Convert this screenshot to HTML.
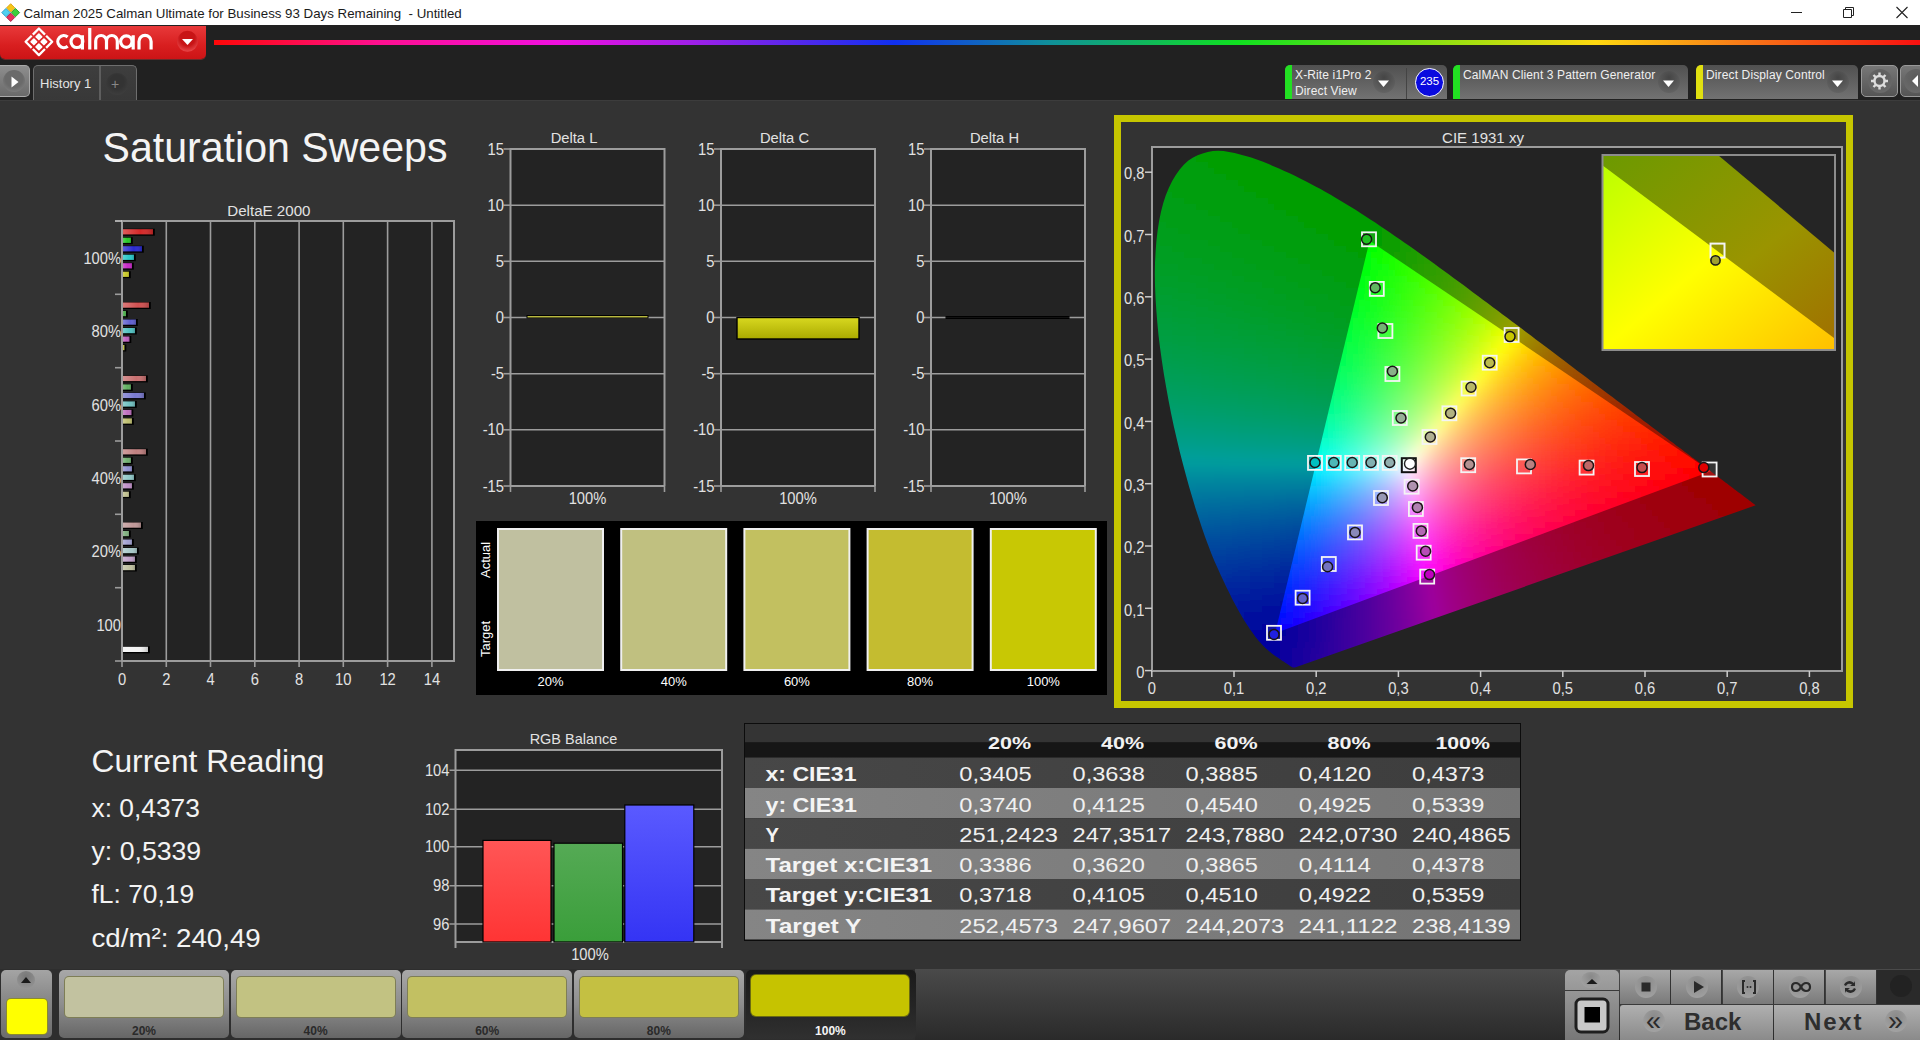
<!DOCTYPE html><html><head><meta charset="utf-8"><style>
*{margin:0;padding:0;box-sizing:border-box}
html,body{width:1920px;height:1040px;overflow:hidden;background:#333333;font-family:"Liberation Sans",sans-serif}
.a{position:absolute}
svg text{font-family:"Liberation Sans",sans-serif}
</style></head><body><div class="a" style="left:0;top:0;width:1920px;height:25px;background:#fff"></div><svg class="a" style="left:0;top:0" width="1920" height="25">
<g transform="translate(10.7,12.6) rotate(45)">
<rect x="-6.3" y="-6.3" width="5.9" height="5.9" fill="#f5c518" stroke="#d8a010" stroke-width="0.8"/>
<rect x="0.4" y="-6.3" width="5.9" height="5.9" fill="#3ccf3c" stroke="#1a9a1a" stroke-width="0.8"/>
<rect x="-6.3" y="0.4" width="5.9" height="5.9" fill="#50d0f0" stroke="#2090c0" stroke-width="0.8"/>
<rect x="0.4" y="0.4" width="5.9" height="5.9" fill="#e8305a" stroke="#a01840" stroke-width="0.8"/>
</g>
<text x="23.5" y="18" font-size="13.3" fill="#1b1b1b">Calman 2025 Calman Ultimate for Business 93 Days Remaining&#160; - Untitled</text>
<path d="M1791 12.5h11" stroke="#222" stroke-width="1"/>
<path d="M1843.5 9.5h8v8h-8z M1845.5 9.5v-2h8v8h-2" stroke="#222" stroke-width="1" fill="none"/>
<path d="M1896.5 7l11 11M1907.5 7l-11 11" stroke="#222" stroke-width="1.1"/>
</svg><div class="a" style="left:0;top:25px;width:1920px;height:75px;background:#212121"></div><div class="a" style="left:0;top:26px;width:206px;height:33px;border-radius:0 0 5px 5px;background:linear-gradient(#e8393a,#d81e1f 60%,#cc1416);box-shadow:0 1px 0 #6a2a2a"></div><svg class="a" style="left:0;top:25px" width="220" height="36"><g transform="translate(38.9,16.80) rotate(45)"><path d="M-0.80 -9.40H-9.40V-0.80 M0.80 -9.40H9.40V-0.80 M-0.80 9.40H-9.40V0.80 M0.80 9.40H9.40V0.80" fill="none" stroke="#fff" stroke-width="2.3" stroke-linejoin="round"/><rect x="-6.30" y="-6.30" width="5.50" height="5.50" rx="0.8" fill="#fff"/><rect x="-6.30" y="0.80" width="5.50" height="5.50" rx="0.8" fill="#fff"/><rect x="0.80" y="-6.30" width="5.50" height="5.50" rx="0.8" fill="#fff"/><rect x="0.80" y="0.80" width="5.50" height="5.50" rx="0.8" fill="#fff"/></g><path d="M67.66 12.00A6.00 6.00 0 1 0 67.66 21.20M76.90 16.60m-5.9 0a5.9 5.9 0 1 0 11.8 0a5.9 5.9 0 1 0 -11.8 0M82.4 10.30V24.40M89.75 3V24.40M95.7 24.40V15.90A5.4 5.4 0 0 1 106.5 15.90V24.40M106.5 15.90A5.4 5.4 0 0 1 117.3 15.90V24.40M126.30 16.60m-5.7 0a5.7 5.7 0 1 0 11.4 0a5.7 5.7 0 1 0 -11.4 0M133.2 10.30V24.40M139 24.40V16.45A6.05 6.05 0 0 1 151.1 16.45V24.40" fill="none" stroke="#fff" stroke-width="3.2"/>
<defs><radialGradient id="ddg" cx="50%" cy="35%" r="65%"><stop offset="0.55" stop-color="#c81416"/><stop offset="1" stop-color="#e8484a"/></radialGradient></defs><circle cx="187.5" cy="16.3" r="10.5" fill="url(#ddg)"/>
<path d="M182 14h11l-5.5 6z" fill="#fff"/>
</svg><div class="a" style="left:214px;top:39.5px;width:1706px;height:5px;background:linear-gradient(90deg,#ff0808 0%,#ff1090 9.7%,#f010e0 20.2%,#a020e8 28%,#1030f0 39.9%,#10909a 49%,#10e020 60%,#a0e010 73.2%,#ffd810 81%,#f88018 89%,#f81010 100%)"></div><div class="a" style="left:0;top:65px;width:30px;height:32px;border-radius:0 5px 5px 0;background:linear-gradient(#8e8e8e,#6a6a6a);border:1.5px solid #aaa;border-left:none"></div><div class="a" style="left:3px;top:70px;width:22px;height:22px;border-radius:50%;background:radial-gradient(circle at 50% 40%,#6a6a6a 50%,#8a8a8a)"></div><svg class="a" style="left:0;top:60px" width="40" height="40"><path d="M11.5 16.5v11l7-5.5z" fill="#fff"/></svg><div class="a" style="left:33px;top:65px;width:104px;height:35px;border-radius:5px 5px 0 0;background:linear-gradient(#3e3e3e,#383838);border:1.5px solid #6e6e6e;border-bottom:none"></div><div class="a" style="left:98.5px;top:66px;width:2px;height:34px;background:#5e5e5e"></div><div class="a" style="left:106px;top:73px;width:22px;height:22px;border-radius:50%;background:radial-gradient(circle at 50% 40%,#333 40%,#444)"></div><div class="a" style="left:40px;top:75.5px;font-size:13px;color:#e4e4e4">History 1</div><div class="a" style="left:111px;top:76px;font-size:14px;color:#888">+</div><div class="a" style="left:1285px;top:65px;width:162px;height:34px;border-radius:5px 5px 0 0;background:linear-gradient(#505050,#727272);overflow:hidden"><div class="a" style="left:0;top:0;width:7px;height:34px;background:#22e022;border-radius:4px 0 0 0"></div></div><div class="a" style="left:1295px;top:67.5px;font-size:12px;color:#f0f0f0;white-space:nowrap;letter-spacing:0.13px">X-Rite i1Pro 2</div><div class="a" style="left:1295px;top:84.0px;font-size:12px;color:#f0f0f0;white-space:nowrap;letter-spacing:0.13px">Direct View</div><div class="a" style="left:1373px;top:71px;width:22px;height:22px;border-radius:50%;background:radial-gradient(circle at 50% 30%,#454545,#6a6a6a)"></div><svg class="a" style="left:1374px;top:60px" width="20" height="40"><path d="M4 20.5h11l-5.5 6.5z" fill="#fff"/></svg><div class="a" style="left:1406px;top:68px;width:1px;height:31px;background:#444"></div><div class="a" style="left:1415px;top:68px;width:29px;height:29px;border-radius:50%;background:#0a0adf;border:1.5px solid #fff"></div><div class="a" style="left:1415px;top:75px;width:29px;text-align:center;font-size:11.5px;color:#fff">235</div><div class="a" style="left:1453px;top:65px;width:235px;height:34px;border-radius:5px 5px 0 0;background:linear-gradient(#505050,#727272);overflow:hidden"><div class="a" style="left:0;top:0;width:7px;height:34px;background:#22e022;border-radius:4px 0 0 0"></div></div><div class="a" style="left:1463px;top:67.5px;font-size:12px;color:#f0f0f0;white-space:nowrap;letter-spacing:0.13px">CalMAN Client 3 Pattern Generator</div><div class="a" style="left:1658px;top:71px;width:22px;height:22px;border-radius:50%;background:radial-gradient(circle at 50% 30%,#454545,#6a6a6a)"></div><svg class="a" style="left:1659px;top:60px" width="20" height="40"><path d="M4 20.5h11l-5.5 6.5z" fill="#fff"/></svg><div class="a" style="left:1696px;top:65px;width:162px;height:34px;border-radius:5px 5px 0 0;background:linear-gradient(#505050,#727272);overflow:hidden"><div class="a" style="left:0;top:0;width:7px;height:34px;background:#e0e010;border-radius:4px 0 0 0"></div></div><div class="a" style="left:1706px;top:67.5px;font-size:12px;color:#f0f0f0;white-space:nowrap;letter-spacing:0.13px">Direct Display Control</div><div class="a" style="left:1827px;top:71px;width:22px;height:22px;border-radius:50%;background:radial-gradient(circle at 50% 30%,#454545,#6a6a6a)"></div><svg class="a" style="left:1828px;top:60px" width="20" height="40"><path d="M4 20.5h11l-5.5 6.5z" fill="#fff"/></svg><div class="a" style="left:1861px;top:65px;width:37px;height:32px;border-radius:5px;background:linear-gradient(#777,#555);border:1px solid #999"></div><div class="a" style="left:1868px;top:69px;width:24px;height:24px;border-radius:50%;background:radial-gradient(circle at 50% 35%,#5a5a5a,#6e6e6e)"></div><svg class="a" style="left:1861px;top:65px" width="37" height="32"><g transform="translate(18.5,16)" fill="none" stroke="#ddd" stroke-width="2.4">
<circle r="5"/><path d="M0 -8.5v3M0 5.5v3M-8.5 0h3M5.5 0h3M-6 -6l2.1 2.1M3.9 3.9l2.1 2.1M-6 6l2.1 -2.1M3.9 -3.9l2.1 -2.1"/></g></svg><div class="a" style="left:1900px;top:65px;width:30px;height:32px;border-radius:5px;background:linear-gradient(#777,#555);border:1px solid #999"></div><div class="a" style="left:1904px;top:69px;width:24px;height:24px;border-radius:50%;background:radial-gradient(circle at 50% 35%,#5a5a5a,#6e6e6e)"></div><svg class="a" style="left:1900px;top:65px" width="20" height="32"><path d="M18 10v12l-6-6z" fill="#fff"/></svg><div class="a" style="left:0;top:100px;width:1920px;height:1px;background:#3c3c3c"></div><svg class="a" style="left:0;top:100px" width="480" height="90"><text x="102.5" y="62.3" font-size="43" fill="#f4f4f4" textLength="345" lengthAdjust="spacingAndGlyphs">Saturation Sweeps</text></svg><svg class="a" style="left:0;top:700px" width="400" height="260"><text x="91.5" y="72" font-size="30.5" fill="#f4f4f4" textLength="233" lengthAdjust="spacingAndGlyphs">Current Reading</text><text x="91.5" y="116.7" font-size="26.5" fill="#f4f4f4" textLength="108.4" lengthAdjust="spacingAndGlyphs">x: 0,4373</text><text x="91.5" y="159.9" font-size="26.5" fill="#f4f4f4" textLength="109.7" lengthAdjust="spacingAndGlyphs">y: 0,5339</text><text x="91.5" y="203.0" font-size="26.5" fill="#f4f4f4" textLength="102.7" lengthAdjust="spacingAndGlyphs">fL: 70,19</text><text x="91.5" y="246.6" font-size="26.5" fill="#f4f4f4" textLength="169.2" lengthAdjust="spacingAndGlyphs">cd/m&#178;: 240,49</text></svg><svg class="a" style="left:0;top:0" width="1920" height="1040"><rect x="122" y="221" width="332" height="440" fill="#232323"/><path d="M166.3 221V661" stroke="#9c9c9c" stroke-width="1.6"/><path d="M210.5 221V661" stroke="#9c9c9c" stroke-width="1.6"/><path d="M254.8 221V661" stroke="#9c9c9c" stroke-width="1.6"/><path d="M299.1 221V661" stroke="#9c9c9c" stroke-width="1.6"/><path d="M343.3 221V661" stroke="#9c9c9c" stroke-width="1.6"/><path d="M387.6 221V661" stroke="#9c9c9c" stroke-width="1.6"/><path d="M431.9 221V661" stroke="#9c9c9c" stroke-width="1.6"/><defs><linearGradient id="bsh" x1="0" y1="0" x2="1" y2="0"><stop offset="0" stop-color="#fff" stop-opacity="0.25"/><stop offset="0.6" stop-color="#fff" stop-opacity="0"/><stop offset="1" stop-color="#000" stop-opacity="0.2"/></linearGradient></defs><rect x="122" y="228.7" width="32.8" height="7" fill="#000"/><rect x="122" y="229.2" width="31.0" height="5.2" fill="#d42828"/><rect x="122" y="229.2" width="31.0" height="5.2" fill="url(#bsh)"/><rect x="122" y="237.2" width="10.8" height="7" fill="#000"/><rect x="122" y="237.7" width="9.0" height="5.2" fill="#28c828"/><rect x="122" y="237.7" width="9.0" height="5.2" fill="url(#bsh)"/><rect x="122" y="245.7" width="21.8" height="7" fill="#000"/><rect x="122" y="246.2" width="20.0" height="5.2" fill="#2a2ad0"/><rect x="122" y="246.2" width="20.0" height="5.2" fill="url(#bsh)"/><rect x="122" y="254.2" width="13.8" height="7" fill="#000"/><rect x="122" y="254.7" width="12.0" height="5.2" fill="#28c8c8"/><rect x="122" y="254.7" width="12.0" height="5.2" fill="url(#bsh)"/><rect x="122" y="262.7" width="11.8" height="7" fill="#000"/><rect x="122" y="263.2" width="10.0" height="5.2" fill="#c828c8"/><rect x="122" y="263.2" width="10.0" height="5.2" fill="url(#bsh)"/><rect x="122" y="271.2" width="8.8" height="7" fill="#000"/><rect x="122" y="271.7" width="7.0" height="5.2" fill="#c8c828"/><rect x="122" y="271.7" width="7.0" height="5.2" fill="url(#bsh)"/><rect x="122" y="302.0" width="28.8" height="7" fill="#000"/><rect x="122" y="302.5" width="27.0" height="5.2" fill="#d05050"/><rect x="122" y="302.5" width="27.0" height="5.2" fill="url(#bsh)"/><rect x="122" y="310.5" width="5.8" height="7" fill="#000"/><rect x="122" y="311.0" width="4.0" height="5.2" fill="#50b050"/><rect x="122" y="311.0" width="4.0" height="5.2" fill="url(#bsh)"/><rect x="122" y="319.0" width="15.8" height="7" fill="#000"/><rect x="122" y="319.5" width="14.0" height="5.2" fill="#6060d0"/><rect x="122" y="319.5" width="14.0" height="5.2" fill="url(#bsh)"/><rect x="122" y="327.5" width="14.8" height="7" fill="#000"/><rect x="122" y="328.0" width="13.0" height="5.2" fill="#50c0c0"/><rect x="122" y="328.0" width="13.0" height="5.2" fill="url(#bsh)"/><rect x="122" y="336.0" width="9.3" height="7" fill="#000"/><rect x="122" y="336.5" width="7.5" height="5.2" fill="#c060c0"/><rect x="122" y="336.5" width="7.5" height="5.2" fill="url(#bsh)"/><rect x="122" y="344.5" width="4.3" height="7" fill="#000"/><rect x="122" y="345.0" width="2.5" height="5.2" fill="#c0c050"/><rect x="122" y="345.0" width="2.5" height="5.2" fill="url(#bsh)"/><rect x="122" y="375.4" width="25.8" height="7" fill="#000"/><rect x="122" y="375.9" width="24.0" height="5.2" fill="#c87070"/><rect x="122" y="375.9" width="24.0" height="5.2" fill="url(#bsh)"/><rect x="122" y="383.9" width="10.8" height="7" fill="#000"/><rect x="122" y="384.4" width="9.0" height="5.2" fill="#60b060"/><rect x="122" y="384.4" width="9.0" height="5.2" fill="url(#bsh)"/><rect x="122" y="392.4" width="23.8" height="7" fill="#000"/><rect x="122" y="392.9" width="22.0" height="5.2" fill="#7a7ad0"/><rect x="122" y="392.9" width="22.0" height="5.2" fill="url(#bsh)"/><rect x="122" y="400.9" width="14.8" height="7" fill="#000"/><rect x="122" y="401.4" width="13.0" height="5.2" fill="#70c0c0"/><rect x="122" y="401.4" width="13.0" height="5.2" fill="url(#bsh)"/><rect x="122" y="409.4" width="11.3" height="7" fill="#000"/><rect x="122" y="409.9" width="9.5" height="5.2" fill="#c070c0"/><rect x="122" y="409.9" width="9.5" height="5.2" fill="url(#bsh)"/><rect x="122" y="417.9" width="11.8" height="7" fill="#000"/><rect x="122" y="418.4" width="10.0" height="5.2" fill="#c0c070"/><rect x="122" y="418.4" width="10.0" height="5.2" fill="url(#bsh)"/><rect x="122" y="448.7" width="25.8" height="7" fill="#000"/><rect x="122" y="449.2" width="24.0" height="5.2" fill="#c08080"/><rect x="122" y="449.2" width="24.0" height="5.2" fill="url(#bsh)"/><rect x="122" y="457.2" width="10.8" height="7" fill="#000"/><rect x="122" y="457.7" width="9.0" height="5.2" fill="#70b070"/><rect x="122" y="457.7" width="9.0" height="5.2" fill="url(#bsh)"/><rect x="122" y="465.7" width="11.8" height="7" fill="#000"/><rect x="122" y="466.2" width="10.0" height="5.2" fill="#9090d0"/><rect x="122" y="466.2" width="10.0" height="5.2" fill="url(#bsh)"/><rect x="122" y="474.2" width="13.8" height="7" fill="#000"/><rect x="122" y="474.7" width="12.0" height="5.2" fill="#90c8c8"/><rect x="122" y="474.7" width="12.0" height="5.2" fill="url(#bsh)"/><rect x="122" y="482.7" width="11.8" height="7" fill="#000"/><rect x="122" y="483.2" width="10.0" height="5.2" fill="#c090c8"/><rect x="122" y="483.2" width="10.0" height="5.2" fill="url(#bsh)"/><rect x="122" y="491.2" width="8.8" height="7" fill="#000"/><rect x="122" y="491.7" width="7.0" height="5.2" fill="#c0c090"/><rect x="122" y="491.7" width="7.0" height="5.2" fill="url(#bsh)"/><rect x="122" y="522.0" width="20.8" height="7" fill="#000"/><rect x="122" y="522.5" width="19.0" height="5.2" fill="#c09898"/><rect x="122" y="522.5" width="19.0" height="5.2" fill="url(#bsh)"/><rect x="122" y="530.5" width="8.8" height="7" fill="#000"/><rect x="122" y="531.0" width="7.0" height="5.2" fill="#80b080"/><rect x="122" y="531.0" width="7.0" height="5.2" fill="url(#bsh)"/><rect x="122" y="539.0" width="11.8" height="7" fill="#000"/><rect x="122" y="539.5" width="10.0" height="5.2" fill="#a0a0d0"/><rect x="122" y="539.5" width="10.0" height="5.2" fill="url(#bsh)"/><rect x="122" y="547.5" width="16.8" height="7" fill="#000"/><rect x="122" y="548.0" width="15.0" height="5.2" fill="#a8c8c8"/><rect x="122" y="548.0" width="15.0" height="5.2" fill="url(#bsh)"/><rect x="122" y="556.0" width="14.8" height="7" fill="#000"/><rect x="122" y="556.5" width="13.0" height="5.2" fill="#c0a0c8"/><rect x="122" y="556.5" width="13.0" height="5.2" fill="url(#bsh)"/><rect x="122" y="564.5" width="14.8" height="7" fill="#000"/><rect x="122" y="565.0" width="13.0" height="5.2" fill="#c0c0a0"/><rect x="122" y="565.0" width="13.0" height="5.2" fill="url(#bsh)"/><rect x="122" y="646.3" width="27.8" height="7" fill="#000"/><rect x="122" y="646.8" width="26.0" height="5.2" fill="#f4f4f4"/><rect x="122" y="646.8" width="26.0" height="5.2" fill="url(#bsh)"/><path d="M122 221V661H454V221Z" stroke="#9c9c9c" stroke-width="2" fill="none"/><path d="M115 221.0H122" stroke="#c8c8c8" stroke-width="1.6"/><path d="M115 294.3H122" stroke="#9c9c9c" stroke-width="1.6"/><path d="M115 367.7H122" stroke="#9c9c9c" stroke-width="1.6"/><path d="M115 441.0H122" stroke="#9c9c9c" stroke-width="1.6"/><path d="M115 514.3H122" stroke="#9c9c9c" stroke-width="1.6"/><path d="M115 587.7H122" stroke="#9c9c9c" stroke-width="1.6"/><path d="M115 661.0H122" stroke="#9c9c9c" stroke-width="1.6"/><path d="M122.0 661V667" stroke="#9c9c9c" stroke-width="1.6"/><text x="122.0" y="684.5" font-size="16" fill="#e2e2e2" text-anchor="middle" textLength="8.2" lengthAdjust="spacingAndGlyphs">0</text><path d="M166.3 661V667" stroke="#9c9c9c" stroke-width="1.6"/><text x="166.3" y="684.5" font-size="16" fill="#e2e2e2" text-anchor="middle" textLength="8.2" lengthAdjust="spacingAndGlyphs">2</text><path d="M210.5 661V667" stroke="#9c9c9c" stroke-width="1.6"/><text x="210.5" y="684.5" font-size="16" fill="#e2e2e2" text-anchor="middle" textLength="8.2" lengthAdjust="spacingAndGlyphs">4</text><path d="M254.8 661V667" stroke="#9c9c9c" stroke-width="1.6"/><text x="254.8" y="684.5" font-size="16" fill="#e2e2e2" text-anchor="middle" textLength="8.2" lengthAdjust="spacingAndGlyphs">6</text><path d="M299.1 661V667" stroke="#9c9c9c" stroke-width="1.6"/><text x="299.1" y="684.5" font-size="16" fill="#e2e2e2" text-anchor="middle" textLength="8.2" lengthAdjust="spacingAndGlyphs">8</text><path d="M343.3 661V667" stroke="#9c9c9c" stroke-width="1.6"/><text x="343.3" y="684.5" font-size="16" fill="#e2e2e2" text-anchor="middle" textLength="16.4" lengthAdjust="spacingAndGlyphs">10</text><path d="M387.6 661V667" stroke="#9c9c9c" stroke-width="1.6"/><text x="387.6" y="684.5" font-size="16" fill="#e2e2e2" text-anchor="middle" textLength="16.4" lengthAdjust="spacingAndGlyphs">12</text><path d="M431.9 661V667" stroke="#9c9c9c" stroke-width="1.6"/><text x="431.9" y="684.5" font-size="16" fill="#e2e2e2" text-anchor="middle" textLength="16.4" lengthAdjust="spacingAndGlyphs">14</text><text x="268.9" y="215.5" font-size="15.5" fill="#e2e2e2" text-anchor="middle" textLength="83.2" lengthAdjust="spacingAndGlyphs">DeltaE 2000</text><text x="121.0" y="263.8" font-size="16" fill="#e2e2e2" text-anchor="end" textLength="37.6" lengthAdjust="spacingAndGlyphs">100%</text><text x="121.0" y="337.1" font-size="16" fill="#e2e2e2" text-anchor="end" textLength="29.5" lengthAdjust="spacingAndGlyphs">80%</text><text x="121.0" y="410.5" font-size="16" fill="#e2e2e2" text-anchor="end" textLength="29.5" lengthAdjust="spacingAndGlyphs">60%</text><text x="121.0" y="483.8" font-size="16" fill="#e2e2e2" text-anchor="end" textLength="29.5" lengthAdjust="spacingAndGlyphs">40%</text><text x="121.0" y="557.1" font-size="16" fill="#e2e2e2" text-anchor="end" textLength="29.5" lengthAdjust="spacingAndGlyphs">20%</text><text x="121.0" y="630.5" font-size="16" fill="#e2e2e2" text-anchor="end" textLength="24.6" lengthAdjust="spacingAndGlyphs">100</text><rect x="510.5" y="149" width="154" height="337" fill="#232323"/><path d="M510.5 205.2H664.5" stroke="#9c9c9c" stroke-width="1.6"/><path d="M510.5 261.3H664.5" stroke="#9c9c9c" stroke-width="1.6"/><path d="M510.5 317.5H664.5" stroke="#9c9c9c" stroke-width="1.6"/><path d="M510.5 373.7H664.5" stroke="#9c9c9c" stroke-width="1.6"/><path d="M510.5 429.8H664.5" stroke="#9c9c9c" stroke-width="1.6"/><path d="M510.5 486V149H664.5V486" stroke="#9c9c9c" stroke-width="2" fill="none"/><path d="M510.5 486H664.5" stroke="#9c9c9c" stroke-width="2"/><path d="M503.5 149.0H510.5" stroke="#9c9c9c" stroke-width="1.6"/><text x="504.0" y="154.6" font-size="16" fill="#e2e2e2" text-anchor="end" textLength="16.4" lengthAdjust="spacingAndGlyphs">15</text><path d="M503.5 205.2H510.5" stroke="#9c9c9c" stroke-width="1.6"/><text x="504.0" y="210.8" font-size="16" fill="#e2e2e2" text-anchor="end" textLength="16.4" lengthAdjust="spacingAndGlyphs">10</text><path d="M503.5 261.3H510.5" stroke="#9c9c9c" stroke-width="1.6"/><text x="504.0" y="266.9" font-size="16" fill="#e2e2e2" text-anchor="end" textLength="8.2" lengthAdjust="spacingAndGlyphs">5</text><path d="M503.5 317.5H510.5" stroke="#9c9c9c" stroke-width="1.6"/><text x="504.0" y="323.1" font-size="16" fill="#e2e2e2" text-anchor="end" textLength="8.2" lengthAdjust="spacingAndGlyphs">0</text><path d="M503.5 373.7H510.5" stroke="#9c9c9c" stroke-width="1.6"/><text x="504.0" y="379.3" font-size="16" fill="#e2e2e2" text-anchor="end" textLength="13.1" lengthAdjust="spacingAndGlyphs">-5</text><path d="M503.5 429.8H510.5" stroke="#9c9c9c" stroke-width="1.6"/><text x="504.0" y="435.4" font-size="16" fill="#e2e2e2" text-anchor="end" textLength="21.3" lengthAdjust="spacingAndGlyphs">-10</text><path d="M503.5 486.0H510.5" stroke="#9c9c9c" stroke-width="1.6"/><text x="504.0" y="491.6" font-size="16" fill="#e2e2e2" text-anchor="end" textLength="21.3" lengthAdjust="spacingAndGlyphs">-15</text><path d="M510.5 486V492M664.5 486V492" stroke="#9c9c9c" stroke-width="1.6"/><text x="574.0" y="143.0" font-size="15.5" fill="#e2e2e2" text-anchor="middle" textLength="46.7" lengthAdjust="spacingAndGlyphs">Delta L</text><text x="587.5" y="503.5" font-size="16" fill="#e2e2e2" text-anchor="middle" textLength="37.6" lengthAdjust="spacingAndGlyphs">100%</text><rect x="721.0" y="149" width="154" height="337" fill="#232323"/><path d="M721.0 205.2H875.0" stroke="#9c9c9c" stroke-width="1.6"/><path d="M721.0 261.3H875.0" stroke="#9c9c9c" stroke-width="1.6"/><path d="M721.0 317.5H875.0" stroke="#9c9c9c" stroke-width="1.6"/><path d="M721.0 373.7H875.0" stroke="#9c9c9c" stroke-width="1.6"/><path d="M721.0 429.8H875.0" stroke="#9c9c9c" stroke-width="1.6"/><path d="M721.0 486V149H875.0V486" stroke="#9c9c9c" stroke-width="2" fill="none"/><path d="M721.0 486H875.0" stroke="#9c9c9c" stroke-width="2"/><path d="M714.0 149.0H721.0" stroke="#9c9c9c" stroke-width="1.6"/><text x="714.5" y="154.6" font-size="16" fill="#e2e2e2" text-anchor="end" textLength="16.4" lengthAdjust="spacingAndGlyphs">15</text><path d="M714.0 205.2H721.0" stroke="#9c9c9c" stroke-width="1.6"/><text x="714.5" y="210.8" font-size="16" fill="#e2e2e2" text-anchor="end" textLength="16.4" lengthAdjust="spacingAndGlyphs">10</text><path d="M714.0 261.3H721.0" stroke="#9c9c9c" stroke-width="1.6"/><text x="714.5" y="266.9" font-size="16" fill="#e2e2e2" text-anchor="end" textLength="8.2" lengthAdjust="spacingAndGlyphs">5</text><path d="M714.0 317.5H721.0" stroke="#9c9c9c" stroke-width="1.6"/><text x="714.5" y="323.1" font-size="16" fill="#e2e2e2" text-anchor="end" textLength="8.2" lengthAdjust="spacingAndGlyphs">0</text><path d="M714.0 373.7H721.0" stroke="#9c9c9c" stroke-width="1.6"/><text x="714.5" y="379.3" font-size="16" fill="#e2e2e2" text-anchor="end" textLength="13.1" lengthAdjust="spacingAndGlyphs">-5</text><path d="M714.0 429.8H721.0" stroke="#9c9c9c" stroke-width="1.6"/><text x="714.5" y="435.4" font-size="16" fill="#e2e2e2" text-anchor="end" textLength="21.3" lengthAdjust="spacingAndGlyphs">-10</text><path d="M714.0 486.0H721.0" stroke="#9c9c9c" stroke-width="1.6"/><text x="714.5" y="491.6" font-size="16" fill="#e2e2e2" text-anchor="end" textLength="21.3" lengthAdjust="spacingAndGlyphs">-15</text><path d="M721.0 486V492M875.0 486V492" stroke="#9c9c9c" stroke-width="1.6"/><text x="784.5" y="143.0" font-size="15.5" fill="#e2e2e2" text-anchor="middle" textLength="49.1" lengthAdjust="spacingAndGlyphs">Delta C</text><text x="798.0" y="503.5" font-size="16" fill="#e2e2e2" text-anchor="middle" textLength="37.6" lengthAdjust="spacingAndGlyphs">100%</text><rect x="931.0" y="149" width="154" height="337" fill="#232323"/><path d="M931.0 205.2H1085.0" stroke="#9c9c9c" stroke-width="1.6"/><path d="M931.0 261.3H1085.0" stroke="#9c9c9c" stroke-width="1.6"/><path d="M931.0 317.5H1085.0" stroke="#9c9c9c" stroke-width="1.6"/><path d="M931.0 373.7H1085.0" stroke="#9c9c9c" stroke-width="1.6"/><path d="M931.0 429.8H1085.0" stroke="#9c9c9c" stroke-width="1.6"/><path d="M931.0 486V149H1085.0V486" stroke="#9c9c9c" stroke-width="2" fill="none"/><path d="M931.0 486H1085.0" stroke="#9c9c9c" stroke-width="2"/><path d="M924.0 149.0H931.0" stroke="#9c9c9c" stroke-width="1.6"/><text x="924.5" y="154.6" font-size="16" fill="#e2e2e2" text-anchor="end" textLength="16.4" lengthAdjust="spacingAndGlyphs">15</text><path d="M924.0 205.2H931.0" stroke="#9c9c9c" stroke-width="1.6"/><text x="924.5" y="210.8" font-size="16" fill="#e2e2e2" text-anchor="end" textLength="16.4" lengthAdjust="spacingAndGlyphs">10</text><path d="M924.0 261.3H931.0" stroke="#9c9c9c" stroke-width="1.6"/><text x="924.5" y="266.9" font-size="16" fill="#e2e2e2" text-anchor="end" textLength="8.2" lengthAdjust="spacingAndGlyphs">5</text><path d="M924.0 317.5H931.0" stroke="#9c9c9c" stroke-width="1.6"/><text x="924.5" y="323.1" font-size="16" fill="#e2e2e2" text-anchor="end" textLength="8.2" lengthAdjust="spacingAndGlyphs">0</text><path d="M924.0 373.7H931.0" stroke="#9c9c9c" stroke-width="1.6"/><text x="924.5" y="379.3" font-size="16" fill="#e2e2e2" text-anchor="end" textLength="13.1" lengthAdjust="spacingAndGlyphs">-5</text><path d="M924.0 429.8H931.0" stroke="#9c9c9c" stroke-width="1.6"/><text x="924.5" y="435.4" font-size="16" fill="#e2e2e2" text-anchor="end" textLength="21.3" lengthAdjust="spacingAndGlyphs">-10</text><path d="M924.0 486.0H931.0" stroke="#9c9c9c" stroke-width="1.6"/><text x="924.5" y="491.6" font-size="16" fill="#e2e2e2" text-anchor="end" textLength="21.3" lengthAdjust="spacingAndGlyphs">-15</text><path d="M931.0 486V492M1085.0 486V492" stroke="#9c9c9c" stroke-width="1.6"/><text x="994.5" y="143.0" font-size="15.5" fill="#e2e2e2" text-anchor="middle" textLength="49.1" lengthAdjust="spacingAndGlyphs">Delta H</text><text x="1008.0" y="503.5" font-size="16" fill="#e2e2e2" text-anchor="middle" textLength="37.6" lengthAdjust="spacingAndGlyphs">100%</text><rect x="527" y="315.5" width="121" height="2.5" fill="#b8b840" stroke="#000" stroke-width="1"/><defs><linearGradient id="gC" x1="0" y1="0" x2="0" y2="1"><stop offset="0" stop-color="#d8d820"/><stop offset="1" stop-color="#aaaa00"/></linearGradient></defs><rect x="737" y="317.5" width="122" height="21.5" fill="url(#gC)" stroke="#000" stroke-width="1.4"/><rect x="946" y="316.5" width="123" height="2" fill="#111" stroke="#000" stroke-width="1"/><rect x="476" y="521" width="631" height="174" fill="#000"/><rect x="498.0" y="529" width="105" height="141" fill="#c0c0a0" stroke="#f0f0f0" stroke-width="2"/><text x="550.5" y="686.0" font-size="13" fill="#fff" text-anchor="middle" >20%</text><rect x="621.2" y="529" width="105" height="141" fill="#c0c080" stroke="#f0f0f0" stroke-width="2"/><text x="673.7" y="686.0" font-size="13" fill="#fff" text-anchor="middle" >40%</text><rect x="744.4" y="529" width="105" height="141" fill="#c2c060" stroke="#f0f0f0" stroke-width="2"/><text x="796.9" y="686.0" font-size="13" fill="#fff" text-anchor="middle" >60%</text><rect x="867.6" y="529" width="105" height="141" fill="#c4bc30" stroke="#f0f0f0" stroke-width="2"/><text x="920.1" y="686.0" font-size="13" fill="#fff" text-anchor="middle" >80%</text><rect x="990.8" y="529" width="105" height="141" fill="#c8c804" stroke="#f0f0f0" stroke-width="2"/><text x="1043.3" y="686.0" font-size="13" fill="#fff" text-anchor="middle" >100%</text><text transform="translate(490,578) rotate(-90)" font-size="13" fill="#fff">Actual</text><text transform="translate(490,657) rotate(-90)" font-size="13" fill="#fff">Target</text><rect x="455.5" y="750" width="266.5" height="192" fill="#232323"/><path d="M449.5 770.3H722.0" stroke="#9c9c9c" stroke-width="1.6"/><text x="449.5" y="775.9" font-size="16" fill="#e2e2e2" text-anchor="end" textLength="24.6" lengthAdjust="spacingAndGlyphs">104</text><path d="M449.5 809.2H722.0" stroke="#9c9c9c" stroke-width="1.6"/><text x="449.5" y="814.8" font-size="16" fill="#e2e2e2" text-anchor="end" textLength="24.6" lengthAdjust="spacingAndGlyphs">102</text><path d="M449.5 846.8H722.0" stroke="#9c9c9c" stroke-width="1.6"/><text x="449.5" y="852.4" font-size="16" fill="#e2e2e2" text-anchor="end" textLength="24.6" lengthAdjust="spacingAndGlyphs">100</text><path d="M449.5 885.7H722.0" stroke="#9c9c9c" stroke-width="1.6"/><text x="449.5" y="891.3" font-size="16" fill="#e2e2e2" text-anchor="end" textLength="16.4" lengthAdjust="spacingAndGlyphs">98</text><path d="M449.5 924.0H722.0" stroke="#9c9c9c" stroke-width="1.6"/><text x="449.5" y="929.6" font-size="16" fill="#e2e2e2" text-anchor="end" textLength="16.4" lengthAdjust="spacingAndGlyphs">96</text><path d="M455.5 942V750H722.0V942" stroke="#9c9c9c" stroke-width="2" fill="none"/><path d="M455.5 942H722.0M455.5 942V948M722.0 942V948" stroke="#9c9c9c" stroke-width="2"/><defs><linearGradient id="gR" x1="0" y1="0" x2="0" y2="1"><stop offset="0" stop-color="#ff5656"/><stop offset="1" stop-color="#ff3434"/></linearGradient><linearGradient id="gG" x1="0" y1="0" x2="0" y2="1"><stop offset="0" stop-color="#55aa55"/><stop offset="1" stop-color="#3a9e3a"/></linearGradient><linearGradient id="gB" x1="0" y1="0" x2="0" y2="1"><stop offset="0" stop-color="#5a5aff"/><stop offset="1" stop-color="#3434f4"/></linearGradient></defs><rect x="483" y="840.4" width="68" height="101.6" fill="url(#gR)" stroke="#000" stroke-width="1.2"/><rect x="554" y="843.2" width="68.5" height="98.8" fill="url(#gG)" stroke="#000" stroke-width="1.2"/><rect x="624.8" y="805" width="69" height="137.0" fill="url(#gB)" stroke="#000" stroke-width="1.2"/><text x="573.5" y="744.0" font-size="15" fill="#e2e2e2" text-anchor="middle" textLength="87.7" lengthAdjust="spacingAndGlyphs">RGB Balance</text><text x="590.0" y="959.5" font-size="16" fill="#e2e2e2" text-anchor="middle" textLength="37.6" lengthAdjust="spacingAndGlyphs">100%</text><rect x="744" y="723" width="777" height="218" fill="#0c0c0c"/><rect x="745" y="724" width="775" height="18.5" fill="#343434"/><rect x="745" y="742.5" width="775" height="15" fill="#161616"/><defs><linearGradient id="rd" x1="0" x2="1"><stop offset="0" stop-color="#474747"/><stop offset="1" stop-color="#3d3d3d"/></linearGradient><linearGradient id="rl" x1="0" x2="1"><stop offset="0" stop-color="#858585"/><stop offset="1" stop-color="#747474"/></linearGradient></defs><rect x="745" y="757.5" width="775" height="30.5" fill="url(#rd)"/><rect x="745" y="788.0" width="775" height="30.3" fill="url(#rl)"/><rect x="745" y="818.3" width="775" height="30.4" fill="url(#rd)"/><rect x="745" y="848.7" width="775" height="30.3" fill="url(#rl)"/><rect x="745" y="879.0" width="775" height="30.4" fill="url(#rd)"/><rect x="745" y="909.4" width="775" height="30.1" fill="url(#rl)"/><text x="988.0" y="748.8" font-size="16" font-weight="bold" fill="#f2f2f2" textLength="43.0" lengthAdjust="spacingAndGlyphs">20%</text><text x="1101.0" y="748.8" font-size="16" font-weight="bold" fill="#f2f2f2" textLength="43.0" lengthAdjust="spacingAndGlyphs">40%</text><text x="1214.5" y="748.8" font-size="16" font-weight="bold" fill="#f2f2f2" textLength="43.0" lengthAdjust="spacingAndGlyphs">60%</text><text x="1327.6" y="748.8" font-size="16" font-weight="bold" fill="#f2f2f2" textLength="43.0" lengthAdjust="spacingAndGlyphs">80%</text><text x="1435.5" y="748.8" font-size="16" font-weight="bold" fill="#f2f2f2" textLength="54.3" lengthAdjust="spacingAndGlyphs">100%</text><text x="765.5" y="781.2" font-size="19.5" font-weight="bold" fill="#f4f4f4" textLength="91.0" lengthAdjust="spacingAndGlyphs">x: CIE31</text><text x="959.3" y="781.2" font-size="19.5" fill="#f0f0f0" textLength="72.3" lengthAdjust="spacingAndGlyphs">0,3405</text><text x="1072.5" y="781.2" font-size="19.5" fill="#f0f0f0" textLength="72.3" lengthAdjust="spacingAndGlyphs">0,3638</text><text x="1185.6" y="781.2" font-size="19.5" fill="#f0f0f0" textLength="72.3" lengthAdjust="spacingAndGlyphs">0,3885</text><text x="1298.8" y="781.2" font-size="19.5" fill="#f0f0f0" textLength="72.3" lengthAdjust="spacingAndGlyphs">0,4120</text><text x="1412.0" y="781.2" font-size="19.5" fill="#f0f0f0" textLength="72.3" lengthAdjust="spacingAndGlyphs">0,4373</text><text x="765.5" y="811.5" font-size="19.5" font-weight="bold" fill="#f4f4f4" textLength="91.5" lengthAdjust="spacingAndGlyphs">y: CIE31</text><text x="959.3" y="811.5" font-size="19.5" fill="#f0f0f0" textLength="72.3" lengthAdjust="spacingAndGlyphs">0,3740</text><text x="1072.5" y="811.5" font-size="19.5" fill="#f0f0f0" textLength="72.3" lengthAdjust="spacingAndGlyphs">0,4125</text><text x="1185.6" y="811.5" font-size="19.5" fill="#f0f0f0" textLength="72.3" lengthAdjust="spacingAndGlyphs">0,4540</text><text x="1298.8" y="811.5" font-size="19.5" fill="#f0f0f0" textLength="72.3" lengthAdjust="spacingAndGlyphs">0,4925</text><text x="1412.0" y="811.5" font-size="19.5" fill="#f0f0f0" textLength="72.3" lengthAdjust="spacingAndGlyphs">0,5339</text><text x="765.5" y="841.6" font-size="19.5" font-weight="bold" fill="#f4f4f4" textLength="13.5" lengthAdjust="spacingAndGlyphs">Y</text><text x="959.3" y="841.6" font-size="19.5" fill="#f0f0f0" textLength="98.7" lengthAdjust="spacingAndGlyphs">251,2423</text><text x="1072.5" y="841.6" font-size="19.5" fill="#f0f0f0" textLength="98.7" lengthAdjust="spacingAndGlyphs">247,3517</text><text x="1185.6" y="841.6" font-size="19.5" fill="#f0f0f0" textLength="98.7" lengthAdjust="spacingAndGlyphs">243,7880</text><text x="1298.8" y="841.6" font-size="19.5" fill="#f0f0f0" textLength="98.7" lengthAdjust="spacingAndGlyphs">242,0730</text><text x="1412.0" y="841.6" font-size="19.5" fill="#f0f0f0" textLength="98.7" lengthAdjust="spacingAndGlyphs">240,4865</text><text x="765.5" y="872.1" font-size="19.5" font-weight="bold" fill="#f4f4f4" textLength="166.7" lengthAdjust="spacingAndGlyphs">Target x:CIE31</text><text x="959.3" y="872.1" font-size="19.5" fill="#f0f0f0" textLength="72.3" lengthAdjust="spacingAndGlyphs">0,3386</text><text x="1072.5" y="872.1" font-size="19.5" fill="#f0f0f0" textLength="72.3" lengthAdjust="spacingAndGlyphs">0,3620</text><text x="1185.6" y="872.1" font-size="19.5" fill="#f0f0f0" textLength="72.3" lengthAdjust="spacingAndGlyphs">0,3865</text><text x="1298.8" y="872.1" font-size="19.5" fill="#f0f0f0" textLength="72.3" lengthAdjust="spacingAndGlyphs">0,4114</text><text x="1412.0" y="872.1" font-size="19.5" fill="#f0f0f0" textLength="72.3" lengthAdjust="spacingAndGlyphs">0,4378</text><text x="765.5" y="902.4" font-size="19.5" font-weight="bold" fill="#f4f4f4" textLength="166.7" lengthAdjust="spacingAndGlyphs">Target y:CIE31</text><text x="959.3" y="902.4" font-size="19.5" fill="#f0f0f0" textLength="72.3" lengthAdjust="spacingAndGlyphs">0,3718</text><text x="1072.5" y="902.4" font-size="19.5" fill="#f0f0f0" textLength="72.3" lengthAdjust="spacingAndGlyphs">0,4105</text><text x="1185.6" y="902.4" font-size="19.5" fill="#f0f0f0" textLength="72.3" lengthAdjust="spacingAndGlyphs">0,4510</text><text x="1298.8" y="902.4" font-size="19.5" fill="#f0f0f0" textLength="72.3" lengthAdjust="spacingAndGlyphs">0,4922</text><text x="1412.0" y="902.4" font-size="19.5" fill="#f0f0f0" textLength="72.3" lengthAdjust="spacingAndGlyphs">0,5359</text><text x="765.5" y="932.6" font-size="19.5" font-weight="bold" fill="#f4f4f4" textLength="96.0" lengthAdjust="spacingAndGlyphs">Target Y</text><text x="959.3" y="932.6" font-size="19.5" fill="#f0f0f0" textLength="98.7" lengthAdjust="spacingAndGlyphs">252,4573</text><text x="1072.5" y="932.6" font-size="19.5" fill="#f0f0f0" textLength="98.7" lengthAdjust="spacingAndGlyphs">247,9607</text><text x="1185.6" y="932.6" font-size="19.5" fill="#f0f0f0" textLength="98.7" lengthAdjust="spacingAndGlyphs">244,2073</text><text x="1298.8" y="932.6" font-size="19.5" fill="#f0f0f0" textLength="98.7" lengthAdjust="spacingAndGlyphs">241,1122</text><text x="1412.0" y="932.6" font-size="19.5" fill="#f0f0f0" textLength="98.7" lengthAdjust="spacingAndGlyphs">238,4139</text><rect x="1117.5" y="118.5" width="732" height="586" fill="#333" stroke="#c6c600" stroke-width="7"/><text x="1483.0" y="142.5" font-size="15.5" fill="#e2e2e2" text-anchor="middle" textLength="81.9" lengthAdjust="spacingAndGlyphs">CIE 1931 xy</text><rect x="1152" y="147" width="690" height="524" fill="#232323"/><defs><clipPath id="cl"><path d="M1294.9 667.5 L1292.7 667.4 L1292.6 667.4 L1292.5 667.3 L1292.3 667.2 L1292.1 667.2 L1292.0 667.1 L1291.8 667.0 L1291.6 666.9 L1291.4 666.8 L1291.3 666.7 L1291.1 666.6 L1290.9 666.4 L1290.6 666.3 L1290.4 666.2 L1290.1 666.0 L1289.9 665.8 L1289.6 665.6 L1289.3 665.4 L1289.0 665.2 L1288.7 665.0 L1288.4 664.8 L1288.0 664.6 L1287.7 664.3 L1287.3 664.1 L1286.9 663.8 L1286.5 663.5 L1286.1 663.3 L1285.7 663.0 L1285.2 662.7 L1284.7 662.3 L1284.2 662.0 L1283.7 661.6 L1283.1 661.3 L1282.5 660.9 L1281.9 660.5 L1281.2 660.0 L1280.5 659.6 L1279.8 659.1 L1279.1 658.6 L1278.4 658.1 L1277.6 657.6 L1276.8 657.1 L1275.9 656.5 L1275.0 655.8 L1274.1 655.2 L1273.2 654.5 L1272.2 653.7 L1271.2 653.0 L1270.2 652.1 L1269.1 651.2 L1268.0 650.3 L1266.9 649.3 L1265.7 648.3 L1264.5 647.1 L1263.2 645.7 L1261.8 644.2 L1260.3 642.6 L1258.8 640.9 L1257.2 639.0 L1255.5 636.9 L1253.8 634.6 L1252.0 632.1 L1250.1 629.5 L1248.2 626.6 L1246.2 623.6 L1244.1 620.2 L1241.9 616.5 L1239.6 612.5 L1237.2 608.3 L1234.8 603.7 L1232.2 598.9 L1229.6 593.6 L1226.8 587.9 L1224.0 581.9 L1220.9 575.4 L1217.8 568.6 L1214.6 561.4 L1211.4 553.7 L1208.3 545.6 L1205.1 536.9 L1201.9 527.7 L1198.7 518.1 L1195.4 508.1 L1192.3 497.6 L1189.1 486.8 L1186.0 475.5 L1182.8 463.6 L1179.7 451.4 L1176.7 438.8 L1173.8 426.2 L1171.1 413.5 L1168.6 400.7 L1166.2 387.5 L1163.9 374.3 L1161.9 361.0 L1160.1 348.0 L1158.5 335.2 L1157.3 322.6 L1156.3 310.1 L1155.5 297.7 L1155.0 285.6 L1154.8 273.9 L1155.0 262.7 L1155.6 251.8 L1156.4 241.1 L1157.6 230.8 L1159.1 221.0 L1161.0 211.8 L1163.2 203.2 L1165.8 195.3 L1168.8 187.9 L1172.2 181.1 L1175.8 174.9 L1179.7 169.5 L1183.8 164.7 L1188.1 160.8 L1192.7 157.7 L1197.6 155.2 L1202.6 153.4 L1207.7 152.1 L1212.9 151.1 L1218.1 150.8 L1223.5 151.1 L1229.0 151.9 L1234.6 153.0 L1240.1 154.4 L1245.7 155.9 L1251.2 157.5 L1256.8 159.4 L1262.4 161.6 L1268.0 163.8 L1273.5 166.2 L1279.0 168.5 L1284.3 170.9 L1289.6 173.3 L1294.9 175.8 L1300.1 178.4 L1305.2 181.0 L1310.4 183.7 L1315.5 186.4 L1320.5 189.1 L1325.6 191.9 L1330.6 194.8 L1335.5 197.7 L1340.5 200.7 L1345.5 203.7 L1350.5 206.7 L1355.5 209.8 L1360.4 213.0 L1365.4 216.2 L1370.3 219.4 L1375.2 222.6 L1380.1 225.9 L1385.0 229.2 L1389.9 232.5 L1394.8 235.9 L1399.7 239.3 L1404.6 242.7 L1409.5 246.1 L1414.4 249.6 L1419.3 253.1 L1424.2 256.6 L1429.1 260.1 L1434.0 263.6 L1438.9 267.2 L1443.8 270.8 L1448.7 274.3 L1453.6 277.9 L1458.5 281.5 L1463.4 285.1 L1468.3 288.8 L1473.1 292.4 L1478.0 296.0 L1482.9 299.7 L1487.8 303.3 L1492.6 306.9 L1497.5 310.5 L1502.3 314.2 L1507.2 317.8 L1512.0 321.4 L1516.9 325.0 L1521.6 328.6 L1526.4 332.2 L1531.2 335.8 L1535.9 339.4 L1540.7 343.0 L1545.4 346.5 L1550.1 350.0 L1554.7 353.6 L1559.3 357.1 L1564.0 360.6 L1568.5 364.0 L1573.1 367.4 L1577.6 370.9 L1582.1 374.2 L1586.5 377.6 L1590.9 380.9 L1595.3 384.2 L1599.6 387.5 L1603.9 390.7 L1608.2 393.9 L1612.4 397.1 L1616.5 400.2 L1620.6 403.3 L1624.6 406.3 L1628.6 409.3 L1632.5 412.3 L1636.3 415.2 L1640.1 418.1 L1643.8 420.9 L1647.4 423.6 L1650.9 426.2 L1654.3 428.8 L1657.6 431.3 L1660.9 433.8 L1664.1 436.2 L1667.2 438.5 L1670.3 440.9 L1673.3 443.1 L1676.2 445.4 L1679.1 447.5 L1681.9 449.6 L1684.6 451.7 L1687.2 453.6 L1689.8 455.5 L1692.2 457.4 L1694.6 459.1 L1696.9 460.8 L1699.1 462.5 L1701.2 464.1 L1703.3 465.7 L1705.3 467.2 L1707.2 468.7 L1709.1 470.1 L1710.8 471.4 L1712.6 472.7 L1714.2 474.0 L1715.8 475.2 L1717.3 476.3 L1718.8 477.5 L1720.2 478.5 L1721.6 479.6 L1722.9 480.5 L1724.2 481.5 L1725.4 482.4 L1726.6 483.3 L1727.7 484.1 L1728.8 485.0 L1729.8 485.8 L1730.8 486.5 L1731.8 487.3 L1732.8 488.0 L1733.7 488.7 L1734.6 489.4 L1735.5 490.0 L1736.3 490.7 L1737.1 491.3 L1737.9 491.9 L1738.7 492.5 L1739.5 493.1 L1740.2 493.6 L1740.9 494.1 L1741.5 494.6 L1742.2 495.1 L1742.8 495.6 L1743.4 496.1 L1744.0 496.5 L1744.6 496.9 L1745.1 497.3 L1745.6 497.7 L1746.1 498.0 L1746.6 498.4 L1747.0 498.7 L1747.4 499.0 L1747.8 499.3 L1748.2 499.6 L1748.6 499.9 L1748.9 500.2 L1749.3 500.4 L1749.6 500.7 L1749.9 500.9 L1750.2 501.1 L1750.5 501.3 L1750.7 501.5 L1751.0 501.7 L1751.2 501.9 L1751.4 502.1 L1751.7 502.2 L1751.9 502.4 L1752.0 502.5 L1752.2 502.7 L1752.4 502.8 L1752.5 502.9 L1752.6 503.0 L1752.8 503.1 L1752.9 503.2 L1753.0 503.3 L1753.2 503.4 L1753.3 503.5 L1753.4 503.6 L1753.5 503.6 L1753.6 503.7 L1753.7 503.8 L1753.8 503.9 L1753.9 503.9 L1754.0 504.0 L1754.1 504.1 L1754.2 504.1 L1754.3 504.2 L1754.4 504.3 L1754.5 504.4 L1754.6 504.4 L1754.7 504.5 L1754.7 504.6 L1754.8 504.6 L1754.9 504.7 L1755.0 504.8 L1755.1 504.8 L1755.1 504.9 L1755.2 504.9 L1755.3 505.0 L1755.3 505.0 L1755.4 505.1 L1755.4 505.1 L1755.5 505.1 L1755.5 505.2 L1755.5 505.2 L1755.6 505.2 L1755.6 505.2 L1755.6 505.2 L1755.6 505.3 L1755.7 505.3 L1755.7 505.3 L1755.7 505.3 L1755.7 505.3 L1755.7 505.3 L1755.7 505.3Z"/></clipPath><clipPath id="ct"><path d="M1369.6 240.7 L1710.8 471.2 L1275.1 633.2Z"/></clipPath><filter id="bl" x="-5%" y="-5%" width="110%" height="110%"><feGaussianBlur stdDeviation="4"/></filter></defs><g clip-path="url(#cl)"><g filter="url(#bl)" stroke-width="6"><path d="M1202 141h6" stroke="#009e02"/><path d="M1208 141h12" stroke="#009e01"/><path d="M1220 141h18" stroke="#009e00"/><path d="M1190 147h6" stroke="#009e05"/><path d="M1196 147h6" stroke="#009e04"/><path d="M1202 147h6" stroke="#009e03"/><path d="M1208 147h12" stroke="#009e02"/><path d="M1220 147h6" stroke="#009e01"/><path d="M1226 147h30" stroke="#009e00"/><path d="M1178 153h12" stroke="#009e07"/><path d="M1190 153h6" stroke="#009e06"/><path d="M1196 153h6" stroke="#009e05"/><path d="M1202 153h12" stroke="#009e04"/><path d="M1214 153h6" stroke="#009e03"/><path d="M1220 153h6" stroke="#009e02"/><path d="M1226 153h12" stroke="#009e01"/><path d="M1238 153h36" stroke="#009e00"/><path d="M1172 159h6" stroke="#009e09"/><path d="M1178 159h12" stroke="#009e08"/><path d="M1190 159h6" stroke="#009e07"/><path d="M1196 159h12" stroke="#009e06"/><path d="M1208 159h6" stroke="#009e05"/><path d="M1214 159h6" stroke="#009e04"/><path d="M1220 159h12" stroke="#009e03"/><path d="M1232 159h6" stroke="#009e02"/><path d="M1238 159h6" stroke="#009e01"/><path d="M1244 159h42" stroke="#009e00"/><path d="M1166 165h6" stroke="#009e0b"/><path d="M1172 165h12" stroke="#009e0a"/><path d="M1184 165h6" stroke="#009e09"/><path d="M1190 165h6" stroke="#009e08"/><path d="M1196 165h12" stroke="#009e07"/><path d="M1208 165h6" stroke="#009e06"/><path d="M1214 165h6" stroke="#009e05"/><path d="M1220 165h12" stroke="#009e04"/><path d="M1232 165h6" stroke="#009e03"/><path d="M1238 165h6" stroke="#009e02"/><path d="M1244 165h12" stroke="#009e01"/><path d="M1256 165h42" stroke="#009e00"/><path d="M1166 171h12" stroke="#009e0c"/><path d="M1178 171h6" stroke="#009e0b"/><path d="M1184 171h6" stroke="#009e0a"/><path d="M1190 171h12" stroke="#009e09"/><path d="M1202 171h6" stroke="#009e08"/><path d="M1208 171h6" stroke="#009e07"/><path d="M1214 171h12" stroke="#009e06"/><path d="M1226 171h6" stroke="#009e05"/><path d="M1232 171h6" stroke="#009e04"/><path d="M1238 171h12" stroke="#009e03"/><path d="M1250 171h6" stroke="#009e02"/><path d="M1256 171h6" stroke="#009e01"/><path d="M1262 171h48" stroke="#009e00"/><path d="M1160 177h12" stroke="#009e0e"/><path d="M1172 177h6" stroke="#009e0d"/><path d="M1178 177h6" stroke="#009e0c"/><path d="M1184 177h12" stroke="#009e0b"/><path d="M1196 177h6" stroke="#009e0a"/><path d="M1202 177h12" stroke="#009e09"/><path d="M1214 177h6" stroke="#009e08"/><path d="M1220 177h6" stroke="#009e07"/><path d="M1226 177h6" stroke="#009e06"/><path d="M1232 177h12" stroke="#009e05"/><path d="M1244 177h6" stroke="#009e04"/><path d="M1250 177h6" stroke="#009e03"/><path d="M1256 177h6" stroke="#009e02"/><path d="M1262 177h12" stroke="#009e01"/><path d="M1274 177h48" stroke="#009e00"/><path d="M1160 183h6" stroke="#009e10"/><path d="M1166 183h6" stroke="#009e0f"/><path d="M1172 183h6" stroke="#009e0e"/><path d="M1178 183h12" stroke="#009e0d"/><path d="M1190 183h6" stroke="#009e0c"/><path d="M1196 183h12" stroke="#009e0b"/><path d="M1208 183h6" stroke="#009e0a"/><path d="M1214 183h6" stroke="#009e09"/><path d="M1220 183h6" stroke="#009e08"/><path d="M1226 183h12" stroke="#009e07"/><path d="M1238 183h6" stroke="#009e06"/><path d="M1244 183h6" stroke="#009e05"/><path d="M1250 183h12" stroke="#009e04"/><path d="M1262 183h6" stroke="#009e03"/><path d="M1268 183h6" stroke="#009e02"/><path d="M1274 183h6" stroke="#009e01"/><path d="M1280 183h54" stroke="#009e00"/><path d="M1154 189h6" stroke="#009e12"/><path d="M1160 189h6" stroke="#009e11"/><path d="M1166 189h12" stroke="#009e10"/><path d="M1178 189h6" stroke="#009e0f"/><path d="M1184 189h6" stroke="#009e0e"/><path d="M1190 189h12" stroke="#009e0d"/><path d="M1202 189h6" stroke="#009e0c"/><path d="M1208 189h6" stroke="#009e0b"/><path d="M1214 189h12" stroke="#009e0a"/><path d="M1226 189h6" stroke="#009e09"/><path d="M1232 189h6" stroke="#009e08"/><path d="M1238 189h6" stroke="#009e07"/><path d="M1244 189h12" stroke="#009e06"/><path d="M1256 189h6" stroke="#009e05"/><path d="M1262 189h6" stroke="#009e04"/><path d="M1268 189h6" stroke="#009e03"/><path d="M1274 189h6" stroke="#009e02"/><path d="M1280 189h12" stroke="#009e01"/><path d="M1292 189h54" stroke="#009e00"/><path d="M1154 195h6" stroke="#009e13"/><path d="M1160 195h12" stroke="#009e12"/><path d="M1172 195h6" stroke="#009e11"/><path d="M1178 195h6" stroke="#009e10"/><path d="M1184 195h12" stroke="#009e0f"/><path d="M1196 195h6" stroke="#009e0e"/><path d="M1202 195h6" stroke="#009e0d"/><path d="M1208 195h12" stroke="#009e0c"/><path d="M1220 195h6" stroke="#009e0b"/><path d="M1226 195h6" stroke="#009e0a"/><path d="M1232 195h12" stroke="#009e09"/><path d="M1244 195h6" stroke="#009e08"/><path d="M1250 195h6" stroke="#009e07"/><path d="M1256 195h6" stroke="#009e06"/><path d="M1262 195h6" stroke="#009e05"/><path d="M1268 195h12" stroke="#009e04"/><path d="M1280 195h6" stroke="#009e03"/><path d="M1286 195h6" stroke="#009e02"/><path d="M1292 195h6" stroke="#009e01"/><path d="M1298 195h54" stroke="#009e00"/><path d="M1154 201h6" stroke="#009e15"/><path d="M1160 201h6" stroke="#009e14"/><path d="M1166 201h6" stroke="#009e13"/><path d="M1172 201h12" stroke="#009e12"/><path d="M1184 201h6" stroke="#009e11"/><path d="M1190 201h6" stroke="#009e10"/><path d="M1196 201h12" stroke="#009e0f"/><path d="M1208 201h6" stroke="#009e0e"/><path d="M1214 201h6" stroke="#009e0d"/><path d="M1220 201h12" stroke="#009e0c"/><path d="M1232 201h6" stroke="#009e0b"/><path d="M1238 201h6" stroke="#009e0a"/><path d="M1244 201h6" stroke="#009e09"/><path d="M1250 201h12" stroke="#009e08"/><path d="M1262 201h6" stroke="#009e07"/><path d="M1268 201h6" stroke="#009e06"/><path d="M1274 201h6" stroke="#009e05"/><path d="M1280 201h6" stroke="#009e04"/><path d="M1286 201h6" stroke="#009e03"/><path d="M1292 201h6" stroke="#009e02"/><path d="M1298 201h12" stroke="#009e01"/><path d="M1310 201h54" stroke="#009e00"/><path d="M1148 207h6" stroke="#009e17"/><path d="M1154 207h6" stroke="#009e16"/><path d="M1160 207h12" stroke="#009e15"/><path d="M1172 207h6" stroke="#009e14"/><path d="M1178 207h6" stroke="#009e13"/><path d="M1184 207h12" stroke="#009e12"/><path d="M1196 207h6" stroke="#009e11"/><path d="M1202 207h6" stroke="#009e10"/><path d="M1208 207h12" stroke="#009e0f"/><path d="M1220 207h6" stroke="#009e0e"/><path d="M1226 207h6" stroke="#009e0d"/><path d="M1232 207h6" stroke="#009e0c"/><path d="M1238 207h12" stroke="#009e0b"/><path d="M1250 207h6" stroke="#009e0a"/><path d="M1256 207h6" stroke="#009e09"/><path d="M1262 207h6" stroke="#009e08"/><path d="M1268 207h6" stroke="#009e07"/><path d="M1274 207h12" stroke="#009e06"/><path d="M1286 207h6" stroke="#009e05"/><path d="M1292 207h6" stroke="#009e04"/><path d="M1298 207h6" stroke="#009e03"/><path d="M1304 207h6" stroke="#009e02"/><path d="M1310 207h6" stroke="#009e01"/><path d="M1316 207h60" stroke="#009e00"/><path d="M1148 213h6" stroke="#009e18"/><path d="M1154 213h12" stroke="#009e17"/><path d="M1166 213h6" stroke="#009e16"/><path d="M1172 213h12" stroke="#009e15"/><path d="M1184 213h6" stroke="#009e14"/><path d="M1190 213h6" stroke="#009e13"/><path d="M1196 213h12" stroke="#009e12"/><path d="M1208 213h6" stroke="#009e11"/><path d="M1214 213h6" stroke="#009e10"/><path d="M1220 213h6" stroke="#009e0f"/><path d="M1226 213h12" stroke="#009e0e"/><path d="M1238 213h6" stroke="#009e0d"/><path d="M1244 213h6" stroke="#009e0c"/><path d="M1250 213h6" stroke="#009e0b"/><path d="M1256 213h12" stroke="#009e0a"/><path d="M1268 213h6" stroke="#009e09"/><path d="M1274 213h6" stroke="#009e08"/><path d="M1280 213h6" stroke="#009e07"/><path d="M1286 213h6" stroke="#009e06"/><path d="M1292 213h6" stroke="#009e05"/><path d="M1298 213h6" stroke="#009e04"/><path d="M1304 213h6" stroke="#009e03"/><path d="M1310 213h12" stroke="#009e02"/><path d="M1322 213h6" stroke="#009e01"/><path d="M1328 213h48" stroke="#009e00"/><path d="M1376 213h6" stroke="#019e00"/><path d="M1148 219h6" stroke="#009e1a"/><path d="M1154 219h6" stroke="#009e19"/><path d="M1160 219h12" stroke="#009e18"/><path d="M1172 219h6" stroke="#009e17"/><path d="M1178 219h6" stroke="#009e16"/><path d="M1184 219h12" stroke="#009e15"/><path d="M1196 219h6" stroke="#009e14"/><path d="M1202 219h6" stroke="#009e13"/><path d="M1208 219h12" stroke="#009e12"/><path d="M1220 219h6" stroke="#009e11"/><path d="M1226 219h6" stroke="#009e10"/><path d="M1232 219h6" stroke="#009e0f"/><path d="M1238 219h12" stroke="#009e0e"/><path d="M1250 219h6" stroke="#009e0d"/><path d="M1256 219h6" stroke="#009e0c"/><path d="M1262 219h6" stroke="#009e0b"/><path d="M1268 219h6" stroke="#009e0a"/><path d="M1274 219h6" stroke="#009e09"/><path d="M1280 219h12" stroke="#009e08"/><path d="M1292 219h6" stroke="#009e07"/><path d="M1298 219h6" stroke="#009e06"/><path d="M1304 219h6" stroke="#009e05"/><path d="M1310 219h6" stroke="#009e04"/><path d="M1316 219h6" stroke="#009e03"/><path d="M1322 219h6" stroke="#009e02"/><path d="M1328 219h6" stroke="#009e01"/><path d="M1334 219h42" stroke="#009e00"/><path d="M1376 219h6" stroke="#029e00"/><path d="M1382 219h6" stroke="#059e00"/><path d="M1388 219h6" stroke="#099e00"/><path d="M1148 225h12" stroke="#009e1b"/><path d="M1160 225h6" stroke="#009e1a"/><path d="M1166 225h6" stroke="#009e19"/><path d="M1172 225h12" stroke="#009e18"/><path d="M1184 225h6" stroke="#009e17"/><path d="M1190 225h6" stroke="#009e16"/><path d="M1196 225h12" stroke="#009e15"/><path d="M1208 225h6" stroke="#009e14"/><path d="M1214 225h6" stroke="#009e13"/><path d="M1220 225h12" stroke="#009e12"/><path d="M1232 225h6" stroke="#009e11"/><path d="M1238 225h6" stroke="#009e10"/><path d="M1244 225h6" stroke="#009e0f"/><path d="M1250 225h6" stroke="#009e0e"/><path d="M1256 225h12" stroke="#009e0d"/><path d="M1268 225h6" stroke="#009e0c"/><path d="M1274 225h6" stroke="#009e0b"/><path d="M1280 225h6" stroke="#009e0a"/><path d="M1286 225h6" stroke="#009e09"/><path d="M1292 225h6" stroke="#009e08"/><path d="M1298 225h6" stroke="#009e07"/><path d="M1304 225h6" stroke="#009e06"/><path d="M1310 225h6" stroke="#009e05"/><path d="M1316 225h6" stroke="#009e04"/><path d="M1322 225h12" stroke="#009e03"/><path d="M1334 225h6" stroke="#009e02"/><path d="M1340 225h6" stroke="#009e01"/><path d="M1346 225h30" stroke="#009e00"/><path d="M1376 225h6" stroke="#039e00"/><path d="M1382 225h6" stroke="#069e00"/><path d="M1388 225h6" stroke="#0a9e00"/><path d="M1394 225h6" stroke="#0d9e00"/><path d="M1148 231h6" stroke="#009e1d"/><path d="M1154 231h6" stroke="#009e1c"/><path d="M1160 231h12" stroke="#009e1b"/><path d="M1172 231h6" stroke="#009e1a"/><path d="M1178 231h12" stroke="#009e19"/><path d="M1190 231h6" stroke="#009e18"/><path d="M1196 231h6" stroke="#009e17"/><path d="M1202 231h6" stroke="#009e16"/><path d="M1208 231h12" stroke="#009e15"/><path d="M1220 231h6" stroke="#009e14"/><path d="M1226 231h6" stroke="#009e13"/><path d="M1232 231h6" stroke="#009e12"/><path d="M1238 231h12" stroke="#009e11"/><path d="M1250 231h6" stroke="#009e10"/><path d="M1256 231h6" stroke="#009e0f"/><path d="M1262 231h6" stroke="#009e0e"/><path d="M1268 231h6" stroke="#009e0d"/><path d="M1274 231h6" stroke="#009e0c"/><path d="M1280 231h12" stroke="#009e0b"/><path d="M1292 231h6" stroke="#009e0a"/><path d="M1298 231h6" stroke="#009e09"/><path d="M1304 231h6" stroke="#009e08"/><path d="M1310 231h6" stroke="#009e07"/><path d="M1316 231h6" stroke="#009e06"/><path d="M1322 231h6" stroke="#009e05"/><path d="M1328 231h6" stroke="#009e04"/><path d="M1334 231h6" stroke="#009e03"/><path d="M1340 231h6" stroke="#009e02"/><path d="M1346 231h6" stroke="#009e01"/><path d="M1352 231h18" stroke="#009e00"/><path d="M1370 231h6" stroke="#019e00"/><path d="M1376 231h6" stroke="#049e00"/><path d="M1382 231h6" stroke="#079e00"/><path d="M1388 231h6" stroke="#0b9e00"/><path d="M1394 231h6" stroke="#0e9e00"/><path d="M1400 231h6" stroke="#119e00"/><path d="M1142 237h12" stroke="#009e1f"/><path d="M1154 237h6" stroke="#009e1e"/><path d="M1160 237h6" stroke="#009e1d"/><path d="M1166 237h12" stroke="#009e1c"/><path d="M1178 237h6" stroke="#009e1b"/><path d="M1184 237h6" stroke="#009e1a"/><path d="M1190 237h12" stroke="#009e19"/><path d="M1202 237h6" stroke="#009e18"/><path d="M1208 237h6" stroke="#009e17"/><path d="M1214 237h12" stroke="#009e16"/><path d="M1226 237h6" stroke="#009e15"/><path d="M1232 237h6" stroke="#009e14"/><path d="M1238 237h6" stroke="#009e13"/><path d="M1244 237h6" stroke="#009e12"/><path d="M1250 237h12" stroke="#009e11"/><path d="M1262 237h6" stroke="#009e10"/><path d="M1268 237h6" stroke="#009e0f"/><path d="M1274 237h6" stroke="#009e0e"/><path d="M1280 237h6" stroke="#009e0d"/><path d="M1286 237h6" stroke="#009e0c"/><path d="M1292 237h6" stroke="#009e0b"/><path d="M1298 237h6" stroke="#009e0a"/><path d="M1304 237h6" stroke="#009e09"/><path d="M1310 237h12" stroke="#009e08"/><path d="M1322 237h6" stroke="#009e07"/><path d="M1328 237h6" stroke="#009e06"/><path d="M1334 237h6" stroke="#009e05"/><path d="M1340 237h6" stroke="#009e04"/><path d="M1346 237h6" stroke="#009e03"/><path d="M1352 237h6" stroke="#009e02"/><path d="M1358 237h6" stroke="#009e01"/><path d="M1364 237h6" stroke="#009e00"/><path d="M1370 237h6" stroke="#019e00"/><path d="M1376 237h6" stroke="#059e00"/><path d="M1382 237h6" stroke="#089e00"/><path d="M1388 237h6" stroke="#0c9e00"/><path d="M1394 237h6" stroke="#0f9e00"/><path d="M1400 237h6" stroke="#139e00"/><path d="M1406 237h6" stroke="#169e00"/><path d="M1412 237h6" stroke="#1a9e00"/><path d="M1142 243h6" stroke="#009e21"/><path d="M1148 243h12" stroke="#009e20"/><path d="M1160 243h6" stroke="#009e1f"/><path d="M1166 243h6" stroke="#009e1e"/><path d="M1172 243h12" stroke="#009e1d"/><path d="M1184 243h6" stroke="#009e1c"/><path d="M1190 243h6" stroke="#009e1b"/><path d="M1196 243h12" stroke="#009e1a"/><path d="M1208 243h6" stroke="#009e19"/><path d="M1214 243h6" stroke="#009e18"/><path d="M1220 243h6" stroke="#009e17"/><path d="M1226 243h12" stroke="#009e16"/><path d="M1238 243h6" stroke="#009e15"/><path d="M1244 243h6" stroke="#009e14"/><path d="M1250 243h6" stroke="#009e13"/><path d="M1256 243h6" stroke="#009e12"/><path d="M1262 243h12" stroke="#009e11"/><path d="M1274 243h6" stroke="#009e10"/><path d="M1280 243h6" stroke="#009e0f"/><path d="M1286 243h6" stroke="#009e0e"/><path d="M1292 243h6" stroke="#009e0d"/><path d="M1298 243h6" stroke="#009e0c"/><path d="M1304 243h6" stroke="#009e0b"/><path d="M1310 243h6" stroke="#009e0a"/><path d="M1316 243h6" stroke="#009e09"/><path d="M1322 243h6" stroke="#009e08"/><path d="M1328 243h6" stroke="#009e07"/><path d="M1334 243h6" stroke="#009e06"/><path d="M1340 243h6" stroke="#009e05"/><path d="M1346 243h6" stroke="#009e04"/><path d="M1352 243h6" stroke="#009e03"/><path d="M1358 243h6" stroke="#009e02"/><path d="M1364 243h6" stroke="#009e01"/><path d="M1370 243h6" stroke="#029e00"/><path d="M1376 243h6" stroke="#069e00"/><path d="M1382 243h6" stroke="#099e00"/><path d="M1388 243h6" stroke="#0d9e00"/><path d="M1394 243h6" stroke="#109e00"/><path d="M1400 243h6" stroke="#149e00"/><path d="M1406 243h6" stroke="#179e00"/><path d="M1412 243h6" stroke="#1b9e00"/><path d="M1418 243h6" stroke="#1f9e00"/><path d="M1142 249h6" stroke="#009e23"/><path d="M1148 249h6" stroke="#009e22"/><path d="M1154 249h12" stroke="#009e21"/><path d="M1166 249h6" stroke="#009e20"/><path d="M1172 249h6" stroke="#009e1f"/><path d="M1178 249h12" stroke="#009e1e"/><path d="M1190 249h6" stroke="#009e1d"/><path d="M1196 249h6" stroke="#009e1c"/><path d="M1202 249h12" stroke="#009e1b"/><path d="M1214 249h6" stroke="#009e1a"/><path d="M1220 249h6" stroke="#009e19"/><path d="M1226 249h6" stroke="#009e18"/><path d="M1232 249h12" stroke="#009e17"/><path d="M1244 249h6" stroke="#009e16"/><path d="M1250 249h6" stroke="#009e15"/><path d="M1256 249h6" stroke="#009e14"/><path d="M1262 249h6" stroke="#009e13"/><path d="M1268 249h6" stroke="#009e12"/><path d="M1274 249h6" stroke="#009e11"/><path d="M1280 249h12" stroke="#009e10"/><path d="M1292 249h6" stroke="#009e0f"/><path d="M1298 249h6" stroke="#009e0e"/><path d="M1304 249h6" stroke="#009e0d"/><path d="M1310 249h6" stroke="#009e0c"/><path d="M1316 249h6" stroke="#009e0b"/><path d="M1322 249h6" stroke="#009e0a"/><path d="M1328 249h6" stroke="#009e09"/><path d="M1334 249h6" stroke="#009e08"/><path d="M1340 249h6" stroke="#009e07"/><path d="M1346 249h6" stroke="#009e06"/><path d="M1352 249h6" stroke="#009e05"/><path d="M1358 249h6" stroke="#009e04"/><path d="M1364 249h6" stroke="#009e03"/><path d="M1370 249h6" stroke="#039e02"/><path d="M1376 249h6" stroke="#079e01"/><path d="M1382 249h6" stroke="#0a9e00"/><path d="M1388 249h6" stroke="#0e9e00"/><path d="M1394 249h6" stroke="#119e00"/><path d="M1400 249h6" stroke="#159e00"/><path d="M1406 249h6" stroke="#199e00"/><path d="M1412 249h6" stroke="#1c9e00"/><path d="M1418 249h6" stroke="#209e00"/><path d="M1424 249h6" stroke="#249e00"/><path d="M1430 249h6" stroke="#289e00"/><path d="M1142 255h6" stroke="#009e25"/><path d="M1148 255h6" stroke="#009e24"/><path d="M1154 255h6" stroke="#009e23"/><path d="M1160 255h12" stroke="#009e22"/><path d="M1172 255h6" stroke="#009e21"/><path d="M1178 255h6" stroke="#009e20"/><path d="M1184 255h12" stroke="#009e1f"/><path d="M1196 255h6" stroke="#009e1e"/><path d="M1202 255h6" stroke="#009e1d"/><path d="M1208 255h12" stroke="#009e1c"/><path d="M1220 255h6" stroke="#009e1b"/><path d="M1226 255h6" stroke="#009e1a"/><path d="M1232 255h6" stroke="#009e19"/><path d="M1238 255h6" stroke="#009e18"/><path d="M1244 255h12" stroke="#009e17"/><path d="M1256 255h6" stroke="#009e16"/><path d="M1262 255h6" stroke="#009e15"/><path d="M1268 255h6" stroke="#009e14"/><path d="M1274 255h6" stroke="#009e13"/><path d="M1280 255h6" stroke="#009e12"/><path d="M1286 255h6" stroke="#009e11"/><path d="M1292 255h6" stroke="#009e10"/><path d="M1298 255h12" stroke="#009e0f"/><path d="M1310 255h6" stroke="#009e0e"/><path d="M1316 255h6" stroke="#009e0d"/><path d="M1322 255h6" stroke="#009e0c"/><path d="M1328 255h6" stroke="#009e0b"/><path d="M1334 255h6" stroke="#009e0a"/><path d="M1340 255h6" stroke="#009e09"/><path d="M1346 255h6" stroke="#009e08"/><path d="M1352 255h6" stroke="#009e07"/><path d="M1358 255h6" stroke="#009e05"/><path d="M1364 255h6" stroke="#009e04"/><path d="M1370 255h6" stroke="#049e03"/><path d="M1376 255h6" stroke="#089e02"/><path d="M1382 255h6" stroke="#0b9e01"/><path d="M1388 255h6" stroke="#0f9e00"/><path d="M1394 255h6" stroke="#129e00"/><path d="M1400 255h6" stroke="#169e00"/><path d="M1406 255h6" stroke="#1a9e00"/><path d="M1412 255h6" stroke="#1e9e00"/><path d="M1418 255h6" stroke="#229e00"/><path d="M1424 255h6" stroke="#269e00"/><path d="M1430 255h6" stroke="#2a9e00"/><path d="M1436 255h6" stroke="#2e9e00"/><path d="M1142 261h12" stroke="#009e26"/><path d="M1154 261h6" stroke="#009e25"/><path d="M1160 261h12" stroke="#009e24"/><path d="M1172 261h6" stroke="#009e23"/><path d="M1178 261h6" stroke="#009e22"/><path d="M1184 261h12" stroke="#009e21"/><path d="M1196 261h6" stroke="#009e20"/><path d="M1202 261h6" stroke="#009e1f"/><path d="M1208 261h6" stroke="#009e1e"/><path d="M1214 261h12" stroke="#009e1d"/><path d="M1226 261h6" stroke="#009e1c"/><path d="M1232 261h6" stroke="#009e1b"/><path d="M1238 261h6" stroke="#009e1a"/><path d="M1244 261h6" stroke="#009e19"/><path d="M1250 261h12" stroke="#009e18"/><path d="M1262 261h6" stroke="#009e17"/><path d="M1268 261h6" stroke="#009e16"/><path d="M1274 261h6" stroke="#009e15"/><path d="M1280 261h6" stroke="#009e14"/><path d="M1286 261h6" stroke="#009e13"/><path d="M1292 261h6" stroke="#009e12"/><path d="M1298 261h6" stroke="#009e11"/><path d="M1304 261h6" stroke="#009e10"/><path d="M1310 261h6" stroke="#009e0f"/><path d="M1316 261h6" stroke="#009e0e"/><path d="M1322 261h6" stroke="#009e0d"/><path d="M1328 261h6" stroke="#009e0c"/><path d="M1334 261h6" stroke="#009e0b"/><path d="M1340 261h6" stroke="#009e0a"/><path d="M1346 261h6" stroke="#009e09"/><path d="M1352 261h6" stroke="#009e08"/><path d="M1358 261h6" stroke="#009e07"/><path d="M1364 261h6" stroke="#019e06"/><path d="M1370 261h6" stroke="#059e05"/><path d="M1376 261h6" stroke="#099e04"/><path d="M1382 261h6" stroke="#0c9e03"/><path d="M1388 261h6" stroke="#109e02"/><path d="M1394 261h6" stroke="#149e01"/><path d="M1400 261h6" stroke="#189e00"/><path d="M1406 261h6" stroke="#1b9e00"/><path d="M1412 261h6" stroke="#1f9e00"/><path d="M1418 261h6" stroke="#239e00"/><path d="M1424 261h6" stroke="#279e00"/><path d="M1430 261h6" stroke="#2b9e00"/><path d="M1436 261h6" stroke="#309e00"/><path d="M1442 261h6" stroke="#349e00"/><path d="M1142 267h12" stroke="#009e28"/><path d="M1154 267h6" stroke="#009e27"/><path d="M1160 267h6" stroke="#009e26"/><path d="M1166 267h12" stroke="#009e25"/><path d="M1178 267h6" stroke="#009e24"/><path d="M1184 267h6" stroke="#009e23"/><path d="M1190 267h12" stroke="#009e22"/><path d="M1202 267h6" stroke="#009e21"/><path d="M1208 267h6" stroke="#009e20"/><path d="M1214 267h12" stroke="#009e1f"/><path d="M1226 267h6" stroke="#009e1e"/><path d="M1232 267h6" stroke="#009e1d"/><path d="M1238 267h6" stroke="#009e1c"/><path d="M1244 267h6" stroke="#009e1b"/><path d="M1250 267h6" stroke="#009e1a"/><path d="M1256 267h12" stroke="#009e19"/><path d="M1268 267h6" stroke="#009e18"/><path d="M1274 267h6" stroke="#009e17"/><path d="M1280 267h6" stroke="#009e16"/><path d="M1286 267h6" stroke="#009e15"/><path d="M1292 267h6" stroke="#009e14"/><path d="M1298 267h6" stroke="#009e13"/><path d="M1304 267h6" stroke="#009e12"/><path d="M1310 267h6" stroke="#009e11"/><path d="M1316 267h6" stroke="#009e10"/><path d="M1322 267h6" stroke="#009e0f"/><path d="M1328 267h6" stroke="#009e0e"/><path d="M1334 267h6" stroke="#009e0d"/><path d="M1340 267h6" stroke="#009e0c"/><path d="M1346 267h6" stroke="#009e0b"/><path d="M1352 267h6" stroke="#009e0a"/><path d="M1358 267h6" stroke="#009e09"/><path d="M1364 267h6" stroke="#029e08"/><path d="M1370 267h6" stroke="#069e07"/><path d="M1376 267h6" stroke="#0a9e06"/><path d="M1382 267h6" stroke="#0d9e05"/><path d="M1388 267h6" stroke="#119e03"/><path d="M1394 267h6" stroke="#159e02"/><path d="M1400 267h6" stroke="#199e01"/><path d="M1406 267h6" stroke="#1d9e00"/><path d="M1412 267h6" stroke="#219e00"/><path d="M1418 267h6" stroke="#259e00"/><path d="M1424 267h6" stroke="#299e00"/><path d="M1430 267h6" stroke="#2d9e00"/><path d="M1436 267h6" stroke="#319e00"/><path d="M1442 267h6" stroke="#369e00"/><path d="M1448 267h6" stroke="#3a9e00"/><path d="M1454 267h6" stroke="#3f9e00"/><path d="M1142 273h12" stroke="#009e2a"/><path d="M1154 273h6" stroke="#009e29"/><path d="M1160 273h6" stroke="#009e28"/><path d="M1166 273h12" stroke="#009e27"/><path d="M1178 273h6" stroke="#009e26"/><path d="M1184 273h6" stroke="#009e25"/><path d="M1190 273h12" stroke="#009e24"/><path d="M1202 273h6" stroke="#009e23"/><path d="M1208 273h6" stroke="#009e22"/><path d="M1214 273h6" stroke="#009e21"/><path d="M1220 273h12" stroke="#009e20"/><path d="M1232 273h6" stroke="#009e1f"/><path d="M1238 273h6" stroke="#009e1e"/><path d="M1244 273h6" stroke="#009e1d"/><path d="M1250 273h6" stroke="#009e1c"/><path d="M1256 273h12" stroke="#009e1b"/><path d="M1268 273h6" stroke="#009e1a"/><path d="M1274 273h6" stroke="#009e19"/><path d="M1280 273h6" stroke="#009e18"/><path d="M1286 273h6" stroke="#009e17"/><path d="M1292 273h6" stroke="#009e16"/><path d="M1298 273h6" stroke="#009e15"/><path d="M1304 273h6" stroke="#009e14"/><path d="M1310 273h6" stroke="#009e13"/><path d="M1316 273h6" stroke="#009e12"/><path d="M1322 273h6" stroke="#009e11"/><path d="M1328 273h6" stroke="#009e10"/><path d="M1334 273h6" stroke="#009e0f"/><path d="M1340 273h6" stroke="#009e0e"/><path d="M1346 273h6" stroke="#009e0d"/><path d="M1352 273h6" stroke="#009e0c"/><path d="M1358 273h6" stroke="#009e0b"/><path d="M1364 273h6" stroke="#039e0a"/><path d="M1370 273h6" stroke="#079e09"/><path d="M1376 273h6" stroke="#0b9e08"/><path d="M1382 273h6" stroke="#0e9e06"/><path d="M1388 273h6" stroke="#129e05"/><path d="M1394 273h6" stroke="#169e04"/><path d="M1400 273h6" stroke="#1a9e03"/><path d="M1406 273h6" stroke="#1e9e02"/><path d="M1412 273h6" stroke="#229e00"/><path d="M1418 273h6" stroke="#279e00"/><path d="M1424 273h6" stroke="#2b9e00"/><path d="M1430 273h6" stroke="#2f9e00"/><path d="M1436 273h6" stroke="#339e00"/><path d="M1442 273h6" stroke="#389e00"/><path d="M1448 273h6" stroke="#3c9e00"/><path d="M1454 273h6" stroke="#419e00"/><path d="M1460 273h6" stroke="#469e00"/><path d="M1142 279h12" stroke="#009e2c"/><path d="M1154 279h6" stroke="#009e2b"/><path d="M1160 279h6" stroke="#009e2a"/><path d="M1166 279h12" stroke="#009e29"/><path d="M1178 279h6" stroke="#009e28"/><path d="M1184 279h6" stroke="#009e27"/><path d="M1190 279h12" stroke="#009e26"/><path d="M1202 279h6" stroke="#009e25"/><path d="M1208 279h6" stroke="#009e24"/><path d="M1214 279h12" stroke="#009e23"/><path d="M1226 279h6" stroke="#009e22"/><path d="M1232 279h6" stroke="#009e21"/><path d="M1238 279h6" stroke="#009e20"/><path d="M1244 279h6" stroke="#009e1f"/><path d="M1250 279h6" stroke="#009e1e"/><path d="M1256 279h12" stroke="#009e1d"/><path d="M1268 279h6" stroke="#009e1c"/><path d="M1274 279h6" stroke="#009e1b"/><path d="M1280 279h6" stroke="#009e1a"/><path d="M1286 279h6" stroke="#009e19"/><path d="M1292 279h6" stroke="#009e18"/><path d="M1298 279h6" stroke="#009e17"/><path d="M1304 279h6" stroke="#009e16"/><path d="M1310 279h6" stroke="#009e15"/><path d="M1316 279h6" stroke="#009e14"/><path d="M1322 279h6" stroke="#009e13"/><path d="M1328 279h6" stroke="#009e12"/><path d="M1334 279h6" stroke="#009e11"/><path d="M1340 279h6" stroke="#009e10"/><path d="M1346 279h6" stroke="#009e0f"/><path d="M1352 279h6" stroke="#009e0e"/><path d="M1358 279h6" stroke="#009e0d"/><path d="M1364 279h6" stroke="#049e0c"/><path d="M1370 279h6" stroke="#089e0b"/><path d="M1376 279h6" stroke="#0c9e0a"/><path d="M1382 279h6" stroke="#109e08"/><path d="M1388 279h6" stroke="#149e07"/><path d="M1394 279h6" stroke="#189e06"/><path d="M1400 279h6" stroke="#1c9e05"/><path d="M1406 279h6" stroke="#209e04"/><path d="M1412 279h6" stroke="#249e02"/><path d="M1418 279h6" stroke="#289e01"/><path d="M1424 279h6" stroke="#2d9e00"/><path d="M1430 279h6" stroke="#319e00"/><path d="M1436 279h6" stroke="#359e00"/><path d="M1442 279h6" stroke="#3a9e00"/><path d="M1448 279h6" stroke="#3f9e00"/><path d="M1454 279h6" stroke="#439e00"/><path d="M1460 279h6" stroke="#489e00"/><path d="M1466 279h6" stroke="#4d9e00"/><path d="M1472 279h6" stroke="#529e00"/><path d="M1142 285h12" stroke="#009e2e"/><path d="M1154 285h6" stroke="#009e2d"/><path d="M1160 285h12" stroke="#009e2c"/><path d="M1172 285h6" stroke="#009e2b"/><path d="M1178 285h6" stroke="#009e2a"/><path d="M1184 285h12" stroke="#009e29"/><path d="M1196 285h6" stroke="#009e28"/><path d="M1202 285h6" stroke="#009e27"/><path d="M1208 285h6" stroke="#009e26"/><path d="M1214 285h12" stroke="#009e25"/><path d="M1226 285h6" stroke="#009e24"/><path d="M1232 285h6" stroke="#009e23"/><path d="M1238 285h6" stroke="#009e22"/><path d="M1244 285h6" stroke="#009e21"/><path d="M1250 285h12" stroke="#009e20"/><path d="M1262 285h6" stroke="#009e1f"/><path d="M1268 285h6" stroke="#009e1e"/><path d="M1274 285h6" stroke="#009e1d"/><path d="M1280 285h6" stroke="#009e1c"/><path d="M1286 285h6" stroke="#009e1b"/><path d="M1292 285h6" stroke="#009e1a"/><path d="M1298 285h6" stroke="#009e19"/><path d="M1304 285h6" stroke="#009e18"/><path d="M1310 285h6" stroke="#009e17"/><path d="M1316 285h6" stroke="#009e16"/><path d="M1322 285h6" stroke="#009e15"/><path d="M1328 285h6" stroke="#009e14"/><path d="M1334 285h6" stroke="#009e13"/><path d="M1340 285h6" stroke="#009e12"/><path d="M1346 285h6" stroke="#009e11"/><path d="M1352 285h6" stroke="#009e10"/><path d="M1358 285h6" stroke="#019e0f"/><path d="M1364 285h6" stroke="#059e0e"/><path d="M1370 285h6" stroke="#099e0d"/><path d="M1376 285h6" stroke="#0d9e0c"/><path d="M1382 285h6" stroke="#119e0a"/><path d="M1388 285h6" stroke="#159e09"/><path d="M1394 285h6" stroke="#199e08"/><path d="M1400 285h6" stroke="#1d9e07"/><path d="M1406 285h6" stroke="#219e06"/><path d="M1412 285h6" stroke="#269e04"/><path d="M1418 285h6" stroke="#2a9e03"/><path d="M1424 285h6" stroke="#2f9e02"/><path d="M1430 285h6" stroke="#339e00"/><path d="M1436 285h6" stroke="#389e00"/><path d="M1442 285h6" stroke="#3c9e00"/><path d="M1448 285h6" stroke="#419e00"/><path d="M1454 285h6" stroke="#469e00"/><path d="M1460 285h6" stroke="#4b9e00"/><path d="M1466 285h6" stroke="#509e00"/><path d="M1472 285h6" stroke="#559e00"/><path d="M1478 285h6" stroke="#5a9e00"/><path d="M1142 291h6" stroke="#009e31"/><path d="M1148 291h6" stroke="#009e30"/><path d="M1154 291h6" stroke="#009e2f"/><path d="M1160 291h12" stroke="#009e2e"/><path d="M1172 291h6" stroke="#009e2d"/><path d="M1178 291h6" stroke="#009e2c"/><path d="M1184 291h12" stroke="#009e2b"/><path d="M1196 291h6" stroke="#009e2a"/><path d="M1202 291h6" stroke="#009e29"/><path d="M1208 291h12" stroke="#009e28"/><path d="M1220 291h6" stroke="#009e27"/><path d="M1226 291h6" stroke="#009e26"/><path d="M1232 291h6" stroke="#009e25"/><path d="M1238 291h6" stroke="#009e24"/><path d="M1244 291h12" stroke="#009e23"/><path d="M1256 291h6" stroke="#009e22"/><path d="M1262 291h6" stroke="#009e21"/><path d="M1268 291h6" stroke="#009e20"/><path d="M1274 291h6" stroke="#009e1f"/><path d="M1280 291h6" stroke="#009e1e"/><path d="M1286 291h6" stroke="#009e1d"/><path d="M1292 291h6" stroke="#009e1c"/><path d="M1298 291h6" stroke="#009e1b"/><path d="M1304 291h6" stroke="#009e1a"/><path d="M1310 291h6" stroke="#009e19"/><path d="M1316 291h6" stroke="#009e18"/><path d="M1322 291h6" stroke="#009e17"/><path d="M1328 291h6" stroke="#009e16"/><path d="M1334 291h6" stroke="#009e15"/><path d="M1340 291h6" stroke="#009e14"/><path d="M1346 291h6" stroke="#009e13"/><path d="M1352 291h6" stroke="#009e12"/><path d="M1358 291h6" stroke="#029e11"/><path d="M1364 291h6" stroke="#069e10"/><path d="M1370 291h6" stroke="#0a9e0f"/><path d="M1376 291h6" stroke="#0e9e0e"/><path d="M1382 291h6" stroke="#129e0c"/><path d="M1388 291h6" stroke="#169e0b"/><path d="M1394 291h6" stroke="#1b9e0a"/><path d="M1400 291h6" stroke="#1f9e09"/><path d="M1406 291h6" stroke="#239e08"/><path d="M1412 291h6" stroke="#289e06"/><path d="M1418 291h6" stroke="#2c9e05"/><path d="M1424 291h6" stroke="#319e04"/><path d="M1430 291h6" stroke="#359e02"/><path d="M1436 291h6" stroke="#3a9e01"/><path d="M1442 291h6" stroke="#3f9e00"/><path d="M1448 291h6" stroke="#439e00"/><path d="M1454 291h6" stroke="#489e00"/><path d="M1460 291h6" stroke="#4d9e00"/><path d="M1466 291h6" stroke="#529e00"/><path d="M1472 291h6" stroke="#589e00"/><path d="M1478 291h6" stroke="#5d9e00"/><path d="M1484 291h6" stroke="#629e00"/><path d="M1142 297h6" stroke="#009e33"/><path d="M1148 297h6" stroke="#009e32"/><path d="M1154 297h12" stroke="#009e31"/><path d="M1166 297h6" stroke="#009e30"/><path d="M1172 297h6" stroke="#009e2f"/><path d="M1178 297h12" stroke="#009e2e"/><path d="M1190 297h6" stroke="#009e2d"/><path d="M1196 297h6" stroke="#009e2c"/><path d="M1202 297h12" stroke="#009e2b"/><path d="M1214 297h6" stroke="#009e2a"/><path d="M1220 297h6" stroke="#009e29"/><path d="M1226 297h6" stroke="#009e28"/><path d="M1232 297h12" stroke="#009e27"/><path d="M1244 297h6" stroke="#009e26"/><path d="M1250 297h6" stroke="#009e25"/><path d="M1256 297h6" stroke="#009e24"/><path d="M1262 297h6" stroke="#009e23"/><path d="M1268 297h6" stroke="#009e22"/><path d="M1274 297h6" stroke="#009e21"/><path d="M1280 297h6" stroke="#009e20"/><path d="M1286 297h6" stroke="#009e1f"/><path d="M1292 297h12" stroke="#009e1e"/><path d="M1304 297h6" stroke="#009e1d"/><path d="M1310 297h6" stroke="#009e1c"/><path d="M1316 297h6" stroke="#009e1b"/><path d="M1322 297h6" stroke="#009e1a"/><path d="M1328 297h6" stroke="#009e19"/><path d="M1334 297h6" stroke="#009e17"/><path d="M1340 297h6" stroke="#009e16"/><path d="M1346 297h6" stroke="#009e15"/><path d="M1352 297h6" stroke="#009e14"/><path d="M1358 297h6" stroke="#039e13"/><path d="M1364 297h6" stroke="#079e12"/><path d="M1370 297h6" stroke="#0b9e11"/><path d="M1376 297h6" stroke="#0f9e10"/><path d="M1382 297h6" stroke="#149e0f"/><path d="M1388 297h6" stroke="#189e0d"/><path d="M1394 297h6" stroke="#1c9e0c"/><path d="M1400 297h6" stroke="#209e0b"/><path d="M1406 297h6" stroke="#259e0a"/><path d="M1412 297h6" stroke="#299e08"/><path d="M1418 297h6" stroke="#2e9e07"/><path d="M1424 297h6" stroke="#339e06"/><path d="M1430 297h6" stroke="#379e05"/><path d="M1436 297h6" stroke="#3c9e03"/><path d="M1442 297h6" stroke="#419e02"/><path d="M1448 297h6" stroke="#469e00"/><path d="M1454 297h6" stroke="#4b9e00"/><path d="M1460 297h6" stroke="#509e00"/><path d="M1466 297h6" stroke="#559e00"/><path d="M1472 297h6" stroke="#5b9e00"/><path d="M1478 297h6" stroke="#609e00"/><path d="M1484 297h6" stroke="#659e00"/><path d="M1490 297h6" stroke="#6b9e00"/><path d="M1496 297h6" stroke="#719e00"/><path d="M1142 303h6" stroke="#009e35"/><path d="M1148 303h12" stroke="#009e34"/><path d="M1160 303h6" stroke="#009e33"/><path d="M1166 303h12" stroke="#009e32"/><path d="M1178 303h6" stroke="#009e31"/><path d="M1184 303h6" stroke="#009e30"/><path d="M1190 303h12" stroke="#009e2f"/><path d="M1202 303h6" stroke="#009e2e"/><path d="M1208 303h6" stroke="#009e2d"/><path d="M1214 303h6" stroke="#009e2c"/><path d="M1220 303h12" stroke="#009e2b"/><path d="M1232 303h6" stroke="#009e2a"/><path d="M1238 303h6" stroke="#009e29"/><path d="M1244 303h6" stroke="#009e28"/><path d="M1250 303h6" stroke="#009e27"/><path d="M1256 303h6" stroke="#009e26"/><path d="M1262 303h6" stroke="#009e25"/><path d="M1268 303h12" stroke="#009e24"/><path d="M1280 303h6" stroke="#009e23"/><path d="M1286 303h6" stroke="#009e22"/><path d="M1292 303h6" stroke="#009e21"/><path d="M1298 303h6" stroke="#009e20"/><path d="M1304 303h6" stroke="#009e1f"/><path d="M1310 303h6" stroke="#009e1e"/><path d="M1316 303h6" stroke="#009e1d"/><path d="M1322 303h6" stroke="#009e1c"/><path d="M1328 303h6" stroke="#009e1b"/><path d="M1334 303h6" stroke="#009e1a"/><path d="M1340 303h6" stroke="#009e19"/><path d="M1346 303h6" stroke="#009e18"/><path d="M1352 303h6" stroke="#009e17"/><path d="M1358 303h6" stroke="#049e15"/><path d="M1364 303h6" stroke="#089e14"/><path d="M1370 303h6" stroke="#0c9e13"/><path d="M1376 303h6" stroke="#119e12"/><path d="M1382 303h6" stroke="#159e11"/><path d="M1388 303h6" stroke="#199e10"/><path d="M1394 303h6" stroke="#1e9e0e"/><path d="M1400 303h6" stroke="#229e0d"/><path d="M1406 303h6" stroke="#279e0c"/><path d="M1412 303h6" stroke="#2b9e0b"/><path d="M1418 303h6" stroke="#309e09"/><path d="M1424 303h6" stroke="#359e08"/><path d="M1430 303h6" stroke="#3a9e07"/><path d="M1436 303h6" stroke="#3f9e05"/><path d="M1442 303h6" stroke="#449e04"/><path d="M1448 303h6" stroke="#499e03"/><path d="M1454 303h6" stroke="#4e9e01"/><path d="M1460 303h6" stroke="#539e00"/><path d="M1466 303h6" stroke="#589e00"/><path d="M1472 303h6" stroke="#5e9e00"/><path d="M1478 303h6" stroke="#639e00"/><path d="M1484 303h6" stroke="#699e00"/><path d="M1490 303h6" stroke="#6f9e00"/><path d="M1496 303h6" stroke="#759e00"/><path d="M1502 303h6" stroke="#7b9e00"/><path d="M1142 309h12" stroke="#009e37"/><path d="M1154 309h6" stroke="#009e36"/><path d="M1160 309h12" stroke="#009e35"/><path d="M1172 309h6" stroke="#009e34"/><path d="M1178 309h6" stroke="#009e33"/><path d="M1184 309h12" stroke="#009e32"/><path d="M1196 309h6" stroke="#009e31"/><path d="M1202 309h6" stroke="#009e30"/><path d="M1208 309h12" stroke="#009e2f"/><path d="M1220 309h6" stroke="#009e2e"/><path d="M1226 309h6" stroke="#009e2d"/><path d="M1232 309h6" stroke="#009e2c"/><path d="M1238 309h6" stroke="#009e2b"/><path d="M1244 309h12" stroke="#009e2a"/><path d="M1256 309h6" stroke="#009e29"/><path d="M1262 309h6" stroke="#009e28"/><path d="M1268 309h6" stroke="#009e27"/><path d="M1274 309h6" stroke="#009e26"/><path d="M1280 309h6" stroke="#009e25"/><path d="M1286 309h6" stroke="#009e24"/><path d="M1292 309h6" stroke="#009e23"/><path d="M1298 309h6" stroke="#009e22"/><path d="M1304 309h6" stroke="#009e21"/><path d="M1310 309h6" stroke="#009e20"/><path d="M1316 309h6" stroke="#009e1f"/><path d="M1322 309h6" stroke="#009e1e"/><path d="M1328 309h6" stroke="#009e1d"/><path d="M1334 309h6" stroke="#009e1c"/><path d="M1340 309h6" stroke="#009e1b"/><path d="M1346 309h6" stroke="#009e1a"/><path d="M1352 309h6" stroke="#019e19"/><path d="M1358 309h6" stroke="#059e18"/><path d="M1364 309h6" stroke="#0a9e17"/><path d="M1370 309h6" stroke="#0e9e16"/><path d="M1376 309h6" stroke="#129e14"/><path d="M1382 309h6" stroke="#169e13"/><path d="M1388 309h6" stroke="#1b9e12"/><path d="M1394 309h6" stroke="#1f9e11"/><path d="M1400 309h6" stroke="#249e10"/><path d="M1406 309h6" stroke="#299e0e"/><path d="M1412 309h6" stroke="#2d9e0d"/><path d="M1418 309h6" stroke="#329e0c"/><path d="M1424 309h6" stroke="#379e0a"/><path d="M1430 309h6" stroke="#3c9e09"/><path d="M1436 309h6" stroke="#419e08"/><path d="M1442 309h6" stroke="#469e06"/><path d="M1448 309h6" stroke="#4b9e05"/><path d="M1454 309h6" stroke="#519e03"/><path d="M1460 309h6" stroke="#569e02"/><path d="M1466 309h6" stroke="#5c9e00"/><path d="M1472 309h6" stroke="#619e00"/><path d="M1478 309h6" stroke="#679e00"/><path d="M1484 309h6" stroke="#6d9e00"/><path d="M1490 309h6" stroke="#739e00"/><path d="M1496 309h6" stroke="#799e00"/><path d="M1502 309h6" stroke="#7f9e00"/><path d="M1508 309h6" stroke="#859e00"/><path d="M1142 315h6" stroke="#009e3a"/><path d="M1148 315h12" stroke="#009e39"/><path d="M1160 315h6" stroke="#009e38"/><path d="M1166 315h6" stroke="#009e37"/><path d="M1172 315h12" stroke="#009e36"/><path d="M1184 315h6" stroke="#009e35"/><path d="M1190 315h6" stroke="#009e34"/><path d="M1196 315h12" stroke="#009e33"/><path d="M1208 315h6" stroke="#009e32"/><path d="M1214 315h6" stroke="#009e31"/><path d="M1220 315h6" stroke="#009e30"/><path d="M1226 315h12" stroke="#009e2f"/><path d="M1238 315h6" stroke="#009e2e"/><path d="M1244 315h6" stroke="#009e2d"/><path d="M1250 315h6" stroke="#009e2c"/><path d="M1256 315h6" stroke="#009e2b"/><path d="M1262 315h6" stroke="#009e2a"/><path d="M1268 315h6" stroke="#009e29"/><path d="M1274 315h12" stroke="#009e28"/><path d="M1286 315h6" stroke="#009e27"/><path d="M1292 315h6" stroke="#009e26"/><path d="M1298 315h6" stroke="#009e25"/><path d="M1304 315h6" stroke="#009e24"/><path d="M1310 315h6" stroke="#009e23"/><path d="M1316 315h6" stroke="#009e22"/><path d="M1322 315h6" stroke="#009e21"/><path d="M1328 315h6" stroke="#009e20"/><path d="M1334 315h6" stroke="#009e1f"/><path d="M1340 315h6" stroke="#009e1e"/><path d="M1346 315h6" stroke="#009e1c"/><path d="M1352 315h6" stroke="#029e1b"/><path d="M1358 315h6" stroke="#069e1a"/><path d="M1364 315h6" stroke="#0b9e19"/><path d="M1370 315h6" stroke="#0f9e18"/><path d="M1376 315h6" stroke="#139e17"/><path d="M1382 315h6" stroke="#189e16"/><path d="M1388 315h6" stroke="#1c9e14"/><path d="M1394 315h6" stroke="#219e13"/><path d="M1400 315h6" stroke="#269e12"/><path d="M1406 315h6" stroke="#2b9e11"/><path d="M1412 315h6" stroke="#2f9e0f"/><path d="M1418 315h6" stroke="#349e0e"/><path d="M1424 315h6" stroke="#399e0d"/><path d="M1430 315h6" stroke="#3e9e0b"/><path d="M1436 315h6" stroke="#449e0a"/><path d="M1442 315h6" stroke="#499e09"/><path d="M1448 315h6" stroke="#4e9e07"/><path d="M1454 315h6" stroke="#549e06"/><path d="M1460 315h6" stroke="#599e04"/><path d="M1466 315h6" stroke="#5f9e03"/><path d="M1472 315h6" stroke="#659e01"/><path d="M1478 315h6" stroke="#6b9e00"/><path d="M1484 315h6" stroke="#719e00"/><path d="M1490 315h6" stroke="#779e00"/><path d="M1496 315h6" stroke="#7d9e00"/><path d="M1502 315h6" stroke="#839e00"/><path d="M1508 315h6" stroke="#8a9e00"/><path d="M1514 315h6" stroke="#909e00"/><path d="M1520 315h6" stroke="#979e00"/><path d="M1148 321h6" stroke="#009e3c"/><path d="M1154 321h6" stroke="#009e3b"/><path d="M1160 321h12" stroke="#009e3a"/><path d="M1172 321h6" stroke="#009e39"/><path d="M1178 321h6" stroke="#009e38"/><path d="M1184 321h12" stroke="#009e37"/><path d="M1196 321h6" stroke="#009e36"/><path d="M1202 321h6" stroke="#009e35"/><path d="M1208 321h12" stroke="#009e34"/><path d="M1220 321h6" stroke="#009e33"/><path d="M1226 321h6" stroke="#009e32"/><path d="M1232 321h6" stroke="#009e31"/><path d="M1238 321h6" stroke="#009e30"/><path d="M1244 321h12" stroke="#009e2f"/><path d="M1256 321h6" stroke="#009e2e"/><path d="M1262 321h6" stroke="#009e2d"/><path d="M1268 321h6" stroke="#009e2c"/><path d="M1274 321h6" stroke="#009e2b"/><path d="M1280 321h6" stroke="#009e2a"/><path d="M1286 321h6" stroke="#009e29"/><path d="M1292 321h6" stroke="#009e28"/><path d="M1298 321h6" stroke="#009e27"/><path d="M1304 321h6" stroke="#009e26"/><path d="M1310 321h6" stroke="#009e25"/><path d="M1316 321h6" stroke="#009e24"/><path d="M1322 321h6" stroke="#009e23"/><path d="M1328 321h6" stroke="#009e22"/><path d="M1334 321h6" stroke="#009e21"/><path d="M1340 321h6" stroke="#009e20"/><path d="M1346 321h6" stroke="#009e1f"/><path d="M1352 321h6" stroke="#039e1e"/><path d="M1358 321h6" stroke="#089e1d"/><path d="M1364 321h6" stroke="#0c9e1c"/><path d="M1370 321h6" stroke="#109e1b"/><path d="M1376 321h6" stroke="#159e19"/><path d="M1382 321h6" stroke="#1a9e18"/><path d="M1388 321h6" stroke="#1e9e17"/><path d="M1394 321h6" stroke="#239e16"/><path d="M1400 321h6" stroke="#289e14"/><path d="M1406 321h6" stroke="#2d9e13"/><path d="M1412 321h6" stroke="#329e12"/><path d="M1418 321h6" stroke="#379e11"/><path d="M1424 321h6" stroke="#3c9e0f"/><path d="M1430 321h6" stroke="#419e0e"/><path d="M1436 321h6" stroke="#469e0c"/><path d="M1442 321h6" stroke="#4c9e0b"/><path d="M1448 321h6" stroke="#519e0a"/><path d="M1454 321h6" stroke="#579e08"/><path d="M1460 321h6" stroke="#5d9e07"/><path d="M1466 321h6" stroke="#639e05"/><path d="M1472 321h6" stroke="#699e04"/><path d="M1478 321h6" stroke="#6f9e02"/><path d="M1484 321h6" stroke="#759e00"/><path d="M1490 321h6" stroke="#7b9e00"/><path d="M1496 321h6" stroke="#829e00"/><path d="M1502 321h6" stroke="#889e00"/><path d="M1508 321h6" stroke="#8f9e00"/><path d="M1514 321h6" stroke="#969e00"/><path d="M1520 321h6" stroke="#9d9e00"/><path d="M1526 321h6" stroke="#9e9900"/><path d="M1148 327h12" stroke="#009e3e"/><path d="M1160 327h6" stroke="#009e3d"/><path d="M1166 327h12" stroke="#009e3c"/><path d="M1178 327h6" stroke="#009e3b"/><path d="M1184 327h6" stroke="#009e3a"/><path d="M1190 327h12" stroke="#009e39"/><path d="M1202 327h6" stroke="#009e38"/><path d="M1208 327h6" stroke="#009e37"/><path d="M1214 327h6" stroke="#009e36"/><path d="M1220 327h12" stroke="#009e35"/><path d="M1232 327h6" stroke="#009e34"/><path d="M1238 327h6" stroke="#009e33"/><path d="M1244 327h6" stroke="#009e32"/><path d="M1250 327h6" stroke="#009e31"/><path d="M1256 327h12" stroke="#009e30"/><path d="M1268 327h6" stroke="#009e2f"/><path d="M1274 327h6" stroke="#009e2e"/><path d="M1280 327h6" stroke="#009e2d"/><path d="M1286 327h6" stroke="#009e2c"/><path d="M1292 327h6" stroke="#009e2b"/><path d="M1298 327h6" stroke="#009e2a"/><path d="M1304 327h6" stroke="#009e29"/><path d="M1310 327h6" stroke="#009e28"/><path d="M1316 327h6" stroke="#009e27"/><path d="M1322 327h6" stroke="#009e26"/><path d="M1328 327h6" stroke="#009e25"/><path d="M1334 327h6" stroke="#009e24"/><path d="M1340 327h6" stroke="#009e23"/><path d="M1346 327h6" stroke="#009e22"/><path d="M1352 327h6" stroke="#049e21"/><path d="M1358 327h6" stroke="#099e20"/><path d="M1364 327h6" stroke="#0d9e1e"/><path d="M1370 327h6" stroke="#129e1d"/><path d="M1376 327h6" stroke="#169e1c"/><path d="M1382 327h6" stroke="#1b9e1b"/><path d="M1388 327h6" stroke="#209e1a"/><path d="M1394 327h6" stroke="#259e18"/><path d="M1400 327h6" stroke="#2a9e17"/><path d="M1406 327h6" stroke="#2f9e16"/><path d="M1412 327h6" stroke="#349e15"/><path d="M1418 327h6" stroke="#399e13"/><path d="M1424 327h6" stroke="#3e9e12"/><path d="M1430 327h6" stroke="#449e10"/><path d="M1436 327h6" stroke="#499e0f"/><path d="M1442 327h6" stroke="#4f9e0e"/><path d="M1448 327h6" stroke="#559e0c"/><path d="M1454 327h6" stroke="#5a9e0b"/><path d="M1460 327h6" stroke="#609e09"/><path d="M1466 327h6" stroke="#669e08"/><path d="M1472 327h6" stroke="#6d9e06"/><path d="M1478 327h6" stroke="#739e05"/><path d="M1484 327h6" stroke="#799e03"/><path d="M1490 327h6" stroke="#809e01"/><path d="M1496 327h6" stroke="#869e00"/><path d="M1502 327h6" stroke="#8d9e00"/><path d="M1508 327h6" stroke="#949e00"/><path d="M1514 327h6" stroke="#9b9e00"/><path d="M1520 327h6" stroke="#9e9a00"/><path d="M1526 327h6" stroke="#9e9300"/><path d="M1532 327h6" stroke="#9e8d00"/><path d="M1148 333h6" stroke="#009e41"/><path d="M1154 333h12" stroke="#009e40"/><path d="M1166 333h6" stroke="#009e3f"/><path d="M1172 333h12" stroke="#009e3e"/><path d="M1184 333h6" stroke="#009e3d"/><path d="M1190 333h6" stroke="#009e3c"/><path d="M1196 333h12" stroke="#009e3b"/><path d="M1208 333h6" stroke="#009e3a"/><path d="M1214 333h6" stroke="#009e39"/><path d="M1220 333h6" stroke="#009e38"/><path d="M1226 333h12" stroke="#009e37"/><path d="M1238 333h6" stroke="#009e36"/><path d="M1244 333h6" stroke="#009e35"/><path d="M1250 333h6" stroke="#009e34"/><path d="M1256 333h6" stroke="#009e33"/><path d="M1262 333h6" stroke="#009e32"/><path d="M1268 333h12" stroke="#009e31"/><path d="M1280 333h6" stroke="#009e30"/><path d="M1286 333h6" stroke="#009e2f"/><path d="M1292 333h6" stroke="#009e2e"/><path d="M1298 333h6" stroke="#009e2d"/><path d="M1304 333h6" stroke="#009e2c"/><path d="M1310 333h6" stroke="#009e2b"/><path d="M1316 333h6" stroke="#009e2a"/><path d="M1322 333h6" stroke="#009e29"/><path d="M1328 333h6" stroke="#009e28"/><path d="M1334 333h6" stroke="#009e27"/><path d="M1340 333h6" stroke="#009e26"/><path d="M1346 333h6" stroke="#019e25"/><path d="M1352 333h6" stroke="#069e23"/><path d="M1358 333h6" stroke="#0a9e22"/><path d="M1364 333h6" stroke="#0f9e21"/><path d="M1370 333h6" stroke="#139e20"/><path d="M1376 333h6" stroke="#189e1f"/><path d="M1382 333h6" stroke="#1d9e1e"/><path d="M1388 333h6" stroke="#229e1c"/><path d="M1394 333h6" stroke="#279e1b"/><path d="M1400 333h6" stroke="#2c9e1a"/><path d="M1406 333h6" stroke="#319e19"/><path d="M1412 333h6" stroke="#369e17"/><path d="M1418 333h6" stroke="#3c9e16"/><path d="M1424 333h6" stroke="#419e15"/><path d="M1430 333h6" stroke="#479e13"/><path d="M1436 333h6" stroke="#4c9e12"/><path d="M1442 333h6" stroke="#529e10"/><path d="M1448 333h6" stroke="#589e0f"/><path d="M1454 333h6" stroke="#5e9e0d"/><path d="M1460 333h6" stroke="#649e0c"/><path d="M1466 333h6" stroke="#6a9e0a"/><path d="M1472 333h6" stroke="#719e09"/><path d="M1478 333h6" stroke="#779e07"/><path d="M1484 333h6" stroke="#7e9e05"/><path d="M1490 333h6" stroke="#859e04"/><path d="M1496 333h6" stroke="#8b9e02"/><path d="M1502 333h6" stroke="#929e00"/><path d="M1508 333h6" stroke="#9a9e00"/><path d="M1514 333h6" stroke="#9e9b00"/><path d="M1520 333h6" stroke="#9e9400"/><path d="M1526 333h6" stroke="#9e8e00"/><path d="M1532 333h6" stroke="#9e8800"/><path d="M1538 333h6" stroke="#9e8200"/><path d="M1544 333h6" stroke="#9e7d00"/><path d="M1148 339h6" stroke="#009e44"/><path d="M1154 339h12" stroke="#009e43"/><path d="M1166 339h6" stroke="#009e42"/><path d="M1172 339h6" stroke="#009e41"/><path d="M1178 339h12" stroke="#009e40"/><path d="M1190 339h6" stroke="#009e3f"/><path d="M1196 339h6" stroke="#009e3e"/><path d="M1202 339h12" stroke="#009e3d"/><path d="M1214 339h6" stroke="#009e3c"/><path d="M1220 339h6" stroke="#009e3b"/><path d="M1226 339h6" stroke="#009e3a"/><path d="M1232 339h12" stroke="#009e39"/><path d="M1244 339h6" stroke="#009e38"/><path d="M1250 339h6" stroke="#009e37"/><path d="M1256 339h6" stroke="#009e36"/><path d="M1262 339h6" stroke="#009e35"/><path d="M1268 339h6" stroke="#009e34"/><path d="M1274 339h12" stroke="#009e33"/><path d="M1286 339h6" stroke="#009e32"/><path d="M1292 339h6" stroke="#009e31"/><path d="M1298 339h6" stroke="#009e30"/><path d="M1304 339h6" stroke="#009e2f"/><path d="M1310 339h6" stroke="#009e2e"/><path d="M1316 339h6" stroke="#009e2d"/><path d="M1322 339h6" stroke="#009e2c"/><path d="M1328 339h6" stroke="#009e2b"/><path d="M1334 339h6" stroke="#009e2a"/><path d="M1340 339h6" stroke="#009e29"/><path d="M1346 339h6" stroke="#029e28"/><path d="M1352 339h6" stroke="#079e26"/><path d="M1358 339h6" stroke="#0b9e25"/><path d="M1364 339h6" stroke="#109e24"/><path d="M1370 339h6" stroke="#159e23"/><path d="M1376 339h6" stroke="#1a9e22"/><path d="M1382 339h6" stroke="#1f9e21"/><path d="M1388 339h6" stroke="#249e1f"/><path d="M1394 339h6" stroke="#299e1e"/><path d="M1400 339h6" stroke="#2e9e1d"/><path d="M1406 339h6" stroke="#339e1c"/><path d="M1412 339h6" stroke="#399e1a"/><path d="M1418 339h6" stroke="#3e9e19"/><path d="M1424 339h6" stroke="#449e18"/><path d="M1430 339h6" stroke="#4a9e16"/><path d="M1436 339h6" stroke="#509e15"/><path d="M1442 339h6" stroke="#569e13"/><path d="M1448 339h6" stroke="#5c9e12"/><path d="M1454 339h6" stroke="#629e10"/><path d="M1460 339h6" stroke="#689e0f"/><path d="M1466 339h6" stroke="#6f9e0d"/><path d="M1472 339h6" stroke="#759e0c"/><path d="M1478 339h6" stroke="#7c9e0a"/><path d="M1484 339h6" stroke="#839e08"/><path d="M1490 339h6" stroke="#8a9e07"/><path d="M1496 339h6" stroke="#919e05"/><path d="M1502 339h6" stroke="#989e03"/><path d="M1508 339h6" stroke="#9e9d01"/><path d="M1514 339h6" stroke="#9e9600"/><path d="M1520 339h6" stroke="#9e8f00"/><path d="M1526 339h6" stroke="#9e8900"/><path d="M1532 339h6" stroke="#9e8300"/><path d="M1538 339h6" stroke="#9e7d00"/><path d="M1544 339h6" stroke="#9e7800"/><path d="M1550 339h6" stroke="#9e7300"/><path d="M1148 345h6" stroke="#009e47"/><path d="M1154 345h6" stroke="#009e46"/><path d="M1160 345h12" stroke="#009e45"/><path d="M1172 345h6" stroke="#009e44"/><path d="M1178 345h12" stroke="#009e43"/><path d="M1190 345h6" stroke="#009e42"/><path d="M1196 345h6" stroke="#009e41"/><path d="M1202 345h12" stroke="#009e40"/><path d="M1214 345h6" stroke="#009e3f"/><path d="M1220 345h6" stroke="#009e3e"/><path d="M1226 345h6" stroke="#009e3d"/><path d="M1232 345h12" stroke="#009e3c"/><path d="M1244 345h6" stroke="#009e3b"/><path d="M1250 345h6" stroke="#009e3a"/><path d="M1256 345h6" stroke="#009e39"/><path d="M1262 345h6" stroke="#009e38"/><path d="M1268 345h12" stroke="#009e37"/><path d="M1280 345h6" stroke="#009e36"/><path d="M1286 345h6" stroke="#009e35"/><path d="M1292 345h6" stroke="#009e34"/><path d="M1298 345h6" stroke="#009e33"/><path d="M1304 345h6" stroke="#009e32"/><path d="M1310 345h6" stroke="#009e31"/><path d="M1316 345h6" stroke="#009e30"/><path d="M1322 345h6" stroke="#009e2f"/><path d="M1328 345h6" stroke="#009e2e"/><path d="M1334 345h6" stroke="#009e2d"/><path d="M1340 345h6" stroke="#009e2c"/><path d="M1346 345h6" stroke="#039e2b"/><path d="M1352 345h6" stroke="#089e29"/><path d="M1358 345h6" stroke="#0d9e28"/><path d="M1364 345h6" stroke="#129e27"/><path d="M1370 345h6" stroke="#179e26"/><path d="M1376 345h6" stroke="#1c9e25"/><path d="M1382 345h6" stroke="#219e24"/><path d="M1388 345h6" stroke="#269e22"/><path d="M1394 345h6" stroke="#2b9e21"/><path d="M1400 345h6" stroke="#309e20"/><path d="M1406 345h6" stroke="#369e1f"/><path d="M1412 345h6" stroke="#3c9e1d"/><path d="M1418 345h6" stroke="#419e1c"/><path d="M1424 345h6" stroke="#479e1b"/><path d="M1430 345h6" stroke="#4d9e19"/><path d="M1436 345h6" stroke="#539e18"/><path d="M1442 345h6" stroke="#599e16"/><path d="M1448 345h6" stroke="#5f9e15"/><path d="M1454 345h6" stroke="#669e13"/><path d="M1460 345h6" stroke="#6c9e12"/><path d="M1466 345h6" stroke="#739e10"/><path d="M1472 345h6" stroke="#7a9e0f"/><path d="M1478 345h6" stroke="#819e0d"/><path d="M1484 345h6" stroke="#889e0b"/><path d="M1490 345h6" stroke="#8f9e09"/><path d="M1496 345h6" stroke="#969e08"/><path d="M1502 345h6" stroke="#9e9e06"/><path d="M1508 345h6" stroke="#9e9704"/><path d="M1514 345h6" stroke="#9e9002"/><path d="M1520 345h6" stroke="#9e8a00"/><path d="M1526 345h6" stroke="#9e8400"/><path d="M1532 345h6" stroke="#9e7e00"/><path d="M1538 345h6" stroke="#9e7900"/><path d="M1544 345h6" stroke="#9e7400"/><path d="M1550 345h6" stroke="#9e6f00"/><path d="M1556 345h6" stroke="#9e6b00"/><path d="M1148 351h6" stroke="#009e4a"/><path d="M1154 351h6" stroke="#009e49"/><path d="M1160 351h12" stroke="#009e48"/><path d="M1172 351h6" stroke="#009e47"/><path d="M1178 351h12" stroke="#009e46"/><path d="M1190 351h6" stroke="#009e45"/><path d="M1196 351h6" stroke="#009e44"/><path d="M1202 351h12" stroke="#009e43"/><path d="M1214 351h6" stroke="#009e42"/><path d="M1220 351h6" stroke="#009e41"/><path d="M1226 351h12" stroke="#009e40"/><path d="M1238 351h6" stroke="#009e3f"/><path d="M1244 351h6" stroke="#009e3e"/><path d="M1250 351h6" stroke="#009e3d"/><path d="M1256 351h6" stroke="#009e3c"/><path d="M1262 351h12" stroke="#009e3b"/><path d="M1274 351h6" stroke="#009e3a"/><path d="M1280 351h6" stroke="#009e39"/><path d="M1286 351h6" stroke="#009e38"/><path d="M1292 351h6" stroke="#009e37"/><path d="M1298 351h6" stroke="#009e36"/><path d="M1304 351h6" stroke="#009e35"/><path d="M1310 351h6" stroke="#009e34"/><path d="M1316 351h6" stroke="#009e33"/><path d="M1322 351h6" stroke="#009e32"/><path d="M1328 351h6" stroke="#009e31"/><path d="M1334 351h6" stroke="#009e30"/><path d="M1340 351h6" stroke="#009e2f"/><path d="M1346 351h6" stroke="#059e2e"/><path d="M1352 351h6" stroke="#099e2d"/><path d="M1358 351h6" stroke="#0e9e2c"/><path d="M1364 351h6" stroke="#139e2a"/><path d="M1370 351h6" stroke="#189e29"/><path d="M1376 351h6" stroke="#1d9e28"/><path d="M1382 351h6" stroke="#239e27"/><path d="M1388 351h6" stroke="#289e26"/><path d="M1394 351h6" stroke="#2d9e24"/><path d="M1400 351h6" stroke="#339e23"/><path d="M1406 351h6" stroke="#399e22"/><path d="M1412 351h6" stroke="#3e9e20"/><path d="M1418 351h6" stroke="#449e1f"/><path d="M1424 351h6" stroke="#4a9e1e"/><path d="M1430 351h6" stroke="#509e1c"/><path d="M1436 351h6" stroke="#579e1b"/><path d="M1442 351h6" stroke="#5d9e19"/><path d="M1448 351h6" stroke="#639e18"/><path d="M1454 351h6" stroke="#6a9e16"/><path d="M1460 351h6" stroke="#719e15"/><path d="M1466 351h6" stroke="#789e13"/><path d="M1472 351h6" stroke="#7f9e12"/><path d="M1478 351h6" stroke="#869e10"/><path d="M1484 351h6" stroke="#8d9e0e"/><path d="M1490 351h6" stroke="#959e0d"/><path d="M1496 351h6" stroke="#9c9e0b"/><path d="M1502 351h6" stroke="#9e9809"/><path d="M1508 351h6" stroke="#9e9107"/><path d="M1514 351h6" stroke="#9e8a05"/><path d="M1520 351h6" stroke="#9e8403"/><path d="M1526 351h6" stroke="#9e7f01"/><path d="M1532 351h6" stroke="#9e7900"/><path d="M1538 351h6" stroke="#9e7400"/><path d="M1544 351h6" stroke="#9e6f00"/><path d="M1550 351h6" stroke="#9e6b00"/><path d="M1556 351h6" stroke="#9e6600"/><path d="M1562 351h6" stroke="#9e6200"/><path d="M1568 351h6" stroke="#9e5f00"/><path d="M1148 357h6" stroke="#009e4d"/><path d="M1154 357h12" stroke="#009e4c"/><path d="M1166 357h6" stroke="#009e4b"/><path d="M1172 357h12" stroke="#009e4a"/><path d="M1184 357h6" stroke="#009e49"/><path d="M1190 357h6" stroke="#009e48"/><path d="M1196 357h12" stroke="#009e47"/><path d="M1208 357h6" stroke="#009e46"/><path d="M1214 357h6" stroke="#009e45"/><path d="M1220 357h12" stroke="#009e44"/><path d="M1232 357h6" stroke="#009e43"/><path d="M1238 357h6" stroke="#009e42"/><path d="M1244 357h6" stroke="#009e41"/><path d="M1250 357h12" stroke="#009e40"/><path d="M1262 357h6" stroke="#009e3f"/><path d="M1268 357h6" stroke="#009e3e"/><path d="M1274 357h6" stroke="#009e3d"/><path d="M1280 357h6" stroke="#009e3c"/><path d="M1286 357h6" stroke="#009e3b"/><path d="M1292 357h6" stroke="#009e3a"/><path d="M1298 357h6" stroke="#009e39"/><path d="M1304 357h6" stroke="#009e38"/><path d="M1310 357h6" stroke="#009e37"/><path d="M1316 357h6" stroke="#009e36"/><path d="M1322 357h6" stroke="#009e35"/><path d="M1328 357h6" stroke="#009e34"/><path d="M1334 357h6" stroke="#009e33"/><path d="M1340 357h6" stroke="#019e32"/><path d="M1346 357h6" stroke="#069e31"/><path d="M1352 357h6" stroke="#0b9e30"/><path d="M1358 357h6" stroke="#109e2f"/><path d="M1364 357h6" stroke="#159e2e"/><path d="M1370 357h6" stroke="#1a9e2d"/><path d="M1376 357h6" stroke="#1f9e2b"/><path d="M1382 357h6" stroke="#259e2a"/><path d="M1388 357h6" stroke="#2a9e29"/><path d="M1394 357h6" stroke="#309e28"/><path d="M1400 357h6" stroke="#369e26"/><path d="M1406 357h6" stroke="#3b9e25"/><path d="M1412 357h6" stroke="#419e24"/><path d="M1418 357h6" stroke="#479e23"/><path d="M1424 357h6" stroke="#4e9e21"/><path d="M1430 357h6" stroke="#549e20"/><path d="M1436 357h6" stroke="#5a9e1e"/><path d="M1442 357h6" stroke="#619e1d"/><path d="M1448 357h6" stroke="#689e1b"/><path d="M1454 357h6" stroke="#6e9e1a"/><path d="M1460 357h6" stroke="#759e18"/><path d="M1466 357h6" stroke="#7d9e17"/><path d="M1472 357h6" stroke="#849e15"/><path d="M1478 357h6" stroke="#8b9e13"/><path d="M1484 357h6" stroke="#939e12"/><path d="M1490 357h6" stroke="#9b9e10"/><path d="M1496 357h6" stroke="#9e9a0e"/><path d="M1502 357h6" stroke="#9e920b"/><path d="M1508 357h6" stroke="#9e8b09"/><path d="M1514 357h6" stroke="#9e8507"/><path d="M1520 357h6" stroke="#9e7f05"/><path d="M1526 357h6" stroke="#9e7a03"/><path d="M1532 357h6" stroke="#9e7402"/><path d="M1538 357h6" stroke="#9e6f00"/><path d="M1544 357h6" stroke="#9e6b00"/><path d="M1550 357h6" stroke="#9e6600"/><path d="M1556 357h6" stroke="#9e6200"/><path d="M1562 357h6" stroke="#9e5e00"/><path d="M1568 357h6" stroke="#9e5b00"/><path d="M1574 357h6" stroke="#9e5700"/><path d="M1148 363h12" stroke="#009e50"/><path d="M1160 363h6" stroke="#009e4f"/><path d="M1166 363h12" stroke="#009e4e"/><path d="M1178 363h6" stroke="#009e4d"/><path d="M1184 363h6" stroke="#009e4c"/><path d="M1190 363h12" stroke="#009e4b"/><path d="M1202 363h6" stroke="#009e4a"/><path d="M1208 363h12" stroke="#009e49"/><path d="M1220 363h6" stroke="#009e48"/><path d="M1226 363h6" stroke="#009e47"/><path d="M1232 363h6" stroke="#009e46"/><path d="M1238 363h12" stroke="#009e45"/><path d="M1250 363h6" stroke="#009e44"/><path d="M1256 363h6" stroke="#009e43"/><path d="M1262 363h6" stroke="#009e42"/><path d="M1268 363h6" stroke="#009e41"/><path d="M1274 363h12" stroke="#009e40"/><path d="M1286 363h6" stroke="#009e3f"/><path d="M1292 363h6" stroke="#009e3e"/><path d="M1298 363h6" stroke="#009e3d"/><path d="M1304 363h6" stroke="#009e3c"/><path d="M1310 363h6" stroke="#009e3b"/><path d="M1316 363h6" stroke="#009e3a"/><path d="M1322 363h6" stroke="#009e39"/><path d="M1328 363h6" stroke="#009e38"/><path d="M1334 363h6" stroke="#009e37"/><path d="M1340 363h6" stroke="#029e36"/><path d="M1346 363h6" stroke="#079e35"/><path d="M1352 363h6" stroke="#0c9e34"/><path d="M1358 363h6" stroke="#119e32"/><path d="M1364 363h6" stroke="#179e31"/><path d="M1370 363h6" stroke="#1c9e30"/><path d="M1376 363h6" stroke="#219e2f"/><path d="M1382 363h6" stroke="#279e2e"/><path d="M1388 363h6" stroke="#2d9e2d"/><path d="M1394 363h6" stroke="#329e2b"/><path d="M1400 363h6" stroke="#389e2a"/><path d="M1406 363h6" stroke="#3e9e29"/><path d="M1412 363h6" stroke="#449e27"/><path d="M1418 363h6" stroke="#4b9e26"/><path d="M1424 363h6" stroke="#519e25"/><path d="M1430 363h6" stroke="#589e23"/><path d="M1436 363h6" stroke="#5e9e22"/><path d="M1442 363h6" stroke="#659e20"/><path d="M1448 363h6" stroke="#6c9e1f"/><path d="M1454 363h6" stroke="#739e1d"/><path d="M1460 363h6" stroke="#7a9e1c"/><path d="M1466 363h6" stroke="#829e1a"/><path d="M1472 363h6" stroke="#899e18"/><path d="M1478 363h6" stroke="#919e17"/><path d="M1484 363h6" stroke="#999e15"/><path d="M1490 363h6" stroke="#9e9b13"/><path d="M1496 363h6" stroke="#9e9310"/><path d="M1502 363h6" stroke="#9e8c0e"/><path d="M1508 363h6" stroke="#9e860c"/><path d="M1514 363h6" stroke="#9e800a"/><path d="M1520 363h6" stroke="#9e7a08"/><path d="M1526 363h6" stroke="#9e7506"/><path d="M1532 363h6" stroke="#9e7004"/><path d="M1538 363h6" stroke="#9e6b02"/><path d="M1544 363h6" stroke="#9e6601"/><path d="M1550 363h6" stroke="#9e6200"/><path d="M1556 363h6" stroke="#9e5e00"/><path d="M1562 363h6" stroke="#9e5a00"/><path d="M1568 363h6" stroke="#9e5700"/><path d="M1574 363h6" stroke="#9e5400"/><path d="M1580 363h6" stroke="#9e5000"/><path d="M1148 369h6" stroke="#009e54"/><path d="M1154 369h6" stroke="#009e53"/><path d="M1160 369h12" stroke="#009e52"/><path d="M1172 369h6" stroke="#009e51"/><path d="M1178 369h12" stroke="#009e50"/><path d="M1190 369h6" stroke="#009e4f"/><path d="M1196 369h6" stroke="#009e4e"/><path d="M1202 369h12" stroke="#009e4d"/><path d="M1214 369h6" stroke="#009e4c"/><path d="M1220 369h12" stroke="#009e4b"/><path d="M1232 369h6" stroke="#009e4a"/><path d="M1238 369h6" stroke="#009e49"/><path d="M1244 369h6" stroke="#009e48"/><path d="M1250 369h12" stroke="#009e47"/><path d="M1262 369h6" stroke="#009e46"/><path d="M1268 369h6" stroke="#009e45"/><path d="M1274 369h6" stroke="#009e44"/><path d="M1280 369h6" stroke="#009e43"/><path d="M1286 369h6" stroke="#009e42"/><path d="M1292 369h6" stroke="#009e41"/><path d="M1298 369h6" stroke="#009e40"/><path d="M1304 369h12" stroke="#009e3f"/><path d="M1316 369h6" stroke="#009e3e"/><path d="M1322 369h6" stroke="#009e3d"/><path d="M1328 369h6" stroke="#009e3c"/><path d="M1334 369h6" stroke="#009e3b"/><path d="M1340 369h6" stroke="#049e39"/><path d="M1346 369h6" stroke="#099e38"/><path d="M1352 369h6" stroke="#0e9e37"/><path d="M1358 369h6" stroke="#139e36"/><path d="M1364 369h6" stroke="#199e35"/><path d="M1370 369h6" stroke="#1e9e34"/><path d="M1376 369h6" stroke="#249e33"/><path d="M1382 369h6" stroke="#299e32"/><path d="M1388 369h6" stroke="#2f9e30"/><path d="M1394 369h6" stroke="#359e2f"/><path d="M1400 369h6" stroke="#3b9e2e"/><path d="M1406 369h6" stroke="#419e2d"/><path d="M1412 369h6" stroke="#489e2b"/><path d="M1418 369h6" stroke="#4e9e2a"/><path d="M1424 369h6" stroke="#559e28"/><path d="M1430 369h6" stroke="#5c9e27"/><path d="M1436 369h6" stroke="#629e26"/><path d="M1442 369h6" stroke="#699e24"/><path d="M1448 369h6" stroke="#719e23"/><path d="M1454 369h6" stroke="#789e21"/><path d="M1460 369h6" stroke="#809e1f"/><path d="M1466 369h6" stroke="#879e1e"/><path d="M1472 369h6" stroke="#8f9e1c"/><path d="M1478 369h6" stroke="#979e1b"/><path d="M1484 369h6" stroke="#9e9d19"/><path d="M1490 369h6" stroke="#9e9516"/><path d="M1496 369h6" stroke="#9e8d13"/><path d="M1502 369h6" stroke="#9e8710"/><path d="M1508 369h6" stroke="#9e800e"/><path d="M1514 369h6" stroke="#9e7a0c"/><path d="M1520 369h6" stroke="#9e750a"/><path d="M1526 369h6" stroke="#9e7008"/><path d="M1532 369h6" stroke="#9e6b06"/><path d="M1538 369h6" stroke="#9e6605"/><path d="M1544 369h6" stroke="#9e6203"/><path d="M1550 369h6" stroke="#9e5e02"/><path d="M1556 369h6" stroke="#9e5a00"/><path d="M1562 369h6" stroke="#9e5700"/><path d="M1568 369h6" stroke="#9e5300"/><path d="M1574 369h6" stroke="#9e5000"/><path d="M1580 369h6" stroke="#9e4d00"/><path d="M1586 369h6" stroke="#9e4a00"/><path d="M1592 369h6" stroke="#9e4700"/><path d="M1154 375h12" stroke="#009e56"/><path d="M1166 375h6" stroke="#009e55"/><path d="M1172 375h12" stroke="#009e54"/><path d="M1184 375h6" stroke="#009e53"/><path d="M1190 375h12" stroke="#009e52"/><path d="M1202 375h6" stroke="#009e51"/><path d="M1208 375h12" stroke="#009e50"/><path d="M1220 375h6" stroke="#009e4f"/><path d="M1226 375h6" stroke="#009e4e"/><path d="M1232 375h12" stroke="#009e4d"/><path d="M1244 375h6" stroke="#009e4c"/><path d="M1250 375h6" stroke="#009e4b"/><path d="M1256 375h6" stroke="#009e4a"/><path d="M1262 375h12" stroke="#009e49"/><path d="M1274 375h6" stroke="#009e48"/><path d="M1280 375h6" stroke="#009e47"/><path d="M1286 375h6" stroke="#009e46"/><path d="M1292 375h6" stroke="#009e45"/><path d="M1298 375h6" stroke="#009e44"/><path d="M1304 375h6" stroke="#009e43"/><path d="M1310 375h6" stroke="#009e42"/><path d="M1316 375h6" stroke="#009e41"/><path d="M1322 375h6" stroke="#009e40"/><path d="M1328 375h6" stroke="#009e3f"/><path d="M1334 375h6" stroke="#009e3e"/><path d="M1340 375h6" stroke="#059e3d"/><path d="M1346 375h6" stroke="#0a9e3c"/><path d="M1352 375h6" stroke="#0f9e3b"/><path d="M1358 375h6" stroke="#159e3a"/><path d="M1364 375h6" stroke="#1a9e39"/><path d="M1370 375h6" stroke="#209e38"/><path d="M1376 375h6" stroke="#269e37"/><path d="M1382 375h6" stroke="#2c9e36"/><path d="M1388 375h6" stroke="#329e34"/><path d="M1394 375h6" stroke="#389e33"/><path d="M1400 375h6" stroke="#3e9e32"/><path d="M1406 375h6" stroke="#459e31"/><path d="M1412 375h6" stroke="#4b9e2f"/><path d="M1418 375h6" stroke="#529e2e"/><path d="M1424 375h6" stroke="#599e2c"/><path d="M1430 375h6" stroke="#609e2b"/><path d="M1436 375h6" stroke="#679e2a"/><path d="M1442 375h6" stroke="#6e9e28"/><path d="M1448 375h6" stroke="#769e27"/><path d="M1454 375h6" stroke="#7d9e25"/><path d="M1460 375h6" stroke="#859e23"/><path d="M1466 375h6" stroke="#8d9e22"/><path d="M1472 375h6" stroke="#959e20"/><path d="M1478 375h6" stroke="#9e9e1f"/><path d="M1484 375h6" stroke="#9e961b"/><path d="M1490 375h6" stroke="#9e8f18"/><path d="M1496 375h6" stroke="#9e8816"/><path d="M1502 375h6" stroke="#9e8113"/><path d="M1508 375h6" stroke="#9e7b11"/><path d="M1514 375h6" stroke="#9e750e"/><path d="M1520 375h6" stroke="#9e700c"/><path d="M1526 375h6" stroke="#9e6b0a"/><path d="M1532 375h6" stroke="#9e6608"/><path d="M1538 375h6" stroke="#9e6207"/><path d="M1544 375h6" stroke="#9e5e05"/><path d="M1550 375h6" stroke="#9e5a04"/><path d="M1556 375h6" stroke="#9e5602"/><path d="M1562 375h6" stroke="#9e5301"/><path d="M1568 375h6" stroke="#9e4f00"/><path d="M1574 375h6" stroke="#9e4c00"/><path d="M1580 375h6" stroke="#9e4900"/><path d="M1586 375h6" stroke="#9e4600"/><path d="M1592 375h6" stroke="#9e4400"/><path d="M1598 375h6" stroke="#9e4100"/><path d="M1154 381h6" stroke="#009e5a"/><path d="M1160 381h12" stroke="#009e59"/><path d="M1172 381h12" stroke="#009e58"/><path d="M1184 381h6" stroke="#009e57"/><path d="M1190 381h12" stroke="#009e56"/><path d="M1202 381h6" stroke="#009e55"/><path d="M1208 381h6" stroke="#009e54"/><path d="M1214 381h12" stroke="#009e53"/><path d="M1226 381h6" stroke="#009e52"/><path d="M1232 381h12" stroke="#009e51"/><path d="M1244 381h6" stroke="#009e50"/><path d="M1250 381h6" stroke="#009e4f"/><path d="M1256 381h6" stroke="#009e4e"/><path d="M1262 381h12" stroke="#009e4d"/><path d="M1274 381h6" stroke="#009e4c"/><path d="M1280 381h6" stroke="#009e4b"/><path d="M1286 381h6" stroke="#009e4a"/><path d="M1292 381h6" stroke="#009e49"/><path d="M1298 381h6" stroke="#009e48"/><path d="M1304 381h6" stroke="#009e47"/><path d="M1310 381h6" stroke="#009e46"/><path d="M1316 381h6" stroke="#009e45"/><path d="M1322 381h12" stroke="#009e44"/><path d="M1334 381h6" stroke="#019e43"/><path d="M1340 381h6" stroke="#069e41"/><path d="M1346 381h6" stroke="#0c9e40"/><path d="M1352 381h6" stroke="#119e3f"/><path d="M1358 381h6" stroke="#179e3e"/><path d="M1364 381h6" stroke="#1d9e3d"/><path d="M1370 381h6" stroke="#229e3c"/><path d="M1376 381h6" stroke="#289e3b"/><path d="M1382 381h6" stroke="#2e9e3a"/><path d="M1388 381h6" stroke="#359e39"/><path d="M1394 381h6" stroke="#3b9e37"/><path d="M1400 381h6" stroke="#419e36"/><path d="M1406 381h6" stroke="#489e35"/><path d="M1412 381h6" stroke="#4f9e33"/><path d="M1418 381h6" stroke="#569e32"/><path d="M1424 381h6" stroke="#5d9e31"/><path d="M1430 381h6" stroke="#649e2f"/><path d="M1436 381h6" stroke="#6c9e2e"/><path d="M1442 381h6" stroke="#739e2c"/><path d="M1448 381h6" stroke="#7b9e2b"/><path d="M1454 381h6" stroke="#839e29"/><path d="M1460 381h6" stroke="#8b9e28"/><path d="M1466 381h6" stroke="#949e26"/><path d="M1472 381h6" stroke="#9c9e24"/><path d="M1478 381h6" stroke="#9e9821"/><path d="M1484 381h6" stroke="#9e901e"/><path d="M1490 381h6" stroke="#9e881b"/><path d="M1496 381h6" stroke="#9e8218"/><path d="M1502 381h6" stroke="#9e7b15"/><path d="M1508 381h6" stroke="#9e7613"/><path d="M1514 381h6" stroke="#9e7011"/><path d="M1520 381h6" stroke="#9e6b0f"/><path d="M1526 381h6" stroke="#9e660d"/><path d="M1532 381h6" stroke="#9e620b"/><path d="M1538 381h6" stroke="#9e5e09"/><path d="M1544 381h6" stroke="#9e5a07"/><path d="M1550 381h6" stroke="#9e5606"/><path d="M1556 381h6" stroke="#9e5204"/><path d="M1562 381h6" stroke="#9e4f03"/><path d="M1568 381h6" stroke="#9e4c01"/><path d="M1574 381h6" stroke="#9e4900"/><path d="M1580 381h6" stroke="#9e4600"/><path d="M1586 381h6" stroke="#9e4300"/><path d="M1592 381h6" stroke="#9e4000"/><path d="M1598 381h6" stroke="#9e3e00"/><path d="M1604 381h6" stroke="#9e3c00"/><path d="M1154 387h6" stroke="#009e5e"/><path d="M1160 387h12" stroke="#009e5d"/><path d="M1172 387h6" stroke="#009e5c"/><path d="M1178 387h12" stroke="#009e5b"/><path d="M1190 387h6" stroke="#009e5a"/><path d="M1196 387h12" stroke="#009e59"/><path d="M1208 387h6" stroke="#009e58"/><path d="M1214 387h12" stroke="#009e57"/><path d="M1226 387h6" stroke="#009e56"/><path d="M1232 387h12" stroke="#009e55"/><path d="M1244 387h6" stroke="#009e54"/><path d="M1250 387h6" stroke="#009e53"/><path d="M1256 387h12" stroke="#009e52"/><path d="M1268 387h6" stroke="#009e51"/><path d="M1274 387h6" stroke="#009e50"/><path d="M1280 387h6" stroke="#009e4f"/><path d="M1286 387h6" stroke="#009e4e"/><path d="M1292 387h6" stroke="#009e4d"/><path d="M1298 387h12" stroke="#009e4c"/><path d="M1310 387h6" stroke="#009e4b"/><path d="M1316 387h6" stroke="#009e4a"/><path d="M1322 387h6" stroke="#009e49"/><path d="M1328 387h6" stroke="#009e48"/><path d="M1334 387h6" stroke="#029e47"/><path d="M1340 387h6" stroke="#089e46"/><path d="M1346 387h6" stroke="#0d9e45"/><path d="M1352 387h6" stroke="#139e44"/><path d="M1358 387h6" stroke="#199e43"/><path d="M1364 387h6" stroke="#1f9e42"/><path d="M1370 387h6" stroke="#259e40"/><path d="M1376 387h6" stroke="#2b9e3f"/><path d="M1382 387h6" stroke="#319e3e"/><path d="M1388 387h6" stroke="#389e3d"/><path d="M1394 387h6" stroke="#3e9e3c"/><path d="M1400 387h6" stroke="#459e3a"/><path d="M1406 387h6" stroke="#4c9e39"/><path d="M1412 387h6" stroke="#539e38"/><path d="M1418 387h6" stroke="#5a9e37"/><path d="M1424 387h6" stroke="#619e35"/><path d="M1430 387h6" stroke="#699e34"/><path d="M1436 387h6" stroke="#719e32"/><path d="M1442 387h6" stroke="#799e31"/><path d="M1448 387h6" stroke="#819e2f"/><path d="M1454 387h6" stroke="#899e2e"/><path d="M1460 387h6" stroke="#929e2c"/><path d="M1466 387h6" stroke="#9a9e2b"/><path d="M1472 387h6" stroke="#9e9928"/><path d="M1478 387h6" stroke="#9e9124"/><path d="M1484 387h6" stroke="#9e8921"/><path d="M1490 387h6" stroke="#9e821e"/><path d="M1496 387h6" stroke="#9e7c1b"/><path d="M1502 387h6" stroke="#9e7618"/><path d="M1508 387h6" stroke="#9e7015"/><path d="M1514 387h6" stroke="#9e6b13"/><path d="M1520 387h6" stroke="#9e6611"/><path d="M1526 387h6" stroke="#9e620f"/><path d="M1532 387h6" stroke="#9e5d0d"/><path d="M1538 387h6" stroke="#9e590b"/><path d="M1544 387h6" stroke="#9e5609"/><path d="M1550 387h6" stroke="#9e5208"/><path d="M1556 387h6" stroke="#9e4e06"/><path d="M1562 387h6" stroke="#9e4b05"/><path d="M1568 387h6" stroke="#9e4803"/><path d="M1574 387h6" stroke="#9e4502"/><path d="M1580 387h6" stroke="#9e4201"/><path d="M1586 387h6" stroke="#9e4000"/><path d="M1592 387h6" stroke="#9e3d00"/><path d="M1598 387h6" stroke="#9e3b00"/><path d="M1604 387h6" stroke="#9e3800"/><path d="M1610 387h6" stroke="#9e3600"/><path d="M1154 393h6" stroke="#009e62"/><path d="M1160 393h12" stroke="#009e61"/><path d="M1172 393h6" stroke="#009e60"/><path d="M1178 393h12" stroke="#009e5f"/><path d="M1190 393h12" stroke="#009e5e"/><path d="M1202 393h6" stroke="#009e5d"/><path d="M1208 393h12" stroke="#009e5c"/><path d="M1220 393h6" stroke="#009e5b"/><path d="M1226 393h12" stroke="#009e5a"/><path d="M1238 393h6" stroke="#009e59"/><path d="M1244 393h6" stroke="#009e58"/><path d="M1250 393h12" stroke="#009e57"/><path d="M1262 393h6" stroke="#009e56"/><path d="M1268 393h6" stroke="#009e55"/><path d="M1274 393h6" stroke="#009e54"/><path d="M1280 393h12" stroke="#009e53"/><path d="M1292 393h6" stroke="#009e52"/><path d="M1298 393h6" stroke="#009e51"/><path d="M1304 393h6" stroke="#009e50"/><path d="M1310 393h6" stroke="#009e4f"/><path d="M1316 393h6" stroke="#009e4e"/><path d="M1322 393h6" stroke="#009e4d"/><path d="M1328 393h6" stroke="#009e4c"/><path d="M1334 393h6" stroke="#049e4b"/><path d="M1340 393h6" stroke="#099e4a"/><path d="M1346 393h6" stroke="#0f9e49"/><path d="M1352 393h6" stroke="#159e48"/><path d="M1358 393h6" stroke="#1b9e47"/><path d="M1364 393h6" stroke="#219e46"/><path d="M1370 393h6" stroke="#279e45"/><path d="M1376 393h6" stroke="#2e9e44"/><path d="M1382 393h6" stroke="#349e43"/><path d="M1388 393h6" stroke="#3b9e42"/><path d="M1394 393h6" stroke="#429e40"/><path d="M1400 393h6" stroke="#499e3f"/><path d="M1406 393h6" stroke="#509e3e"/><path d="M1412 393h6" stroke="#579e3d"/><path d="M1418 393h6" stroke="#5e9e3b"/><path d="M1424 393h6" stroke="#669e3a"/><path d="M1430 393h6" stroke="#6e9e39"/><path d="M1436 393h6" stroke="#769e37"/><path d="M1442 393h6" stroke="#7e9e36"/><path d="M1448 393h6" stroke="#879e34"/><path d="M1454 393h6" stroke="#8f9e33"/><path d="M1460 393h6" stroke="#989e31"/><path d="M1466 393h6" stroke="#9e9b2f"/><path d="M1472 393h6" stroke="#9e922a"/><path d="M1478 393h6" stroke="#9e8a27"/><path d="M1484 393h6" stroke="#9e8323"/><path d="M1490 393h6" stroke="#9e7d20"/><path d="M1496 393h6" stroke="#9e761d"/><path d="M1502 393h6" stroke="#9e711a"/><path d="M1508 393h6" stroke="#9e6b18"/><path d="M1514 393h6" stroke="#9e6615"/><path d="M1520 393h6" stroke="#9e6213"/><path d="M1526 393h6" stroke="#9e5d11"/><path d="M1532 393h6" stroke="#9e590f"/><path d="M1538 393h6" stroke="#9e550d"/><path d="M1544 393h6" stroke="#9e510b"/><path d="M1550 393h6" stroke="#9e4e0a"/><path d="M1556 393h6" stroke="#9e4b08"/><path d="M1562 393h6" stroke="#9e4706"/><path d="M1568 393h6" stroke="#9e4505"/><path d="M1574 393h6" stroke="#9e4204"/><path d="M1580 393h6" stroke="#9e3f02"/><path d="M1586 393h6" stroke="#9e3c01"/><path d="M1592 393h6" stroke="#9e3a00"/><path d="M1598 393h6" stroke="#9e3800"/><path d="M1604 393h6" stroke="#9e3500"/><path d="M1610 393h6" stroke="#9e3300"/><path d="M1616 393h6" stroke="#9e3100"/><path d="M1622 393h6" stroke="#9e2f00"/><path d="M1154 399h6" stroke="#009e66"/><path d="M1160 399h12" stroke="#009e65"/><path d="M1172 399h12" stroke="#009e64"/><path d="M1184 399h6" stroke="#009e63"/><path d="M1190 399h12" stroke="#009e62"/><path d="M1202 399h12" stroke="#009e61"/><path d="M1214 399h6" stroke="#009e60"/><path d="M1220 399h12" stroke="#009e5f"/><path d="M1232 399h6" stroke="#009e5e"/><path d="M1238 399h12" stroke="#009e5d"/><path d="M1250 399h6" stroke="#009e5c"/><path d="M1256 399h6" stroke="#009e5b"/><path d="M1262 399h12" stroke="#009e5a"/><path d="M1274 399h6" stroke="#009e59"/><path d="M1280 399h6" stroke="#009e58"/><path d="M1286 399h6" stroke="#009e57"/><path d="M1292 399h12" stroke="#009e56"/><path d="M1304 399h6" stroke="#009e55"/><path d="M1310 399h6" stroke="#009e54"/><path d="M1316 399h6" stroke="#009e53"/><path d="M1322 399h6" stroke="#009e52"/><path d="M1328 399h6" stroke="#009e51"/><path d="M1334 399h6" stroke="#059e50"/><path d="M1340 399h6" stroke="#0b9e4f"/><path d="M1346 399h6" stroke="#119e4e"/><path d="M1352 399h6" stroke="#179e4d"/><path d="M1358 399h6" stroke="#1d9e4c"/><path d="M1364 399h6" stroke="#239e4b"/><path d="M1370 399h6" stroke="#2a9e4a"/><path d="M1376 399h6" stroke="#309e49"/><path d="M1382 399h6" stroke="#379e48"/><path d="M1388 399h6" stroke="#3e9e47"/><path d="M1394 399h6" stroke="#459e45"/><path d="M1400 399h6" stroke="#4c9e44"/><path d="M1406 399h6" stroke="#549e43"/><path d="M1412 399h6" stroke="#5b9e42"/><path d="M1418 399h6" stroke="#639e40"/><path d="M1424 399h6" stroke="#6b9e3f"/><path d="M1430 399h6" stroke="#739e3e"/><path d="M1436 399h6" stroke="#7c9e3c"/><path d="M1442 399h6" stroke="#849e3b"/><path d="M1448 399h6" stroke="#8d9e39"/><path d="M1454 399h6" stroke="#969e38"/><path d="M1460 399h6" stroke="#9e9d36"/><path d="M1466 399h6" stroke="#9e9431"/><path d="M1472 399h6" stroke="#9e8c2d"/><path d="M1478 399h6" stroke="#9e8429"/><path d="M1484 399h6" stroke="#9e7d26"/><path d="M1490 399h6" stroke="#9e7723"/><path d="M1496 399h6" stroke="#9e711f"/><path d="M1502 399h6" stroke="#9e6b1d"/><path d="M1508 399h6" stroke="#9e661a"/><path d="M1514 399h6" stroke="#9e6118"/><path d="M1520 399h6" stroke="#9e5d15"/><path d="M1526 399h6" stroke="#9e5913"/><path d="M1532 399h6" stroke="#9e5511"/><path d="M1538 399h6" stroke="#9e510f"/><path d="M1544 399h6" stroke="#9e4d0d"/><path d="M1550 399h6" stroke="#9e4a0c"/><path d="M1556 399h6" stroke="#9e470a"/><path d="M1562 399h6" stroke="#9e4408"/><path d="M1568 399h6" stroke="#9e4107"/><path d="M1574 399h6" stroke="#9e3e05"/><path d="M1580 399h6" stroke="#9e3c04"/><path d="M1586 399h6" stroke="#9e3903"/><path d="M1592 399h6" stroke="#9e3702"/><path d="M1598 399h6" stroke="#9e3501"/><path d="M1604 399h6" stroke="#9e3200"/><path d="M1610 399h6" stroke="#9e3000"/><path d="M1616 399h6" stroke="#9e2e00"/><path d="M1622 399h6" stroke="#9e2c00"/><path d="M1628 399h6" stroke="#9e2b00"/><path d="M1160 405h6" stroke="#009e6a"/><path d="M1166 405h12" stroke="#009e69"/><path d="M1178 405h12" stroke="#009e68"/><path d="M1190 405h6" stroke="#009e67"/><path d="M1196 405h12" stroke="#009e66"/><path d="M1208 405h12" stroke="#009e65"/><path d="M1220 405h6" stroke="#009e64"/><path d="M1226 405h12" stroke="#009e63"/><path d="M1238 405h6" stroke="#009e62"/><path d="M1244 405h12" stroke="#009e61"/><path d="M1256 405h6" stroke="#009e60"/><path d="M1262 405h6" stroke="#009e5f"/><path d="M1268 405h12" stroke="#009e5e"/><path d="M1280 405h6" stroke="#009e5d"/><path d="M1286 405h6" stroke="#009e5c"/><path d="M1292 405h12" stroke="#009e5b"/><path d="M1304 405h6" stroke="#009e5a"/><path d="M1310 405h6" stroke="#009e59"/><path d="M1316 405h6" stroke="#009e58"/><path d="M1322 405h6" stroke="#009e57"/><path d="M1328 405h6" stroke="#019e56"/><path d="M1334 405h6" stroke="#079e55"/><path d="M1340 405h6" stroke="#0d9e54"/><path d="M1346 405h6" stroke="#139e53"/><path d="M1352 405h6" stroke="#199e52"/><path d="M1358 405h6" stroke="#1f9e51"/><path d="M1364 405h6" stroke="#269e50"/><path d="M1370 405h6" stroke="#2d9e4f"/><path d="M1376 405h6" stroke="#349e4e"/><path d="M1382 405h6" stroke="#3b9e4d"/><path d="M1388 405h6" stroke="#429e4c"/><path d="M1394 405h6" stroke="#499e4b"/><path d="M1400 405h6" stroke="#519e4a"/><path d="M1406 405h6" stroke="#589e48"/><path d="M1412 405h6" stroke="#609e47"/><path d="M1418 405h6" stroke="#689e46"/><path d="M1424 405h6" stroke="#719e45"/><path d="M1430 405h6" stroke="#799e43"/><path d="M1436 405h6" stroke="#829e42"/><path d="M1442 405h6" stroke="#8b9e40"/><path d="M1448 405h6" stroke="#949e3f"/><path d="M1454 405h6" stroke="#9e9e3e"/><path d="M1460 405h6" stroke="#9e9539"/><path d="M1466 405h6" stroke="#9e8d34"/><path d="M1472 405h6" stroke="#9e8530"/><path d="M1478 405h6" stroke="#9e7e2c"/><path d="M1484 405h6" stroke="#9e7728"/><path d="M1490 405h6" stroke="#9e7125"/><path d="M1496 405h6" stroke="#9e6b22"/><path d="M1502 405h6" stroke="#9e661f"/><path d="M1508 405h6" stroke="#9e611c"/><path d="M1514 405h6" stroke="#9e5d1a"/><path d="M1520 405h6" stroke="#9e5817"/><path d="M1526 405h6" stroke="#9e5415"/><path d="M1532 405h6" stroke="#9e5013"/><path d="M1538 405h6" stroke="#9e4d11"/><path d="M1544 405h6" stroke="#9e490f"/><path d="M1550 405h6" stroke="#9e460d"/><path d="M1556 405h6" stroke="#9e430c"/><path d="M1562 405h6" stroke="#9e400a"/><path d="M1568 405h6" stroke="#9e3d09"/><path d="M1574 405h6" stroke="#9e3b07"/><path d="M1580 405h6" stroke="#9e3806"/><path d="M1586 405h6" stroke="#9e3605"/><path d="M1592 405h6" stroke="#9e3403"/><path d="M1598 405h6" stroke="#9e3102"/><path d="M1604 405h6" stroke="#9e2f01"/><path d="M1610 405h6" stroke="#9e2d00"/><path d="M1616 405h6" stroke="#9e2c00"/><path d="M1622 405h6" stroke="#9e2a00"/><path d="M1628 405h6" stroke="#9e2800"/><path d="M1634 405h6" stroke="#9e2600"/><path d="M1160 411h12" stroke="#009e6e"/><path d="M1172 411h12" stroke="#009e6d"/><path d="M1184 411h12" stroke="#009e6c"/><path d="M1196 411h6" stroke="#009e6b"/><path d="M1202 411h12" stroke="#009e6a"/><path d="M1214 411h12" stroke="#009e69"/><path d="M1226 411h6" stroke="#009e68"/><path d="M1232 411h12" stroke="#009e67"/><path d="M1244 411h12" stroke="#009e66"/><path d="M1256 411h6" stroke="#009e65"/><path d="M1262 411h6" stroke="#009e64"/><path d="M1268 411h12" stroke="#009e63"/><path d="M1280 411h6" stroke="#009e62"/><path d="M1286 411h6" stroke="#009e61"/><path d="M1292 411h12" stroke="#009e60"/><path d="M1304 411h6" stroke="#009e5f"/><path d="M1310 411h6" stroke="#009e5e"/><path d="M1316 411h6" stroke="#009e5d"/><path d="M1322 411h6" stroke="#009e5c"/><path d="M1328 411h6" stroke="#029e5c"/><path d="M1334 411h6" stroke="#089e5b"/><path d="M1340 411h6" stroke="#0f9e5a"/><path d="M1346 411h6" stroke="#159e59"/><path d="M1352 411h6" stroke="#1b9e58"/><path d="M1358 411h6" stroke="#229e57"/><path d="M1364 411h6" stroke="#299e56"/><path d="M1370 411h6" stroke="#309e55"/><path d="M1376 411h6" stroke="#379e54"/><path d="M1382 411h6" stroke="#3e9e53"/><path d="M1388 411h6" stroke="#459e52"/><path d="M1394 411h6" stroke="#4d9e51"/><path d="M1400 411h6" stroke="#559e4f"/><path d="M1406 411h6" stroke="#5d9e4e"/><path d="M1412 411h6" stroke="#659e4d"/><path d="M1418 411h6" stroke="#6e9e4c"/><path d="M1424 411h6" stroke="#769e4b"/><path d="M1430 411h6" stroke="#7f9e49"/><path d="M1436 411h6" stroke="#899e48"/><path d="M1442 411h6" stroke="#929e46"/><path d="M1448 411h6" stroke="#9c9e45"/><path d="M1454 411h6" stroke="#9e9740"/><path d="M1460 411h6" stroke="#9e8e3b"/><path d="M1466 411h6" stroke="#9e8637"/><path d="M1472 411h6" stroke="#9e7f32"/><path d="M1478 411h6" stroke="#9e782e"/><path d="M1484 411h6" stroke="#9e712b"/><path d="M1490 411h6" stroke="#9e6c27"/><path d="M1496 411h6" stroke="#9e6624"/><path d="M1502 411h6" stroke="#9e6121"/><path d="M1508 411h6" stroke="#9e5c1e"/><path d="M1514 411h6" stroke="#9e581c"/><path d="M1520 411h6" stroke="#9e541a"/><path d="M1526 411h6" stroke="#9e5017"/><path d="M1532 411h6" stroke="#9e4c15"/><path d="M1538 411h6" stroke="#9e4913"/><path d="M1544 411h6" stroke="#9e4511"/><path d="M1550 411h6" stroke="#9e420f"/><path d="M1556 411h6" stroke="#9e3f0e"/><path d="M1562 411h6" stroke="#9e3d0c"/><path d="M1568 411h6" stroke="#9e3a0a"/><path d="M1574 411h6" stroke="#9e3709"/><path d="M1580 411h6" stroke="#9e3508"/><path d="M1586 411h6" stroke="#9e3306"/><path d="M1592 411h6" stroke="#9e3105"/><path d="M1598 411h6" stroke="#9e2e04"/><path d="M1604 411h6" stroke="#9e2c03"/><path d="M1610 411h6" stroke="#9e2b02"/><path d="M1616 411h6" stroke="#9e2900"/><path d="M1622 411h6" stroke="#9e2700"/><path d="M1628 411h6" stroke="#9e2500"/><path d="M1634 411h6" stroke="#9e2400"/><path d="M1640 411h6" stroke="#9e2200"/><path d="M1646 411h6" stroke="#9e2100"/><path d="M1160 417h12" stroke="#009e73"/><path d="M1172 417h12" stroke="#009e72"/><path d="M1184 417h12" stroke="#009e71"/><path d="M1196 417h6" stroke="#009e70"/><path d="M1202 417h12" stroke="#009e6f"/><path d="M1214 417h12" stroke="#009e6e"/><path d="M1226 417h12" stroke="#009e6d"/><path d="M1238 417h6" stroke="#009e6c"/><path d="M1244 417h12" stroke="#009e6b"/><path d="M1256 417h6" stroke="#009e6a"/><path d="M1262 417h12" stroke="#009e69"/><path d="M1274 417h6" stroke="#009e68"/><path d="M1280 417h12" stroke="#009e67"/><path d="M1292 417h6" stroke="#009e66"/><path d="M1298 417h6" stroke="#009e65"/><path d="M1304 417h12" stroke="#009e64"/><path d="M1316 417h6" stroke="#009e63"/><path d="M1322 417h6" stroke="#009e62"/><path d="M1328 417h6" stroke="#049e61"/><path d="M1334 417h6" stroke="#0a9e60"/><path d="M1340 417h6" stroke="#119e60"/><path d="M1346 417h6" stroke="#179e5f"/><path d="M1352 417h6" stroke="#1e9e5e"/><path d="M1358 417h6" stroke="#259e5d"/><path d="M1364 417h6" stroke="#2c9e5c"/><path d="M1370 417h6" stroke="#339e5b"/><path d="M1376 417h6" stroke="#3a9e5a"/><path d="M1382 417h6" stroke="#429e59"/><path d="M1388 417h6" stroke="#4a9e58"/><path d="M1394 417h6" stroke="#529e57"/><path d="M1400 417h6" stroke="#5a9e56"/><path d="M1406 417h6" stroke="#629e54"/><path d="M1412 417h6" stroke="#6b9e53"/><path d="M1418 417h6" stroke="#749e52"/><path d="M1424 417h6" stroke="#7d9e51"/><path d="M1430 417h6" stroke="#869e50"/><path d="M1436 417h6" stroke="#909e4e"/><path d="M1442 417h6" stroke="#9a9e4d"/><path d="M1448 417h6" stroke="#9e9949"/><path d="M1454 417h6" stroke="#9e8f43"/><path d="M1460 417h6" stroke="#9e873e"/><path d="M1466 417h6" stroke="#9e7f39"/><path d="M1472 417h6" stroke="#9e7835"/><path d="M1478 417h6" stroke="#9e7231"/><path d="M1484 417h6" stroke="#9e6c2d"/><path d="M1490 417h6" stroke="#9e662a"/><path d="M1496 417h6" stroke="#9e6126"/><path d="M1502 417h6" stroke="#9e5c23"/><path d="M1508 417h6" stroke="#9e5821"/><path d="M1514 417h6" stroke="#9e531e"/><path d="M1520 417h6" stroke="#9e4f1c"/><path d="M1526 417h6" stroke="#9e4c19"/><path d="M1532 417h6" stroke="#9e4817"/><path d="M1538 417h6" stroke="#9e4515"/><path d="M1544 417h6" stroke="#9e4213"/><path d="M1550 417h6" stroke="#9e3f11"/><path d="M1556 417h6" stroke="#9e3c10"/><path d="M1562 417h6" stroke="#9e390e"/><path d="M1568 417h6" stroke="#9e370c"/><path d="M1574 417h6" stroke="#9e340b"/><path d="M1580 417h6" stroke="#9e3209"/><path d="M1586 417h6" stroke="#9e3008"/><path d="M1592 417h6" stroke="#9e2d07"/><path d="M1598 417h6" stroke="#9e2b05"/><path d="M1604 417h6" stroke="#9e2a04"/><path d="M1610 417h6" stroke="#9e2803"/><path d="M1616 417h6" stroke="#9e2602"/><path d="M1622 417h6" stroke="#9e2401"/><path d="M1628 417h6" stroke="#9e2300"/><path d="M1634 417h6" stroke="#9e2100"/><path d="M1640 417h6" stroke="#9e2000"/><path d="M1646 417h6" stroke="#9e1e00"/><path d="M1652 417h6" stroke="#9e1d00"/><path d="M1160 423h12" stroke="#009e78"/><path d="M1172 423h12" stroke="#009e77"/><path d="M1184 423h12" stroke="#009e76"/><path d="M1196 423h12" stroke="#009e75"/><path d="M1208 423h12" stroke="#009e74"/><path d="M1220 423h12" stroke="#009e73"/><path d="M1232 423h6" stroke="#009e72"/><path d="M1238 423h12" stroke="#009e71"/><path d="M1250 423h12" stroke="#009e70"/><path d="M1262 423h6" stroke="#009e6f"/><path d="M1268 423h12" stroke="#009e6e"/><path d="M1280 423h6" stroke="#009e6d"/><path d="M1286 423h12" stroke="#009e6c"/><path d="M1298 423h6" stroke="#009e6b"/><path d="M1304 423h12" stroke="#009e6a"/><path d="M1316 423h6" stroke="#009e69"/><path d="M1322 423h6" stroke="#009e68"/><path d="M1328 423h6" stroke="#069e67"/><path d="M1334 423h6" stroke="#0c9e67"/><path d="M1340 423h6" stroke="#139e66"/><path d="M1346 423h6" stroke="#199e65"/><path d="M1352 423h6" stroke="#209e64"/><path d="M1358 423h6" stroke="#279e63"/><path d="M1364 423h6" stroke="#2f9e62"/><path d="M1370 423h6" stroke="#369e61"/><path d="M1376 423h6" stroke="#3e9e60"/><path d="M1382 423h6" stroke="#469e5f"/><path d="M1388 423h6" stroke="#4e9e5e"/><path d="M1394 423h6" stroke="#569e5d"/><path d="M1400 423h6" stroke="#5f9e5c"/><path d="M1406 423h6" stroke="#689e5b"/><path d="M1412 423h6" stroke="#719e5a"/><path d="M1418 423h6" stroke="#7a9e59"/><path d="M1424 423h6" stroke="#839e58"/><path d="M1430 423h6" stroke="#8d9e56"/><path d="M1436 423h6" stroke="#979e55"/><path d="M1442 423h6" stroke="#9e9a52"/><path d="M1448 423h6" stroke="#9e914c"/><path d="M1454 423h6" stroke="#9e8846"/><path d="M1460 423h6" stroke="#9e8041"/><path d="M1466 423h6" stroke="#9e793c"/><path d="M1472 423h6" stroke="#9e7237"/><path d="M1478 423h6" stroke="#9e6c33"/><path d="M1484 423h6" stroke="#9e6630"/><path d="M1490 423h6" stroke="#9e612c"/><path d="M1496 423h6" stroke="#9e5c29"/><path d="M1502 423h6" stroke="#9e5726"/><path d="M1508 423h6" stroke="#9e5323"/><path d="M1514 423h6" stroke="#9e4f20"/><path d="M1520 423h6" stroke="#9e4b1e"/><path d="M1526 423h6" stroke="#9e471b"/><path d="M1532 423h6" stroke="#9e4419"/><path d="M1538 423h6" stroke="#9e4117"/><path d="M1544 423h6" stroke="#9e3e15"/><path d="M1550 423h6" stroke="#9e3b13"/><path d="M1556 423h6" stroke="#9e3811"/><path d="M1562 423h6" stroke="#9e3610"/><path d="M1568 423h6" stroke="#9e330e"/><path d="M1574 423h6" stroke="#9e310c"/><path d="M1580 423h6" stroke="#9e2f0b"/><path d="M1586 423h6" stroke="#9e2c0a"/><path d="M1592 423h6" stroke="#9e2a08"/><path d="M1598 423h6" stroke="#9e2907"/><path d="M1604 423h6" stroke="#9e2706"/><path d="M1610 423h6" stroke="#9e2505"/><path d="M1616 423h6" stroke="#9e2303"/><path d="M1622 423h6" stroke="#9e2202"/><path d="M1628 423h6" stroke="#9e2001"/><path d="M1634 423h6" stroke="#9e1e00"/><path d="M1640 423h6" stroke="#9e1d00"/><path d="M1646 423h6" stroke="#9e1c00"/><path d="M1652 423h6" stroke="#9e1a00"/><path d="M1658 423h6" stroke="#9e1900"/><path d="M1160 429h12" stroke="#009e7d"/><path d="M1172 429h18" stroke="#009e7c"/><path d="M1190 429h12" stroke="#009e7b"/><path d="M1202 429h12" stroke="#009e7a"/><path d="M1214 429h12" stroke="#009e79"/><path d="M1226 429h12" stroke="#009e78"/><path d="M1238 429h12" stroke="#009e77"/><path d="M1250 429h12" stroke="#009e76"/><path d="M1262 429h6" stroke="#009e75"/><path d="M1268 429h12" stroke="#009e74"/><path d="M1280 429h12" stroke="#009e73"/><path d="M1292 429h6" stroke="#009e72"/><path d="M1298 429h12" stroke="#009e71"/><path d="M1310 429h6" stroke="#009e70"/><path d="M1316 429h6" stroke="#009e6f"/><path d="M1322 429h6" stroke="#019e6e"/><path d="M1328 429h6" stroke="#079e6e"/><path d="M1334 429h6" stroke="#0e9e6d"/><path d="M1340 429h6" stroke="#159e6c"/><path d="M1346 429h6" stroke="#1c9e6b"/><path d="M1352 429h6" stroke="#239e6b"/><path d="M1358 429h6" stroke="#2b9e6a"/><path d="M1364 429h6" stroke="#329e69"/><path d="M1370 429h6" stroke="#3a9e68"/><path d="M1376 429h6" stroke="#429e67"/><path d="M1382 429h6" stroke="#4a9e66"/><path d="M1388 429h6" stroke="#539e65"/><path d="M1394 429h6" stroke="#5b9e64"/><path d="M1400 429h6" stroke="#649e63"/><path d="M1406 429h6" stroke="#6d9e62"/><path d="M1412 429h6" stroke="#779e61"/><path d="M1418 429h6" stroke="#819e60"/><path d="M1424 429h6" stroke="#8b9e5f"/><path d="M1430 429h6" stroke="#959e5e"/><path d="M1436 429h6" stroke="#9e9c5c"/><path d="M1442 429h6" stroke="#9e9255"/><path d="M1448 429h6" stroke="#9e894e"/><path d="M1454 429h6" stroke="#9e8148"/><path d="M1460 429h6" stroke="#9e7943"/><path d="M1466 429h6" stroke="#9e723e"/><path d="M1472 429h6" stroke="#9e6c3a"/><path d="M1478 429h6" stroke="#9e6636"/><path d="M1484 429h6" stroke="#9e6132"/><path d="M1490 429h6" stroke="#9e5b2e"/><path d="M1496 429h6" stroke="#9e572b"/><path d="M1502 429h6" stroke="#9e5228"/><path d="M1508 429h6" stroke="#9e4e25"/><path d="M1514 429h6" stroke="#9e4a22"/><path d="M1520 429h6" stroke="#9e4720"/><path d="M1526 429h6" stroke="#9e431d"/><path d="M1532 429h6" stroke="#9e401b"/><path d="M1538 429h6" stroke="#9e3d19"/><path d="M1544 429h6" stroke="#9e3a17"/><path d="M1550 429h6" stroke="#9e3715"/><path d="M1556 429h6" stroke="#9e3513"/><path d="M1562 429h6" stroke="#9e3211"/><path d="M1568 429h6" stroke="#9e3010"/><path d="M1574 429h6" stroke="#9e2e0e"/><path d="M1580 429h6" stroke="#9e2b0d"/><path d="M1586 429h6" stroke="#9e290b"/><path d="M1592 429h6" stroke="#9e270a"/><path d="M1598 429h6" stroke="#9e2609"/><path d="M1604 429h6" stroke="#9e2407"/><path d="M1610 429h6" stroke="#9e2206"/><path d="M1616 429h6" stroke="#9e2005"/><path d="M1622 429h6" stroke="#9e1f04"/><path d="M1628 429h6" stroke="#9e1d03"/><path d="M1634 429h6" stroke="#9e1c02"/><path d="M1640 429h6" stroke="#9e1b01"/><path d="M1646 429h6" stroke="#9e1900"/><path d="M1652 429h6" stroke="#9e1800"/><path d="M1658 429h6" stroke="#9e1700"/><path d="M1664 429h6" stroke="#9e1500"/><path d="M1670 429h6" stroke="#9e1400"/><path d="M1166 435h18" stroke="#009e82"/><path d="M1184 435h12" stroke="#009e81"/><path d="M1196 435h18" stroke="#009e80"/><path d="M1214 435h12" stroke="#009e7f"/><path d="M1226 435h12" stroke="#009e7e"/><path d="M1238 435h12" stroke="#009e7d"/><path d="M1250 435h12" stroke="#009e7c"/><path d="M1262 435h12" stroke="#009e7b"/><path d="M1274 435h12" stroke="#009e7a"/><path d="M1286 435h6" stroke="#009e79"/><path d="M1292 435h12" stroke="#009e78"/><path d="M1304 435h12" stroke="#009e77"/><path d="M1316 435h6" stroke="#009e76"/><path d="M1322 435h6" stroke="#029e75"/><path d="M1328 435h6" stroke="#099e75"/><path d="M1334 435h6" stroke="#109e74"/><path d="M1340 435h6" stroke="#179e73"/><path d="M1346 435h6" stroke="#1f9e73"/><path d="M1352 435h6" stroke="#269e72"/><path d="M1358 435h6" stroke="#2e9e71"/><path d="M1364 435h6" stroke="#369e70"/><path d="M1370 435h6" stroke="#3e9e6f"/><path d="M1376 435h6" stroke="#469e6f"/><path d="M1382 435h6" stroke="#4f9e6e"/><path d="M1388 435h6" stroke="#589e6d"/><path d="M1394 435h6" stroke="#619e6c"/><path d="M1400 435h6" stroke="#6a9e6b"/><path d="M1406 435h6" stroke="#749e6a"/><path d="M1412 435h6" stroke="#7e9e69"/><path d="M1418 435h6" stroke="#889e68"/><path d="M1424 435h6" stroke="#939e67"/><path d="M1430 435h6" stroke="#9e9e66"/><path d="M1436 435h6" stroke="#9e945e"/><path d="M1442 435h6" stroke="#9e8a57"/><path d="M1448 435h6" stroke="#9e8251"/><path d="M1454 435h6" stroke="#9e7a4b"/><path d="M1460 435h6" stroke="#9e7346"/><path d="M1466 435h6" stroke="#9e6c41"/><path d="M1472 435h6" stroke="#9e663c"/><path d="M1478 435h6" stroke="#9e6038"/><path d="M1484 435h6" stroke="#9e5b34"/><path d="M1490 435h6" stroke="#9e5630"/><path d="M1496 435h6" stroke="#9e522d"/><path d="M1502 435h6" stroke="#9e4e2a"/><path d="M1508 435h6" stroke="#9e4a27"/><path d="M1514 435h6" stroke="#9e4624"/><path d="M1520 435h6" stroke="#9e4222"/><path d="M1526 435h6" stroke="#9e3f1f"/><path d="M1532 435h6" stroke="#9e3c1d"/><path d="M1538 435h6" stroke="#9e391b"/><path d="M1544 435h6" stroke="#9e3619"/><path d="M1550 435h6" stroke="#9e3417"/><path d="M1556 435h6" stroke="#9e3115"/><path d="M1562 435h6" stroke="#9e2f13"/><path d="M1568 435h6" stroke="#9e2d11"/><path d="M1574 435h6" stroke="#9e2a10"/><path d="M1580 435h6" stroke="#9e280e"/><path d="M1586 435h6" stroke="#9e260d"/><path d="M1592 435h6" stroke="#9e240b"/><path d="M1598 435h6" stroke="#9e230a"/><path d="M1604 435h6" stroke="#9e2109"/><path d="M1610 435h6" stroke="#9e1f08"/><path d="M1616 435h6" stroke="#9e1e06"/><path d="M1622 435h6" stroke="#9e1c05"/><path d="M1628 435h6" stroke="#9e1b04"/><path d="M1634 435h6" stroke="#9e1903"/><path d="M1640 435h6" stroke="#9e1802"/><path d="M1646 435h6" stroke="#9e1701"/><path d="M1652 435h6" stroke="#9e1500"/><path d="M1658 435h6" stroke="#9e1400"/><path d="M1664 435h6" stroke="#9e1300"/><path d="M1670 435h6" stroke="#9e1200"/><path d="M1676 435h6" stroke="#9e1100"/><path d="M1166 441h12" stroke="#009e88"/><path d="M1178 441h18" stroke="#009e87"/><path d="M1196 441h18" stroke="#009e86"/><path d="M1214 441h12" stroke="#009e85"/><path d="M1226 441h18" stroke="#009e84"/><path d="M1244 441h12" stroke="#009e83"/><path d="M1256 441h12" stroke="#009e82"/><path d="M1268 441h12" stroke="#009e81"/><path d="M1280 441h12" stroke="#009e80"/><path d="M1292 441h12" stroke="#009e7f"/><path d="M1304 441h12" stroke="#009e7e"/><path d="M1316 441h6" stroke="#009e7d"/><path d="M1322 441h6" stroke="#049e7d"/><path d="M1328 441h6" stroke="#0b9e7c"/><path d="M1334 441h6" stroke="#129e7b"/><path d="M1340 441h6" stroke="#1a9e7b"/><path d="M1346 441h6" stroke="#219e7a"/><path d="M1352 441h6" stroke="#299e79"/><path d="M1358 441h6" stroke="#319e79"/><path d="M1364 441h6" stroke="#3a9e78"/><path d="M1370 441h6" stroke="#429e77"/><path d="M1376 441h6" stroke="#4b9e77"/><path d="M1382 441h6" stroke="#549e76"/><path d="M1388 441h6" stroke="#5d9e75"/><path d="M1394 441h6" stroke="#679e74"/><path d="M1400 441h6" stroke="#719e73"/><path d="M1406 441h6" stroke="#7b9e73"/><path d="M1412 441h6" stroke="#859e72"/><path d="M1418 441h6" stroke="#909e71"/><path d="M1424 441h6" stroke="#9b9e70"/><path d="M1430 441h6" stroke="#9e9669"/><path d="M1436 441h6" stroke="#9e8c61"/><path d="M1442 441h6" stroke="#9e835a"/><path d="M1448 441h6" stroke="#9e7b53"/><path d="M1454 441h6" stroke="#9e734d"/><path d="M1460 441h6" stroke="#9e6c48"/><path d="M1466 441h6" stroke="#9e6643"/><path d="M1472 441h6" stroke="#9e603f"/><path d="M1478 441h6" stroke="#9e5b3a"/><path d="M1484 441h6" stroke="#9e5636"/><path d="M1490 441h6" stroke="#9e5133"/><path d="M1496 441h6" stroke="#9e4d2f"/><path d="M1502 441h6" stroke="#9e492c"/><path d="M1508 441h6" stroke="#9e4529"/><path d="M1514 441h6" stroke="#9e4126"/><path d="M1520 441h6" stroke="#9e3e24"/><path d="M1526 441h6" stroke="#9e3b21"/><path d="M1532 441h6" stroke="#9e381f"/><path d="M1538 441h6" stroke="#9e351d"/><path d="M1544 441h6" stroke="#9e331b"/><path d="M1550 441h6" stroke="#9e3019"/><path d="M1556 441h6" stroke="#9e2e17"/><path d="M1562 441h6" stroke="#9e2b15"/><path d="M1568 441h6" stroke="#9e2913"/><path d="M1574 441h6" stroke="#9e2712"/><path d="M1580 441h6" stroke="#9e2510"/><path d="M1586 441h6" stroke="#9e230e"/><path d="M1592 441h6" stroke="#9e220d"/><path d="M1598 441h6" stroke="#9e200c"/><path d="M1604 441h6" stroke="#9e1e0a"/><path d="M1610 441h6" stroke="#9e1d09"/><path d="M1616 441h6" stroke="#9e1b08"/><path d="M1622 441h6" stroke="#9e1a07"/><path d="M1628 441h6" stroke="#9e1806"/><path d="M1634 441h6" stroke="#9e1705"/><path d="M1640 441h6" stroke="#9e1604"/><path d="M1646 441h6" stroke="#9e1403"/><path d="M1652 441h6" stroke="#9e1302"/><path d="M1658 441h6" stroke="#9e1201"/><path d="M1664 441h6" stroke="#9e1100"/><path d="M1670 441h6" stroke="#9e1000"/><path d="M1676 441h6" stroke="#9e0f00"/><path d="M1682 441h6" stroke="#9e0e00"/><path d="M1166 447h18" stroke="#009e8e"/><path d="M1184 447h18" stroke="#009e8d"/><path d="M1202 447h18" stroke="#009e8c"/><path d="M1220 447h18" stroke="#009e8b"/><path d="M1238 447h18" stroke="#009e8a"/><path d="M1256 447h18" stroke="#009e89"/><path d="M1274 447h12" stroke="#009e88"/><path d="M1286 447h12" stroke="#009e87"/><path d="M1298 447h12" stroke="#009e86"/><path d="M1310 447h12" stroke="#009e85"/><path d="M1322 447h6" stroke="#069e84"/><path d="M1328 447h6" stroke="#0d9e84"/><path d="M1334 447h6" stroke="#159e83"/><path d="M1340 447h6" stroke="#1d9e83"/><path d="M1346 447h6" stroke="#259e82"/><path d="M1352 447h6" stroke="#2d9e82"/><path d="M1358 447h6" stroke="#359e81"/><path d="M1364 447h6" stroke="#3e9e81"/><path d="M1370 447h6" stroke="#479e80"/><path d="M1376 447h6" stroke="#509e7f"/><path d="M1382 447h6" stroke="#599e7f"/><path d="M1388 447h6" stroke="#639e7e"/><path d="M1394 447h6" stroke="#6d9e7d"/><path d="M1400 447h6" stroke="#789e7c"/><path d="M1406 447h6" stroke="#829e7c"/><path d="M1412 447h6" stroke="#8d9e7b"/><path d="M1418 447h6" stroke="#999e7a"/><path d="M1424 447h6" stroke="#9e9874"/><path d="M1430 447h6" stroke="#9e8d6c"/><path d="M1436 447h6" stroke="#9e8464"/><path d="M1442 447h6" stroke="#9e7b5c"/><path d="M1448 447h6" stroke="#9e7356"/><path d="M1454 447h6" stroke="#9e6c50"/><path d="M1460 447h6" stroke="#9e664a"/><path d="M1466 447h6" stroke="#9e6045"/><path d="M1472 447h6" stroke="#9e5a41"/><path d="M1478 447h6" stroke="#9e553d"/><path d="M1484 447h6" stroke="#9e5139"/><path d="M1490 447h6" stroke="#9e4c35"/><path d="M1496 447h6" stroke="#9e4831"/><path d="M1502 447h6" stroke="#9e442e"/><path d="M1508 447h6" stroke="#9e412b"/><path d="M1514 447h6" stroke="#9e3d28"/><path d="M1520 447h6" stroke="#9e3a26"/><path d="M1526 447h6" stroke="#9e3723"/><path d="M1532 447h6" stroke="#9e3421"/><path d="M1538 447h6" stroke="#9e321e"/><path d="M1544 447h6" stroke="#9e2f1c"/><path d="M1550 447h6" stroke="#9e2d1a"/><path d="M1556 447h6" stroke="#9e2a18"/><path d="M1562 447h6" stroke="#9e2817"/><path d="M1568 447h6" stroke="#9e2615"/><path d="M1574 447h6" stroke="#9e2413"/><path d="M1580 447h6" stroke="#9e2212"/><path d="M1586 447h6" stroke="#9e2010"/><path d="M1592 447h6" stroke="#9e1f0f"/><path d="M1598 447h6" stroke="#9e1d0d"/><path d="M1604 447h6" stroke="#9e1b0c"/><path d="M1610 447h6" stroke="#9e1a0b"/><path d="M1616 447h6" stroke="#9e1809"/><path d="M1622 447h6" stroke="#9e1708"/><path d="M1628 447h6" stroke="#9e1607"/><path d="M1634 447h6" stroke="#9e1406"/><path d="M1640 447h6" stroke="#9e1305"/><path d="M1646 447h6" stroke="#9e1204"/><path d="M1652 447h6" stroke="#9e1103"/><path d="M1658 447h6" stroke="#9e1002"/><path d="M1664 447h6" stroke="#9e0f01"/><path d="M1670 447h6" stroke="#9e0e00"/><path d="M1676 447h6" stroke="#9e0d00"/><path d="M1682 447h6" stroke="#9e0c00"/><path d="M1688 447h6" stroke="#9e0b00"/><path d="M1694 447h6" stroke="#9e0a00"/><path d="M1166 453h6" stroke="#009e95"/><path d="M1172 453h30" stroke="#009e94"/><path d="M1202 453h24" stroke="#009e93"/><path d="M1226 453h18" stroke="#009e92"/><path d="M1244 453h18" stroke="#009e91"/><path d="M1262 453h18" stroke="#009e90"/><path d="M1280 453h18" stroke="#009e8f"/><path d="M1298 453h18" stroke="#009e8e"/><path d="M1316 453h6" stroke="#019e8d"/><path d="M1322 453h6" stroke="#089e8d"/><path d="M1328 453h6" stroke="#109e8c"/><path d="M1334 453h6" stroke="#179e8c"/><path d="M1340 453h6" stroke="#209e8c"/><path d="M1346 453h6" stroke="#289e8b"/><path d="M1352 453h6" stroke="#309e8b"/><path d="M1358 453h6" stroke="#399e8a"/><path d="M1364 453h6" stroke="#429e8a"/><path d="M1370 453h6" stroke="#4c9e89"/><path d="M1376 453h6" stroke="#559e89"/><path d="M1382 453h6" stroke="#5f9e88"/><path d="M1388 453h6" stroke="#699e87"/><path d="M1394 453h6" stroke="#749e87"/><path d="M1400 453h6" stroke="#7f9e86"/><path d="M1406 453h6" stroke="#8a9e86"/><path d="M1412 453h6" stroke="#969e85"/><path d="M1418 453h6" stroke="#9e9a81"/><path d="M1424 453h6" stroke="#9e8f77"/><path d="M1430 453h6" stroke="#9e856e"/><path d="M1436 453h6" stroke="#9e7c66"/><path d="M1442 453h6" stroke="#9e745f"/><path d="M1448 453h6" stroke="#9e6d58"/><path d="M1454 453h6" stroke="#9e6652"/><path d="M1460 453h6" stroke="#9e604d"/><path d="M1466 453h6" stroke="#9e5a48"/><path d="M1472 453h6" stroke="#9e5543"/><path d="M1478 453h6" stroke="#9e503f"/><path d="M1484 453h6" stroke="#9e4b3b"/><path d="M1490 453h6" stroke="#9e4737"/><path d="M1496 453h6" stroke="#9e4333"/><path d="M1502 453h6" stroke="#9e4030"/><path d="M1508 453h6" stroke="#9e3c2d"/><path d="M1514 453h6" stroke="#9e392a"/><path d="M1520 453h6" stroke="#9e3628"/><path d="M1526 453h6" stroke="#9e3325"/><path d="M1532 453h6" stroke="#9e3023"/><path d="M1538 453h6" stroke="#9e2e20"/><path d="M1544 453h6" stroke="#9e2b1e"/><path d="M1550 453h6" stroke="#9e291c"/><path d="M1556 453h6" stroke="#9e271a"/><path d="M1562 453h6" stroke="#9e2518"/><path d="M1568 453h6" stroke="#9e2316"/><path d="M1574 453h6" stroke="#9e2115"/><path d="M1580 453h6" stroke="#9e1f13"/><path d="M1586 453h6" stroke="#9e1d12"/><path d="M1592 453h6" stroke="#9e1c10"/><path d="M1598 453h6" stroke="#9e1a0f"/><path d="M1604 453h6" stroke="#9e190d"/><path d="M1610 453h6" stroke="#9e170c"/><path d="M1616 453h6" stroke="#9e160b"/><path d="M1622 453h6" stroke="#9e140a"/><path d="M1628 453h6" stroke="#9e1308"/><path d="M1634 453h6" stroke="#9e1207"/><path d="M1640 453h6" stroke="#9e1106"/><path d="M1646 453h6" stroke="#9e1005"/><path d="M1652 453h6" stroke="#9e0f04"/><path d="M1658 453h6" stroke="#9e0d03"/><path d="M1664 453h6" stroke="#9e0c02"/><path d="M1670 453h6" stroke="#9e0b02"/><path d="M1676 453h6" stroke="#9e0a01"/><path d="M1682 453h6" stroke="#9e0a00"/><path d="M1688 453h6" stroke="#9e0900"/><path d="M1694 453h6" stroke="#9e0800"/><path d="M1700 453h6" stroke="#9e0700"/><path d="M1172 459h36" stroke="#009e9b"/><path d="M1208 459h30" stroke="#009e9a"/><path d="M1238 459h24" stroke="#009e99"/><path d="M1262 459h30" stroke="#009e98"/><path d="M1292 459h18" stroke="#009e97"/><path d="M1310 459h6" stroke="#009e96"/><path d="M1316 459h6" stroke="#029e96"/><path d="M1322 459h6" stroke="#0a9e96"/><path d="M1328 459h6" stroke="#129e96"/><path d="M1334 459h6" stroke="#1a9e95"/><path d="M1340 459h6" stroke="#239e95"/><path d="M1346 459h6" stroke="#2b9e95"/><path d="M1352 459h6" stroke="#349e94"/><path d="M1358 459h6" stroke="#3e9e94"/><path d="M1364 459h6" stroke="#479e94"/><path d="M1370 459h6" stroke="#519e93"/><path d="M1376 459h6" stroke="#5b9e93"/><path d="M1382 459h6" stroke="#669e92"/><path d="M1388 459h6" stroke="#719e92"/><path d="M1394 459h6" stroke="#7c9e92"/><path d="M1400 459h6" stroke="#879e91"/><path d="M1406 459h6" stroke="#939e91"/><path d="M1412 459h6" stroke="#9e9c8f"/><path d="M1418 459h6" stroke="#9e9183"/><path d="M1424 459h6" stroke="#9e8679"/><path d="M1430 459h6" stroke="#9e7d71"/><path d="M1436 459h6" stroke="#9e7469"/><path d="M1442 459h6" stroke="#9e6d61"/><path d="M1448 459h6" stroke="#9e665b"/><path d="M1454 459h6" stroke="#9e5f55"/><path d="M1460 459h6" stroke="#9e5a4f"/><path d="M1466 459h6" stroke="#9e544a"/><path d="M1472 459h6" stroke="#9e4f45"/><path d="M1478 459h6" stroke="#9e4b41"/><path d="M1484 459h6" stroke="#9e463d"/><path d="M1490 459h6" stroke="#9e4239"/><path d="M1496 459h6" stroke="#9e3f36"/><path d="M1502 459h6" stroke="#9e3b32"/><path d="M1508 459h6" stroke="#9e382f"/><path d="M1514 459h6" stroke="#9e352c"/><path d="M1520 459h6" stroke="#9e3229"/><path d="M1526 459h6" stroke="#9e2f27"/><path d="M1532 459h6" stroke="#9e2d24"/><path d="M1538 459h6" stroke="#9e2a22"/><path d="M1544 459h6" stroke="#9e2820"/><path d="M1550 459h6" stroke="#9e261e"/><path d="M1556 459h6" stroke="#9e241c"/><path d="M1562 459h6" stroke="#9e221a"/><path d="M1568 459h6" stroke="#9e2018"/><path d="M1574 459h6" stroke="#9e1e16"/><path d="M1580 459h6" stroke="#9e1c15"/><path d="M1586 459h6" stroke="#9e1a13"/><path d="M1592 459h6" stroke="#9e1912"/><path d="M1598 459h6" stroke="#9e1710"/><path d="M1604 459h6" stroke="#9e160f"/><path d="M1610 459h6" stroke="#9e150e"/><path d="M1616 459h6" stroke="#9e130c"/><path d="M1622 459h6" stroke="#9e120b"/><path d="M1628 459h6" stroke="#9e110a"/><path d="M1634 459h6" stroke="#9e1009"/><path d="M1640 459h6" stroke="#9e0e08"/><path d="M1646 459h6" stroke="#9e0d07"/><path d="M1652 459h6" stroke="#9e0c06"/><path d="M1658 459h6" stroke="#9e0b05"/><path d="M1664 459h6" stroke="#9e0a04"/><path d="M1670 459h6" stroke="#9e0903"/><path d="M1676 459h6" stroke="#9e0802"/><path d="M1682 459h6" stroke="#9e0701"/><path d="M1688 459h6" stroke="#9e0700"/><path d="M1694 459h6" stroke="#9e0600"/><path d="M1700 459h6" stroke="#9e0500"/><path d="M1706 459h6" stroke="#9e0400"/><path d="M1172 465h54" stroke="#009a9e"/><path d="M1226 465h54" stroke="#009b9e"/><path d="M1280 465h36" stroke="#009c9e"/><path d="M1316 465h6" stroke="#049c9e"/><path d="M1322 465h6" stroke="#0c9d9e"/><path d="M1328 465h6" stroke="#159d9e"/><path d="M1334 465h6" stroke="#1d9d9e"/><path d="M1340 465h6" stroke="#269d9e"/><path d="M1346 465h6" stroke="#2f9d9e"/><path d="M1352 465h6" stroke="#399d9e"/><path d="M1358 465h6" stroke="#429e9e"/><path d="M1364 465h6" stroke="#4c9e9e"/><path d="M1370 465h6" stroke="#579e9e"/><path d="M1376 465h6" stroke="#629e9e"/><path d="M1382 465h6" stroke="#6d9e9e"/><path d="M1388 465h6" stroke="#789e9d"/><path d="M1394 465h6" stroke="#849e9d"/><path d="M1400 465h6" stroke="#919e9d"/><path d="M1406 465h6" stroke="#9d9e9d"/><path d="M1412 465h6" stroke="#9e9291"/><path d="M1418 465h6" stroke="#9e8786"/><path d="M1424 465h6" stroke="#9e7e7c"/><path d="M1430 465h6" stroke="#9e7573"/><path d="M1436 465h6" stroke="#9e6d6b"/><path d="M1442 465h6" stroke="#9e6664"/><path d="M1448 465h6" stroke="#9e5f5d"/><path d="M1454 465h6" stroke="#9e5957"/><path d="M1460 465h6" stroke="#9e5451"/><path d="M1466 465h6" stroke="#9e4e4c"/><path d="M1472 465h6" stroke="#9e4a47"/><path d="M1478 465h6" stroke="#9e4543"/><path d="M1484 465h6" stroke="#9e413f"/><path d="M1490 465h6" stroke="#9e3e3b"/><path d="M1496 465h6" stroke="#9e3a38"/><path d="M1502 465h6" stroke="#9e3734"/><path d="M1508 465h6" stroke="#9e3431"/><path d="M1514 465h6" stroke="#9e312e"/><path d="M1520 465h6" stroke="#9e2e2b"/><path d="M1526 465h6" stroke="#9e2b29"/><path d="M1532 465h6" stroke="#9e2926"/><path d="M1538 465h6" stroke="#9e2724"/><path d="M1544 465h6" stroke="#9e2422"/><path d="M1550 465h6" stroke="#9e221f"/><path d="M1556 465h6" stroke="#9e201d"/><path d="M1562 465h6" stroke="#9e1e1c"/><path d="M1568 465h6" stroke="#9e1d1a"/><path d="M1574 465h6" stroke="#9e1b18"/><path d="M1580 465h6" stroke="#9e1916"/><path d="M1586 465h6" stroke="#9e1815"/><path d="M1592 465h6" stroke="#9e1613"/><path d="M1598 465h6" stroke="#9e1512"/><path d="M1604 465h6" stroke="#9e1310"/><path d="M1610 465h6" stroke="#9e120f"/><path d="M1616 465h6" stroke="#9e110e"/><path d="M1622 465h6" stroke="#9e0f0c"/><path d="M1628 465h6" stroke="#9e0e0b"/><path d="M1634 465h6" stroke="#9e0d0a"/><path d="M1640 465h6" stroke="#9e0c09"/><path d="M1646 465h6" stroke="#9e0b08"/><path d="M1652 465h6" stroke="#9e0a07"/><path d="M1658 465h6" stroke="#9e0906"/><path d="M1664 465h6" stroke="#9e0805"/><path d="M1670 465h6" stroke="#9e0704"/><path d="M1676 465h6" stroke="#9e0603"/><path d="M1682 465h6" stroke="#9e0502"/><path d="M1688 465h6" stroke="#9e0501"/><path d="M1694 465h6" stroke="#9e0401"/><path d="M1700 465h6" stroke="#9e0300"/><path d="M1706 465h6" stroke="#9e0200"/><path d="M1712 465h12" stroke="#9e0100"/><path d="M1172 471h144" stroke="#00939e"/><path d="M1316 471h6" stroke="#06939e"/><path d="M1322 471h6" stroke="#0e939e"/><path d="M1328 471h6" stroke="#16939e"/><path d="M1334 471h6" stroke="#1e939e"/><path d="M1340 471h6" stroke="#27939e"/><path d="M1346 471h6" stroke="#30939e"/><path d="M1352 471h6" stroke="#39939e"/><path d="M1358 471h6" stroke="#43939e"/><path d="M1364 471h6" stroke="#4c939e"/><path d="M1370 471h6" stroke="#57939e"/><path d="M1376 471h6" stroke="#61939e"/><path d="M1382 471h6" stroke="#6c939e"/><path d="M1388 471h6" stroke="#78939e"/><path d="M1394 471h6" stroke="#83939e"/><path d="M1400 471h6" stroke="#90939e"/><path d="M1406 471h6" stroke="#9c939e"/><path d="M1412 471h6" stroke="#9e8993"/><path d="M1418 471h6" stroke="#9e7f88"/><path d="M1424 471h6" stroke="#9e757e"/><path d="M1430 471h6" stroke="#9e6d75"/><path d="M1436 471h6" stroke="#9e666d"/><path d="M1442 471h6" stroke="#9e5f66"/><path d="M1448 471h6" stroke="#9e595f"/><path d="M1454 471h6" stroke="#9e5359"/><path d="M1460 471h6" stroke="#9e4e54"/><path d="M1466 471h6" stroke="#9e494e"/><path d="M1472 471h6" stroke="#9e444a"/><path d="M1478 471h6" stroke="#9e4045"/><path d="M1484 471h6" stroke="#9e3c41"/><path d="M1490 471h6" stroke="#9e393d"/><path d="M1496 471h6" stroke="#9e363a"/><path d="M1502 471h6" stroke="#9e3236"/><path d="M1508 471h6" stroke="#9e2f33"/><path d="M1514 471h6" stroke="#9e2d30"/><path d="M1520 471h6" stroke="#9e2a2d"/><path d="M1526 471h6" stroke="#9e282a"/><path d="M1532 471h6" stroke="#9e2528"/><path d="M1538 471h6" stroke="#9e2326"/><path d="M1544 471h6" stroke="#9e2123"/><path d="M1550 471h6" stroke="#9e1f21"/><path d="M1556 471h6" stroke="#9e1d1f"/><path d="M1562 471h6" stroke="#9e1b1d"/><path d="M1568 471h6" stroke="#9e191b"/><path d="M1574 471h6" stroke="#9e181a"/><path d="M1580 471h6" stroke="#9e1618"/><path d="M1586 471h6" stroke="#9e1516"/><path d="M1592 471h6" stroke="#9e1315"/><path d="M1598 471h6" stroke="#9e1213"/><path d="M1604 471h6" stroke="#9e1112"/><path d="M1610 471h6" stroke="#9e0f10"/><path d="M1616 471h6" stroke="#9e0e0f"/><path d="M1622 471h6" stroke="#9e0d0e"/><path d="M1628 471h6" stroke="#9e0c0d"/><path d="M1634 471h6" stroke="#9e0b0b"/><path d="M1640 471h6" stroke="#9e0a0a"/><path d="M1646 471h6" stroke="#9e0909"/><path d="M1652 471h6" stroke="#9e0808"/><path d="M1658 471h6" stroke="#9e0707"/><path d="M1664 471h6" stroke="#9e0606"/><path d="M1670 471h6" stroke="#9e0505"/><path d="M1676 471h6" stroke="#9e0404"/><path d="M1682 471h12" stroke="#9e0303"/><path d="M1694 471h6" stroke="#9e0202"/><path d="M1700 471h6" stroke="#9e0101"/><path d="M1706 471h24" stroke="#9e0000"/><path d="M1172 477h42" stroke="#008c9e"/><path d="M1214 477h60" stroke="#008b9e"/><path d="M1274 477h42" stroke="#008a9e"/><path d="M1316 477h6" stroke="#088a9e"/><path d="M1322 477h6" stroke="#0f8a9e"/><path d="M1328 477h6" stroke="#17899e"/><path d="M1334 477h6" stroke="#20899e"/><path d="M1340 477h6" stroke="#28899e"/><path d="M1346 477h6" stroke="#31899e"/><path d="M1352 477h6" stroke="#3a899e"/><path d="M1358 477h6" stroke="#43899e"/><path d="M1364 477h6" stroke="#4d889e"/><path d="M1370 477h6" stroke="#57889e"/><path d="M1376 477h6" stroke="#61889e"/><path d="M1382 477h6" stroke="#6b889e"/><path d="M1388 477h6" stroke="#77889e"/><path d="M1394 477h6" stroke="#82889e"/><path d="M1400 477h6" stroke="#8e879e"/><path d="M1406 477h6" stroke="#9a879e"/><path d="M1412 477h6" stroke="#9e8096"/><path d="M1418 477h6" stroke="#9e768b"/><path d="M1424 477h6" stroke="#9e6d81"/><path d="M1430 477h6" stroke="#9e6678"/><path d="M1436 477h6" stroke="#9e5f70"/><path d="M1442 477h6" stroke="#9e5868"/><path d="M1448 477h6" stroke="#9e5262"/><path d="M1454 477h6" stroke="#9e4d5b"/><path d="M1460 477h6" stroke="#9e4856"/><path d="M1466 477h6" stroke="#9e4351"/><path d="M1472 477h6" stroke="#9e3f4c"/><path d="M1478 477h6" stroke="#9e3b47"/><path d="M1484 477h6" stroke="#9e3843"/><path d="M1490 477h6" stroke="#9e343f"/><path d="M1496 477h6" stroke="#9e313b"/><path d="M1502 477h6" stroke="#9e2e38"/><path d="M1508 477h6" stroke="#9e2b35"/><path d="M1514 477h6" stroke="#9e2932"/><path d="M1520 477h6" stroke="#9e262f"/><path d="M1526 477h6" stroke="#9e242c"/><path d="M1532 477h6" stroke="#9e222a"/><path d="M1538 477h6" stroke="#9e1f27"/><path d="M1544 477h6" stroke="#9e1d25"/><path d="M1550 477h6" stroke="#9e1c23"/><path d="M1556 477h6" stroke="#9e1a21"/><path d="M1562 477h6" stroke="#9e181f"/><path d="M1568 477h6" stroke="#9e161d"/><path d="M1574 477h6" stroke="#9e151b"/><path d="M1580 477h6" stroke="#9e1319"/><path d="M1586 477h6" stroke="#9e1218"/><path d="M1592 477h6" stroke="#9e1116"/><path d="M1598 477h6" stroke="#9e0f15"/><path d="M1604 477h6" stroke="#9e0e13"/><path d="M1610 477h6" stroke="#9e0d12"/><path d="M1616 477h6" stroke="#9e0c10"/><path d="M1622 477h6" stroke="#9e0a0f"/><path d="M1628 477h6" stroke="#9e090e"/><path d="M1634 477h6" stroke="#9e080d"/><path d="M1640 477h6" stroke="#9e070c"/><path d="M1646 477h6" stroke="#9e060b"/><path d="M1652 477h6" stroke="#9e0509"/><path d="M1658 477h6" stroke="#9e0508"/><path d="M1664 477h6" stroke="#9e0407"/><path d="M1670 477h6" stroke="#9e0306"/><path d="M1676 477h6" stroke="#9e0206"/><path d="M1682 477h6" stroke="#9e0105"/><path d="M1688 477h6" stroke="#9e0104"/><path d="M1694 477h6" stroke="#9e0003"/><path d="M1700 477h6" stroke="#9e0002"/><path d="M1706 477h12" stroke="#9e0001"/><path d="M1718 477h18" stroke="#9e0000"/><path d="M1178 483h36" stroke="#00859e"/><path d="M1214 483h36" stroke="#00849e"/><path d="M1250 483h30" stroke="#00839e"/><path d="M1280 483h24" stroke="#00829e"/><path d="M1304 483h6" stroke="#00819e"/><path d="M1310 483h6" stroke="#02819e"/><path d="M1316 483h6" stroke="#09819e"/><path d="M1322 483h6" stroke="#11819e"/><path d="M1328 483h6" stroke="#19809e"/><path d="M1334 483h6" stroke="#21809e"/><path d="M1340 483h6" stroke="#29809e"/><path d="M1346 483h6" stroke="#31809e"/><path d="M1352 483h6" stroke="#3a7f9e"/><path d="M1358 483h6" stroke="#437f9e"/><path d="M1364 483h6" stroke="#4d7f9e"/><path d="M1370 483h6" stroke="#567e9e"/><path d="M1376 483h6" stroke="#607e9e"/><path d="M1382 483h6" stroke="#6b7e9e"/><path d="M1388 483h6" stroke="#767d9e"/><path d="M1394 483h6" stroke="#817d9e"/><path d="M1400 483h6" stroke="#8c7c9e"/><path d="M1406 483h6" stroke="#987c9e"/><path d="M1412 483h6" stroke="#9e7798"/><path d="M1418 483h6" stroke="#9e6e8d"/><path d="M1424 483h6" stroke="#9e6583"/><path d="M1430 483h6" stroke="#9e5e7a"/><path d="M1436 483h6" stroke="#9e5872"/><path d="M1442 483h6" stroke="#9e526a"/><path d="M1448 483h6" stroke="#9e4c64"/><path d="M1454 483h6" stroke="#9e475e"/><path d="M1460 483h6" stroke="#9e4258"/><path d="M1466 483h6" stroke="#9e3e53"/><path d="M1472 483h6" stroke="#9e3a4e"/><path d="M1478 483h6" stroke="#9e3649"/><path d="M1484 483h6" stroke="#9e3345"/><path d="M1490 483h6" stroke="#9e3041"/><path d="M1496 483h6" stroke="#9e2d3d"/><path d="M1502 483h6" stroke="#9e2a3a"/><path d="M1508 483h6" stroke="#9e2737"/><path d="M1514 483h6" stroke="#9e2534"/><path d="M1520 483h6" stroke="#9e2231"/><path d="M1526 483h6" stroke="#9e202e"/><path d="M1532 483h6" stroke="#9e1e2b"/><path d="M1538 483h6" stroke="#9e1c29"/><path d="M1544 483h6" stroke="#9e1a27"/><path d="M1550 483h6" stroke="#9e1824"/><path d="M1556 483h6" stroke="#9e1722"/><path d="M1562 483h6" stroke="#9e1520"/><path d="M1568 483h6" stroke="#9e131e"/><path d="M1574 483h6" stroke="#9e121d"/><path d="M1580 483h6" stroke="#9e101b"/><path d="M1586 483h6" stroke="#9e0f19"/><path d="M1592 483h6" stroke="#9e0e18"/><path d="M1598 483h6" stroke="#9e0d16"/><path d="M1604 483h6" stroke="#9e0b15"/><path d="M1610 483h6" stroke="#9e0a13"/><path d="M1616 483h6" stroke="#9e0912"/><path d="M1622 483h6" stroke="#9e0811"/><path d="M1628 483h6" stroke="#9e070f"/><path d="M1634 483h6" stroke="#9e060e"/><path d="M1640 483h6" stroke="#9e050d"/><path d="M1646 483h6" stroke="#9e040c"/><path d="M1652 483h6" stroke="#9e030b"/><path d="M1658 483h6" stroke="#9e020a"/><path d="M1664 483h6" stroke="#9e0209"/><path d="M1670 483h6" stroke="#9e0108"/><path d="M1676 483h6" stroke="#9e0007"/><path d="M1682 483h6" stroke="#9e0006"/><path d="M1688 483h6" stroke="#9e0005"/><path d="M1694 483h6" stroke="#9e0004"/><path d="M1700 483h6" stroke="#9e0003"/><path d="M1706 483h12" stroke="#9e0002"/><path d="M1718 483h6" stroke="#9e0001"/><path d="M1724 483h24" stroke="#9e0000"/><path d="M1178 489h18" stroke="#007f9e"/><path d="M1196 489h24" stroke="#007e9e"/><path d="M1220 489h24" stroke="#007d9e"/><path d="M1244 489h18" stroke="#007c9e"/><path d="M1262 489h24" stroke="#007b9e"/><path d="M1286 489h18" stroke="#007a9e"/><path d="M1304 489h6" stroke="#00799e"/><path d="M1310 489h6" stroke="#04799e"/><path d="M1316 489h6" stroke="#0b799e"/><path d="M1322 489h6" stroke="#12789e"/><path d="M1328 489h6" stroke="#1a789e"/><path d="M1334 489h6" stroke="#22779e"/><path d="M1340 489h6" stroke="#2a779e"/><path d="M1346 489h6" stroke="#32769e"/><path d="M1352 489h6" stroke="#3b769e"/><path d="M1358 489h6" stroke="#44769e"/><path d="M1364 489h6" stroke="#4d759e"/><path d="M1370 489h6" stroke="#56759e"/><path d="M1376 489h6" stroke="#60749e"/><path d="M1382 489h6" stroke="#6a749e"/><path d="M1388 489h6" stroke="#75739e"/><path d="M1394 489h6" stroke="#7f739e"/><path d="M1400 489h6" stroke="#8b729e"/><path d="M1406 489h6" stroke="#96719e"/><path d="M1412 489h6" stroke="#9e6e9a"/><path d="M1418 489h6" stroke="#9e658f"/><path d="M1424 489h6" stroke="#9e5e85"/><path d="M1430 489h6" stroke="#9e577c"/><path d="M1436 489h6" stroke="#9e5174"/><path d="M1442 489h6" stroke="#9e4b6d"/><path d="M1448 489h6" stroke="#9e4666"/><path d="M1454 489h6" stroke="#9e4160"/><path d="M1460 489h6" stroke="#9e3d5a"/><path d="M1466 489h6" stroke="#9e3955"/><path d="M1472 489h6" stroke="#9e3550"/><path d="M1478 489h6" stroke="#9e324b"/><path d="M1484 489h6" stroke="#9e2e47"/><path d="M1490 489h6" stroke="#9e2b43"/><path d="M1496 489h6" stroke="#9e283f"/><path d="M1502 489h6" stroke="#9e263c"/><path d="M1508 489h6" stroke="#9e2338"/><path d="M1514 489h6" stroke="#9e2135"/><path d="M1520 489h6" stroke="#9e1f32"/><path d="M1526 489h6" stroke="#9e1c30"/><path d="M1532 489h6" stroke="#9e1a2d"/><path d="M1538 489h6" stroke="#9e192b"/><path d="M1544 489h6" stroke="#9e1728"/><path d="M1550 489h6" stroke="#9e1526"/><path d="M1556 489h6" stroke="#9e1324"/><path d="M1562 489h6" stroke="#9e1222"/><path d="M1568 489h6" stroke="#9e1020"/><path d="M1574 489h6" stroke="#9e0f1e"/><path d="M1580 489h6" stroke="#9e0e1c"/><path d="M1586 489h6" stroke="#9e0c1b"/><path d="M1592 489h6" stroke="#9e0b19"/><path d="M1598 489h6" stroke="#9e0a17"/><path d="M1604 489h6" stroke="#9e0916"/><path d="M1610 489h6" stroke="#9e0815"/><path d="M1616 489h6" stroke="#9e0713"/><path d="M1622 489h6" stroke="#9e0612"/><path d="M1628 489h6" stroke="#9e0511"/><path d="M1634 489h6" stroke="#9e040f"/><path d="M1640 489h6" stroke="#9e030e"/><path d="M1646 489h6" stroke="#9e020d"/><path d="M1652 489h6" stroke="#9e010c"/><path d="M1658 489h6" stroke="#9e000b"/><path d="M1664 489h6" stroke="#9e000a"/><path d="M1670 489h6" stroke="#9e0009"/><path d="M1676 489h6" stroke="#9e0008"/><path d="M1682 489h6" stroke="#9e0007"/><path d="M1688 489h6" stroke="#9e0006"/><path d="M1694 489h6" stroke="#9e0005"/><path d="M1700 489h12" stroke="#9e0004"/><path d="M1712 489h6" stroke="#9e0003"/><path d="M1718 489h6" stroke="#9e0002"/><path d="M1724 489h6" stroke="#9e0001"/><path d="M1730 489h24" stroke="#9e0000"/><path d="M1178 495h6" stroke="#00799e"/><path d="M1184 495h24" stroke="#00789e"/><path d="M1208 495h18" stroke="#00779e"/><path d="M1226 495h18" stroke="#00769e"/><path d="M1244 495h18" stroke="#00759e"/><path d="M1262 495h18" stroke="#00749e"/><path d="M1280 495h12" stroke="#00739e"/><path d="M1292 495h12" stroke="#00729e"/><path d="M1304 495h6" stroke="#00719e"/><path d="M1310 495h6" stroke="#05719e"/><path d="M1316 495h6" stroke="#0c709e"/><path d="M1322 495h6" stroke="#14709e"/><path d="M1328 495h6" stroke="#1b6f9e"/><path d="M1334 495h6" stroke="#236f9e"/><path d="M1340 495h6" stroke="#2b6e9e"/><path d="M1346 495h6" stroke="#336e9e"/><path d="M1352 495h6" stroke="#3b6d9e"/><path d="M1358 495h6" stroke="#446d9e"/><path d="M1364 495h6" stroke="#4d6c9e"/><path d="M1370 495h6" stroke="#566c9e"/><path d="M1376 495h6" stroke="#606b9e"/><path d="M1382 495h6" stroke="#6a6a9e"/><path d="M1388 495h6" stroke="#746a9e"/><path d="M1394 495h6" stroke="#7e699e"/><path d="M1400 495h6" stroke="#89689e"/><path d="M1406 495h6" stroke="#94679e"/><path d="M1412 495h6" stroke="#9e659c"/><path d="M1418 495h6" stroke="#9e5d91"/><path d="M1424 495h6" stroke="#9e5687"/><path d="M1430 495h6" stroke="#9e507e"/><path d="M1436 495h6" stroke="#9e4a76"/><path d="M1442 495h6" stroke="#9e456f"/><path d="M1448 495h6" stroke="#9e4068"/><path d="M1454 495h6" stroke="#9e3b62"/><path d="M1460 495h6" stroke="#9e375c"/><path d="M1466 495h6" stroke="#9e3457"/><path d="M1472 495h6" stroke="#9e3052"/><path d="M1478 495h6" stroke="#9e2d4d"/><path d="M1484 495h6" stroke="#9e2a49"/><path d="M1490 495h6" stroke="#9e2745"/><path d="M1496 495h6" stroke="#9e2441"/><path d="M1502 495h6" stroke="#9e223e"/><path d="M1508 495h6" stroke="#9e1f3a"/><path d="M1514 495h6" stroke="#9e1d37"/><path d="M1520 495h6" stroke="#9e1b34"/><path d="M1526 495h6" stroke="#9e1931"/><path d="M1532 495h6" stroke="#9e172f"/><path d="M1538 495h6" stroke="#9e152c"/><path d="M1544 495h6" stroke="#9e132a"/><path d="M1550 495h6" stroke="#9e1228"/><path d="M1556 495h6" stroke="#9e1026"/><path d="M1562 495h6" stroke="#9e0f23"/><path d="M1568 495h6" stroke="#9e0d21"/><path d="M1574 495h6" stroke="#9e0c20"/><path d="M1580 495h6" stroke="#9e0b1e"/><path d="M1586 495h6" stroke="#9e0a1c"/><path d="M1592 495h6" stroke="#9e081a"/><path d="M1598 495h6" stroke="#9e0719"/><path d="M1604 495h6" stroke="#9e0617"/><path d="M1610 495h6" stroke="#9e0516"/><path d="M1616 495h6" stroke="#9e0415"/><path d="M1622 495h6" stroke="#9e0313"/><path d="M1628 495h6" stroke="#9e0212"/><path d="M1634 495h6" stroke="#9e0111"/><path d="M1640 495h6" stroke="#9e010f"/><path d="M1646 495h6" stroke="#9e000e"/><path d="M1652 495h6" stroke="#9e000d"/><path d="M1658 495h6" stroke="#9e000c"/><path d="M1664 495h6" stroke="#9e000b"/><path d="M1670 495h6" stroke="#9e000a"/><path d="M1676 495h6" stroke="#9e0009"/><path d="M1682 495h6" stroke="#9e0008"/><path d="M1688 495h6" stroke="#9e0007"/><path d="M1694 495h6" stroke="#9e0006"/><path d="M1700 495h12" stroke="#9e0005"/><path d="M1712 495h6" stroke="#9e0004"/><path d="M1718 495h6" stroke="#9e0003"/><path d="M1724 495h12" stroke="#9e0002"/><path d="M1736 495h6" stroke="#9e0001"/><path d="M1742 495h18" stroke="#9e0000"/><path d="M1178 501h6" stroke="#00739e"/><path d="M1184 501h18" stroke="#00729e"/><path d="M1202 501h18" stroke="#00719e"/><path d="M1220 501h12" stroke="#00709e"/><path d="M1232 501h18" stroke="#006f9e"/><path d="M1250 501h12" stroke="#006e9e"/><path d="M1262 501h12" stroke="#006d9e"/><path d="M1274 501h12" stroke="#006c9e"/><path d="M1286 501h12" stroke="#006b9e"/><path d="M1298 501h12" stroke="#006a9e"/><path d="M1310 501h6" stroke="#07699e"/><path d="M1316 501h6" stroke="#0e699e"/><path d="M1322 501h6" stroke="#15689e"/><path d="M1328 501h6" stroke="#1c689e"/><path d="M1334 501h6" stroke="#24679e"/><path d="M1340 501h6" stroke="#2c669e"/><path d="M1346 501h6" stroke="#34669e"/><path d="M1352 501h6" stroke="#3c659e"/><path d="M1358 501h6" stroke="#44649e"/><path d="M1364 501h6" stroke="#4d649e"/><path d="M1370 501h6" stroke="#56639e"/><path d="M1376 501h6" stroke="#5f629e"/><path d="M1382 501h6" stroke="#69619e"/><path d="M1388 501h6" stroke="#73609e"/><path d="M1394 501h6" stroke="#7d609e"/><path d="M1400 501h6" stroke="#885f9e"/><path d="M1406 501h6" stroke="#935e9e"/><path d="M1412 501h6" stroke="#9e5d9e"/><path d="M1418 501h6" stroke="#9e5693"/><path d="M1424 501h6" stroke="#9e4f89"/><path d="M1430 501h6" stroke="#9e4980"/><path d="M1436 501h6" stroke="#9e4478"/><path d="M1442 501h6" stroke="#9e3f71"/><path d="M1448 501h6" stroke="#9e3a6a"/><path d="M1454 501h6" stroke="#9e3664"/><path d="M1460 501h6" stroke="#9e325e"/><path d="M1466 501h6" stroke="#9e2e59"/><path d="M1472 501h6" stroke="#9e2b54"/><path d="M1478 501h6" stroke="#9e284f"/><path d="M1484 501h6" stroke="#9e254b"/><path d="M1490 501h6" stroke="#9e2247"/><path d="M1496 501h6" stroke="#9e2043"/><path d="M1502 501h6" stroke="#9e1e3f"/><path d="M1508 501h6" stroke="#9e1b3c"/><path d="M1514 501h6" stroke="#9e1939"/><path d="M1520 501h6" stroke="#9e1736"/><path d="M1526 501h6" stroke="#9e1533"/><path d="M1532 501h6" stroke="#9e1430"/><path d="M1538 501h6" stroke="#9e122e"/><path d="M1544 501h6" stroke="#9e102c"/><path d="M1550 501h6" stroke="#9e0f29"/><path d="M1556 501h6" stroke="#9e0d27"/><path d="M1562 501h6" stroke="#9e0c25"/><path d="M1568 501h6" stroke="#9e0b23"/><path d="M1574 501h6" stroke="#9e0921"/><path d="M1580 501h6" stroke="#9e081f"/><path d="M1586 501h6" stroke="#9e071e"/><path d="M1592 501h6" stroke="#9e061c"/><path d="M1598 501h6" stroke="#9e051a"/><path d="M1604 501h6" stroke="#9e0419"/><path d="M1610 501h6" stroke="#9e0317"/><path d="M1616 501h6" stroke="#9e0216"/><path d="M1622 501h6" stroke="#9e0115"/><path d="M1628 501h6" stroke="#9e0013"/><path d="M1634 501h6" stroke="#9e0012"/><path d="M1640 501h6" stroke="#9e0011"/><path d="M1646 501h6" stroke="#9e0010"/><path d="M1652 501h6" stroke="#9e000e"/><path d="M1658 501h6" stroke="#9e000d"/><path d="M1664 501h6" stroke="#9e000c"/><path d="M1670 501h6" stroke="#9e000b"/><path d="M1676 501h6" stroke="#9e000a"/><path d="M1682 501h6" stroke="#9e0009"/><path d="M1688 501h6" stroke="#9e0008"/><path d="M1694 501h12" stroke="#9e0007"/><path d="M1706 501h6" stroke="#9e0006"/><path d="M1712 501h6" stroke="#9e0005"/><path d="M1718 501h6" stroke="#9e0004"/><path d="M1724 501h12" stroke="#9e0003"/><path d="M1736 501h6" stroke="#9e0002"/><path d="M1742 501h6" stroke="#9e0001"/><path d="M1748 501h18" stroke="#9e0000"/><path d="M1184 507h6" stroke="#006d9e"/><path d="M1190 507h12" stroke="#006c9e"/><path d="M1202 507h18" stroke="#006b9e"/><path d="M1220 507h12" stroke="#006a9e"/><path d="M1232 507h12" stroke="#00699e"/><path d="M1244 507h12" stroke="#00689e"/><path d="M1256 507h12" stroke="#00679e"/><path d="M1268 507h12" stroke="#00669e"/><path d="M1280 507h6" stroke="#00659e"/><path d="M1286 507h12" stroke="#00649e"/><path d="M1298 507h6" stroke="#00639e"/><path d="M1304 507h6" stroke="#02639e"/><path d="M1310 507h6" stroke="#08629e"/><path d="M1316 507h6" stroke="#0f619e"/><path d="M1322 507h6" stroke="#16619e"/><path d="M1328 507h6" stroke="#1d609e"/><path d="M1334 507h6" stroke="#255f9e"/><path d="M1340 507h6" stroke="#2c5f9e"/><path d="M1346 507h6" stroke="#345e9e"/><path d="M1352 507h6" stroke="#3c5d9e"/><path d="M1358 507h6" stroke="#455c9e"/><path d="M1364 507h6" stroke="#4d5b9e"/><path d="M1370 507h6" stroke="#565b9e"/><path d="M1376 507h6" stroke="#5f5a9e"/><path d="M1382 507h6" stroke="#68599e"/><path d="M1388 507h6" stroke="#72589e"/><path d="M1394 507h6" stroke="#7c579e"/><path d="M1400 507h6" stroke="#86569e"/><path d="M1406 507h6" stroke="#91559e"/><path d="M1412 507h6" stroke="#9c549e"/><path d="M1418 507h6" stroke="#9e4e95"/><path d="M1424 507h6" stroke="#9e488b"/><path d="M1430 507h6" stroke="#9e4282"/><path d="M1436 507h6" stroke="#9e3d7a"/><path d="M1442 507h6" stroke="#9e3973"/><path d="M1448 507h6" stroke="#9e346c"/><path d="M1454 507h6" stroke="#9e3066"/><path d="M1460 507h6" stroke="#9e2d60"/><path d="M1466 507h6" stroke="#9e295b"/><path d="M1472 507h6" stroke="#9e2656"/><path d="M1478 507h6" stroke="#9e2351"/><path d="M1484 507h6" stroke="#9e214d"/><path d="M1490 507h6" stroke="#9e1e49"/><path d="M1496 507h6" stroke="#9e1c45"/><path d="M1502 507h6" stroke="#9e1a41"/><path d="M1508 507h6" stroke="#9e173e"/><path d="M1514 507h6" stroke="#9e153b"/><path d="M1520 507h6" stroke="#9e1438"/><path d="M1526 507h6" stroke="#9e1235"/><path d="M1532 507h6" stroke="#9e1032"/><path d="M1538 507h6" stroke="#9e0f30"/><path d="M1544 507h6" stroke="#9e0d2d"/><path d="M1550 507h6" stroke="#9e0c2b"/><path d="M1556 507h6" stroke="#9e0a29"/><path d="M1562 507h6" stroke="#9e0926"/><path d="M1568 507h6" stroke="#9e0824"/><path d="M1574 507h6" stroke="#9e0623"/><path d="M1580 507h6" stroke="#9e0521"/><path d="M1586 507h6" stroke="#9e041f"/><path d="M1592 507h6" stroke="#9e031d"/><path d="M1598 507h6" stroke="#9e021c"/><path d="M1604 507h6" stroke="#9e011a"/><path d="M1610 507h6" stroke="#9e0019"/><path d="M1616 507h6" stroke="#9e0017"/><path d="M1622 507h6" stroke="#9e0016"/><path d="M1628 507h6" stroke="#9e0014"/><path d="M1634 507h6" stroke="#9e0013"/><path d="M1640 507h6" stroke="#9e0012"/><path d="M1646 507h6" stroke="#9e0011"/><path d="M1652 507h6" stroke="#9e0010"/><path d="M1658 507h6" stroke="#9e000f"/><path d="M1664 507h6" stroke="#9e000d"/><path d="M1670 507h6" stroke="#9e000c"/><path d="M1676 507h6" stroke="#9e000b"/><path d="M1682 507h6" stroke="#9e000a"/><path d="M1688 507h12" stroke="#9e0009"/><path d="M1700 507h6" stroke="#9e0008"/><path d="M1706 507h6" stroke="#9e0007"/><path d="M1712 507h6" stroke="#9e0006"/><path d="M1718 507h6" stroke="#9e0005"/><path d="M1724 507h12" stroke="#9e0004"/><path d="M1736 507h6" stroke="#9e0003"/><path d="M1742 507h6" stroke="#9e0002"/><path d="M1748 507h12" stroke="#9e0001"/><path d="M1760 507h6" stroke="#9e0000"/><path d="M1184 513h6" stroke="#00679e"/><path d="M1190 513h18" stroke="#00669e"/><path d="M1208 513h12" stroke="#00659e"/><path d="M1220 513h12" stroke="#00649e"/><path d="M1232 513h6" stroke="#00639e"/><path d="M1238 513h12" stroke="#00629e"/><path d="M1250 513h12" stroke="#00619e"/><path d="M1262 513h12" stroke="#00609e"/><path d="M1274 513h6" stroke="#005f9e"/><path d="M1280 513h12" stroke="#005e9e"/><path d="M1292 513h6" stroke="#005d9e"/><path d="M1298 513h6" stroke="#005c9e"/><path d="M1304 513h6" stroke="#035c9e"/><path d="M1310 513h6" stroke="#0a5b9e"/><path d="M1316 513h6" stroke="#105a9e"/><path d="M1322 513h6" stroke="#17599e"/><path d="M1328 513h6" stroke="#1e599e"/><path d="M1334 513h6" stroke="#26589e"/><path d="M1340 513h6" stroke="#2d579e"/><path d="M1346 513h6" stroke="#35569e"/><path d="M1352 513h6" stroke="#3d559e"/><path d="M1358 513h6" stroke="#45549e"/><path d="M1364 513h6" stroke="#4d549e"/><path d="M1370 513h6" stroke="#56539e"/><path d="M1376 513h6" stroke="#5f529e"/><path d="M1382 513h6" stroke="#68519e"/><path d="M1388 513h6" stroke="#71509e"/><path d="M1394 513h6" stroke="#7b4f9e"/><path d="M1400 513h6" stroke="#854d9e"/><path d="M1406 513h6" stroke="#904c9e"/><path d="M1412 513h6" stroke="#9a4b9e"/><path d="M1418 513h6" stroke="#9e4797"/><path d="M1424 513h6" stroke="#9e418d"/><path d="M1430 513h6" stroke="#9e3c84"/><path d="M1436 513h6" stroke="#9e377c"/><path d="M1442 513h6" stroke="#9e3375"/><path d="M1448 513h6" stroke="#9e2f6e"/><path d="M1454 513h6" stroke="#9e2b68"/><path d="M1460 513h6" stroke="#9e2862"/><path d="M1466 513h6" stroke="#9e255d"/><path d="M1472 513h6" stroke="#9e2258"/><path d="M1478 513h6" stroke="#9e1f53"/><path d="M1484 513h6" stroke="#9e1c4e"/><path d="M1490 513h6" stroke="#9e1a4a"/><path d="M1496 513h6" stroke="#9e1847"/><path d="M1502 513h6" stroke="#9e1643"/><path d="M1508 513h6" stroke="#9e1440"/><path d="M1514 513h6" stroke="#9e123c"/><path d="M1520 513h6" stroke="#9e1039"/><path d="M1526 513h6" stroke="#9e0e36"/><path d="M1532 513h6" stroke="#9e0d34"/><path d="M1538 513h6" stroke="#9e0b31"/><path d="M1544 513h6" stroke="#9e0a2f"/><path d="M1550 513h6" stroke="#9e092c"/><path d="M1556 513h6" stroke="#9e072a"/><path d="M1562 513h6" stroke="#9e0628"/><path d="M1568 513h6" stroke="#9e0526"/><path d="M1574 513h6" stroke="#9e0424"/><path d="M1580 513h6" stroke="#9e0322"/><path d="M1586 513h6" stroke="#9e0220"/><path d="M1592 513h6" stroke="#9e011f"/><path d="M1598 513h6" stroke="#9e001d"/><path d="M1604 513h6" stroke="#9e001b"/><path d="M1610 513h6" stroke="#9e001a"/><path d="M1616 513h6" stroke="#9e0019"/><path d="M1622 513h6" stroke="#9e0017"/><path d="M1628 513h6" stroke="#9e0016"/><path d="M1634 513h6" stroke="#9e0014"/><path d="M1640 513h6" stroke="#9e0013"/><path d="M1646 513h6" stroke="#9e0012"/><path d="M1652 513h6" stroke="#9e0011"/><path d="M1658 513h6" stroke="#9e0010"/><path d="M1664 513h6" stroke="#9e000f"/><path d="M1670 513h6" stroke="#9e000e"/><path d="M1676 513h6" stroke="#9e000d"/><path d="M1682 513h6" stroke="#9e000c"/><path d="M1688 513h6" stroke="#9e000b"/><path d="M1694 513h6" stroke="#9e000a"/><path d="M1700 513h6" stroke="#9e0009"/><path d="M1706 513h6" stroke="#9e0008"/><path d="M1712 513h6" stroke="#9e0007"/><path d="M1718 513h6" stroke="#9e0006"/><path d="M1724 513h12" stroke="#9e0005"/><path d="M1736 513h6" stroke="#9e0004"/><path d="M1742 513h6" stroke="#9e0003"/><path d="M1748 513h12" stroke="#9e0002"/><path d="M1760 513h6" stroke="#9e0001"/><path d="M1184 519h12" stroke="#00619e"/><path d="M1196 519h12" stroke="#00609e"/><path d="M1208 519h12" stroke="#005f9e"/><path d="M1220 519h12" stroke="#005e9e"/><path d="M1232 519h6" stroke="#005d9e"/><path d="M1238 519h12" stroke="#005c9e"/><path d="M1250 519h12" stroke="#005b9e"/><path d="M1262 519h6" stroke="#005a9e"/><path d="M1268 519h12" stroke="#00599e"/><path d="M1280 519h6" stroke="#00589e"/><path d="M1286 519h6" stroke="#00579e"/><path d="M1292 519h12" stroke="#00569e"/><path d="M1304 519h6" stroke="#05559e"/><path d="M1310 519h6" stroke="#0b549e"/><path d="M1316 519h6" stroke="#12539e"/><path d="M1322 519h6" stroke="#18539e"/><path d="M1328 519h6" stroke="#1f529e"/><path d="M1334 519h6" stroke="#26519e"/><path d="M1340 519h6" stroke="#2e509e"/><path d="M1346 519h6" stroke="#354f9e"/><path d="M1352 519h6" stroke="#3d4e9e"/><path d="M1358 519h6" stroke="#454d9e"/><path d="M1364 519h6" stroke="#4d4c9e"/><path d="M1370 519h6" stroke="#564b9e"/><path d="M1376 519h6" stroke="#5e4a9e"/><path d="M1382 519h6" stroke="#67499e"/><path d="M1388 519h6" stroke="#71489e"/><path d="M1394 519h6" stroke="#7a479e"/><path d="M1400 519h6" stroke="#84459e"/><path d="M1406 519h6" stroke="#8e449e"/><path d="M1412 519h6" stroke="#98439e"/><path d="M1418 519h6" stroke="#9e3f99"/><path d="M1424 519h6" stroke="#9e3a8f"/><path d="M1430 519h6" stroke="#9e3586"/><path d="M1436 519h6" stroke="#9e317e"/><path d="M1442 519h6" stroke="#9e2d77"/><path d="M1448 519h6" stroke="#9e2970"/><path d="M1454 519h6" stroke="#9e266a"/><path d="M1460 519h6" stroke="#9e2364"/><path d="M1466 519h6" stroke="#9e205e"/><path d="M1472 519h6" stroke="#9e1d59"/><path d="M1478 519h6" stroke="#9e1a55"/><path d="M1484 519h6" stroke="#9e1850"/><path d="M1490 519h6" stroke="#9e164c"/><path d="M1496 519h6" stroke="#9e1448"/><path d="M1502 519h6" stroke="#9e1245"/><path d="M1508 519h6" stroke="#9e1041"/><path d="M1514 519h6" stroke="#9e0e3e"/><path d="M1520 519h6" stroke="#9e0d3b"/><path d="M1526 519h6" stroke="#9e0b38"/><path d="M1532 519h6" stroke="#9e0935"/><path d="M1538 519h6" stroke="#9e0833"/><path d="M1544 519h6" stroke="#9e0730"/><path d="M1550 519h6" stroke="#9e052e"/><path d="M1556 519h6" stroke="#9e042c"/><path d="M1562 519h6" stroke="#9e0329"/><path d="M1568 519h6" stroke="#9e0227"/><path d="M1574 519h6" stroke="#9e0125"/><path d="M1580 519h6" stroke="#9e0024"/><path d="M1586 519h6" stroke="#9e0022"/><path d="M1592 519h6" stroke="#9e0020"/><path d="M1598 519h6" stroke="#9e001e"/><path d="M1604 519h6" stroke="#9e001d"/><path d="M1610 519h6" stroke="#9e001b"/><path d="M1616 519h6" stroke="#9e001a"/><path d="M1622 519h6" stroke="#9e0018"/><path d="M1628 519h6" stroke="#9e0017"/><path d="M1634 519h6" stroke="#9e0016"/><path d="M1640 519h6" stroke="#9e0014"/><path d="M1646 519h6" stroke="#9e0013"/><path d="M1652 519h6" stroke="#9e0012"/><path d="M1658 519h6" stroke="#9e0011"/><path d="M1664 519h6" stroke="#9e0010"/><path d="M1670 519h6" stroke="#9e000f"/><path d="M1676 519h6" stroke="#9e000e"/><path d="M1682 519h6" stroke="#9e000d"/><path d="M1688 519h6" stroke="#9e000c"/><path d="M1694 519h6" stroke="#9e000b"/><path d="M1700 519h6" stroke="#9e000a"/><path d="M1706 519h6" stroke="#9e0009"/><path d="M1712 519h6" stroke="#9e0008"/><path d="M1718 519h6" stroke="#9e0007"/><path d="M1724 519h12" stroke="#9e0006"/><path d="M1736 519h6" stroke="#9e0005"/><path d="M1742 519h6" stroke="#9e0004"/><path d="M1748 519h6" stroke="#9e0003"/><path d="M1190 525h12" stroke="#005b9e"/><path d="M1202 525h12" stroke="#005a9e"/><path d="M1214 525h12" stroke="#00599e"/><path d="M1226 525h6" stroke="#00589e"/><path d="M1232 525h12" stroke="#00579e"/><path d="M1244 525h6" stroke="#00569e"/><path d="M1250 525h12" stroke="#00559e"/><path d="M1262 525h6" stroke="#00549e"/><path d="M1268 525h6" stroke="#00539e"/><path d="M1274 525h12" stroke="#00529e"/><path d="M1286 525h6" stroke="#00519e"/><path d="M1292 525h6" stroke="#00509e"/><path d="M1298 525h6" stroke="#004f9e"/><path d="M1304 525h6" stroke="#064f9e"/><path d="M1310 525h6" stroke="#0c4e9e"/><path d="M1316 525h6" stroke="#134d9e"/><path d="M1322 525h6" stroke="#194c9e"/><path d="M1328 525h6" stroke="#204b9e"/><path d="M1334 525h6" stroke="#274a9e"/><path d="M1340 525h6" stroke="#2e499e"/><path d="M1346 525h6" stroke="#36489e"/><path d="M1352 525h6" stroke="#3d479e"/><path d="M1358 525h6" stroke="#45469e"/><path d="M1364 525h6" stroke="#4d459e"/><path d="M1370 525h6" stroke="#56449e"/><path d="M1376 525h6" stroke="#5e439e"/><path d="M1382 525h6" stroke="#67419e"/><path d="M1388 525h6" stroke="#70409e"/><path d="M1394 525h6" stroke="#793f9e"/><path d="M1400 525h6" stroke="#833e9e"/><path d="M1406 525h6" stroke="#8d3c9e"/><path d="M1412 525h6" stroke="#973b9e"/><path d="M1418 525h6" stroke="#9e389b"/><path d="M1424 525h6" stroke="#9e3491"/><path d="M1430 525h6" stroke="#9e2f88"/><path d="M1436 525h6" stroke="#9e2b80"/><path d="M1442 525h6" stroke="#9e2779"/><path d="M1448 525h6" stroke="#9e2472"/><path d="M1454 525h6" stroke="#9e216c"/><path d="M1460 525h6" stroke="#9e1e66"/><path d="M1466 525h6" stroke="#9e1b60"/><path d="M1472 525h6" stroke="#9e185b"/><path d="M1478 525h6" stroke="#9e1656"/><path d="M1484 525h6" stroke="#9e1452"/><path d="M1490 525h6" stroke="#9e124e"/><path d="M1496 525h6" stroke="#9e104a"/><path d="M1502 525h6" stroke="#9e0e46"/><path d="M1508 525h6" stroke="#9e0c43"/><path d="M1514 525h6" stroke="#9e0b40"/><path d="M1520 525h6" stroke="#9e093d"/><path d="M1526 525h6" stroke="#9e083a"/><path d="M1532 525h6" stroke="#9e0637"/><path d="M1538 525h6" stroke="#9e0534"/><path d="M1544 525h6" stroke="#9e0432"/><path d="M1550 525h6" stroke="#9e022f"/><path d="M1556 525h6" stroke="#9e012d"/><path d="M1562 525h6" stroke="#9e002b"/><path d="M1568 525h6" stroke="#9e0029"/><path d="M1574 525h6" stroke="#9e0027"/><path d="M1580 525h6" stroke="#9e0025"/><path d="M1586 525h6" stroke="#9e0023"/><path d="M1592 525h6" stroke="#9e0021"/><path d="M1598 525h6" stroke="#9e0020"/><path d="M1604 525h6" stroke="#9e001e"/><path d="M1610 525h6" stroke="#9e001d"/><path d="M1616 525h6" stroke="#9e001b"/><path d="M1622 525h6" stroke="#9e001a"/><path d="M1628 525h6" stroke="#9e0018"/><path d="M1634 525h6" stroke="#9e0017"/><path d="M1640 525h6" stroke="#9e0016"/><path d="M1646 525h6" stroke="#9e0014"/><path d="M1652 525h6" stroke="#9e0013"/><path d="M1658 525h6" stroke="#9e0012"/><path d="M1664 525h6" stroke="#9e0011"/><path d="M1670 525h6" stroke="#9e0010"/><path d="M1676 525h6" stroke="#9e000f"/><path d="M1682 525h6" stroke="#9e000e"/><path d="M1688 525h6" stroke="#9e000d"/><path d="M1694 525h6" stroke="#9e000c"/><path d="M1700 525h6" stroke="#9e000b"/><path d="M1706 525h6" stroke="#9e000a"/><path d="M1712 525h6" stroke="#9e0009"/><path d="M1718 525h6" stroke="#9e0008"/><path d="M1724 525h12" stroke="#9e0007"/><path d="M1190 531h12" stroke="#00569e"/><path d="M1202 531h6" stroke="#00559e"/><path d="M1208 531h12" stroke="#00549e"/><path d="M1220 531h6" stroke="#00539e"/><path d="M1226 531h12" stroke="#00529e"/><path d="M1238 531h6" stroke="#00519e"/><path d="M1244 531h12" stroke="#00509e"/><path d="M1256 531h6" stroke="#004f9e"/><path d="M1262 531h6" stroke="#004e9e"/><path d="M1268 531h12" stroke="#004d9e"/><path d="M1280 531h6" stroke="#004c9e"/><path d="M1286 531h6" stroke="#004b9e"/><path d="M1292 531h6" stroke="#004a9e"/><path d="M1298 531h6" stroke="#01499e"/><path d="M1304 531h6" stroke="#07489e"/><path d="M1310 531h6" stroke="#0e479e"/><path d="M1316 531h6" stroke="#14469e"/><path d="M1322 531h6" stroke="#1b459e"/><path d="M1328 531h6" stroke="#21459e"/><path d="M1334 531h6" stroke="#28439e"/><path d="M1340 531h6" stroke="#2f429e"/><path d="M1346 531h6" stroke="#36419e"/><path d="M1352 531h6" stroke="#3e409e"/><path d="M1358 531h6" stroke="#463f9e"/><path d="M1364 531h6" stroke="#4d3e9e"/><path d="M1370 531h6" stroke="#553d9e"/><path d="M1376 531h6" stroke="#5e3c9e"/><path d="M1382 531h6" stroke="#663a9e"/><path d="M1388 531h6" stroke="#6f399e"/><path d="M1394 531h6" stroke="#78389e"/><path d="M1400 531h6" stroke="#82369e"/><path d="M1406 531h6" stroke="#8b359e"/><path d="M1412 531h6" stroke="#95339e"/><path d="M1418 531h6" stroke="#9e329d"/><path d="M1424 531h6" stroke="#9e2d93"/><path d="M1430 531h6" stroke="#9e298a"/><path d="M1436 531h6" stroke="#9e2582"/><path d="M1442 531h6" stroke="#9e227b"/><path d="M1448 531h6" stroke="#9e1e74"/><path d="M1454 531h6" stroke="#9e1c6d"/><path d="M1460 531h6" stroke="#9e1968"/><path d="M1466 531h6" stroke="#9e1662"/><path d="M1472 531h6" stroke="#9e145d"/><path d="M1478 531h6" stroke="#9e1258"/><path d="M1484 531h6" stroke="#9e1054"/><path d="M1490 531h6" stroke="#9e0e50"/><path d="M1496 531h6" stroke="#9e0c4c"/><path d="M1502 531h6" stroke="#9e0a48"/><path d="M1508 531h6" stroke="#9e0945"/><path d="M1514 531h6" stroke="#9e0741"/><path d="M1520 531h6" stroke="#9e063e"/><path d="M1526 531h6" stroke="#9e043b"/><path d="M1532 531h6" stroke="#9e0338"/><path d="M1538 531h6" stroke="#9e0236"/><path d="M1544 531h6" stroke="#9e0133"/><path d="M1550 531h6" stroke="#9e0031"/><path d="M1556 531h6" stroke="#9e002f"/><path d="M1562 531h6" stroke="#9e002c"/><path d="M1568 531h6" stroke="#9e002a"/><path d="M1574 531h6" stroke="#9e0028"/><path d="M1580 531h6" stroke="#9e0026"/><path d="M1586 531h6" stroke="#9e0025"/><path d="M1592 531h6" stroke="#9e0023"/><path d="M1598 531h6" stroke="#9e0021"/><path d="M1604 531h6" stroke="#9e001f"/><path d="M1610 531h6" stroke="#9e001e"/><path d="M1616 531h6" stroke="#9e001c"/><path d="M1622 531h6" stroke="#9e001b"/><path d="M1628 531h6" stroke="#9e001a"/><path d="M1634 531h6" stroke="#9e0018"/><path d="M1640 531h6" stroke="#9e0017"/><path d="M1646 531h6" stroke="#9e0016"/><path d="M1652 531h6" stroke="#9e0014"/><path d="M1658 531h6" stroke="#9e0013"/><path d="M1664 531h6" stroke="#9e0012"/><path d="M1670 531h6" stroke="#9e0011"/><path d="M1676 531h6" stroke="#9e0010"/><path d="M1682 531h6" stroke="#9e000f"/><path d="M1688 531h6" stroke="#9e000e"/><path d="M1694 531h6" stroke="#9e000d"/><path d="M1700 531h6" stroke="#9e000c"/><path d="M1706 531h6" stroke="#9e000b"/><path d="M1712 531h6" stroke="#9e000a"/><path d="M1190 537h12" stroke="#00519e"/><path d="M1202 537h6" stroke="#00509e"/><path d="M1208 537h12" stroke="#004f9e"/><path d="M1220 537h6" stroke="#004e9e"/><path d="M1226 537h6" stroke="#004d9e"/><path d="M1232 537h12" stroke="#004c9e"/><path d="M1244 537h6" stroke="#004b9e"/><path d="M1250 537h6" stroke="#004a9e"/><path d="M1256 537h12" stroke="#00499e"/><path d="M1268 537h6" stroke="#00489e"/><path d="M1274 537h6" stroke="#00479e"/><path d="M1280 537h6" stroke="#00469e"/><path d="M1286 537h6" stroke="#00459e"/><path d="M1292 537h6" stroke="#00449e"/><path d="M1298 537h6" stroke="#03439e"/><path d="M1304 537h6" stroke="#09429e"/><path d="M1310 537h6" stroke="#0f419e"/><path d="M1316 537h6" stroke="#15409e"/><path d="M1322 537h6" stroke="#1c3f9e"/><path d="M1328 537h6" stroke="#223e9e"/><path d="M1334 537h6" stroke="#293d9e"/><path d="M1340 537h6" stroke="#303c9e"/><path d="M1346 537h6" stroke="#373b9e"/><path d="M1352 537h6" stroke="#3e3a9e"/><path d="M1358 537h6" stroke="#46399e"/><path d="M1364 537h6" stroke="#4d379e"/><path d="M1370 537h6" stroke="#55369e"/><path d="M1376 537h6" stroke="#5e359e"/><path d="M1382 537h6" stroke="#66349e"/><path d="M1388 537h6" stroke="#6f329e"/><path d="M1394 537h6" stroke="#77319e"/><path d="M1400 537h6" stroke="#812f9e"/><path d="M1406 537h6" stroke="#8a2e9e"/><path d="M1412 537h6" stroke="#942c9e"/><path d="M1418 537h6" stroke="#9e2b9e"/><path d="M1424 537h6" stroke="#9e2795"/><path d="M1430 537h6" stroke="#9e238c"/><path d="M1436 537h6" stroke="#9e1f84"/><path d="M1442 537h6" stroke="#9e1c7c"/><path d="M1448 537h6" stroke="#9e1976"/><path d="M1454 537h6" stroke="#9e176f"/><path d="M1460 537h6" stroke="#9e1469"/><path d="M1466 537h6" stroke="#9e1264"/><path d="M1472 537h6" stroke="#9e105f"/><path d="M1478 537h6" stroke="#9e0d5a"/><path d="M1484 537h6" stroke="#9e0c56"/><path d="M1490 537h6" stroke="#9e0a51"/><path d="M1496 537h6" stroke="#9e084d"/><path d="M1502 537h6" stroke="#9e074a"/><path d="M1508 537h6" stroke="#9e0546"/><path d="M1514 537h6" stroke="#9e0443"/><path d="M1520 537h6" stroke="#9e0240"/><path d="M1526 537h6" stroke="#9e013d"/><path d="M1532 537h6" stroke="#9e003a"/><path d="M1538 537h6" stroke="#9e0037"/><path d="M1544 537h6" stroke="#9e0035"/><path d="M1550 537h6" stroke="#9e0032"/><path d="M1556 537h6" stroke="#9e0030"/><path d="M1562 537h6" stroke="#9e002e"/><path d="M1568 537h6" stroke="#9e002c"/><path d="M1574 537h6" stroke="#9e002a"/><path d="M1580 537h6" stroke="#9e0028"/><path d="M1586 537h6" stroke="#9e0026"/><path d="M1592 537h6" stroke="#9e0024"/><path d="M1598 537h6" stroke="#9e0022"/><path d="M1604 537h6" stroke="#9e0021"/><path d="M1610 537h6" stroke="#9e001f"/><path d="M1616 537h6" stroke="#9e001e"/><path d="M1622 537h6" stroke="#9e001c"/><path d="M1628 537h6" stroke="#9e001b"/><path d="M1634 537h6" stroke="#9e0019"/><path d="M1640 537h6" stroke="#9e0018"/><path d="M1646 537h6" stroke="#9e0017"/><path d="M1652 537h6" stroke="#9e0016"/><path d="M1658 537h6" stroke="#9e0014"/><path d="M1664 537h6" stroke="#9e0013"/><path d="M1670 537h6" stroke="#9e0012"/><path d="M1676 537h6" stroke="#9e0011"/><path d="M1682 537h6" stroke="#9e0010"/><path d="M1688 537h6" stroke="#9e000f"/><path d="M1694 537h6" stroke="#9e000e"/><path d="M1196 543h6" stroke="#004c9e"/><path d="M1202 543h6" stroke="#004b9e"/><path d="M1208 543h6" stroke="#004a9e"/><path d="M1214 543h12" stroke="#00499e"/><path d="M1226 543h6" stroke="#00489e"/><path d="M1232 543h6" stroke="#00479e"/><path d="M1238 543h12" stroke="#00469e"/><path d="M1250 543h6" stroke="#00459e"/><path d="M1256 543h6" stroke="#00449e"/><path d="M1262 543h6" stroke="#00439e"/><path d="M1268 543h6" stroke="#00429e"/><path d="M1274 543h6" stroke="#00419e"/><path d="M1280 543h6" stroke="#00409e"/><path d="M1286 543h6" stroke="#003f9e"/><path d="M1292 543h6" stroke="#003e9e"/><path d="M1298 543h6" stroke="#043e9e"/><path d="M1304 543h6" stroke="#0a3d9e"/><path d="M1310 543h6" stroke="#103b9e"/><path d="M1316 543h6" stroke="#163a9e"/><path d="M1322 543h6" stroke="#1c399e"/><path d="M1328 543h6" stroke="#23389e"/><path d="M1334 543h6" stroke="#2a379e"/><path d="M1340 543h6" stroke="#30369e"/><path d="M1346 543h6" stroke="#37359e"/><path d="M1352 543h6" stroke="#3f349e"/><path d="M1358 543h6" stroke="#46329e"/><path d="M1364 543h6" stroke="#4e319e"/><path d="M1370 543h6" stroke="#55309e"/><path d="M1376 543h6" stroke="#5d2e9e"/><path d="M1382 543h6" stroke="#652d9e"/><path d="M1388 543h6" stroke="#6e2c9e"/><path d="M1394 543h6" stroke="#772a9e"/><path d="M1400 543h6" stroke="#80299e"/><path d="M1406 543h6" stroke="#89279e"/><path d="M1412 543h6" stroke="#92259e"/><path d="M1418 543h6" stroke="#9c249e"/><path d="M1424 543h6" stroke="#9e2097"/><path d="M1430 543h6" stroke="#9e1d8e"/><path d="M1436 543h6" stroke="#9e1a86"/><path d="M1442 543h6" stroke="#9e177e"/><path d="M1448 543h6" stroke="#9e1477"/><path d="M1454 543h6" stroke="#9e1271"/><path d="M1460 543h6" stroke="#9e0f6b"/><path d="M1466 543h6" stroke="#9e0d66"/><path d="M1472 543h6" stroke="#9e0b60"/><path d="M1478 543h6" stroke="#9e095c"/><path d="M1484 543h6" stroke="#9e0857"/><path d="M1490 543h6" stroke="#9e0653"/><path d="M1496 543h6" stroke="#9e044f"/><path d="M1502 543h6" stroke="#9e034b"/><path d="M1508 543h6" stroke="#9e0148"/><path d="M1514 543h6" stroke="#9e0044"/><path d="M1520 543h6" stroke="#9e0041"/><path d="M1526 543h6" stroke="#9e003e"/><path d="M1532 543h6" stroke="#9e003c"/><path d="M1538 543h6" stroke="#9e0039"/><path d="M1544 543h6" stroke="#9e0036"/><path d="M1550 543h6" stroke="#9e0034"/><path d="M1556 543h6" stroke="#9e0031"/><path d="M1562 543h6" stroke="#9e002f"/><path d="M1568 543h6" stroke="#9e002d"/><path d="M1574 543h6" stroke="#9e002b"/><path d="M1580 543h6" stroke="#9e0029"/><path d="M1586 543h6" stroke="#9e0027"/><path d="M1592 543h6" stroke="#9e0025"/><path d="M1598 543h6" stroke="#9e0024"/><path d="M1604 543h6" stroke="#9e0022"/><path d="M1610 543h6" stroke="#9e0020"/><path d="M1616 543h6" stroke="#9e001f"/><path d="M1622 543h6" stroke="#9e001d"/><path d="M1628 543h6" stroke="#9e001c"/><path d="M1634 543h6" stroke="#9e001b"/><path d="M1640 543h6" stroke="#9e0019"/><path d="M1646 543h6" stroke="#9e0018"/><path d="M1652 543h6" stroke="#9e0017"/><path d="M1658 543h6" stroke="#9e0016"/><path d="M1664 543h6" stroke="#9e0014"/><path d="M1670 543h6" stroke="#9e0013"/><path d="M1676 543h6" stroke="#9e0012"/><path d="M1196 549h6" stroke="#00479e"/><path d="M1202 549h6" stroke="#00469e"/><path d="M1208 549h6" stroke="#00459e"/><path d="M1214 549h12" stroke="#00449e"/><path d="M1226 549h6" stroke="#00439e"/><path d="M1232 549h6" stroke="#00429e"/><path d="M1238 549h6" stroke="#00419e"/><path d="M1244 549h12" stroke="#00409e"/><path d="M1256 549h6" stroke="#003f9e"/><path d="M1262 549h6" stroke="#003e9e"/><path d="M1268 549h6" stroke="#003d9e"/><path d="M1274 549h6" stroke="#003c9e"/><path d="M1280 549h6" stroke="#003b9e"/><path d="M1286 549h6" stroke="#003a9e"/><path d="M1292 549h6" stroke="#00399e"/><path d="M1298 549h6" stroke="#05389e"/><path d="M1304 549h6" stroke="#0b379e"/><path d="M1310 549h6" stroke="#11369e"/><path d="M1316 549h6" stroke="#17359e"/><path d="M1322 549h6" stroke="#1d349e"/><path d="M1328 549h6" stroke="#24329e"/><path d="M1334 549h6" stroke="#2a319e"/><path d="M1340 549h6" stroke="#31309e"/><path d="M1346 549h6" stroke="#382f9e"/><path d="M1352 549h6" stroke="#3f2e9e"/><path d="M1358 549h6" stroke="#462c9e"/><path d="M1364 549h6" stroke="#4e2b9e"/><path d="M1370 549h6" stroke="#552a9e"/><path d="M1376 549h6" stroke="#5d289e"/><path d="M1382 549h6" stroke="#65279e"/><path d="M1388 549h6" stroke="#6d259e"/><path d="M1394 549h6" stroke="#76249e"/><path d="M1400 549h6" stroke="#7f229e"/><path d="M1406 549h6" stroke="#88219e"/><path d="M1412 549h6" stroke="#911f9e"/><path d="M1418 549h6" stroke="#9a1d9e"/><path d="M1424 549h6" stroke="#9e1a98"/><path d="M1430 549h6" stroke="#9e1790"/><path d="M1436 549h6" stroke="#9e1487"/><path d="M1442 549h6" stroke="#9e1280"/><path d="M1448 549h6" stroke="#9e0f79"/><path d="M1454 549h6" stroke="#9e0d73"/><path d="M1460 549h6" stroke="#9e0b6d"/><path d="M1466 549h6" stroke="#9e0967"/><path d="M1472 549h6" stroke="#9e0762"/><path d="M1478 549h6" stroke="#9e055d"/><path d="M1484 549h6" stroke="#9e0459"/><path d="M1490 549h6" stroke="#9e0255"/><path d="M1496 549h6" stroke="#9e0151"/><path d="M1502 549h6" stroke="#9e004d"/><path d="M1508 549h6" stroke="#9e0049"/><path d="M1514 549h6" stroke="#9e0046"/><path d="M1520 549h6" stroke="#9e0043"/><path d="M1526 549h6" stroke="#9e0040"/><path d="M1532 549h6" stroke="#9e003d"/><path d="M1538 549h6" stroke="#9e003a"/><path d="M1544 549h6" stroke="#9e0038"/><path d="M1550 549h6" stroke="#9e0035"/><path d="M1556 549h6" stroke="#9e0033"/><path d="M1562 549h6" stroke="#9e0031"/><path d="M1568 549h6" stroke="#9e002e"/><path d="M1574 549h6" stroke="#9e002c"/><path d="M1580 549h6" stroke="#9e002a"/><path d="M1586 549h6" stroke="#9e0029"/><path d="M1592 549h6" stroke="#9e0027"/><path d="M1598 549h6" stroke="#9e0025"/><path d="M1604 549h6" stroke="#9e0023"/><path d="M1610 549h6" stroke="#9e0022"/><path d="M1616 549h6" stroke="#9e0020"/><path d="M1622 549h6" stroke="#9e001f"/><path d="M1628 549h6" stroke="#9e001d"/><path d="M1634 549h6" stroke="#9e001c"/><path d="M1640 549h6" stroke="#9e001a"/><path d="M1646 549h6" stroke="#9e0019"/><path d="M1652 549h6" stroke="#9e0018"/><path d="M1658 549h6" stroke="#9e0017"/><path d="M1664 549h6" stroke="#9e0015"/><path d="M1202 555h6" stroke="#00419e"/><path d="M1208 555h12" stroke="#00409e"/><path d="M1220 555h6" stroke="#003f9e"/><path d="M1226 555h6" stroke="#003e9e"/><path d="M1232 555h6" stroke="#003d9e"/><path d="M1238 555h6" stroke="#003c9e"/><path d="M1244 555h12" stroke="#003b9e"/><path d="M1256 555h6" stroke="#003a9e"/><path d="M1262 555h6" stroke="#00399e"/><path d="M1268 555h6" stroke="#00389e"/><path d="M1274 555h6" stroke="#00379e"/><path d="M1280 555h6" stroke="#00369e"/><path d="M1286 555h6" stroke="#00359e"/><path d="M1292 555h6" stroke="#01349e"/><path d="M1298 555h6" stroke="#07339e"/><path d="M1304 555h6" stroke="#0c329e"/><path d="M1310 555h6" stroke="#12309e"/><path d="M1316 555h6" stroke="#182f9e"/><path d="M1322 555h6" stroke="#1e2e9e"/><path d="M1328 555h6" stroke="#252d9e"/><path d="M1334 555h6" stroke="#2b2c9e"/><path d="M1340 555h6" stroke="#322a9e"/><path d="M1346 555h6" stroke="#38299e"/><path d="M1352 555h6" stroke="#3f289e"/><path d="M1358 555h6" stroke="#46269e"/><path d="M1364 555h6" stroke="#4e259e"/><path d="M1370 555h6" stroke="#55249e"/><path d="M1376 555h6" stroke="#5d229e"/><path d="M1382 555h6" stroke="#65219e"/><path d="M1388 555h6" stroke="#6d1f9e"/><path d="M1394 555h6" stroke="#751e9e"/><path d="M1400 555h6" stroke="#7e1c9e"/><path d="M1406 555h6" stroke="#861a9e"/><path d="M1412 555h6" stroke="#8f199e"/><path d="M1418 555h6" stroke="#99179e"/><path d="M1424 555h6" stroke="#9e149a"/><path d="M1430 555h6" stroke="#9e1291"/><path d="M1436 555h6" stroke="#9e0f89"/><path d="M1442 555h6" stroke="#9e0c82"/><path d="M1448 555h6" stroke="#9e0a7b"/><path d="M1454 555h6" stroke="#9e0874"/><path d="M1460 555h6" stroke="#9e066f"/><path d="M1466 555h6" stroke="#9e0469"/><path d="M1472 555h6" stroke="#9e0364"/><path d="M1478 555h6" stroke="#9e015f"/><path d="M1484 555h6" stroke="#9e005b"/><path d="M1490 555h6" stroke="#9e0056"/><path d="M1496 555h6" stroke="#9e0052"/><path d="M1502 555h6" stroke="#9e004f"/><path d="M1508 555h6" stroke="#9e004b"/><path d="M1514 555h6" stroke="#9e0048"/><path d="M1520 555h6" stroke="#9e0044"/><path d="M1526 555h6" stroke="#9e0041"/><path d="M1532 555h6" stroke="#9e003f"/><path d="M1538 555h6" stroke="#9e003c"/><path d="M1544 555h6" stroke="#9e0039"/><path d="M1550 555h6" stroke="#9e0037"/><path d="M1556 555h6" stroke="#9e0034"/><path d="M1562 555h6" stroke="#9e0032"/><path d="M1568 555h6" stroke="#9e0030"/><path d="M1574 555h6" stroke="#9e002e"/><path d="M1580 555h6" stroke="#9e002c"/><path d="M1586 555h6" stroke="#9e002a"/><path d="M1592 555h6" stroke="#9e0028"/><path d="M1598 555h6" stroke="#9e0026"/><path d="M1604 555h6" stroke="#9e0025"/><path d="M1610 555h6" stroke="#9e0023"/><path d="M1616 555h6" stroke="#9e0021"/><path d="M1622 555h6" stroke="#9e0020"/><path d="M1628 555h6" stroke="#9e001e"/><path d="M1634 555h6" stroke="#9e001d"/><path d="M1640 555h6" stroke="#9e001c"/><path d="M1646 555h6" stroke="#9e001a"/><path d="M1202 561h6" stroke="#003d9e"/><path d="M1208 561h6" stroke="#003c9e"/><path d="M1214 561h6" stroke="#003b9e"/><path d="M1220 561h6" stroke="#003a9e"/><path d="M1226 561h6" stroke="#00399e"/><path d="M1232 561h6" stroke="#00389e"/><path d="M1238 561h12" stroke="#00379e"/><path d="M1250 561h6" stroke="#00369e"/><path d="M1256 561h6" stroke="#00359e"/><path d="M1262 561h6" stroke="#00349e"/><path d="M1268 561h6" stroke="#00339e"/><path d="M1274 561h6" stroke="#00329e"/><path d="M1280 561h6" stroke="#00319e"/><path d="M1286 561h6" stroke="#00309e"/><path d="M1292 561h6" stroke="#022f9e"/><path d="M1298 561h6" stroke="#082d9e"/><path d="M1304 561h6" stroke="#0d2c9e"/><path d="M1310 561h6" stroke="#132b9e"/><path d="M1316 561h6" stroke="#192a9e"/><path d="M1322 561h6" stroke="#1f299e"/><path d="M1328 561h6" stroke="#25289e"/><path d="M1334 561h6" stroke="#2c269e"/><path d="M1340 561h6" stroke="#32259e"/><path d="M1346 561h6" stroke="#39249e"/><path d="M1352 561h6" stroke="#40229e"/><path d="M1358 561h6" stroke="#47219e"/><path d="M1364 561h6" stroke="#4e1f9e"/><path d="M1370 561h6" stroke="#551e9e"/><path d="M1376 561h6" stroke="#5d1c9e"/><path d="M1382 561h6" stroke="#641b9e"/><path d="M1388 561h6" stroke="#6c199e"/><path d="M1394 561h6" stroke="#74189e"/><path d="M1400 561h6" stroke="#7d169e"/><path d="M1406 561h6" stroke="#85149e"/><path d="M1412 561h6" stroke="#8e139e"/><path d="M1418 561h6" stroke="#97119e"/><path d="M1424 561h6" stroke="#9e0f9c"/><path d="M1430 561h6" stroke="#9e0c93"/><path d="M1436 561h6" stroke="#9e0a8b"/><path d="M1442 561h6" stroke="#9e0783"/><path d="M1448 561h6" stroke="#9e057d"/><path d="M1454 561h6" stroke="#9e0376"/><path d="M1460 561h6" stroke="#9e0270"/><path d="M1466 561h6" stroke="#9e006b"/><path d="M1472 561h6" stroke="#9e0066"/><path d="M1478 561h6" stroke="#9e0061"/><path d="M1484 561h6" stroke="#9e005c"/><path d="M1490 561h6" stroke="#9e0058"/><path d="M1496 561h6" stroke="#9e0054"/><path d="M1502 561h6" stroke="#9e0050"/><path d="M1508 561h6" stroke="#9e004d"/><path d="M1514 561h6" stroke="#9e0049"/><path d="M1520 561h6" stroke="#9e0046"/><path d="M1526 561h6" stroke="#9e0043"/><path d="M1532 561h6" stroke="#9e0040"/><path d="M1538 561h6" stroke="#9e003d"/><path d="M1544 561h6" stroke="#9e003b"/><path d="M1550 561h6" stroke="#9e0038"/><path d="M1556 561h6" stroke="#9e0036"/><path d="M1562 561h6" stroke="#9e0033"/><path d="M1568 561h6" stroke="#9e0031"/><path d="M1574 561h6" stroke="#9e002f"/><path d="M1580 561h6" stroke="#9e002d"/><path d="M1586 561h6" stroke="#9e002b"/><path d="M1592 561h6" stroke="#9e0029"/><path d="M1598 561h6" stroke="#9e0028"/><path d="M1604 561h6" stroke="#9e0026"/><path d="M1610 561h6" stroke="#9e0024"/><path d="M1616 561h6" stroke="#9e0023"/><path d="M1622 561h6" stroke="#9e0021"/><path d="M1628 561h6" stroke="#9e0020"/><path d="M1202 567h6" stroke="#00389e"/><path d="M1208 567h6" stroke="#00379e"/><path d="M1214 567h12" stroke="#00369e"/><path d="M1226 567h6" stroke="#00359e"/><path d="M1232 567h6" stroke="#00349e"/><path d="M1238 567h6" stroke="#00339e"/><path d="M1244 567h6" stroke="#00329e"/><path d="M1250 567h6" stroke="#00319e"/><path d="M1256 567h6" stroke="#00309e"/><path d="M1262 567h6" stroke="#002f9e"/><path d="M1268 567h6" stroke="#002e9e"/><path d="M1274 567h6" stroke="#002d9e"/><path d="M1280 567h6" stroke="#002c9e"/><path d="M1286 567h6" stroke="#002b9e"/><path d="M1292 567h6" stroke="#042a9e"/><path d="M1298 567h6" stroke="#09289e"/><path d="M1304 567h6" stroke="#0f279e"/><path d="M1310 567h6" stroke="#14269e"/><path d="M1316 567h6" stroke="#1a259e"/><path d="M1322 567h6" stroke="#20249e"/><path d="M1328 567h6" stroke="#26229e"/><path d="M1334 567h6" stroke="#2c219e"/><path d="M1340 567h6" stroke="#33209e"/><path d="M1346 567h6" stroke="#391e9e"/><path d="M1352 567h6" stroke="#401d9e"/><path d="M1358 567h6" stroke="#471b9e"/><path d="M1364 567h6" stroke="#4e1a9e"/><path d="M1370 567h6" stroke="#55189e"/><path d="M1376 567h6" stroke="#5c179e"/><path d="M1382 567h6" stroke="#64159e"/><path d="M1388 567h6" stroke="#6c149e"/><path d="M1394 567h6" stroke="#74129e"/><path d="M1400 567h6" stroke="#7c109e"/><path d="M1406 567h6" stroke="#840f9e"/><path d="M1412 567h6" stroke="#8d0d9e"/><path d="M1418 567h6" stroke="#960b9e"/><path d="M1424 567h6" stroke="#9e099d"/><path d="M1430 567h6" stroke="#9e0795"/><path d="M1436 567h6" stroke="#9e048d"/><path d="M1442 567h6" stroke="#9e0285"/><path d="M1448 567h6" stroke="#9e017e"/><path d="M1454 567h6" stroke="#9e0078"/><path d="M1460 567h6" stroke="#9e0072"/><path d="M1466 567h6" stroke="#9e006c"/><path d="M1472 567h6" stroke="#9e0067"/><path d="M1478 567h6" stroke="#9e0062"/><path d="M1484 567h6" stroke="#9e005e"/><path d="M1490 567h6" stroke="#9e0059"/><path d="M1496 567h6" stroke="#9e0055"/><path d="M1502 567h6" stroke="#9e0052"/><path d="M1508 567h6" stroke="#9e004e"/><path d="M1514 567h6" stroke="#9e004b"/><path d="M1520 567h6" stroke="#9e0047"/><path d="M1526 567h6" stroke="#9e0044"/><path d="M1532 567h6" stroke="#9e0041"/><path d="M1538 567h6" stroke="#9e003f"/><path d="M1544 567h6" stroke="#9e003c"/><path d="M1550 567h6" stroke="#9e0039"/><path d="M1556 567h6" stroke="#9e0037"/><path d="M1562 567h6" stroke="#9e0035"/><path d="M1568 567h6" stroke="#9e0033"/><path d="M1574 567h6" stroke="#9e0030"/><path d="M1580 567h6" stroke="#9e002e"/><path d="M1586 567h6" stroke="#9e002c"/><path d="M1592 567h6" stroke="#9e002b"/><path d="M1598 567h6" stroke="#9e0029"/><path d="M1604 567h6" stroke="#9e0027"/><path d="M1610 567h6" stroke="#9e0025"/><path d="M1208 573h6" stroke="#00339e"/><path d="M1214 573h6" stroke="#00329e"/><path d="M1220 573h6" stroke="#00319e"/><path d="M1226 573h6" stroke="#00309e"/><path d="M1232 573h6" stroke="#002f9e"/><path d="M1238 573h6" stroke="#002e9e"/><path d="M1244 573h6" stroke="#002d9e"/><path d="M1250 573h6" stroke="#002c9e"/><path d="M1256 573h6" stroke="#002b9e"/><path d="M1262 573h6" stroke="#002a9e"/><path d="M1268 573h6" stroke="#00299e"/><path d="M1274 573h6" stroke="#00289e"/><path d="M1280 573h6" stroke="#00279e"/><path d="M1286 573h6" stroke="#00269e"/><path d="M1292 573h6" stroke="#05259e"/><path d="M1298 573h6" stroke="#0a249e"/><path d="M1304 573h6" stroke="#10229e"/><path d="M1310 573h6" stroke="#15219e"/><path d="M1316 573h6" stroke="#1b209e"/><path d="M1322 573h6" stroke="#211f9e"/><path d="M1328 573h6" stroke="#271d9e"/><path d="M1334 573h6" stroke="#2d1c9e"/><path d="M1340 573h6" stroke="#331b9e"/><path d="M1346 573h6" stroke="#3a199e"/><path d="M1352 573h6" stroke="#40189e"/><path d="M1358 573h6" stroke="#47169e"/><path d="M1364 573h6" stroke="#4e159e"/><path d="M1370 573h6" stroke="#55139e"/><path d="M1376 573h6" stroke="#5c129e"/><path d="M1382 573h6" stroke="#64109e"/><path d="M1388 573h6" stroke="#6b0e9e"/><path d="M1394 573h6" stroke="#730d9e"/><path d="M1400 573h6" stroke="#7b0b9e"/><path d="M1406 573h6" stroke="#83099e"/><path d="M1412 573h6" stroke="#8c079e"/><path d="M1418 573h6" stroke="#94059e"/><path d="M1424 573h6" stroke="#9d039e"/><path d="M1430 573h6" stroke="#9e0196"/><path d="M1436 573h6" stroke="#9e008e"/><path d="M1442 573h6" stroke="#9e0087"/><path d="M1448 573h6" stroke="#9e0080"/><path d="M1454 573h6" stroke="#9e0079"/><path d="M1460 573h6" stroke="#9e0074"/><path d="M1466 573h6" stroke="#9e006e"/><path d="M1472 573h6" stroke="#9e0069"/><path d="M1478 573h6" stroke="#9e0064"/><path d="M1484 573h6" stroke="#9e005f"/><path d="M1490 573h6" stroke="#9e005b"/><path d="M1496 573h6" stroke="#9e0057"/><path d="M1502 573h6" stroke="#9e0053"/><path d="M1508 573h6" stroke="#9e0050"/><path d="M1514 573h6" stroke="#9e004c"/><path d="M1520 573h6" stroke="#9e0049"/><path d="M1526 573h6" stroke="#9e0046"/><path d="M1532 573h6" stroke="#9e0043"/><path d="M1538 573h6" stroke="#9e0040"/><path d="M1544 573h6" stroke="#9e003d"/><path d="M1550 573h6" stroke="#9e003b"/><path d="M1556 573h6" stroke="#9e0038"/><path d="M1562 573h6" stroke="#9e0036"/><path d="M1568 573h6" stroke="#9e0034"/><path d="M1574 573h6" stroke="#9e0032"/><path d="M1580 573h6" stroke="#9e0030"/><path d="M1586 573h6" stroke="#9e002e"/><path d="M1592 573h6" stroke="#9e002c"/><path d="M1208 579h6" stroke="#002f9e"/><path d="M1214 579h6" stroke="#002e9e"/><path d="M1220 579h6" stroke="#002d9e"/><path d="M1226 579h6" stroke="#002c9e"/><path d="M1232 579h6" stroke="#002b9e"/><path d="M1238 579h6" stroke="#002a9e"/><path d="M1244 579h6" stroke="#00299e"/><path d="M1250 579h6" stroke="#00289e"/><path d="M1256 579h6" stroke="#00279e"/><path d="M1262 579h6" stroke="#00269e"/><path d="M1268 579h6" stroke="#00259e"/><path d="M1274 579h6" stroke="#00249e"/><path d="M1280 579h6" stroke="#00229e"/><path d="M1286 579h6" stroke="#01219e"/><path d="M1292 579h6" stroke="#06209e"/><path d="M1298 579h6" stroke="#0b1f9e"/><path d="M1304 579h6" stroke="#111e9e"/><path d="M1310 579h6" stroke="#161c9e"/><path d="M1316 579h6" stroke="#1c1b9e"/><path d="M1322 579h6" stroke="#221a9e"/><path d="M1328 579h6" stroke="#27189e"/><path d="M1334 579h6" stroke="#2e179e"/><path d="M1340 579h6" stroke="#34169e"/><path d="M1346 579h6" stroke="#3a149e"/><path d="M1352 579h6" stroke="#40139e"/><path d="M1358 579h6" stroke="#47119e"/><path d="M1364 579h6" stroke="#4e109e"/><path d="M1370 579h6" stroke="#550e9e"/><path d="M1376 579h6" stroke="#5c0c9e"/><path d="M1382 579h6" stroke="#630b9e"/><path d="M1388 579h6" stroke="#6b099e"/><path d="M1394 579h6" stroke="#72079e"/><path d="M1400 579h6" stroke="#7a069e"/><path d="M1406 579h6" stroke="#82049e"/><path d="M1412 579h6" stroke="#8b029e"/><path d="M1418 579h6" stroke="#93009e"/><path d="M1424 579h6" stroke="#9c009e"/><path d="M1430 579h6" stroke="#9e0098"/><path d="M1436 579h6" stroke="#9e0090"/><path d="M1442 579h6" stroke="#9e0088"/><path d="M1448 579h6" stroke="#9e0081"/><path d="M1454 579h6" stroke="#9e007b"/><path d="M1460 579h6" stroke="#9e0075"/><path d="M1466 579h6" stroke="#9e0070"/><path d="M1472 579h6" stroke="#9e006a"/><path d="M1478 579h6" stroke="#9e0065"/><path d="M1484 579h6" stroke="#9e0061"/><path d="M1490 579h6" stroke="#9e005d"/><path d="M1496 579h6" stroke="#9e0059"/><path d="M1502 579h6" stroke="#9e0055"/><path d="M1508 579h6" stroke="#9e0051"/><path d="M1514 579h6" stroke="#9e004e"/><path d="M1520 579h6" stroke="#9e004a"/><path d="M1526 579h6" stroke="#9e0047"/><path d="M1532 579h6" stroke="#9e0044"/><path d="M1538 579h6" stroke="#9e0041"/><path d="M1544 579h6" stroke="#9e003f"/><path d="M1550 579h6" stroke="#9e003c"/><path d="M1556 579h6" stroke="#9e003a"/><path d="M1562 579h6" stroke="#9e0037"/><path d="M1568 579h6" stroke="#9e0035"/><path d="M1574 579h6" stroke="#9e0033"/><path d="M1214 585h6" stroke="#002a9e"/><path d="M1220 585h6" stroke="#00299e"/><path d="M1226 585h6" stroke="#00289e"/><path d="M1232 585h6" stroke="#00279e"/><path d="M1238 585h6" stroke="#00269e"/><path d="M1244 585h6" stroke="#00259e"/><path d="M1250 585h6" stroke="#00249e"/><path d="M1256 585h6" stroke="#00229e"/><path d="M1262 585h6" stroke="#00219e"/><path d="M1268 585h6" stroke="#00209e"/><path d="M1274 585h6" stroke="#001f9e"/><path d="M1280 585h6" stroke="#001e9e"/><path d="M1286 585h6" stroke="#021d9e"/><path d="M1292 585h6" stroke="#071c9e"/><path d="M1298 585h6" stroke="#0c1a9e"/><path d="M1304 585h6" stroke="#12199e"/><path d="M1310 585h6" stroke="#17189e"/><path d="M1316 585h6" stroke="#1d169e"/><path d="M1322 585h6" stroke="#22159e"/><path d="M1328 585h6" stroke="#28149e"/><path d="M1334 585h6" stroke="#2e129e"/><path d="M1340 585h6" stroke="#34119e"/><path d="M1346 585h6" stroke="#3a0f9e"/><path d="M1352 585h6" stroke="#410e9e"/><path d="M1358 585h6" stroke="#470c9e"/><path d="M1364 585h6" stroke="#4e0b9e"/><path d="M1370 585h6" stroke="#55099e"/><path d="M1376 585h6" stroke="#5c089e"/><path d="M1382 585h6" stroke="#63069e"/><path d="M1388 585h6" stroke="#6a049e"/><path d="M1394 585h6" stroke="#72029e"/><path d="M1400 585h6" stroke="#79019e"/><path d="M1406 585h6" stroke="#81009e"/><path d="M1412 585h6" stroke="#89009e"/><path d="M1418 585h6" stroke="#92009e"/><path d="M1424 585h6" stroke="#9a009e"/><path d="M1430 585h6" stroke="#9e0099"/><path d="M1436 585h6" stroke="#9e0091"/><path d="M1442 585h6" stroke="#9e008a"/><path d="M1448 585h6" stroke="#9e0083"/><path d="M1454 585h6" stroke="#9e007d"/><path d="M1460 585h6" stroke="#9e0077"/><path d="M1466 585h6" stroke="#9e0071"/><path d="M1472 585h6" stroke="#9e006c"/><path d="M1478 585h6" stroke="#9e0067"/><path d="M1484 585h6" stroke="#9e0062"/><path d="M1490 585h6" stroke="#9e005e"/><path d="M1496 585h6" stroke="#9e005a"/><path d="M1502 585h6" stroke="#9e0056"/><path d="M1508 585h6" stroke="#9e0053"/><path d="M1514 585h6" stroke="#9e004f"/><path d="M1520 585h6" stroke="#9e004c"/><path d="M1526 585h6" stroke="#9e0049"/><path d="M1532 585h6" stroke="#9e0046"/><path d="M1538 585h6" stroke="#9e0043"/><path d="M1544 585h6" stroke="#9e0040"/><path d="M1550 585h6" stroke="#9e003e"/><path d="M1556 585h6" stroke="#9e003b"/><path d="M1562 585h6" stroke="#9e0039"/><path d="M1214 591h6" stroke="#00259e"/><path d="M1220 591h6" stroke="#00249e"/><path d="M1226 591h6" stroke="#00239e"/><path d="M1232 591h6" stroke="#00229e"/><path d="M1238 591h6" stroke="#00219e"/><path d="M1244 591h6" stroke="#00209e"/><path d="M1250 591h6" stroke="#001f9e"/><path d="M1256 591h6" stroke="#001e9e"/><path d="M1262 591h6" stroke="#001d9e"/><path d="M1268 591h6" stroke="#001c9e"/><path d="M1274 591h6" stroke="#001b9e"/><path d="M1280 591h6" stroke="#001a9e"/><path d="M1286 591h6" stroke="#03189e"/><path d="M1292 591h6" stroke="#08179e"/><path d="M1298 591h6" stroke="#0d169e"/><path d="M1304 591h6" stroke="#13159e"/><path d="M1310 591h6" stroke="#18139e"/><path d="M1316 591h6" stroke="#1d129e"/><path d="M1322 591h6" stroke="#23119e"/><path d="M1328 591h6" stroke="#290f9e"/><path d="M1334 591h6" stroke="#2f0e9e"/><path d="M1340 591h6" stroke="#350c9e"/><path d="M1346 591h6" stroke="#3b0b9e"/><path d="M1352 591h6" stroke="#41099e"/><path d="M1358 591h6" stroke="#47089e"/><path d="M1364 591h6" stroke="#4e069e"/><path d="M1370 591h6" stroke="#55049e"/><path d="M1376 591h6" stroke="#5c039e"/><path d="M1382 591h6" stroke="#63019e"/><path d="M1388 591h6" stroke="#6a009e"/><path d="M1394 591h6" stroke="#71009e"/><path d="M1400 591h6" stroke="#79009e"/><path d="M1406 591h6" stroke="#80009e"/><path d="M1412 591h6" stroke="#88009e"/><path d="M1418 591h6" stroke="#90009e"/><path d="M1424 591h6" stroke="#99009e"/><path d="M1430 591h6" stroke="#9e009b"/><path d="M1436 591h6" stroke="#9e0093"/><path d="M1442 591h6" stroke="#9e008b"/><path d="M1448 591h6" stroke="#9e0085"/><path d="M1454 591h6" stroke="#9e007e"/><path d="M1460 591h6" stroke="#9e0078"/><path d="M1466 591h6" stroke="#9e0073"/><path d="M1472 591h6" stroke="#9e006d"/><path d="M1478 591h6" stroke="#9e0069"/><path d="M1484 591h6" stroke="#9e0064"/><path d="M1490 591h6" stroke="#9e0060"/><path d="M1496 591h6" stroke="#9e005c"/><path d="M1502 591h6" stroke="#9e0058"/><path d="M1508 591h6" stroke="#9e0054"/><path d="M1514 591h6" stroke="#9e0050"/><path d="M1520 591h6" stroke="#9e004d"/><path d="M1526 591h6" stroke="#9e004a"/><path d="M1532 591h6" stroke="#9e0047"/><path d="M1538 591h6" stroke="#9e0044"/><path d="M1544 591h6" stroke="#9e0042"/><path d="M1220 597h6" stroke="#00209e"/><path d="M1226 597h6" stroke="#001f9e"/><path d="M1232 597h6" stroke="#001e9e"/><path d="M1238 597h6" stroke="#001d9e"/><path d="M1244 597h6" stroke="#001c9e"/><path d="M1250 597h6" stroke="#001b9e"/><path d="M1256 597h6" stroke="#001a9e"/><path d="M1262 597h6" stroke="#00199e"/><path d="M1268 597h6" stroke="#00189e"/><path d="M1274 597h6" stroke="#00179e"/><path d="M1280 597h6" stroke="#00159e"/><path d="M1286 597h6" stroke="#04149e"/><path d="M1292 597h6" stroke="#09139e"/><path d="M1298 597h6" stroke="#0e129e"/><path d="M1304 597h6" stroke="#14109e"/><path d="M1310 597h6" stroke="#190f9e"/><path d="M1316 597h6" stroke="#1e0e9e"/><path d="M1322 597h6" stroke="#240c9e"/><path d="M1328 597h6" stroke="#290b9e"/><path d="M1334 597h6" stroke="#2f099e"/><path d="M1340 597h6" stroke="#35089e"/><path d="M1346 597h6" stroke="#3b069e"/><path d="M1352 597h6" stroke="#41059e"/><path d="M1358 597h6" stroke="#48039e"/><path d="M1364 597h6" stroke="#4e029e"/><path d="M1370 597h6" stroke="#55009e"/><path d="M1376 597h6" stroke="#5b009e"/><path d="M1382 597h6" stroke="#62009e"/><path d="M1388 597h6" stroke="#69009e"/><path d="M1394 597h6" stroke="#71009e"/><path d="M1400 597h6" stroke="#78009e"/><path d="M1406 597h6" stroke="#80009e"/><path d="M1412 597h6" stroke="#87009e"/><path d="M1418 597h6" stroke="#8f009e"/><path d="M1424 597h6" stroke="#97009e"/><path d="M1430 597h6" stroke="#9e009c"/><path d="M1436 597h6" stroke="#9e0094"/><path d="M1442 597h6" stroke="#9e008d"/><path d="M1448 597h6" stroke="#9e0086"/><path d="M1454 597h6" stroke="#9e0080"/><path d="M1460 597h6" stroke="#9e007a"/><path d="M1466 597h6" stroke="#9e0074"/><path d="M1472 597h6" stroke="#9e006f"/><path d="M1478 597h6" stroke="#9e006a"/><path d="M1484 597h6" stroke="#9e0065"/><path d="M1490 597h6" stroke="#9e0061"/><path d="M1496 597h6" stroke="#9e005d"/><path d="M1502 597h6" stroke="#9e0059"/><path d="M1508 597h6" stroke="#9e0055"/><path d="M1514 597h6" stroke="#9e0052"/><path d="M1520 597h6" stroke="#9e004f"/><path d="M1526 597h6" stroke="#9e004b"/><path d="M1220 603h6" stroke="#001d9e"/><path d="M1226 603h6" stroke="#001c9e"/><path d="M1232 603h6" stroke="#001a9e"/><path d="M1238 603h6" stroke="#00199e"/><path d="M1244 603h6" stroke="#00189e"/><path d="M1250 603h6" stroke="#00179e"/><path d="M1256 603h6" stroke="#00169e"/><path d="M1262 603h6" stroke="#00159e"/><path d="M1268 603h6" stroke="#00149e"/><path d="M1274 603h6" stroke="#00129e"/><path d="M1280 603h6" stroke="#00119e"/><path d="M1286 603h6" stroke="#05109e"/><path d="M1292 603h6" stroke="#0a0f9e"/><path d="M1298 603h6" stroke="#0f0d9e"/><path d="M1304 603h6" stroke="#140c9e"/><path d="M1310 603h6" stroke="#1a0b9e"/><path d="M1316 603h6" stroke="#1f099e"/><path d="M1322 603h6" stroke="#24089e"/><path d="M1328 603h6" stroke="#2a069e"/><path d="M1334 603h6" stroke="#30059e"/><path d="M1340 603h6" stroke="#36039e"/><path d="M1346 603h6" stroke="#3b029e"/><path d="M1352 603h6" stroke="#42009e"/><path d="M1358 603h6" stroke="#48009e"/><path d="M1364 603h6" stroke="#4e009e"/><path d="M1370 603h6" stroke="#55009e"/><path d="M1376 603h6" stroke="#5b009e"/><path d="M1382 603h6" stroke="#62009e"/><path d="M1388 603h6" stroke="#69009e"/><path d="M1394 603h6" stroke="#70009e"/><path d="M1400 603h6" stroke="#77009e"/><path d="M1406 603h6" stroke="#7f009e"/><path d="M1412 603h6" stroke="#86009e"/><path d="M1418 603h6" stroke="#8e009e"/><path d="M1424 603h6" stroke="#96009e"/><path d="M1430 603h6" stroke="#9e009e"/><path d="M1436 603h6" stroke="#9e0096"/><path d="M1442 603h6" stroke="#9e008e"/><path d="M1448 603h6" stroke="#9e0088"/><path d="M1454 603h6" stroke="#9e0081"/><path d="M1460 603h6" stroke="#9e007b"/><path d="M1466 603h6" stroke="#9e0076"/><path d="M1472 603h6" stroke="#9e0070"/><path d="M1478 603h6" stroke="#9e006c"/><path d="M1484 603h6" stroke="#9e0067"/><path d="M1490 603h6" stroke="#9e0063"/><path d="M1496 603h6" stroke="#9e005e"/><path d="M1502 603h6" stroke="#9e005b"/><path d="M1508 603h6" stroke="#9e0057"/><path d="M1226 609h6" stroke="#00189e"/><path d="M1232 609h6" stroke="#00179e"/><path d="M1238 609h6" stroke="#00169e"/><path d="M1244 609h6" stroke="#00149e"/><path d="M1250 609h6" stroke="#00139e"/><path d="M1256 609h6" stroke="#00129e"/><path d="M1262 609h6" stroke="#00119e"/><path d="M1268 609h6" stroke="#00109e"/><path d="M1274 609h6" stroke="#000f9e"/><path d="M1280 609h6" stroke="#020d9e"/><path d="M1286 609h6" stroke="#060c9e"/><path d="M1292 609h6" stroke="#0b0b9e"/><path d="M1298 609h6" stroke="#10099e"/><path d="M1304 609h6" stroke="#15089e"/><path d="M1310 609h6" stroke="#1a079e"/><path d="M1316 609h6" stroke="#20059e"/><path d="M1322 609h6" stroke="#25049e"/><path d="M1328 609h6" stroke="#2b029e"/><path d="M1334 609h6" stroke="#30019e"/><path d="M1340 609h6" stroke="#36009e"/><path d="M1346 609h6" stroke="#3c009e"/><path d="M1352 609h6" stroke="#42009e"/><path d="M1358 609h6" stroke="#48009e"/><path d="M1364 609h6" stroke="#4e009e"/><path d="M1370 609h6" stroke="#55009e"/><path d="M1376 609h6" stroke="#5b009e"/><path d="M1382 609h6" stroke="#62009e"/><path d="M1388 609h6" stroke="#68009e"/><path d="M1394 609h6" stroke="#6f009e"/><path d="M1400 609h6" stroke="#77009e"/><path d="M1406 609h6" stroke="#7e009e"/><path d="M1412 609h6" stroke="#85009e"/><path d="M1418 609h6" stroke="#8d009e"/><path d="M1424 609h6" stroke="#95009e"/><path d="M1430 609h6" stroke="#9d009e"/><path d="M1436 609h6" stroke="#9e0097"/><path d="M1442 609h6" stroke="#9e0090"/><path d="M1448 609h6" stroke="#9e0089"/><path d="M1454 609h6" stroke="#9e0083"/><path d="M1460 609h6" stroke="#9e007d"/><path d="M1466 609h6" stroke="#9e0077"/><path d="M1472 609h6" stroke="#9e0072"/><path d="M1478 609h6" stroke="#9e006d"/><path d="M1484 609h6" stroke="#9e0068"/><path d="M1490 609h6" stroke="#9e0064"/><path d="M1226 615h6" stroke="#00149e"/><path d="M1232 615h6" stroke="#00139e"/><path d="M1238 615h6" stroke="#00129e"/><path d="M1244 615h6" stroke="#00119e"/><path d="M1250 615h6" stroke="#00109e"/><path d="M1256 615h6" stroke="#000e9e"/><path d="M1262 615h6" stroke="#000d9e"/><path d="M1268 615h6" stroke="#000c9e"/><path d="M1274 615h6" stroke="#000b9e"/><path d="M1280 615h6" stroke="#03099e"/><path d="M1286 615h6" stroke="#07089e"/><path d="M1292 615h6" stroke="#0c079e"/><path d="M1298 615h6" stroke="#11059e"/><path d="M1304 615h6" stroke="#16049e"/><path d="M1310 615h6" stroke="#1b039e"/><path d="M1316 615h6" stroke="#20019e"/><path d="M1322 615h6" stroke="#26009e"/><path d="M1328 615h6" stroke="#2b009e"/><path d="M1334 615h6" stroke="#31009e"/><path d="M1340 615h6" stroke="#36009e"/><path d="M1346 615h6" stroke="#3c009e"/><path d="M1352 615h6" stroke="#42009e"/><path d="M1358 615h6" stroke="#48009e"/><path d="M1364 615h6" stroke="#4e009e"/><path d="M1370 615h6" stroke="#54009e"/><path d="M1376 615h6" stroke="#5b009e"/><path d="M1382 615h6" stroke="#61009e"/><path d="M1388 615h6" stroke="#68009e"/><path d="M1394 615h6" stroke="#6f009e"/><path d="M1400 615h6" stroke="#76009e"/><path d="M1406 615h6" stroke="#7d009e"/><path d="M1412 615h6" stroke="#84009e"/><path d="M1418 615h6" stroke="#8c009e"/><path d="M1424 615h6" stroke="#94009e"/><path d="M1430 615h6" stroke="#9c009e"/><path d="M1436 615h6" stroke="#9e0099"/><path d="M1442 615h6" stroke="#9e0091"/><path d="M1448 615h6" stroke="#9e008b"/><path d="M1454 615h6" stroke="#9e0084"/><path d="M1460 615h6" stroke="#9e007e"/><path d="M1466 615h6" stroke="#9e0079"/><path d="M1472 615h6" stroke="#9e0073"/><path d="M1232 621h6" stroke="#000f9e"/><path d="M1238 621h6" stroke="#000e9e"/><path d="M1244 621h6" stroke="#000d9e"/><path d="M1250 621h6" stroke="#000c9e"/><path d="M1256 621h6" stroke="#000b9e"/><path d="M1262 621h6" stroke="#00099e"/><path d="M1268 621h6" stroke="#00089e"/><path d="M1274 621h6" stroke="#00079e"/><path d="M1280 621h6" stroke="#04069e"/><path d="M1286 621h6" stroke="#08049e"/><path d="M1292 621h6" stroke="#0d039e"/><path d="M1298 621h6" stroke="#12029e"/><path d="M1304 621h6" stroke="#17009e"/><path d="M1310 621h6" stroke="#1c009e"/><path d="M1316 621h6" stroke="#21009e"/><path d="M1322 621h6" stroke="#26009e"/><path d="M1328 621h6" stroke="#2c009e"/><path d="M1334 621h6" stroke="#31009e"/><path d="M1340 621h6" stroke="#37009e"/><path d="M1346 621h6" stroke="#3c009e"/><path d="M1352 621h6" stroke="#42009e"/><path d="M1358 621h6" stroke="#48009e"/><path d="M1364 621h6" stroke="#4e009e"/><path d="M1370 621h6" stroke="#54009e"/><path d="M1376 621h6" stroke="#5b009e"/><path d="M1382 621h6" stroke="#61009e"/><path d="M1388 621h6" stroke="#68009e"/><path d="M1394 621h6" stroke="#6e009e"/><path d="M1400 621h6" stroke="#75009e"/><path d="M1406 621h6" stroke="#7c009e"/><path d="M1412 621h6" stroke="#84009e"/><path d="M1418 621h6" stroke="#8b009e"/><path d="M1424 621h6" stroke="#93009e"/><path d="M1430 621h6" stroke="#9a009e"/><path d="M1436 621h6" stroke="#9e009a"/><path d="M1442 621h6" stroke="#9e0093"/><path d="M1448 621h6" stroke="#9e008c"/><path d="M1454 621h6" stroke="#9e0086"/><path d="M1460 621h6" stroke="#9e0080"/><path d="M1232 627h6" stroke="#000c9e"/><path d="M1238 627h6" stroke="#000b9e"/><path d="M1244 627h6" stroke="#00099e"/><path d="M1250 627h6" stroke="#00089e"/><path d="M1256 627h6" stroke="#00079e"/><path d="M1262 627h6" stroke="#00069e"/><path d="M1268 627h6" stroke="#00059e"/><path d="M1274 627h6" stroke="#00039e"/><path d="M1280 627h6" stroke="#05029e"/><path d="M1286 627h6" stroke="#09019e"/><path d="M1292 627h6" stroke="#0e009e"/><path d="M1298 627h6" stroke="#13009e"/><path d="M1304 627h6" stroke="#18009e"/><path d="M1310 627h6" stroke="#1d009e"/><path d="M1316 627h6" stroke="#22009e"/><path d="M1322 627h6" stroke="#27009e"/><path d="M1328 627h6" stroke="#2c009e"/><path d="M1334 627h6" stroke="#32009e"/><path d="M1340 627h6" stroke="#37009e"/><path d="M1346 627h6" stroke="#3d009e"/><path d="M1352 627h6" stroke="#42009e"/><path d="M1358 627h6" stroke="#48009e"/><path d="M1364 627h6" stroke="#4e009e"/><path d="M1370 627h6" stroke="#54009e"/><path d="M1376 627h6" stroke="#5b009e"/><path d="M1382 627h6" stroke="#61009e"/><path d="M1388 627h6" stroke="#67009e"/><path d="M1394 627h6" stroke="#6e009e"/><path d="M1400 627h6" stroke="#75009e"/><path d="M1406 627h6" stroke="#7c009e"/><path d="M1412 627h6" stroke="#83009e"/><path d="M1418 627h6" stroke="#8a009e"/><path d="M1424 627h6" stroke="#91009e"/><path d="M1430 627h6" stroke="#99009e"/><path d="M1436 627h6" stroke="#9e009b"/><path d="M1442 627h6" stroke="#9e0094"/><path d="M1238 633h6" stroke="#00079e"/><path d="M1244 633h6" stroke="#00069e"/><path d="M1250 633h6" stroke="#00059e"/><path d="M1256 633h6" stroke="#00049e"/><path d="M1262 633h6" stroke="#00029e"/><path d="M1268 633h6" stroke="#00019e"/><path d="M1274 633h6" stroke="#01009e"/><path d="M1280 633h6" stroke="#06009e"/><path d="M1286 633h6" stroke="#0a009e"/><path d="M1292 633h6" stroke="#0f009e"/><path d="M1298 633h6" stroke="#14009e"/><path d="M1304 633h6" stroke="#19009e"/><path d="M1310 633h6" stroke="#1e009e"/><path d="M1316 633h6" stroke="#23009e"/><path d="M1322 633h6" stroke="#28009e"/><path d="M1328 633h6" stroke="#2d009e"/><path d="M1334 633h6" stroke="#32009e"/><path d="M1340 633h6" stroke="#38009e"/><path d="M1346 633h6" stroke="#3d009e"/><path d="M1352 633h6" stroke="#43009e"/><path d="M1358 633h6" stroke="#48009e"/><path d="M1364 633h6" stroke="#4e009e"/><path d="M1370 633h6" stroke="#54009e"/><path d="M1376 633h6" stroke="#5a009e"/><path d="M1382 633h6" stroke="#61009e"/><path d="M1388 633h6" stroke="#67009e"/><path d="M1394 633h6" stroke="#6e009e"/><path d="M1400 633h6" stroke="#74009e"/><path d="M1406 633h6" stroke="#7b009e"/><path d="M1412 633h6" stroke="#82009e"/><path d="M1418 633h6" stroke="#89009e"/><path d="M1424 633h6" stroke="#90009e"/><path d="M1244 639h6" stroke="#00039e"/><path d="M1250 639h6" stroke="#00019e"/><path d="M1256 639h18" stroke="#00009e"/><path d="M1274 639h6" stroke="#02009e"/><path d="M1280 639h6" stroke="#07009e"/><path d="M1286 639h6" stroke="#0b009e"/><path d="M1292 639h6" stroke="#10009e"/><path d="M1298 639h6" stroke="#15009e"/><path d="M1304 639h6" stroke="#19009e"/><path d="M1310 639h6" stroke="#1e009e"/><path d="M1316 639h6" stroke="#23009e"/><path d="M1322 639h6" stroke="#28009e"/><path d="M1328 639h6" stroke="#2d009e"/><path d="M1334 639h6" stroke="#33009e"/><path d="M1340 639h6" stroke="#38009e"/><path d="M1346 639h6" stroke="#3d009e"/><path d="M1352 639h6" stroke="#43009e"/><path d="M1358 639h6" stroke="#49009e"/><path d="M1364 639h6" stroke="#4e009e"/><path d="M1370 639h6" stroke="#54009e"/><path d="M1376 639h6" stroke="#5a009e"/><path d="M1382 639h6" stroke="#60009e"/><path d="M1388 639h6" stroke="#67009e"/><path d="M1394 639h6" stroke="#6d009e"/><path d="M1400 639h6" stroke="#74009e"/><path d="M1406 639h6" stroke="#7a009e"/><path d="M1244 645h30" stroke="#00009e"/><path d="M1274 645h6" stroke="#03009e"/><path d="M1280 645h6" stroke="#08009e"/><path d="M1286 645h6" stroke="#0c009e"/><path d="M1292 645h6" stroke="#11009e"/><path d="M1298 645h6" stroke="#15009e"/><path d="M1304 645h6" stroke="#1a009e"/><path d="M1310 645h6" stroke="#1f009e"/><path d="M1316 645h6" stroke="#24009e"/><path d="M1322 645h6" stroke="#29009e"/><path d="M1328 645h6" stroke="#2e009e"/><path d="M1334 645h6" stroke="#33009e"/><path d="M1340 645h6" stroke="#38009e"/><path d="M1346 645h6" stroke="#3e009e"/><path d="M1352 645h6" stroke="#43009e"/><path d="M1358 645h6" stroke="#49009e"/><path d="M1364 645h6" stroke="#4e009e"/><path d="M1370 645h6" stroke="#54009e"/><path d="M1376 645h6" stroke="#5a009e"/><path d="M1382 645h6" stroke="#60009e"/><path d="M1388 645h6" stroke="#66009e"/><path d="M1250 651h24" stroke="#00009e"/><path d="M1274 651h6" stroke="#04009e"/><path d="M1280 651h6" stroke="#09009e"/><path d="M1286 651h6" stroke="#0d009e"/><path d="M1292 651h6" stroke="#12009e"/><path d="M1298 651h6" stroke="#16009e"/><path d="M1304 651h6" stroke="#1b009e"/><path d="M1310 651h6" stroke="#20009e"/><path d="M1316 651h6" stroke="#24009e"/><path d="M1322 651h6" stroke="#29009e"/><path d="M1328 651h6" stroke="#2e009e"/><path d="M1334 651h6" stroke="#33009e"/><path d="M1340 651h6" stroke="#39009e"/><path d="M1346 651h6" stroke="#3e009e"/><path d="M1352 651h6" stroke="#43009e"/><path d="M1358 651h6" stroke="#49009e"/><path d="M1364 651h6" stroke="#4e009e"/><path d="M1370 651h6" stroke="#54009e"/><path d="M1256 657h12" stroke="#00009e"/><path d="M1268 657h6" stroke="#01009e"/><path d="M1274 657h6" stroke="#05009e"/><path d="M1280 657h6" stroke="#0a009e"/><path d="M1286 657h6" stroke="#0e009e"/><path d="M1292 657h6" stroke="#12009e"/><path d="M1298 657h6" stroke="#17009e"/><path d="M1304 657h6" stroke="#1c009e"/><path d="M1310 657h6" stroke="#20009e"/><path d="M1316 657h6" stroke="#25009e"/><path d="M1322 657h6" stroke="#2a009e"/><path d="M1328 657h6" stroke="#2f009e"/><path d="M1334 657h6" stroke="#34009e"/><path d="M1340 657h6" stroke="#39009e"/><path d="M1346 657h6" stroke="#3e009e"/><path d="M1352 657h6" stroke="#43009e"/><path d="M1262 663h6" stroke="#00009e"/><path d="M1268 663h6" stroke="#02009e"/><path d="M1274 663h6" stroke="#06009e"/><path d="M1280 663h6" stroke="#0b009e"/><path d="M1286 663h6" stroke="#0f009e"/><path d="M1292 663h6" stroke="#13009e"/><path d="M1298 663h6" stroke="#18009e"/><path d="M1304 663h6" stroke="#1c009e"/><path d="M1310 663h6" stroke="#21009e"/><path d="M1316 663h6" stroke="#26009e"/><path d="M1322 663h6" stroke="#2a009e"/><path d="M1328 663h6" stroke="#2f009e"/><path d="M1334 663h6" stroke="#34009e"/><path d="M1340 663h6" stroke="#39009e"/><path d="M1274 669h6" stroke="#07009e"/><path d="M1280 669h6" stroke="#0b009e"/><path d="M1286 669h6" stroke="#10009e"/><path d="M1292 669h6" stroke="#14009e"/><path d="M1298 669h6" stroke="#18009e"/><path d="M1304 669h6" stroke="#1d009e"/><path d="M1310 669h6" stroke="#21009e"/><path d="M1316 669h6" stroke="#26009e"/><path d="M1322 669h6" stroke="#2b009e"/><path d="M1280 675h6" stroke="#0b009e"/><path d="M1286 675h6" stroke="#10009e"/><path d="M1292 675h6" stroke="#14009e"/><path d="M1298 675h6" stroke="#18009e"/><path d="M1304 675h6" stroke="#1d009e"/></g></g><g clip-path="url(#ct)"><g filter="url(#bl)" stroke-width="6"><path d="M1365 231h6" stroke="#00ff00"/><path d="M1371 231h6" stroke="#02ff00"/><path d="M1359 237h6" stroke="#00ff01"/><path d="M1365 237h6" stroke="#00ff00"/><path d="M1371 237h6" stroke="#03ff00"/><path d="M1377 237h6" stroke="#09ff00"/><path d="M1359 243h6" stroke="#00ff03"/><path d="M1365 243h6" stroke="#00ff01"/><path d="M1371 243h6" stroke="#04ff00"/><path d="M1377 243h6" stroke="#0aff00"/><path d="M1383 243h6" stroke="#10ff00"/><path d="M1389 243h6" stroke="#15ff00"/><path d="M1353 249h6" stroke="#00ff07"/><path d="M1359 249h6" stroke="#00ff06"/><path d="M1365 249h6" stroke="#00ff04"/><path d="M1371 249h6" stroke="#06ff02"/><path d="M1377 249h6" stroke="#0cff01"/><path d="M1383 249h6" stroke="#11ff00"/><path d="M1389 249h6" stroke="#17ff00"/><path d="M1395 249h6" stroke="#1dff00"/><path d="M1353 255h6" stroke="#00ff0a"/><path d="M1359 255h6" stroke="#00ff09"/><path d="M1365 255h6" stroke="#02ff07"/><path d="M1371 255h6" stroke="#07ff05"/><path d="M1377 255h6" stroke="#0dff03"/><path d="M1383 255h6" stroke="#13ff01"/><path d="M1389 255h6" stroke="#19ff00"/><path d="M1395 255h6" stroke="#1fff00"/><path d="M1401 255h6" stroke="#25ff00"/><path d="M1407 255h6" stroke="#2bff00"/><path d="M1353 261h6" stroke="#00ff0d"/><path d="M1359 261h6" stroke="#00ff0b"/><path d="M1365 261h6" stroke="#03ff0a"/><path d="M1371 261h6" stroke="#09ff08"/><path d="M1377 261h6" stroke="#0fff06"/><path d="M1383 261h6" stroke="#15ff04"/><path d="M1389 261h6" stroke="#1bff02"/><path d="M1395 261h6" stroke="#21ff01"/><path d="M1401 261h6" stroke="#27ff00"/><path d="M1407 261h6" stroke="#2dff00"/><path d="M1413 261h6" stroke="#34ff00"/><path d="M1353 267h6" stroke="#00ff10"/><path d="M1359 267h6" stroke="#00ff0e"/><path d="M1365 267h6" stroke="#05ff0d"/><path d="M1371 267h6" stroke="#0aff0b"/><path d="M1377 267h6" stroke="#10ff09"/><path d="M1383 267h6" stroke="#16ff07"/><path d="M1389 267h6" stroke="#1dff05"/><path d="M1395 267h6" stroke="#23ff03"/><path d="M1401 267h6" stroke="#29ff01"/><path d="M1407 267h6" stroke="#30ff00"/><path d="M1413 267h6" stroke="#36ff00"/><path d="M1419 267h6" stroke="#3dff00"/><path d="M1425 267h6" stroke="#43ff00"/><path d="M1347 273h6" stroke="#00ff15"/><path d="M1353 273h6" stroke="#00ff13"/><path d="M1359 273h6" stroke="#00ff11"/><path d="M1365 273h6" stroke="#06ff10"/><path d="M1371 273h6" stroke="#0cff0e"/><path d="M1377 273h6" stroke="#12ff0c"/><path d="M1383 273h6" stroke="#18ff0a"/><path d="M1389 273h6" stroke="#1fff08"/><path d="M1395 273h6" stroke="#25ff06"/><path d="M1401 273h6" stroke="#2bff04"/><path d="M1407 273h6" stroke="#32ff02"/><path d="M1413 273h6" stroke="#39ff00"/><path d="M1419 273h6" stroke="#3fff00"/><path d="M1425 273h6" stroke="#46ff00"/><path d="M1431 273h6" stroke="#4dff00"/><path d="M1347 279h6" stroke="#00ff18"/><path d="M1353 279h6" stroke="#00ff16"/><path d="M1359 279h6" stroke="#02ff14"/><path d="M1365 279h6" stroke="#08ff13"/><path d="M1371 279h6" stroke="#0eff11"/><path d="M1377 279h6" stroke="#14ff0f"/><path d="M1383 279h6" stroke="#1aff0d"/><path d="M1389 279h6" stroke="#21ff0b"/><path d="M1395 279h6" stroke="#27ff09"/><path d="M1401 279h6" stroke="#2eff07"/><path d="M1407 279h6" stroke="#34ff05"/><path d="M1413 279h6" stroke="#3bff03"/><path d="M1419 279h6" stroke="#42ff01"/><path d="M1425 279h6" stroke="#49ff00"/><path d="M1431 279h6" stroke="#50ff00"/><path d="M1437 279h6" stroke="#57ff00"/><path d="M1443 279h6" stroke="#5fff00"/><path d="M1347 285h6" stroke="#00ff1b"/><path d="M1353 285h6" stroke="#00ff19"/><path d="M1359 285h6" stroke="#03ff18"/><path d="M1365 285h6" stroke="#09ff16"/><path d="M1371 285h6" stroke="#10ff14"/><path d="M1377 285h6" stroke="#16ff12"/><path d="M1383 285h6" stroke="#1cff10"/><path d="M1389 285h6" stroke="#23ff0e"/><path d="M1395 285h6" stroke="#2aff0d"/><path d="M1401 285h6" stroke="#30ff0b"/><path d="M1407 285h6" stroke="#37ff09"/><path d="M1413 285h6" stroke="#3eff07"/><path d="M1419 285h6" stroke="#45ff05"/><path d="M1425 285h6" stroke="#4cff03"/><path d="M1431 285h6" stroke="#54ff00"/><path d="M1437 285h6" stroke="#5bff00"/><path d="M1443 285h6" stroke="#62ff00"/><path d="M1449 285h6" stroke="#6aff00"/><path d="M1347 291h6" stroke="#00ff1f"/><path d="M1353 291h6" stroke="#00ff1d"/><path d="M1359 291h6" stroke="#05ff1b"/><path d="M1365 291h6" stroke="#0bff19"/><path d="M1371 291h6" stroke="#11ff17"/><path d="M1377 291h6" stroke="#18ff16"/><path d="M1383 291h6" stroke="#1eff14"/><path d="M1389 291h6" stroke="#25ff12"/><path d="M1395 291h6" stroke="#2cff10"/><path d="M1401 291h6" stroke="#33ff0e"/><path d="M1407 291h6" stroke="#3aff0c"/><path d="M1413 291h6" stroke="#41ff0a"/><path d="M1419 291h6" stroke="#48ff08"/><path d="M1425 291h6" stroke="#4fff06"/><path d="M1431 291h6" stroke="#57ff04"/><path d="M1437 291h6" stroke="#5fff01"/><path d="M1443 291h6" stroke="#66ff00"/><path d="M1449 291h6" stroke="#6eff00"/><path d="M1455 291h6" stroke="#76ff00"/><path d="M1461 291h6" stroke="#7eff00"/><path d="M1341 297h6" stroke="#00ff24"/><path d="M1347 297h6" stroke="#00ff22"/><path d="M1353 297h6" stroke="#00ff20"/><path d="M1359 297h6" stroke="#06ff1f"/><path d="M1365 297h6" stroke="#0dff1d"/><path d="M1371 297h6" stroke="#13ff1b"/><path d="M1377 297h6" stroke="#1aff19"/><path d="M1383 297h6" stroke="#21ff17"/><path d="M1389 297h6" stroke="#27ff15"/><path d="M1395 297h6" stroke="#2eff13"/><path d="M1401 297h6" stroke="#36ff11"/><path d="M1407 297h6" stroke="#3dff0f"/><path d="M1413 297h6" stroke="#44ff0d"/><path d="M1419 297h6" stroke="#4bff0b"/><path d="M1425 297h6" stroke="#53ff09"/><path d="M1431 297h6" stroke="#5aff07"/><path d="M1437 297h6" stroke="#62ff05"/><path d="M1443 297h6" stroke="#6aff03"/><path d="M1449 297h6" stroke="#72ff00"/><path d="M1455 297h6" stroke="#7aff00"/><path d="M1461 297h6" stroke="#83ff00"/><path d="M1467 297h6" stroke="#8bff00"/><path d="M1341 303h6" stroke="#00ff28"/><path d="M1347 303h6" stroke="#00ff26"/><path d="M1353 303h6" stroke="#01ff24"/><path d="M1359 303h6" stroke="#08ff22"/><path d="M1365 303h6" stroke="#0fff20"/><path d="M1371 303h6" stroke="#15ff1f"/><path d="M1377 303h6" stroke="#1cff1d"/><path d="M1383 303h6" stroke="#23ff1b"/><path d="M1389 303h6" stroke="#2aff19"/><path d="M1395 303h6" stroke="#31ff17"/><path d="M1401 303h6" stroke="#38ff15"/><path d="M1407 303h6" stroke="#40ff13"/><path d="M1413 303h6" stroke="#47ff11"/><path d="M1419 303h6" stroke="#4fff0f"/><path d="M1425 303h6" stroke="#56ff0d"/><path d="M1431 303h6" stroke="#5eff0a"/><path d="M1437 303h6" stroke="#66ff08"/><path d="M1443 303h6" stroke="#6eff06"/><path d="M1449 303h6" stroke="#77ff04"/><path d="M1455 303h6" stroke="#7fff01"/><path d="M1461 303h6" stroke="#87ff00"/><path d="M1467 303h6" stroke="#90ff00"/><path d="M1473 303h6" stroke="#99ff00"/><path d="M1479 303h6" stroke="#a2ff00"/><path d="M1341 309h6" stroke="#00ff2b"/><path d="M1347 309h6" stroke="#00ff2a"/><path d="M1353 309h6" stroke="#03ff28"/><path d="M1359 309h6" stroke="#0aff26"/><path d="M1365 309h6" stroke="#10ff24"/><path d="M1371 309h6" stroke="#17ff22"/><path d="M1377 309h6" stroke="#1eff21"/><path d="M1383 309h6" stroke="#25ff1f"/><path d="M1389 309h6" stroke="#2cff1d"/><path d="M1395 309h6" stroke="#34ff1b"/><path d="M1401 309h6" stroke="#3bff19"/><path d="M1407 309h6" stroke="#43ff17"/><path d="M1413 309h6" stroke="#4aff15"/><path d="M1419 309h6" stroke="#52ff12"/><path d="M1425 309h6" stroke="#5aff10"/><path d="M1431 309h6" stroke="#62ff0e"/><path d="M1437 309h6" stroke="#6aff0c"/><path d="M1443 309h6" stroke="#73ff0a"/><path d="M1449 309h6" stroke="#7bff07"/><path d="M1455 309h6" stroke="#84ff05"/><path d="M1461 309h6" stroke="#8cff03"/><path d="M1467 309h6" stroke="#95ff00"/><path d="M1473 309h6" stroke="#9eff00"/><path d="M1479 309h6" stroke="#a8ff00"/><path d="M1485 309h6" stroke="#b1ff00"/><path d="M1341 315h6" stroke="#00ff2f"/><path d="M1347 315h6" stroke="#00ff2e"/><path d="M1353 315h6" stroke="#05ff2c"/><path d="M1359 315h6" stroke="#0cff2a"/><path d="M1365 315h6" stroke="#12ff28"/><path d="M1371 315h6" stroke="#19ff26"/><path d="M1377 315h6" stroke="#21ff24"/><path d="M1383 315h6" stroke="#28ff23"/><path d="M1389 315h6" stroke="#2fff21"/><path d="M1395 315h6" stroke="#37ff1f"/><path d="M1401 315h6" stroke="#3eff1d"/><path d="M1407 315h6" stroke="#46ff1b"/><path d="M1413 315h6" stroke="#4eff18"/><path d="M1419 315h6" stroke="#56ff16"/><path d="M1425 315h6" stroke="#5eff14"/><path d="M1431 315h6" stroke="#66ff12"/><path d="M1437 315h6" stroke="#6fff10"/><path d="M1443 315h6" stroke="#77ff0d"/><path d="M1449 315h6" stroke="#80ff0b"/><path d="M1455 315h6" stroke="#89ff09"/><path d="M1461 315h6" stroke="#92ff06"/><path d="M1467 315h6" stroke="#9bff04"/><path d="M1473 315h6" stroke="#a4ff01"/><path d="M1479 315h6" stroke="#aeff00"/><path d="M1485 315h6" stroke="#b7ff00"/><path d="M1491 315h6" stroke="#c1ff00"/><path d="M1497 315h6" stroke="#cbff00"/><path d="M1335 321h6" stroke="#00ff35"/><path d="M1341 321h6" stroke="#00ff34"/><path d="M1347 321h6" stroke="#00ff32"/><path d="M1353 321h6" stroke="#07ff30"/><path d="M1359 321h6" stroke="#0dff2e"/><path d="M1365 321h6" stroke="#15ff2c"/><path d="M1371 321h6" stroke="#1cff2b"/><path d="M1377 321h6" stroke="#23ff29"/><path d="M1383 321h6" stroke="#2aff27"/><path d="M1389 321h6" stroke="#32ff25"/><path d="M1395 321h6" stroke="#3aff23"/><path d="M1401 321h6" stroke="#41ff21"/><path d="M1407 321h6" stroke="#49ff1f"/><path d="M1413 321h6" stroke="#51ff1d"/><path d="M1419 321h6" stroke="#5aff1a"/><path d="M1425 321h6" stroke="#62ff18"/><path d="M1431 321h6" stroke="#6aff16"/><path d="M1437 321h6" stroke="#73ff14"/><path d="M1443 321h6" stroke="#7cff11"/><path d="M1449 321h6" stroke="#85ff0f"/><path d="M1455 321h6" stroke="#8eff0d"/><path d="M1461 321h6" stroke="#97ff0a"/><path d="M1467 321h6" stroke="#a1ff08"/><path d="M1473 321h6" stroke="#aaff05"/><path d="M1479 321h6" stroke="#b4ff03"/><path d="M1485 321h6" stroke="#beff00"/><path d="M1491 321h6" stroke="#c8ff00"/><path d="M1497 321h6" stroke="#d3ff00"/><path d="M1503 321h6" stroke="#ddff00"/><path d="M1335 327h6" stroke="#00ff3a"/><path d="M1341 327h6" stroke="#00ff38"/><path d="M1347 327h6" stroke="#01ff36"/><path d="M1353 327h6" stroke="#08ff34"/><path d="M1359 327h6" stroke="#0fff33"/><path d="M1365 327h6" stroke="#17ff31"/><path d="M1371 327h6" stroke="#1eff2f"/><path d="M1377 327h6" stroke="#26ff2d"/><path d="M1383 327h6" stroke="#2dff2b"/><path d="M1389 327h6" stroke="#35ff29"/><path d="M1395 327h6" stroke="#3dff27"/><path d="M1401 327h6" stroke="#45ff25"/><path d="M1407 327h6" stroke="#4dff23"/><path d="M1413 327h6" stroke="#55ff21"/><path d="M1419 327h6" stroke="#5eff1f"/><path d="M1425 327h6" stroke="#66ff1c"/><path d="M1431 327h6" stroke="#6fff1a"/><path d="M1437 327h6" stroke="#78ff18"/><path d="M1443 327h6" stroke="#81ff16"/><path d="M1449 327h6" stroke="#8aff13"/><path d="M1455 327h6" stroke="#93ff11"/><path d="M1461 327h6" stroke="#9dff0e"/><path d="M1467 327h6" stroke="#a7ff0c"/><path d="M1473 327h6" stroke="#b1ff09"/><path d="M1479 327h6" stroke="#bbff07"/><path d="M1485 327h6" stroke="#c5ff04"/><path d="M1491 327h6" stroke="#d0ff02"/><path d="M1497 327h6" stroke="#dbff00"/><path d="M1503 327h6" stroke="#e6ff00"/><path d="M1509 327h6" stroke="#f1ff00"/><path d="M1515 327h6" stroke="#fcff00"/><path d="M1335 333h6" stroke="#00ff3e"/><path d="M1341 333h6" stroke="#00ff3c"/><path d="M1347 333h6" stroke="#03ff3b"/><path d="M1353 333h6" stroke="#0aff39"/><path d="M1359 333h6" stroke="#12ff37"/><path d="M1365 333h6" stroke="#19ff35"/><path d="M1371 333h6" stroke="#20ff33"/><path d="M1377 333h6" stroke="#28ff31"/><path d="M1383 333h6" stroke="#30ff2f"/><path d="M1389 333h6" stroke="#38ff2e"/><path d="M1395 333h6" stroke="#40ff2c"/><path d="M1401 333h6" stroke="#48ff29"/><path d="M1407 333h6" stroke="#51ff27"/><path d="M1413 333h6" stroke="#59ff25"/><path d="M1419 333h6" stroke="#62ff23"/><path d="M1425 333h6" stroke="#6bff21"/><path d="M1431 333h6" stroke="#74ff1f"/><path d="M1437 333h6" stroke="#7dff1c"/><path d="M1443 333h6" stroke="#86ff1a"/><path d="M1449 333h6" stroke="#90ff18"/><path d="M1455 333h6" stroke="#99ff15"/><path d="M1461 333h6" stroke="#a3ff13"/><path d="M1467 333h6" stroke="#adff10"/><path d="M1473 333h6" stroke="#b8ff0e"/><path d="M1479 333h6" stroke="#c2ff0b"/><path d="M1485 333h6" stroke="#cdff08"/><path d="M1491 333h6" stroke="#d8ff06"/><path d="M1497 333h6" stroke="#e3ff03"/><path d="M1503 333h6" stroke="#eeff00"/><path d="M1509 333h6" stroke="#faff00"/><path d="M1515 333h6" stroke="#fff900"/><path d="M1521 333h6" stroke="#ffee00"/><path d="M1335 339h6" stroke="#00ff43"/><path d="M1341 339h6" stroke="#00ff41"/><path d="M1347 339h6" stroke="#05ff3f"/><path d="M1353 339h6" stroke="#0cff3e"/><path d="M1359 339h6" stroke="#14ff3c"/><path d="M1365 339h6" stroke="#1bff3a"/><path d="M1371 339h6" stroke="#23ff38"/><path d="M1377 339h6" stroke="#2bff36"/><path d="M1383 339h6" stroke="#33ff34"/><path d="M1389 339h6" stroke="#3bff32"/><path d="M1395 339h6" stroke="#43ff30"/><path d="M1401 339h6" stroke="#4cff2e"/><path d="M1407 339h6" stroke="#54ff2c"/><path d="M1413 339h6" stroke="#5dff2a"/><path d="M1419 339h6" stroke="#66ff28"/><path d="M1425 339h6" stroke="#6fff26"/><path d="M1431 339h6" stroke="#79ff23"/><path d="M1437 339h6" stroke="#82ff21"/><path d="M1443 339h6" stroke="#8cff1f"/><path d="M1449 339h6" stroke="#95ff1c"/><path d="M1455 339h6" stroke="#9fff1a"/><path d="M1461 339h6" stroke="#aaff17"/><path d="M1467 339h6" stroke="#b4ff15"/><path d="M1473 339h6" stroke="#bfff12"/><path d="M1479 339h6" stroke="#caff10"/><path d="M1485 339h6" stroke="#d5ff0d"/><path d="M1491 339h6" stroke="#e0ff0a"/><path d="M1497 339h6" stroke="#ebff07"/><path d="M1503 339h6" stroke="#f7ff04"/><path d="M1509 339h6" stroke="#fffb01"/><path d="M1515 339h6" stroke="#ffef00"/><path d="M1521 339h6" stroke="#ffe500"/><path d="M1527 339h6" stroke="#ffdb00"/><path d="M1533 339h6" stroke="#ffd200"/><path d="M1335 345h6" stroke="#00ff48"/><path d="M1341 345h6" stroke="#00ff46"/><path d="M1347 345h6" stroke="#07ff44"/><path d="M1353 345h6" stroke="#0eff43"/><path d="M1359 345h6" stroke="#16ff41"/><path d="M1365 345h6" stroke="#1eff3f"/><path d="M1371 345h6" stroke="#26ff3d"/><path d="M1377 345h6" stroke="#2eff3b"/><path d="M1383 345h6" stroke="#36ff39"/><path d="M1389 345h6" stroke="#3eff37"/><path d="M1395 345h6" stroke="#47ff35"/><path d="M1401 345h6" stroke="#50ff33"/><path d="M1407 345h6" stroke="#59ff31"/><path d="M1413 345h6" stroke="#62ff2f"/><path d="M1419 345h6" stroke="#6bff2d"/><path d="M1425 345h6" stroke="#74ff2a"/><path d="M1431 345h6" stroke="#7eff28"/><path d="M1437 345h6" stroke="#87ff26"/><path d="M1443 345h6" stroke="#91ff24"/><path d="M1449 345h6" stroke="#9cff21"/><path d="M1455 345h6" stroke="#a6ff1f"/><path d="M1461 345h6" stroke="#b0ff1c"/><path d="M1467 345h6" stroke="#bbff1a"/><path d="M1473 345h6" stroke="#c6ff17"/><path d="M1479 345h6" stroke="#d1ff14"/><path d="M1485 345h6" stroke="#ddff12"/><path d="M1491 345h6" stroke="#e9ff0f"/><path d="M1497 345h6" stroke="#f5ff0c"/><path d="M1503 345h6" stroke="#fffd09"/><path d="M1509 345h6" stroke="#fff106"/><path d="M1515 345h6" stroke="#ffe603"/><path d="M1521 345h6" stroke="#ffdc00"/><path d="M1527 345h6" stroke="#ffd300"/><path d="M1533 345h6" stroke="#ffca00"/><path d="M1539 345h6" stroke="#ffc100"/><path d="M1329 351h6" stroke="#00ff4f"/><path d="M1335 351h6" stroke="#00ff4d"/><path d="M1341 351h6" stroke="#01ff4b"/><path d="M1347 351h6" stroke="#09ff4a"/><path d="M1353 351h6" stroke="#11ff48"/><path d="M1359 351h6" stroke="#18ff46"/><path d="M1365 351h6" stroke="#20ff44"/><path d="M1371 351h6" stroke="#29ff42"/><path d="M1377 351h6" stroke="#31ff40"/><path d="M1383 351h6" stroke="#39ff3e"/><path d="M1389 351h6" stroke="#42ff3c"/><path d="M1395 351h6" stroke="#4bff3a"/><path d="M1401 351h6" stroke="#54ff38"/><path d="M1407 351h6" stroke="#5dff36"/><path d="M1413 351h6" stroke="#66ff34"/><path d="M1419 351h6" stroke="#70ff32"/><path d="M1425 351h6" stroke="#79ff30"/><path d="M1431 351h6" stroke="#83ff2d"/><path d="M1437 351h6" stroke="#8dff2b"/><path d="M1443 351h6" stroke="#97ff29"/><path d="M1449 351h6" stroke="#a2ff26"/><path d="M1455 351h6" stroke="#adff24"/><path d="M1461 351h6" stroke="#b8ff21"/><path d="M1467 351h6" stroke="#c3ff1f"/><path d="M1473 351h6" stroke="#ceff1c"/><path d="M1479 351h6" stroke="#daff19"/><path d="M1485 351h6" stroke="#e6ff17"/><path d="M1491 351h6" stroke="#f2ff14"/><path d="M1497 351h6" stroke="#feff11"/><path d="M1503 351h6" stroke="#fff30d"/><path d="M1509 351h6" stroke="#ffe80a"/><path d="M1515 351h6" stroke="#ffde07"/><path d="M1521 351h6" stroke="#ffd404"/><path d="M1527 351h6" stroke="#ffcb01"/><path d="M1533 351h6" stroke="#ffc200"/><path d="M1539 351h6" stroke="#ffba00"/><path d="M1545 351h6" stroke="#ffb200"/><path d="M1551 351h6" stroke="#ffab00"/><path d="M1329 357h6" stroke="#00ff54"/><path d="M1335 357h6" stroke="#00ff52"/><path d="M1341 357h6" stroke="#03ff51"/><path d="M1347 357h6" stroke="#0bff4f"/><path d="M1353 357h6" stroke="#13ff4d"/><path d="M1359 357h6" stroke="#1bff4b"/><path d="M1365 357h6" stroke="#23ff4a"/><path d="M1371 357h6" stroke="#2cff48"/><path d="M1377 357h6" stroke="#34ff46"/><path d="M1383 357h6" stroke="#3dff44"/><path d="M1389 357h6" stroke="#46ff42"/><path d="M1395 357h6" stroke="#4fff40"/><path d="M1401 357h6" stroke="#58ff3e"/><path d="M1407 357h6" stroke="#61ff3c"/><path d="M1413 357h6" stroke="#6bff39"/><path d="M1419 357h6" stroke="#75ff37"/><path d="M1425 357h6" stroke="#7fff35"/><path d="M1431 357h6" stroke="#89ff33"/><path d="M1437 357h6" stroke="#93ff30"/><path d="M1443 357h6" stroke="#9eff2e"/><path d="M1449 357h6" stroke="#a9ff2c"/><path d="M1455 357h6" stroke="#b4ff29"/><path d="M1461 357h6" stroke="#bfff27"/><path d="M1467 357h6" stroke="#cbff24"/><path d="M1473 357h6" stroke="#d7ff21"/><path d="M1479 357h6" stroke="#e3ff1f"/><path d="M1485 357h6" stroke="#efff1c"/><path d="M1491 357h6" stroke="#fcff19"/><path d="M1497 357h6" stroke="#fff615"/><path d="M1503 357h6" stroke="#ffea12"/><path d="M1509 357h6" stroke="#ffdf0e"/><path d="M1515 357h6" stroke="#ffd50b"/><path d="M1521 357h6" stroke="#ffcb08"/><path d="M1527 357h6" stroke="#ffc305"/><path d="M1533 357h6" stroke="#ffba02"/><path d="M1539 357h6" stroke="#ffb200"/><path d="M1545 357h6" stroke="#ffab00"/><path d="M1551 357h6" stroke="#ffa400"/><path d="M1557 357h6" stroke="#ff9e00"/><path d="M1329 363h6" stroke="#00ff5a"/><path d="M1335 363h6" stroke="#00ff58"/><path d="M1341 363h6" stroke="#05ff56"/><path d="M1347 363h6" stroke="#0dff55"/><path d="M1353 363h6" stroke="#15ff53"/><path d="M1359 363h6" stroke="#1eff51"/><path d="M1365 363h6" stroke="#26ff4f"/><path d="M1371 363h6" stroke="#2fff4d"/><path d="M1377 363h6" stroke="#37ff4c"/><path d="M1383 363h6" stroke="#40ff4a"/><path d="M1389 363h6" stroke="#4aff48"/><path d="M1395 363h6" stroke="#53ff46"/><path d="M1401 363h6" stroke="#5cff43"/><path d="M1407 363h6" stroke="#66ff41"/><path d="M1413 363h6" stroke="#70ff3f"/><path d="M1419 363h6" stroke="#7aff3d"/><path d="M1425 363h6" stroke="#84ff3b"/><path d="M1431 363h6" stroke="#8fff39"/><path d="M1437 363h6" stroke="#9aff36"/><path d="M1443 363h6" stroke="#a5ff34"/><path d="M1449 363h6" stroke="#b0ff31"/><path d="M1455 363h6" stroke="#bcff2f"/><path d="M1461 363h6" stroke="#c7ff2c"/><path d="M1467 363h6" stroke="#d3ff2a"/><path d="M1473 363h6" stroke="#e0ff27"/><path d="M1479 363h6" stroke="#ecff24"/><path d="M1485 363h6" stroke="#f9ff22"/><path d="M1491 363h6" stroke="#fff81e"/><path d="M1497 363h6" stroke="#ffec1a"/><path d="M1503 363h6" stroke="#ffe116"/><path d="M1509 363h6" stroke="#ffd612"/><path d="M1515 363h6" stroke="#ffcc0f"/><path d="M1521 363h6" stroke="#ffc30c"/><path d="M1527 363h6" stroke="#ffbb09"/><path d="M1533 363h6" stroke="#ffb306"/><path d="M1539 363h6" stroke="#ffab03"/><path d="M1545 363h6" stroke="#ffa401"/><path d="M1551 363h6" stroke="#ff9d00"/><path d="M1557 363h6" stroke="#ff9700"/><path d="M1563 363h6" stroke="#ff9100"/><path d="M1569 363h6" stroke="#ff8b00"/><path d="M1329 369h6" stroke="#00ff60"/><path d="M1335 369h6" stroke="#00ff5e"/><path d="M1341 369h6" stroke="#07ff5c"/><path d="M1347 369h6" stroke="#0fff5b"/><path d="M1353 369h6" stroke="#18ff59"/><path d="M1359 369h6" stroke="#20ff57"/><path d="M1365 369h6" stroke="#29ff55"/><path d="M1371 369h6" stroke="#32ff53"/><path d="M1377 369h6" stroke="#3bff52"/><path d="M1383 369h6" stroke="#44ff50"/><path d="M1389 369h6" stroke="#4eff4e"/><path d="M1395 369h6" stroke="#57ff4c"/><path d="M1401 369h6" stroke="#61ff4a"/><path d="M1407 369h6" stroke="#6bff47"/><path d="M1413 369h6" stroke="#75ff45"/><path d="M1419 369h6" stroke="#80ff43"/><path d="M1425 369h6" stroke="#8bff41"/><path d="M1431 369h6" stroke="#95ff3f"/><path d="M1437 369h6" stroke="#a1ff3c"/><path d="M1443 369h6" stroke="#acff3a"/><path d="M1449 369h6" stroke="#b8ff37"/><path d="M1455 369h6" stroke="#c4ff35"/><path d="M1461 369h6" stroke="#d0ff32"/><path d="M1467 369h6" stroke="#dcff30"/><path d="M1473 369h6" stroke="#e9ff2d"/><path d="M1479 369h6" stroke="#f6ff2a"/><path d="M1485 369h6" stroke="#fffa27"/><path d="M1491 369h6" stroke="#ffee22"/><path d="M1497 369h6" stroke="#ffe21e"/><path d="M1503 369h6" stroke="#ffd71a"/><path d="M1509 369h6" stroke="#ffcd16"/><path d="M1515 369h6" stroke="#ffc413"/><path d="M1521 369h6" stroke="#ffbb10"/><path d="M1527 369h6" stroke="#ffb30c"/><path d="M1533 369h6" stroke="#ffab0a"/><path d="M1539 369h6" stroke="#ffa407"/><path d="M1545 369h6" stroke="#ff9d04"/><path d="M1551 369h6" stroke="#ff9702"/><path d="M1557 369h6" stroke="#ff9100"/><path d="M1563 369h6" stroke="#ff8b00"/><path d="M1569 369h6" stroke="#ff8500"/><path d="M1575 369h6" stroke="#ff8000"/><path d="M1323 375h6" stroke="#00ff68"/><path d="M1329 375h6" stroke="#00ff66"/><path d="M1335 375h6" stroke="#01ff64"/><path d="M1341 375h6" stroke="#09ff63"/><path d="M1347 375h6" stroke="#12ff61"/><path d="M1353 375h6" stroke="#1aff5f"/><path d="M1359 375h6" stroke="#23ff5d"/><path d="M1365 375h6" stroke="#2cff5c"/><path d="M1371 375h6" stroke="#35ff5a"/><path d="M1377 375h6" stroke="#3fff58"/><path d="M1383 375h6" stroke="#48ff56"/><path d="M1389 375h6" stroke="#52ff54"/><path d="M1395 375h6" stroke="#5cff52"/><path d="M1401 375h6" stroke="#66ff50"/><path d="M1407 375h6" stroke="#70ff4e"/><path d="M1413 375h6" stroke="#7bff4c"/><path d="M1419 375h6" stroke="#86ff4a"/><path d="M1425 375h6" stroke="#91ff47"/><path d="M1431 375h6" stroke="#9cff45"/><path d="M1437 375h6" stroke="#a8ff43"/><path d="M1443 375h6" stroke="#b4ff40"/><path d="M1449 375h6" stroke="#c0ff3e"/><path d="M1455 375h6" stroke="#ccff3b"/><path d="M1461 375h6" stroke="#d9ff39"/><path d="M1467 375h6" stroke="#e6ff36"/><path d="M1473 375h6" stroke="#f3ff33"/><path d="M1479 375h6" stroke="#fffd30"/><path d="M1485 375h6" stroke="#fff02b"/><path d="M1491 375h6" stroke="#ffe426"/><path d="M1497 375h6" stroke="#ffd922"/><path d="M1503 375h6" stroke="#ffce1e"/><path d="M1509 375h6" stroke="#ffc51a"/><path d="M1515 375h6" stroke="#ffbc17"/><path d="M1521 375h6" stroke="#ffb313"/><path d="M1527 375h6" stroke="#ffab10"/><path d="M1533 375h6" stroke="#ffa40d"/><path d="M1539 375h6" stroke="#ff9d0a"/><path d="M1545 375h6" stroke="#ff9608"/><path d="M1551 375h6" stroke="#ff9005"/><path d="M1557 375h6" stroke="#ff8a03"/><path d="M1563 375h6" stroke="#ff8501"/><path d="M1569 375h6" stroke="#ff7f00"/><path d="M1575 375h6" stroke="#ff7a00"/><path d="M1581 375h6" stroke="#ff7500"/><path d="M1323 381h6" stroke="#00ff6e"/><path d="M1329 381h6" stroke="#00ff6d"/><path d="M1335 381h6" stroke="#03ff6b"/><path d="M1341 381h6" stroke="#0cff69"/><path d="M1347 381h6" stroke="#14ff68"/><path d="M1353 381h6" stroke="#1dff66"/><path d="M1359 381h6" stroke="#26ff64"/><path d="M1365 381h6" stroke="#30ff62"/><path d="M1371 381h6" stroke="#39ff61"/><path d="M1377 381h6" stroke="#43ff5f"/><path d="M1383 381h6" stroke="#4dff5d"/><path d="M1389 381h6" stroke="#57ff5b"/><path d="M1395 381h6" stroke="#61ff59"/><path d="M1401 381h6" stroke="#6bff57"/><path d="M1407 381h6" stroke="#76ff55"/><path d="M1413 381h6" stroke="#81ff53"/><path d="M1419 381h6" stroke="#8cff50"/><path d="M1425 381h6" stroke="#98ff4e"/><path d="M1431 381h6" stroke="#a4ff4c"/><path d="M1437 381h6" stroke="#b0ff4a"/><path d="M1443 381h6" stroke="#bcff47"/><path d="M1449 381h6" stroke="#c9ff45"/><path d="M1455 381h6" stroke="#d5ff42"/><path d="M1461 381h6" stroke="#e3ff40"/><path d="M1467 381h6" stroke="#f0ff3d"/><path d="M1473 381h6" stroke="#feff3a"/><path d="M1479 381h6" stroke="#fff235"/><path d="M1485 381h6" stroke="#ffe630"/><path d="M1491 381h6" stroke="#ffda2b"/><path d="M1497 381h6" stroke="#ffcf26"/><path d="M1503 381h6" stroke="#ffc622"/><path d="M1509 381h6" stroke="#ffbc1e"/><path d="M1515 381h6" stroke="#ffb41a"/><path d="M1521 381h6" stroke="#ffab17"/><path d="M1527 381h6" stroke="#ffa414"/><path d="M1533 381h6" stroke="#ff9d11"/><path d="M1539 381h6" stroke="#ff960e"/><path d="M1545 381h6" stroke="#ff900b"/><path d="M1551 381h6" stroke="#ff8a09"/><path d="M1557 381h6" stroke="#ff8406"/><path d="M1563 381h6" stroke="#ff7e04"/><path d="M1569 381h6" stroke="#ff7902"/><path d="M1575 381h6" stroke="#ff7400"/><path d="M1581 381h6" stroke="#ff7000"/><path d="M1587 381h6" stroke="#ff6b00"/><path d="M1593 381h6" stroke="#ff6700"/><path d="M1323 387h6" stroke="#00ff75"/><path d="M1329 387h6" stroke="#00ff74"/><path d="M1335 387h6" stroke="#05ff72"/><path d="M1341 387h6" stroke="#0eff70"/><path d="M1347 387h6" stroke="#17ff6f"/><path d="M1353 387h6" stroke="#20ff6d"/><path d="M1359 387h6" stroke="#2aff6b"/><path d="M1365 387h6" stroke="#33ff69"/><path d="M1371 387h6" stroke="#3dff68"/><path d="M1377 387h6" stroke="#47ff66"/><path d="M1383 387h6" stroke="#51ff64"/><path d="M1389 387h6" stroke="#5bff62"/><path d="M1395 387h6" stroke="#66ff60"/><path d="M1401 387h6" stroke="#71ff5e"/><path d="M1407 387h6" stroke="#7cff5c"/><path d="M1413 387h6" stroke="#87ff5a"/><path d="M1419 387h6" stroke="#93ff58"/><path d="M1425 387h6" stroke="#9fff55"/><path d="M1431 387h6" stroke="#abff53"/><path d="M1437 387h6" stroke="#b8ff51"/><path d="M1443 387h6" stroke="#c5ff4e"/><path d="M1449 387h6" stroke="#d2ff4c"/><path d="M1455 387h6" stroke="#dfff4a"/><path d="M1461 387h6" stroke="#edff47"/><path d="M1467 387h6" stroke="#fbff44"/><path d="M1473 387h6" stroke="#fff53f"/><path d="M1479 387h6" stroke="#ffe839"/><path d="M1485 387h6" stroke="#ffdc34"/><path d="M1491 387h6" stroke="#ffd12f"/><path d="M1497 387h6" stroke="#ffc62a"/><path d="M1503 387h6" stroke="#ffbd26"/><path d="M1509 387h6" stroke="#ffb422"/><path d="M1515 387h6" stroke="#ffac1e"/><path d="M1521 387h6" stroke="#ffa41b"/><path d="M1527 387h6" stroke="#ff9c17"/><path d="M1533 387h6" stroke="#ff9614"/><path d="M1539 387h6" stroke="#ff8f11"/><path d="M1545 387h6" stroke="#ff890e"/><path d="M1551 387h6" stroke="#ff830c"/><path d="M1557 387h6" stroke="#ff7e09"/><path d="M1563 387h6" stroke="#ff7807"/><path d="M1569 387h6" stroke="#ff7305"/><path d="M1575 387h6" stroke="#ff6f03"/><path d="M1581 387h6" stroke="#ff6a01"/><path d="M1587 387h6" stroke="#ff6600"/><path d="M1593 387h6" stroke="#ff6200"/><path d="M1599 387h6" stroke="#ff5e00"/><path d="M1323 393h6" stroke="#00ff7c"/><path d="M1329 393h6" stroke="#00ff7b"/><path d="M1335 393h6" stroke="#07ff79"/><path d="M1341 393h6" stroke="#11ff78"/><path d="M1347 393h6" stroke="#1aff76"/><path d="M1353 393h6" stroke="#23ff74"/><path d="M1359 393h6" stroke="#2dff73"/><path d="M1365 393h6" stroke="#37ff71"/><path d="M1371 393h6" stroke="#41ff6f"/><path d="M1377 393h6" stroke="#4bff6d"/><path d="M1383 393h6" stroke="#56ff6b"/><path d="M1389 393h6" stroke="#61ff6a"/><path d="M1395 393h6" stroke="#6cff68"/><path d="M1401 393h6" stroke="#77ff66"/><path d="M1407 393h6" stroke="#82ff64"/><path d="M1413 393h6" stroke="#8eff62"/><path d="M1419 393h6" stroke="#9aff5f"/><path d="M1425 393h6" stroke="#a7ff5d"/><path d="M1431 393h6" stroke="#b4ff5b"/><path d="M1437 393h6" stroke="#c1ff59"/><path d="M1443 393h6" stroke="#ceff56"/><path d="M1449 393h6" stroke="#dcff54"/><path d="M1455 393h6" stroke="#eaff51"/><path d="M1461 393h6" stroke="#f8ff4f"/><path d="M1467 393h6" stroke="#fff74a"/><path d="M1473 393h6" stroke="#ffea43"/><path d="M1479 393h6" stroke="#ffdd3d"/><path d="M1485 393h6" stroke="#ffd238"/><path d="M1491 393h6" stroke="#ffc733"/><path d="M1497 393h6" stroke="#ffbd2e"/><path d="M1503 393h6" stroke="#ffb42a"/><path d="M1509 393h6" stroke="#ffac26"/><path d="M1515 393h6" stroke="#ffa422"/><path d="M1521 393h6" stroke="#ff9c1e"/><path d="M1527 393h6" stroke="#ff951b"/><path d="M1533 393h6" stroke="#ff8e18"/><path d="M1539 393h6" stroke="#ff8815"/><path d="M1545 393h6" stroke="#ff8212"/><path d="M1551 393h6" stroke="#ff7d0f"/><path d="M1557 393h6" stroke="#ff770c"/><path d="M1563 393h6" stroke="#ff720a"/><path d="M1569 393h6" stroke="#ff6e08"/><path d="M1575 393h6" stroke="#ff6906"/><path d="M1581 393h6" stroke="#ff6504"/><path d="M1587 393h6" stroke="#ff6102"/><path d="M1593 393h6" stroke="#ff5d00"/><path d="M1599 393h6" stroke="#ff5900"/><path d="M1605 393h6" stroke="#ff5600"/><path d="M1611 393h6" stroke="#ff5200"/><path d="M1317 399h6" stroke="#00ff86"/><path d="M1323 399h6" stroke="#00ff84"/><path d="M1329 399h6" stroke="#01ff83"/><path d="M1335 399h6" stroke="#0aff81"/><path d="M1341 399h6" stroke="#13ff80"/><path d="M1347 399h6" stroke="#1dff7e"/><path d="M1353 399h6" stroke="#27ff7c"/><path d="M1359 399h6" stroke="#31ff7b"/><path d="M1365 399h6" stroke="#3bff79"/><path d="M1371 399h6" stroke="#45ff77"/><path d="M1377 399h6" stroke="#50ff75"/><path d="M1383 399h6" stroke="#5bff74"/><path d="M1389 399h6" stroke="#66ff72"/><path d="M1395 399h6" stroke="#72ff70"/><path d="M1401 399h6" stroke="#7dff6e"/><path d="M1407 399h6" stroke="#89ff6c"/><path d="M1413 399h6" stroke="#96ff6a"/><path d="M1419 399h6" stroke="#a2ff68"/><path d="M1425 399h6" stroke="#afff65"/><path d="M1431 399h6" stroke="#bcff63"/><path d="M1437 399h6" stroke="#caff61"/><path d="M1443 399h6" stroke="#d8ff5f"/><path d="M1449 399h6" stroke="#e6ff5c"/><path d="M1455 399h6" stroke="#f5ff5a"/><path d="M1461 399h6" stroke="#fffa56"/><path d="M1467 399h6" stroke="#ffec4e"/><path d="M1473 399h6" stroke="#ffdf48"/><path d="M1479 399h6" stroke="#ffd342"/><path d="M1485 399h6" stroke="#ffc83c"/><path d="M1491 399h6" stroke="#ffbe37"/><path d="M1497 399h6" stroke="#ffb532"/><path d="M1503 399h6" stroke="#ffac2d"/><path d="M1509 399h6" stroke="#ffa429"/><path d="M1515 399h6" stroke="#ff9c25"/><path d="M1521 399h6" stroke="#ff9522"/><path d="M1527 399h6" stroke="#ff8e1e"/><path d="M1533 399h6" stroke="#ff881b"/><path d="M1539 399h6" stroke="#ff8218"/><path d="M1545 399h6" stroke="#ff7c15"/><path d="M1551 399h6" stroke="#ff7712"/><path d="M1557 399h6" stroke="#ff7110"/><path d="M1563 399h6" stroke="#ff6d0d"/><path d="M1569 399h6" stroke="#ff680b"/><path d="M1575 399h6" stroke="#ff6409"/><path d="M1581 399h6" stroke="#ff6006"/><path d="M1587 399h6" stroke="#ff5c04"/><path d="M1593 399h6" stroke="#ff5802"/><path d="M1599 399h6" stroke="#ff5401"/><path d="M1605 399h6" stroke="#ff5100"/><path d="M1611 399h6" stroke="#ff4d00"/><path d="M1617 399h6" stroke="#ff4a00"/><path d="M1317 405h6" stroke="#00ff8e"/><path d="M1323 405h6" stroke="#00ff8c"/><path d="M1329 405h6" stroke="#03ff8b"/><path d="M1335 405h6" stroke="#0cff89"/><path d="M1341 405h6" stroke="#16ff88"/><path d="M1347 405h6" stroke="#20ff86"/><path d="M1353 405h6" stroke="#2aff85"/><path d="M1359 405h6" stroke="#34ff83"/><path d="M1365 405h6" stroke="#3fff81"/><path d="M1371 405h6" stroke="#4aff80"/><path d="M1377 405h6" stroke="#55ff7e"/><path d="M1383 405h6" stroke="#60ff7c"/><path d="M1389 405h6" stroke="#6cff7a"/><path d="M1395 405h6" stroke="#78ff78"/><path d="M1401 405h6" stroke="#84ff77"/><path d="M1407 405h6" stroke="#90ff75"/><path d="M1413 405h6" stroke="#9dff73"/><path d="M1419 405h6" stroke="#aaff70"/><path d="M1425 405h6" stroke="#b8ff6e"/><path d="M1431 405h6" stroke="#c6ff6c"/><path d="M1437 405h6" stroke="#d4ff6a"/><path d="M1443 405h6" stroke="#e3ff68"/><path d="M1449 405h6" stroke="#f2ff65"/><path d="M1455 405h6" stroke="#fffd62"/><path d="M1461 405h6" stroke="#ffee5a"/><path d="M1467 405h6" stroke="#ffe153"/><path d="M1473 405h6" stroke="#ffd54c"/><path d="M1479 405h6" stroke="#ffc946"/><path d="M1485 405h6" stroke="#ffbf40"/><path d="M1491 405h6" stroke="#ffb53b"/><path d="M1497 405h6" stroke="#ffac36"/><path d="M1503 405h6" stroke="#ffa331"/><path d="M1509 405h6" stroke="#ff9c2d"/><path d="M1515 405h6" stroke="#ff9429"/><path d="M1521 405h6" stroke="#ff8d25"/><path d="M1527 405h6" stroke="#ff8722"/><path d="M1533 405h6" stroke="#ff811e"/><path d="M1539 405h6" stroke="#ff7b1b"/><path d="M1545 405h6" stroke="#ff7618"/><path d="M1551 405h6" stroke="#ff7015"/><path d="M1557 405h6" stroke="#ff6b13"/><path d="M1563 405h6" stroke="#ff6710"/><path d="M1569 405h6" stroke="#ff620e"/><path d="M1575 405h6" stroke="#ff5e0b"/><path d="M1581 405h6" stroke="#ff5a09"/><path d="M1587 405h6" stroke="#ff5607"/><path d="M1593 405h6" stroke="#ff5305"/><path d="M1599 405h6" stroke="#ff4f03"/><path d="M1605 405h6" stroke="#ff4c01"/><path d="M1611 405h6" stroke="#ff4900"/><path d="M1617 405h6" stroke="#ff4600"/><path d="M1623 405h6" stroke="#ff4300"/><path d="M1629 405h6" stroke="#ff4000"/><path d="M1317 411h6" stroke="#00ff96"/><path d="M1323 411h6" stroke="#00ff95"/><path d="M1329 411h6" stroke="#05ff93"/><path d="M1335 411h6" stroke="#0fff92"/><path d="M1341 411h6" stroke="#19ff91"/><path d="M1347 411h6" stroke="#23ff8f"/><path d="M1353 411h6" stroke="#2eff8d"/><path d="M1359 411h6" stroke="#39ff8c"/><path d="M1365 411h6" stroke="#44ff8a"/><path d="M1371 411h6" stroke="#4fff89"/><path d="M1377 411h6" stroke="#5aff87"/><path d="M1383 411h6" stroke="#66ff85"/><path d="M1389 411h6" stroke="#72ff83"/><path d="M1395 411h6" stroke="#7fff82"/><path d="M1401 411h6" stroke="#8bff80"/><path d="M1407 411h6" stroke="#98ff7e"/><path d="M1413 411h6" stroke="#a6ff7c"/><path d="M1419 411h6" stroke="#b3ff7a"/><path d="M1425 411h6" stroke="#c1ff78"/><path d="M1431 411h6" stroke="#d0ff76"/><path d="M1437 411h6" stroke="#dfff74"/><path d="M1443 411h6" stroke="#eeff71"/><path d="M1449 411h6" stroke="#feff6f"/><path d="M1455 411h6" stroke="#fff167"/><path d="M1461 411h6" stroke="#ffe35e"/><path d="M1467 411h6" stroke="#ffd657"/><path d="M1473 411h6" stroke="#ffca50"/><path d="M1479 411h6" stroke="#ffbf4a"/><path d="M1485 411h6" stroke="#ffb544"/><path d="M1491 411h6" stroke="#ffac3f"/><path d="M1497 411h6" stroke="#ffa33a"/><path d="M1503 411h6" stroke="#ff9b35"/><path d="M1509 411h6" stroke="#ff9430"/><path d="M1515 411h6" stroke="#ff8d2c"/><path d="M1521 411h6" stroke="#ff8629"/><path d="M1527 411h6" stroke="#ff8025"/><path d="M1533 411h6" stroke="#ff7a21"/><path d="M1539 411h6" stroke="#ff741e"/><path d="M1545 411h6" stroke="#ff6f1b"/><path d="M1551 411h6" stroke="#ff6a18"/><path d="M1557 411h6" stroke="#ff6616"/><path d="M1563 411h6" stroke="#ff6113"/><path d="M1569 411h6" stroke="#ff5d11"/><path d="M1575 411h6" stroke="#ff590e"/><path d="M1581 411h6" stroke="#ff550c"/><path d="M1587 411h6" stroke="#ff510a"/><path d="M1593 411h6" stroke="#ff4e08"/><path d="M1599 411h6" stroke="#ff4a06"/><path d="M1605 411h6" stroke="#ff4704"/><path d="M1611 411h6" stroke="#ff4402"/><path d="M1617 411h6" stroke="#ff4100"/><path d="M1623 411h6" stroke="#ff3e00"/><path d="M1629 411h6" stroke="#ff3c00"/><path d="M1635 411h6" stroke="#ff3900"/><path d="M1317 417h6" stroke="#00ff9f"/><path d="M1323 417h6" stroke="#00ff9e"/><path d="M1329 417h6" stroke="#08ff9d"/><path d="M1335 417h6" stroke="#12ff9b"/><path d="M1341 417h6" stroke="#1cff9a"/><path d="M1347 417h6" stroke="#27ff98"/><path d="M1353 417h6" stroke="#32ff97"/><path d="M1359 417h6" stroke="#3dff95"/><path d="M1365 417h6" stroke="#48ff94"/><path d="M1371 417h6" stroke="#54ff92"/><path d="M1377 417h6" stroke="#60ff91"/><path d="M1383 417h6" stroke="#6cff8f"/><path d="M1389 417h6" stroke="#79ff8d"/><path d="M1395 417h6" stroke="#86ff8c"/><path d="M1401 417h6" stroke="#93ff8a"/><path d="M1407 417h6" stroke="#a1ff88"/><path d="M1413 417h6" stroke="#afff86"/><path d="M1419 417h6" stroke="#bdff84"/><path d="M1425 417h6" stroke="#ccff82"/><path d="M1431 417h6" stroke="#dbff80"/><path d="M1437 417h6" stroke="#eaff7e"/><path d="M1443 417h6" stroke="#faff7c"/><path d="M1449 417h6" stroke="#fff374"/><path d="M1455 417h6" stroke="#ffe56b"/><path d="M1461 417h6" stroke="#ffd863"/><path d="M1467 417h6" stroke="#ffcb5b"/><path d="M1473 417h6" stroke="#ffc054"/><path d="M1479 417h6" stroke="#ffb64e"/><path d="M1485 417h6" stroke="#ffac48"/><path d="M1491 417h6" stroke="#ffa342"/><path d="M1497 417h6" stroke="#ff9b3d"/><path d="M1503 417h6" stroke="#ff9338"/><path d="M1509 417h6" stroke="#ff8c34"/><path d="M1515 417h6" stroke="#ff8530"/><path d="M1521 417h6" stroke="#ff7f2c"/><path d="M1527 417h6" stroke="#ff7928"/><path d="M1533 417h6" stroke="#ff7325"/><path d="M1539 417h6" stroke="#ff6e21"/><path d="M1545 417h6" stroke="#ff691e"/><path d="M1551 417h6" stroke="#ff641b"/><path d="M1557 417h6" stroke="#ff6019"/><path d="M1563 417h6" stroke="#ff5b16"/><path d="M1569 417h6" stroke="#ff5713"/><path d="M1575 417h6" stroke="#ff5311"/><path d="M1581 417h6" stroke="#ff500f"/><path d="M1587 417h6" stroke="#ff4c0c"/><path d="M1593 417h6" stroke="#ff490a"/><path d="M1599 417h6" stroke="#ff4608"/><path d="M1605 417h6" stroke="#ff4306"/><path d="M1611 417h6" stroke="#ff4005"/><path d="M1617 417h6" stroke="#ff3d03"/><path d="M1623 417h6" stroke="#ff3a01"/><path d="M1629 417h6" stroke="#ff3700"/><path d="M1635 417h6" stroke="#ff3500"/><path d="M1641 417h6" stroke="#ff3200"/><path d="M1647 417h6" stroke="#ff3000"/><path d="M1311 423h6" stroke="#00ffaa"/><path d="M1317 423h6" stroke="#00ffa9"/><path d="M1323 423h6" stroke="#00ffa8"/><path d="M1329 423h6" stroke="#0bffa6"/><path d="M1335 423h6" stroke="#15ffa5"/><path d="M1341 423h6" stroke="#20ffa4"/><path d="M1347 423h6" stroke="#2bffa2"/><path d="M1353 423h6" stroke="#36ffa1"/><path d="M1359 423h6" stroke="#42ffa0"/><path d="M1365 423h6" stroke="#4dff9e"/><path d="M1371 423h6" stroke="#5aff9d"/><path d="M1377 423h6" stroke="#66ff9b"/><path d="M1383 423h6" stroke="#73ff99"/><path d="M1389 423h6" stroke="#80ff98"/><path d="M1395 423h6" stroke="#8dff96"/><path d="M1401 423h6" stroke="#9bff94"/><path d="M1407 423h6" stroke="#a9ff93"/><path d="M1413 423h6" stroke="#b8ff91"/><path d="M1419 423h6" stroke="#c7ff8f"/><path d="M1425 423h6" stroke="#d7ff8d"/><path d="M1431 423h6" stroke="#e7ff8b"/><path d="M1437 423h6" stroke="#f7ff89"/><path d="M1443 423h6" stroke="#fff682"/><path d="M1449 423h6" stroke="#ffe778"/><path d="M1455 423h6" stroke="#ffd96f"/><path d="M1461 423h6" stroke="#ffcd67"/><path d="M1467 423h6" stroke="#ffc15f"/><path d="M1473 423h6" stroke="#ffb658"/><path d="M1479 423h6" stroke="#ffac52"/><path d="M1485 423h6" stroke="#ffa34c"/><path d="M1491 423h6" stroke="#ff9b46"/><path d="M1497 423h6" stroke="#ff9341"/><path d="M1503 423h6" stroke="#ff8b3c"/><path d="M1509 423h6" stroke="#ff8437"/><path d="M1515 423h6" stroke="#ff7e33"/><path d="M1521 423h6" stroke="#ff782f"/><path d="M1527 423h6" stroke="#ff722b"/><path d="M1533 423h6" stroke="#ff6d28"/><path d="M1539 423h6" stroke="#ff6825"/><path d="M1545 423h6" stroke="#ff6321"/><path d="M1551 423h6" stroke="#ff5e1e"/><path d="M1557 423h6" stroke="#ff5a1b"/><path d="M1563 423h6" stroke="#ff5619"/><path d="M1569 423h6" stroke="#ff5216"/><path d="M1575 423h6" stroke="#ff4e14"/><path d="M1581 423h6" stroke="#ff4b11"/><path d="M1587 423h6" stroke="#ff470f"/><path d="M1593 423h6" stroke="#ff440d"/><path d="M1599 423h6" stroke="#ff410b"/><path d="M1605 423h6" stroke="#ff3e09"/><path d="M1611 423h6" stroke="#ff3b07"/><path d="M1617 423h6" stroke="#ff3805"/><path d="M1623 423h6" stroke="#ff3604"/><path d="M1629 423h6" stroke="#ff3302"/><path d="M1635 423h6" stroke="#ff3100"/><path d="M1641 423h6" stroke="#ff2e00"/><path d="M1647 423h6" stroke="#ff2c00"/><path d="M1653 423h6" stroke="#ff2a00"/><path d="M1311 429h6" stroke="#00ffb4"/><path d="M1317 429h6" stroke="#00ffb3"/><path d="M1323 429h6" stroke="#03ffb2"/><path d="M1329 429h6" stroke="#0effb1"/><path d="M1335 429h6" stroke="#18ffb0"/><path d="M1341 429h6" stroke="#24ffae"/><path d="M1347 429h6" stroke="#2fffad"/><path d="M1353 429h6" stroke="#3bffac"/><path d="M1359 429h6" stroke="#47ffaa"/><path d="M1365 429h6" stroke="#53ffa9"/><path d="M1371 429h6" stroke="#60ffa8"/><path d="M1377 429h6" stroke="#6dffa6"/><path d="M1383 429h6" stroke="#7affa5"/><path d="M1389 429h6" stroke="#88ffa3"/><path d="M1395 429h6" stroke="#96ffa2"/><path d="M1401 429h6" stroke="#a4ffa0"/><path d="M1407 429h6" stroke="#b3ff9e"/><path d="M1413 429h6" stroke="#c2ff9d"/><path d="M1419 429h6" stroke="#d2ff9b"/><path d="M1425 429h6" stroke="#e3ff99"/><path d="M1431 429h6" stroke="#f3ff97"/><path d="M1437 429h6" stroke="#fffa92"/><path d="M1443 429h6" stroke="#ffea87"/><path d="M1449 429h6" stroke="#ffdb7d"/><path d="M1455 429h6" stroke="#ffce73"/><path d="M1461 429h6" stroke="#ffc26b"/><path d="M1467 429h6" stroke="#ffb763"/><path d="M1473 429h6" stroke="#ffac5c"/><path d="M1479 429h6" stroke="#ffa355"/><path d="M1485 429h6" stroke="#ff9a4f"/><path d="M1491 429h6" stroke="#ff924a"/><path d="M1497 429h6" stroke="#ff8b44"/><path d="M1503 429h6" stroke="#ff843f"/><path d="M1509 429h6" stroke="#ff7d3b"/><path d="M1515 429h6" stroke="#ff7737"/><path d="M1521 429h6" stroke="#ff7132"/><path d="M1527 429h6" stroke="#ff6b2f"/><path d="M1533 429h6" stroke="#ff662b"/><path d="M1539 429h6" stroke="#ff6128"/><path d="M1545 429h6" stroke="#ff5d24"/><path d="M1551 429h6" stroke="#ff5821"/><path d="M1557 429h6" stroke="#ff541e"/><path d="M1563 429h6" stroke="#ff501c"/><path d="M1569 429h6" stroke="#ff4d19"/><path d="M1575 429h6" stroke="#ff4916"/><path d="M1581 429h6" stroke="#ff4614"/><path d="M1587 429h6" stroke="#ff4212"/><path d="M1593 429h6" stroke="#ff3f10"/><path d="M1599 429h6" stroke="#ff3c0e"/><path d="M1605 429h6" stroke="#ff390c"/><path d="M1611 429h6" stroke="#ff370a"/><path d="M1617 429h6" stroke="#ff3408"/><path d="M1623 429h6" stroke="#ff3106"/><path d="M1629 429h6" stroke="#ff2f04"/><path d="M1635 429h6" stroke="#ff2d03"/><path d="M1641 429h6" stroke="#ff2a01"/><path d="M1647 429h6" stroke="#ff2800"/><path d="M1653 429h6" stroke="#ff2600"/><path d="M1659 429h6" stroke="#ff2400"/><path d="M1665 429h6" stroke="#ff2200"/><path d="M1311 435h6" stroke="#00ffbf"/><path d="M1317 435h6" stroke="#00ffbe"/><path d="M1323 435h6" stroke="#06ffbd"/><path d="M1329 435h6" stroke="#11ffbc"/><path d="M1335 435h6" stroke="#1cffbb"/><path d="M1341 435h6" stroke="#27ffba"/><path d="M1347 435h6" stroke="#33ffb9"/><path d="M1353 435h6" stroke="#3fffb7"/><path d="M1359 435h6" stroke="#4cffb6"/><path d="M1365 435h6" stroke="#59ffb5"/><path d="M1371 435h6" stroke="#66ffb4"/><path d="M1377 435h6" stroke="#74ffb2"/><path d="M1383 435h6" stroke="#81ffb1"/><path d="M1389 435h6" stroke="#90ffaf"/><path d="M1395 435h6" stroke="#9fffae"/><path d="M1401 435h6" stroke="#aeffac"/><path d="M1407 435h6" stroke="#bdffab"/><path d="M1413 435h6" stroke="#ceffa9"/><path d="M1419 435h6" stroke="#deffa8"/><path d="M1425 435h6" stroke="#efffa6"/><path d="M1431 435h6" stroke="#fffda3"/><path d="M1437 435h6" stroke="#ffec96"/><path d="M1443 435h6" stroke="#ffdd8b"/><path d="M1449 435h6" stroke="#ffcf81"/><path d="M1455 435h6" stroke="#ffc377"/><path d="M1461 435h6" stroke="#ffb76f"/><path d="M1467 435h6" stroke="#ffad67"/><path d="M1473 435h6" stroke="#ffa360"/><path d="M1479 435h6" stroke="#ff9a59"/><path d="M1485 435h6" stroke="#ff9253"/><path d="M1491 435h6" stroke="#ff8a4d"/><path d="M1497 435h6" stroke="#ff8348"/><path d="M1503 435h6" stroke="#ff7c43"/><path d="M1509 435h6" stroke="#ff763e"/><path d="M1515 435h6" stroke="#ff703a"/><path d="M1521 435h6" stroke="#ff6a36"/><path d="M1527 435h6" stroke="#ff6532"/><path d="M1533 435h6" stroke="#ff602e"/><path d="M1539 435h6" stroke="#ff5b2b"/><path d="M1545 435h6" stroke="#ff5727"/><path d="M1551 435h6" stroke="#ff5324"/><path d="M1557 435h6" stroke="#ff4f21"/><path d="M1563 435h6" stroke="#ff4b1e"/><path d="M1569 435h6" stroke="#ff471c"/><path d="M1575 435h6" stroke="#ff4419"/><path d="M1581 435h6" stroke="#ff4017"/><path d="M1587 435h6" stroke="#ff3d14"/><path d="M1593 435h6" stroke="#ff3a12"/><path d="M1599 435h6" stroke="#ff3710"/><path d="M1605 435h6" stroke="#ff350e"/><path d="M1611 435h6" stroke="#ff320c"/><path d="M1617 435h6" stroke="#ff300a"/><path d="M1623 435h6" stroke="#ff2d08"/><path d="M1629 435h6" stroke="#ff2b07"/><path d="M1635 435h6" stroke="#ff2905"/><path d="M1641 435h6" stroke="#ff2603"/><path d="M1647 435h6" stroke="#ff2402"/><path d="M1653 435h6" stroke="#ff2200"/><path d="M1659 435h6" stroke="#ff2000"/><path d="M1665 435h6" stroke="#ff1f00"/><path d="M1671 435h6" stroke="#ff1d00"/><path d="M1311 441h6" stroke="#00ffcb"/><path d="M1317 441h6" stroke="#00ffca"/><path d="M1323 441h6" stroke="#09ffc9"/><path d="M1329 441h6" stroke="#14ffc8"/><path d="M1335 441h6" stroke="#20ffc7"/><path d="M1341 441h6" stroke="#2cffc6"/><path d="M1347 441h6" stroke="#38ffc5"/><path d="M1353 441h6" stroke="#45ffc4"/><path d="M1359 441h6" stroke="#52ffc3"/><path d="M1365 441h6" stroke="#5fffc1"/><path d="M1371 441h6" stroke="#6dffc0"/><path d="M1377 441h6" stroke="#7bffbf"/><path d="M1383 441h6" stroke="#8affbe"/><path d="M1389 441h6" stroke="#99ffbd"/><path d="M1395 441h6" stroke="#a8ffbb"/><path d="M1401 441h6" stroke="#b8ffba"/><path d="M1407 441h6" stroke="#c9ffb8"/><path d="M1413 441h6" stroke="#daffb7"/><path d="M1419 441h6" stroke="#ebffb6"/><path d="M1425 441h6" stroke="#fdffb4"/><path d="M1431 441h6" stroke="#ffefa7"/><path d="M1437 441h6" stroke="#ffdf9b"/><path d="M1443 441h6" stroke="#ffd18f"/><path d="M1449 441h6" stroke="#ffc485"/><path d="M1455 441h6" stroke="#ffb87b"/><path d="M1461 441h6" stroke="#ffad73"/><path d="M1467 441h6" stroke="#ffa36b"/><path d="M1473 441h6" stroke="#ff9a64"/><path d="M1479 441h6" stroke="#ff915d"/><path d="M1485 441h6" stroke="#ff8957"/><path d="M1491 441h6" stroke="#ff8251"/><path d="M1497 441h6" stroke="#ff7b4b"/><path d="M1503 441h6" stroke="#ff7446"/><path d="M1509 441h6" stroke="#ff6e42"/><path d="M1515 441h6" stroke="#ff693d"/><path d="M1521 441h6" stroke="#ff6339"/><path d="M1527 441h6" stroke="#ff5e35"/><path d="M1533 441h6" stroke="#ff5a31"/><path d="M1539 441h6" stroke="#ff552e"/><path d="M1545 441h6" stroke="#ff512a"/><path d="M1551 441h6" stroke="#ff4d27"/><path d="M1557 441h6" stroke="#ff4924"/><path d="M1563 441h6" stroke="#ff4521"/><path d="M1569 441h6" stroke="#ff421e"/><path d="M1575 441h6" stroke="#ff3f1c"/><path d="M1581 441h6" stroke="#ff3c19"/><path d="M1587 441h6" stroke="#ff3917"/><path d="M1593 441h6" stroke="#ff3615"/><path d="M1599 441h6" stroke="#ff3312"/><path d="M1605 441h6" stroke="#ff3010"/><path d="M1611 441h6" stroke="#ff2e0e"/><path d="M1617 441h6" stroke="#ff2b0c"/><path d="M1623 441h6" stroke="#ff290b"/><path d="M1629 441h6" stroke="#ff2709"/><path d="M1635 441h6" stroke="#ff2507"/><path d="M1641 441h6" stroke="#ff2206"/><path d="M1647 441h6" stroke="#ff2004"/><path d="M1653 441h6" stroke="#ff1f02"/><path d="M1659 441h6" stroke="#ff1d01"/><path d="M1665 441h6" stroke="#ff1b00"/><path d="M1671 441h6" stroke="#ff1900"/><path d="M1677 441h6" stroke="#ff1700"/><path d="M1683 441h6" stroke="#ff1600"/><path d="M1305 447h6" stroke="#00ffd8"/><path d="M1311 447h6" stroke="#00ffd7"/><path d="M1317 447h6" stroke="#00ffd6"/><path d="M1323 447h6" stroke="#0cffd5"/><path d="M1329 447h6" stroke="#17ffd5"/><path d="M1335 447h6" stroke="#24ffd4"/><path d="M1341 447h6" stroke="#30ffd3"/><path d="M1347 447h6" stroke="#3dffd2"/><path d="M1353 447h6" stroke="#4affd1"/><path d="M1359 447h6" stroke="#58ffd0"/><path d="M1365 447h6" stroke="#66ffcf"/><path d="M1371 447h6" stroke="#74ffce"/><path d="M1377 447h6" stroke="#83ffcd"/><path d="M1383 447h6" stroke="#93ffcc"/><path d="M1389 447h6" stroke="#a2ffcb"/><path d="M1395 447h6" stroke="#b3ffca"/><path d="M1401 447h6" stroke="#c4ffc8"/><path d="M1407 447h6" stroke="#d5ffc7"/><path d="M1413 447h6" stroke="#e7ffc6"/><path d="M1419 447h6" stroke="#faffc5"/><path d="M1425 447h6" stroke="#fff2b9"/><path d="M1431 447h6" stroke="#ffe1ab"/><path d="M1437 447h6" stroke="#ffd29f"/><path d="M1443 447h6" stroke="#ffc593"/><path d="M1449 447h6" stroke="#ffb889"/><path d="M1455 447h6" stroke="#ffad7f"/><path d="M1461 447h6" stroke="#ffa377"/><path d="M1467 447h6" stroke="#ff996f"/><path d="M1473 447h6" stroke="#ff9067"/><path d="M1479 447h6" stroke="#ff8861"/><path d="M1485 447h6" stroke="#ff815a"/><path d="M1491 447h6" stroke="#ff7a54"/><path d="M1497 447h6" stroke="#ff734f"/><path d="M1503 447h6" stroke="#ff6d4a"/><path d="M1509 447h6" stroke="#ff6745"/><path d="M1515 447h6" stroke="#ff6240"/><path d="M1521 447h6" stroke="#ff5d3c"/><path d="M1527 447h6" stroke="#ff5838"/><path d="M1533 447h6" stroke="#ff5334"/><path d="M1539 447h6" stroke="#ff4f31"/><path d="M1545 447h6" stroke="#ff4b2d"/><path d="M1551 447h6" stroke="#ff472a"/><path d="M1557 447h6" stroke="#ff4427"/><path d="M1563 447h6" stroke="#ff4024"/><path d="M1569 447h6" stroke="#ff3d21"/><path d="M1575 447h6" stroke="#ff3a1e"/><path d="M1581 447h6" stroke="#ff371c"/><path d="M1587 447h6" stroke="#ff3419"/><path d="M1593 447h6" stroke="#ff3117"/><path d="M1599 447h6" stroke="#ff2e15"/><path d="M1605 447h6" stroke="#ff2c13"/><path d="M1611 447h6" stroke="#ff2911"/><path d="M1617 447h6" stroke="#ff270f"/><path d="M1623 447h6" stroke="#ff250d"/><path d="M1629 447h6" stroke="#ff230b"/><path d="M1635 447h6" stroke="#ff2109"/><path d="M1641 447h6" stroke="#ff1f08"/><path d="M1647 447h6" stroke="#ff1d06"/><path d="M1653 447h6" stroke="#ff1b05"/><path d="M1659 447h6" stroke="#ff1903"/><path d="M1665 447h6" stroke="#ff1702"/><path d="M1671 447h6" stroke="#ff1600"/><path d="M1677 447h6" stroke="#ff1400"/><path d="M1683 447h6" stroke="#ff1200"/><path d="M1689 447h6" stroke="#ff1100"/><path d="M1305 453h6" stroke="#00ffe5"/><path d="M1311 453h6" stroke="#00ffe4"/><path d="M1317 453h6" stroke="#03ffe4"/><path d="M1323 453h6" stroke="#0fffe3"/><path d="M1329 453h6" stroke="#1bffe2"/><path d="M1335 453h6" stroke="#28ffe2"/><path d="M1341 453h6" stroke="#35ffe1"/><path d="M1347 453h6" stroke="#43ffe0"/><path d="M1353 453h6" stroke="#50ffdf"/><path d="M1359 453h6" stroke="#5fffdf"/><path d="M1365 453h6" stroke="#6dffde"/><path d="M1371 453h6" stroke="#7dffdd"/><path d="M1377 453h6" stroke="#8cffdc"/><path d="M1383 453h6" stroke="#9cffdb"/><path d="M1389 453h6" stroke="#adffda"/><path d="M1395 453h6" stroke="#beffd9"/><path d="M1401 453h6" stroke="#d0ffd8"/><path d="M1407 453h6" stroke="#e2ffd7"/><path d="M1413 453h6" stroke="#f5ffd6"/><path d="M1419 453h6" stroke="#fff5cd"/><path d="M1425 453h6" stroke="#ffe4bd"/><path d="M1431 453h6" stroke="#ffd4af"/><path d="M1437 453h6" stroke="#ffc6a3"/><path d="M1443 453h6" stroke="#ffb997"/><path d="M1449 453h6" stroke="#ffad8d"/><path d="M1455 453h6" stroke="#ffa383"/><path d="M1461 453h6" stroke="#ff997a"/><path d="M1467 453h6" stroke="#ff9072"/><path d="M1473 453h6" stroke="#ff876b"/><path d="M1479 453h6" stroke="#ff8064"/><path d="M1485 453h6" stroke="#ff785e"/><path d="M1491 453h6" stroke="#ff7258"/><path d="M1497 453h6" stroke="#ff6c52"/><path d="M1503 453h6" stroke="#ff664d"/><path d="M1509 453h6" stroke="#ff6048"/><path d="M1515 453h6" stroke="#ff5b43"/><path d="M1521 453h6" stroke="#ff563f"/><path d="M1527 453h6" stroke="#ff523b"/><path d="M1533 453h6" stroke="#ff4d37"/><path d="M1539 453h6" stroke="#ff4933"/><path d="M1545 453h6" stroke="#ff4530"/><path d="M1551 453h6" stroke="#ff422d"/><path d="M1557 453h6" stroke="#ff3e2a"/><path d="M1563 453h6" stroke="#ff3b27"/><path d="M1569 453h6" stroke="#ff3824"/><path d="M1575 453h6" stroke="#ff3521"/><path d="M1581 453h6" stroke="#ff321e"/><path d="M1587 453h6" stroke="#ff2f1c"/><path d="M1593 453h6" stroke="#ff2c1a"/><path d="M1599 453h6" stroke="#ff2a17"/><path d="M1605 453h6" stroke="#ff2715"/><path d="M1611 453h6" stroke="#ff2513"/><path d="M1617 453h6" stroke="#ff2311"/><path d="M1623 453h6" stroke="#ff210f"/><path d="M1629 453h6" stroke="#ff1f0d"/><path d="M1635 453h6" stroke="#ff1d0c"/><path d="M1641 453h6" stroke="#ff1b0a"/><path d="M1647 453h6" stroke="#ff1908"/><path d="M1653 453h6" stroke="#ff1707"/><path d="M1659 453h6" stroke="#ff1505"/><path d="M1665 453h6" stroke="#ff1404"/><path d="M1671 453h6" stroke="#ff1202"/><path d="M1677 453h6" stroke="#ff1101"/><path d="M1683 453h6" stroke="#ff0f00"/><path d="M1689 453h6" stroke="#ff0e00"/><path d="M1695 453h6" stroke="#ff0c00"/><path d="M1701 453h6" stroke="#ff0b00"/><path d="M1305 459h12" stroke="#00fff3"/><path d="M1317 459h6" stroke="#06fff2"/><path d="M1323 459h6" stroke="#13fff2"/><path d="M1329 459h6" stroke="#1ffff1"/><path d="M1335 459h6" stroke="#2dfff1"/><path d="M1341 459h6" stroke="#3afff0"/><path d="M1347 459h6" stroke="#48fff0"/><path d="M1353 459h6" stroke="#57ffef"/><path d="M1359 459h6" stroke="#66ffee"/><path d="M1365 459h6" stroke="#75ffee"/><path d="M1371 459h6" stroke="#85ffed"/><path d="M1377 459h6" stroke="#96ffed"/><path d="M1383 459h6" stroke="#a7ffec"/><path d="M1389 459h6" stroke="#b8ffeb"/><path d="M1395 459h6" stroke="#cbffeb"/><path d="M1401 459h6" stroke="#deffea"/><path d="M1407 459h6" stroke="#f1ffe9"/><path d="M1413 459h6" stroke="#fff9e3"/><path d="M1419 459h6" stroke="#ffe6d1"/><path d="M1425 459h6" stroke="#ffd6c1"/><path d="M1431 459h6" stroke="#ffc7b3"/><path d="M1437 459h6" stroke="#ffbaa7"/><path d="M1443 459h6" stroke="#ffad9b"/><path d="M1449 459h6" stroke="#ffa291"/><path d="M1455 459h6" stroke="#ff9887"/><path d="M1461 459h6" stroke="#ff8f7e"/><path d="M1467 459h6" stroke="#ff8676"/><path d="M1473 459h6" stroke="#ff7f6f"/><path d="M1479 459h6" stroke="#ff7768"/><path d="M1485 459h6" stroke="#ff7061"/><path d="M1491 459h6" stroke="#ff6a5b"/><path d="M1497 459h6" stroke="#ff6455"/><path d="M1503 459h6" stroke="#ff5e50"/><path d="M1509 459h6" stroke="#ff594b"/><path d="M1515 459h6" stroke="#ff5446"/><path d="M1521 459h6" stroke="#ff5042"/><path d="M1527 459h6" stroke="#ff4b3e"/><path d="M1533 459h6" stroke="#ff473a"/><path d="M1539 459h6" stroke="#ff4336"/><path d="M1545 459h6" stroke="#ff4033"/><path d="M1551 459h6" stroke="#ff3c2f"/><path d="M1557 459h6" stroke="#ff392c"/><path d="M1563 459h6" stroke="#ff3629"/><path d="M1569 459h6" stroke="#ff3326"/><path d="M1575 459h6" stroke="#ff3024"/><path d="M1581 459h6" stroke="#ff2d21"/><path d="M1587 459h6" stroke="#ff2a1e"/><path d="M1593 459h6" stroke="#ff281c"/><path d="M1599 459h6" stroke="#ff251a"/><path d="M1605 459h6" stroke="#ff2318"/><path d="M1611 459h6" stroke="#ff2115"/><path d="M1617 459h6" stroke="#ff1f13"/><path d="M1623 459h6" stroke="#ff1d11"/><path d="M1629 459h6" stroke="#ff1b10"/><path d="M1635 459h6" stroke="#ff190e"/><path d="M1641 459h6" stroke="#ff170c"/><path d="M1647 459h6" stroke="#ff150a"/><path d="M1653 459h6" stroke="#ff1309"/><path d="M1659 459h6" stroke="#ff1207"/><path d="M1665 459h6" stroke="#ff1006"/><path d="M1671 459h6" stroke="#ff0f04"/><path d="M1677 459h6" stroke="#ff0d03"/><path d="M1683 459h6" stroke="#ff0c01"/><path d="M1689 459h6" stroke="#ff0a00"/><path d="M1695 459h6" stroke="#ff0900"/><path d="M1701 459h6" stroke="#ff0800"/><path d="M1707 459h6" stroke="#ff0600"/><path d="M1305 465h12" stroke="#00fcff"/><path d="M1317 465h6" stroke="#09fcff"/><path d="M1323 465h6" stroke="#16fdff"/><path d="M1329 465h6" stroke="#24fdff"/><path d="M1335 465h6" stroke="#31fdff"/><path d="M1341 465h6" stroke="#40fdff"/><path d="M1347 465h6" stroke="#4efeff"/><path d="M1353 465h6" stroke="#5efeff"/><path d="M1359 465h6" stroke="#6efeff"/><path d="M1365 465h6" stroke="#7effff"/><path d="M1371 465h6" stroke="#8fffff"/><path d="M1377 465h6" stroke="#a0ffff"/><path d="M1383 465h6" stroke="#b2fffe"/><path d="M1389 465h6" stroke="#c5fffe"/><path d="M1395 465h6" stroke="#d8fffe"/><path d="M1401 465h6" stroke="#ecfffd"/><path d="M1407 465h6" stroke="#fffdfa"/><path d="M1413 465h6" stroke="#ffe9e7"/><path d="M1419 465h6" stroke="#ffd8d5"/><path d="M1425 465h6" stroke="#ffc8c5"/><path d="M1431 465h6" stroke="#ffbab7"/><path d="M1437 465h6" stroke="#ffaeab"/><path d="M1443 465h6" stroke="#ffa29f"/><path d="M1449 465h6" stroke="#ff9894"/><path d="M1455 465h6" stroke="#ff8e8b"/><path d="M1461 465h6" stroke="#ff8582"/><path d="M1467 465h6" stroke="#ff7d7a"/><path d="M1473 465h6" stroke="#ff7672"/><path d="M1479 465h6" stroke="#ff6f6b"/><path d="M1485 465h6" stroke="#ff6864"/><path d="M1491 465h6" stroke="#ff625e"/><path d="M1497 465h6" stroke="#ff5d59"/><path d="M1503 465h6" stroke="#ff5753"/><path d="M1509 465h6" stroke="#ff524e"/><path d="M1515 465h6" stroke="#ff4e4a"/><path d="M1521 465h6" stroke="#ff4945"/><path d="M1527 465h6" stroke="#ff4541"/><path d="M1533 465h6" stroke="#ff413d"/><path d="M1539 465h6" stroke="#ff3e39"/><path d="M1545 465h6" stroke="#ff3a36"/><path d="M1551 465h6" stroke="#ff3732"/><path d="M1557 465h6" stroke="#ff332f"/><path d="M1563 465h6" stroke="#ff302c"/><path d="M1569 465h6" stroke="#ff2e29"/><path d="M1575 465h6" stroke="#ff2b26"/><path d="M1581 465h6" stroke="#ff2824"/><path d="M1587 465h6" stroke="#ff2621"/><path d="M1593 465h6" stroke="#ff231f"/><path d="M1599 465h6" stroke="#ff211c"/><path d="M1605 465h6" stroke="#ff1f1a"/><path d="M1611 465h6" stroke="#ff1d18"/><path d="M1617 465h6" stroke="#ff1b16"/><path d="M1623 465h6" stroke="#ff1914"/><path d="M1629 465h6" stroke="#ff1712"/><path d="M1635 465h6" stroke="#ff1510"/><path d="M1641 465h6" stroke="#ff130e"/><path d="M1647 465h6" stroke="#ff110c"/><path d="M1653 465h6" stroke="#ff100b"/><path d="M1659 465h6" stroke="#ff0e09"/><path d="M1665 465h6" stroke="#ff0d08"/><path d="M1671 465h6" stroke="#ff0b06"/><path d="M1677 465h6" stroke="#ff0a05"/><path d="M1683 465h6" stroke="#ff0803"/><path d="M1689 465h6" stroke="#ff0702"/><path d="M1695 465h6" stroke="#ff0601"/><path d="M1701 465h6" stroke="#ff0500"/><path d="M1707 465h6" stroke="#ff0300"/><path d="M1713 465h6" stroke="#ff0200"/><path d="M1299 471h18" stroke="#00edff"/><path d="M1317 471h6" stroke="#0cedff"/><path d="M1323 471h6" stroke="#19edff"/><path d="M1329 471h6" stroke="#26edff"/><path d="M1335 471h6" stroke="#33edff"/><path d="M1341 471h6" stroke="#41edff"/><path d="M1347 471h6" stroke="#50edff"/><path d="M1353 471h6" stroke="#5fedff"/><path d="M1359 471h6" stroke="#6eedff"/><path d="M1365 471h6" stroke="#7eedff"/><path d="M1371 471h6" stroke="#8fedff"/><path d="M1377 471h6" stroke="#a0edff"/><path d="M1383 471h6" stroke="#b2edff"/><path d="M1389 471h6" stroke="#c4edff"/><path d="M1395 471h6" stroke="#d7edff"/><path d="M1401 471h6" stroke="#ebedff"/><path d="M1407 471h6" stroke="#ffecfe"/><path d="M1413 471h6" stroke="#ffdaea"/><path d="M1419 471h6" stroke="#ffcad9"/><path d="M1425 471h6" stroke="#ffbbc9"/><path d="M1431 471h6" stroke="#ffaebb"/><path d="M1437 471h6" stroke="#ffa2ae"/><path d="M1443 471h6" stroke="#ff97a3"/><path d="M1449 471h6" stroke="#ff8d98"/><path d="M1455 471h6" stroke="#ff848e"/><path d="M1461 471h6" stroke="#ff7c85"/><path d="M1467 471h6" stroke="#ff747d"/><path d="M1473 471h6" stroke="#ff6d75"/><path d="M1479 471h6" stroke="#ff676e"/><path d="M1485 471h6" stroke="#ff6168"/><path d="M1491 471h6" stroke="#ff5b62"/><path d="M1497 471h6" stroke="#ff555c"/><path d="M1503 471h6" stroke="#ff5056"/><path d="M1509 471h6" stroke="#ff4c51"/><path d="M1515 471h6" stroke="#ff474d"/><path d="M1521 471h6" stroke="#ff4348"/><path d="M1527 471h6" stroke="#ff3f44"/><path d="M1533 471h6" stroke="#ff3b40"/><path d="M1539 471h6" stroke="#ff383c"/><path d="M1545 471h6" stroke="#ff3438"/><path d="M1551 471h6" stroke="#ff3135"/><path d="M1557 471h6" stroke="#ff2e32"/><path d="M1563 471h6" stroke="#ff2b2f"/><path d="M1569 471h6" stroke="#ff292c"/><path d="M1575 471h6" stroke="#ff2629"/><path d="M1581 471h6" stroke="#ff2326"/><path d="M1587 471h6" stroke="#ff2123"/><path d="M1593 471h6" stroke="#ff1f21"/><path d="M1599 471h6" stroke="#ff1d1f"/><path d="M1605 471h6" stroke="#ff1a1c"/><path d="M1611 471h6" stroke="#ff181a"/><path d="M1617 471h6" stroke="#ff1618"/><path d="M1623 471h6" stroke="#ff1516"/><path d="M1629 471h6" stroke="#ff1314"/><path d="M1635 471h6" stroke="#ff1112"/><path d="M1641 471h6" stroke="#ff0f10"/><path d="M1647 471h6" stroke="#ff0e0f"/><path d="M1653 471h6" stroke="#ff0c0d"/><path d="M1659 471h6" stroke="#ff0b0b"/><path d="M1665 471h6" stroke="#ff090a"/><path d="M1671 471h6" stroke="#ff0808"/><path d="M1677 471h6" stroke="#ff0607"/><path d="M1683 471h6" stroke="#ff0505"/><path d="M1689 471h6" stroke="#ff0404"/><path d="M1695 471h6" stroke="#ff0303"/><path d="M1701 471h6" stroke="#ff0101"/><path d="M1707 471h18" stroke="#ff0000"/><path d="M1299 477h6" stroke="#00dfff"/><path d="M1305 477h6" stroke="#00deff"/><path d="M1311 477h6" stroke="#03deff"/><path d="M1317 477h6" stroke="#0fdeff"/><path d="M1323 477h6" stroke="#1bdeff"/><path d="M1329 477h6" stroke="#28deff"/><path d="M1335 477h6" stroke="#35ddff"/><path d="M1341 477h6" stroke="#43ddff"/><path d="M1347 477h6" stroke="#51ddff"/><path d="M1353 477h6" stroke="#60ddff"/><path d="M1359 477h6" stroke="#6fdcff"/><path d="M1365 477h6" stroke="#7edcff"/><path d="M1371 477h6" stroke="#8edcff"/><path d="M1377 477h6" stroke="#9fdbff"/><path d="M1383 477h6" stroke="#b0dbff"/><path d="M1389 477h6" stroke="#c2dbff"/><path d="M1395 477h6" stroke="#d5dbff"/><path d="M1401 477h6" stroke="#e8daff"/><path d="M1407 477h6" stroke="#fcdaff"/><path d="M1413 477h6" stroke="#ffcbee"/><path d="M1419 477h6" stroke="#ffbcdd"/><path d="M1425 477h6" stroke="#ffaecd"/><path d="M1431 477h6" stroke="#ffa2bf"/><path d="M1437 477h6" stroke="#ff97b2"/><path d="M1443 477h6" stroke="#ff8ca6"/><path d="M1449 477h6" stroke="#ff839c"/><path d="M1455 477h6" stroke="#ff7b92"/><path d="M1461 477h6" stroke="#ff7389"/><path d="M1467 477h6" stroke="#ff6c81"/><path d="M1473 477h6" stroke="#ff6579"/><path d="M1479 477h6" stroke="#ff5f72"/><path d="M1485 477h6" stroke="#ff596b"/><path d="M1491 477h6" stroke="#ff5365"/><path d="M1497 477h6" stroke="#ff4e5f"/><path d="M1503 477h6" stroke="#ff4a59"/><path d="M1509 477h6" stroke="#ff4554"/><path d="M1515 477h6" stroke="#ff4150"/><path d="M1521 477h6" stroke="#ff3d4b"/><path d="M1527 477h6" stroke="#ff3947"/><path d="M1533 477h6" stroke="#ff3643"/><path d="M1539 477h6" stroke="#ff323f"/><path d="M1545 477h6" stroke="#ff2f3b"/><path d="M1551 477h6" stroke="#ff2c38"/><path d="M1557 477h6" stroke="#ff2934"/><path d="M1563 477h6" stroke="#ff2631"/><path d="M1569 477h6" stroke="#ff242e"/><path d="M1575 477h6" stroke="#ff212b"/><path d="M1581 477h6" stroke="#ff1f28"/><path d="M1587 477h6" stroke="#ff1d26"/><path d="M1593 477h6" stroke="#ff1a23"/><path d="M1599 477h6" stroke="#ff1821"/><path d="M1605 477h6" stroke="#ff161f"/><path d="M1611 477h6" stroke="#ff141c"/><path d="M1617 477h6" stroke="#ff121a"/><path d="M1623 477h6" stroke="#ff1118"/><path d="M1629 477h6" stroke="#ff0f16"/><path d="M1635 477h6" stroke="#ff0d14"/><path d="M1641 477h6" stroke="#ff0c12"/><path d="M1647 477h6" stroke="#ff0a11"/><path d="M1653 477h6" stroke="#ff090f"/><path d="M1659 477h6" stroke="#ff070d"/><path d="M1665 477h6" stroke="#ff060c"/><path d="M1671 477h6" stroke="#ff040a"/><path d="M1677 477h6" stroke="#ff0309"/><path d="M1683 477h6" stroke="#ff0207"/><path d="M1689 477h6" stroke="#ff0106"/><path d="M1695 477h6" stroke="#ff0004"/><path d="M1701 477h6" stroke="#ff0003"/><path d="M1707 477h6" stroke="#ff0002"/><path d="M1713 477h6" stroke="#ff0001"/><path d="M1299 483h12" stroke="#00d1ff"/><path d="M1311 483h6" stroke="#05d0ff"/><path d="M1317 483h6" stroke="#11d0ff"/><path d="M1323 483h6" stroke="#1dcfff"/><path d="M1329 483h6" stroke="#2acfff"/><path d="M1335 483h6" stroke="#37cfff"/><path d="M1341 483h6" stroke="#44ceff"/><path d="M1347 483h6" stroke="#52ceff"/><path d="M1353 483h6" stroke="#60cdff"/><path d="M1359 483h6" stroke="#6fcdff"/><path d="M1365 483h6" stroke="#7eccff"/><path d="M1371 483h6" stroke="#8ecbff"/><path d="M1377 483h6" stroke="#9ecbff"/><path d="M1383 483h6" stroke="#afcaff"/><path d="M1389 483h6" stroke="#c1caff"/><path d="M1395 483h6" stroke="#d3c9ff"/><path d="M1401 483h6" stroke="#e5c8ff"/><path d="M1407 483h6" stroke="#f9c8ff"/><path d="M1413 483h6" stroke="#ffbdf2"/><path d="M1419 483h6" stroke="#ffaee0"/><path d="M1425 483h6" stroke="#ffa2d1"/><path d="M1431 483h6" stroke="#ff96c2"/><path d="M1437 483h6" stroke="#ff8cb6"/><path d="M1443 483h6" stroke="#ff82aa"/><path d="M1449 483h6" stroke="#ff799f"/><path d="M1455 483h6" stroke="#ff7195"/><path d="M1461 483h6" stroke="#ff6a8c"/><path d="M1467 483h6" stroke="#ff6384"/><path d="M1473 483h6" stroke="#ff5d7c"/><path d="M1479 483h6" stroke="#ff5775"/><path d="M1485 483h6" stroke="#ff516e"/><path d="M1491 483h6" stroke="#ff4c68"/><path d="M1497 483h6" stroke="#ff4762"/><path d="M1503 483h6" stroke="#ff435d"/><path d="M1509 483h6" stroke="#ff3f57"/><path d="M1515 483h6" stroke="#ff3b52"/><path d="M1521 483h6" stroke="#ff374e"/><path d="M1527 483h6" stroke="#ff3349"/><path d="M1533 483h6" stroke="#ff3045"/><path d="M1539 483h6" stroke="#ff2d41"/><path d="M1545 483h6" stroke="#ff2a3e"/><path d="M1551 483h6" stroke="#ff273a"/><path d="M1557 483h6" stroke="#ff2437"/><path d="M1563 483h6" stroke="#ff2134"/><path d="M1569 483h6" stroke="#ff1f31"/><path d="M1575 483h6" stroke="#ff1c2e"/><path d="M1581 483h6" stroke="#ff1a2b"/><path d="M1587 483h6" stroke="#ff1828"/><path d="M1593 483h6" stroke="#ff1626"/><path d="M1599 483h6" stroke="#ff1423"/><path d="M1605 483h6" stroke="#ff1221"/><path d="M1611 483h6" stroke="#ff101f"/><path d="M1617 483h6" stroke="#ff0e1c"/><path d="M1623 483h6" stroke="#ff0d1a"/><path d="M1629 483h6" stroke="#ff0b18"/><path d="M1635 483h6" stroke="#ff0916"/><path d="M1641 483h6" stroke="#ff0815"/><path d="M1647 483h6" stroke="#ff0613"/><path d="M1653 483h6" stroke="#ff0511"/><path d="M1659 483h6" stroke="#ff040f"/><path d="M1665 483h6" stroke="#ff020e"/><path d="M1671 483h6" stroke="#ff010c"/><path d="M1677 483h6" stroke="#ff000b"/><path d="M1683 483h6" stroke="#ff0009"/><path d="M1689 483h6" stroke="#ff0008"/><path d="M1695 483h6" stroke="#ff0006"/><path d="M1701 483h6" stroke="#ff0005"/><path d="M1707 483h6" stroke="#ff0004"/><path d="M1299 489h6" stroke="#00c4ff"/><path d="M1305 489h6" stroke="#00c3ff"/><path d="M1311 489h6" stroke="#08c3ff"/><path d="M1317 489h6" stroke="#14c2ff"/><path d="M1323 489h6" stroke="#20c2ff"/><path d="M1329 489h6" stroke="#2cc1ff"/><path d="M1335 489h6" stroke="#39c0ff"/><path d="M1341 489h6" stroke="#46c0ff"/><path d="M1347 489h6" stroke="#53bfff"/><path d="M1353 489h6" stroke="#61beff"/><path d="M1359 489h6" stroke="#70beff"/><path d="M1365 489h6" stroke="#7ebdff"/><path d="M1371 489h6" stroke="#8ebcff"/><path d="M1377 489h6" stroke="#9ebbff"/><path d="M1383 489h6" stroke="#aebaff"/><path d="M1389 489h6" stroke="#bfbaff"/><path d="M1395 489h6" stroke="#d1b9ff"/><path d="M1401 489h6" stroke="#e3b8ff"/><path d="M1407 489h6" stroke="#f6b7ff"/><path d="M1413 489h6" stroke="#ffaff5"/><path d="M1419 489h6" stroke="#ffa1e4"/><path d="M1425 489h6" stroke="#ff95d4"/><path d="M1431 489h6" stroke="#ff8bc6"/><path d="M1437 489h6" stroke="#ff81b9"/><path d="M1443 489h6" stroke="#ff78ad"/><path d="M1449 489h6" stroke="#ff6fa3"/><path d="M1455 489h6" stroke="#ff6899"/><path d="M1461 489h6" stroke="#ff6190"/><path d="M1467 489h6" stroke="#ff5b87"/><path d="M1473 489h6" stroke="#ff557f"/><path d="M1479 489h6" stroke="#ff4f78"/><path d="M1485 489h6" stroke="#ff4a71"/><path d="M1491 489h6" stroke="#ff456b"/><path d="M1497 489h6" stroke="#ff4065"/><path d="M1503 489h6" stroke="#ff3c60"/><path d="M1509 489h6" stroke="#ff385a"/><path d="M1515 489h6" stroke="#ff3455"/><path d="M1521 489h6" stroke="#ff3151"/><path d="M1527 489h6" stroke="#ff2d4c"/><path d="M1533 489h6" stroke="#ff2a48"/><path d="M1539 489h6" stroke="#ff2744"/><path d="M1545 489h6" stroke="#ff2440"/><path d="M1551 489h6" stroke="#ff223d"/><path d="M1557 489h6" stroke="#ff1f39"/><path d="M1563 489h6" stroke="#ff1c36"/><path d="M1569 489h6" stroke="#ff1a33"/><path d="M1575 489h6" stroke="#ff1830"/><path d="M1581 489h6" stroke="#ff162d"/><path d="M1587 489h6" stroke="#ff142b"/><path d="M1593 489h6" stroke="#ff1228"/><path d="M1599 489h6" stroke="#ff1025"/><path d="M1605 489h6" stroke="#ff0e23"/><path d="M1611 489h6" stroke="#ff0c21"/><path d="M1617 489h6" stroke="#ff0a1f"/><path d="M1623 489h6" stroke="#ff091c"/><path d="M1629 489h6" stroke="#ff071a"/><path d="M1635 489h6" stroke="#ff0618"/><path d="M1641 489h6" stroke="#ff0417"/><path d="M1647 489h6" stroke="#ff0315"/><path d="M1653 489h6" stroke="#ff0213"/><path d="M1659 489h6" stroke="#ff0011"/><path d="M1665 489h6" stroke="#ff0010"/><path d="M1671 489h6" stroke="#ff000e"/><path d="M1677 489h6" stroke="#ff000c"/><path d="M1683 489h6" stroke="#ff000b"/><path d="M1689 489h6" stroke="#ff000a"/><path d="M1299 495h12" stroke="#00b7ff"/><path d="M1311 495h6" stroke="#0ab6ff"/><path d="M1317 495h6" stroke="#16b5ff"/><path d="M1323 495h6" stroke="#22b4ff"/><path d="M1329 495h6" stroke="#2eb4ff"/><path d="M1335 495h6" stroke="#3ab3ff"/><path d="M1341 495h6" stroke="#47b2ff"/><path d="M1347 495h6" stroke="#54b1ff"/><path d="M1353 495h6" stroke="#62b0ff"/><path d="M1359 495h6" stroke="#70afff"/><path d="M1365 495h6" stroke="#7eaeff"/><path d="M1371 495h6" stroke="#8dadff"/><path d="M1377 495h6" stroke="#9dacff"/><path d="M1383 495h6" stroke="#adabff"/><path d="M1389 495h6" stroke="#bdaaff"/><path d="M1395 495h6" stroke="#cfa9ff"/><path d="M1401 495h6" stroke="#e0a8ff"/><path d="M1407 495h6" stroke="#f3a7ff"/><path d="M1413 495h6" stroke="#ffa1f9"/><path d="M1419 495h6" stroke="#ff95e7"/><path d="M1425 495h6" stroke="#ff89d8"/><path d="M1431 495h6" stroke="#ff7fc9"/><path d="M1437 495h6" stroke="#ff76bc"/><path d="M1443 495h6" stroke="#ff6eb1"/><path d="M1449 495h6" stroke="#ff66a6"/><path d="M1455 495h6" stroke="#ff5f9c"/><path d="M1461 495h6" stroke="#ff5893"/><path d="M1467 495h6" stroke="#ff528a"/><path d="M1473 495h6" stroke="#ff4d83"/><path d="M1479 495h6" stroke="#ff477b"/><path d="M1485 495h6" stroke="#ff4274"/><path d="M1491 495h6" stroke="#ff3e6e"/><path d="M1497 495h6" stroke="#ff3a68"/><path d="M1503 495h6" stroke="#ff3662"/><path d="M1509 495h6" stroke="#ff325d"/><path d="M1515 495h6" stroke="#ff2e58"/><path d="M1521 495h6" stroke="#ff2b53"/><path d="M1527 495h6" stroke="#ff284f"/><path d="M1533 495h6" stroke="#ff254b"/><path d="M1539 495h6" stroke="#ff2247"/><path d="M1545 495h6" stroke="#ff1f43"/><path d="M1551 495h6" stroke="#ff1c3f"/><path d="M1557 495h6" stroke="#ff1a3c"/><path d="M1563 495h6" stroke="#ff1839"/><path d="M1569 495h6" stroke="#ff1536"/><path d="M1575 495h6" stroke="#ff1333"/><path d="M1581 495h6" stroke="#ff1130"/><path d="M1587 495h6" stroke="#ff0f2d"/><path d="M1593 495h6" stroke="#ff0d2a"/><path d="M1599 495h6" stroke="#ff0b28"/><path d="M1605 495h6" stroke="#ff0a25"/><path d="M1611 495h6" stroke="#ff0823"/><path d="M1617 495h6" stroke="#ff0621"/><path d="M1623 495h6" stroke="#ff051f"/><path d="M1629 495h6" stroke="#ff031d"/><path d="M1635 495h6" stroke="#ff021b"/><path d="M1641 495h6" stroke="#ff0119"/><path d="M1647 495h6" stroke="#ff0017"/><path d="M1653 495h6" stroke="#ff0015"/><path d="M1659 495h6" stroke="#ff0013"/><path d="M1665 495h6" stroke="#ff0012"/><path d="M1671 495h6" stroke="#ff0010"/><path d="M1677 495h6" stroke="#ff000e"/><path d="M1293 501h6" stroke="#00acff"/><path d="M1299 501h6" stroke="#00abff"/><path d="M1305 501h6" stroke="#02abff"/><path d="M1311 501h6" stroke="#0daaff"/><path d="M1317 501h6" stroke="#18a9ff"/><path d="M1323 501h6" stroke="#24a8ff"/><path d="M1329 501h6" stroke="#30a7ff"/><path d="M1335 501h6" stroke="#3ca6ff"/><path d="M1341 501h6" stroke="#48a5ff"/><path d="M1347 501h6" stroke="#55a4ff"/><path d="M1353 501h6" stroke="#63a3ff"/><path d="M1359 501h6" stroke="#70a2ff"/><path d="M1365 501h6" stroke="#7fa0ff"/><path d="M1371 501h6" stroke="#8d9fff"/><path d="M1377 501h6" stroke="#9c9eff"/><path d="M1383 501h6" stroke="#ac9dff"/><path d="M1389 501h6" stroke="#bc9bff"/><path d="M1395 501h6" stroke="#cd9aff"/><path d="M1401 501h6" stroke="#de99ff"/><path d="M1407 501h6" stroke="#f097ff"/><path d="M1413 501h6" stroke="#ff94fc"/><path d="M1419 501h6" stroke="#ff88eb"/><path d="M1425 501h6" stroke="#ff7edb"/><path d="M1431 501h6" stroke="#ff74cd"/><path d="M1437 501h6" stroke="#ff6cc0"/><path d="M1443 501h6" stroke="#ff64b4"/><path d="M1449 501h6" stroke="#ff5da9"/><path d="M1455 501h6" stroke="#ff569f"/><path d="M1461 501h6" stroke="#ff5096"/><path d="M1467 501h6" stroke="#ff4a8e"/><path d="M1473 501h6" stroke="#ff4586"/><path d="M1479 501h6" stroke="#ff407e"/><path d="M1485 501h6" stroke="#ff3b77"/><path d="M1491 501h6" stroke="#ff3771"/><path d="M1497 501h6" stroke="#ff336b"/><path d="M1503 501h6" stroke="#ff2f65"/><path d="M1509 501h6" stroke="#ff2b60"/><path d="M1515 501h6" stroke="#ff285b"/><path d="M1521 501h6" stroke="#ff2556"/><path d="M1527 501h6" stroke="#ff2252"/><path d="M1533 501h6" stroke="#ff1f4d"/><path d="M1539 501h6" stroke="#ff1c49"/><path d="M1545 501h6" stroke="#ff1a46"/><path d="M1551 501h6" stroke="#ff1742"/><path d="M1557 501h6" stroke="#ff153e"/><path d="M1563 501h6" stroke="#ff133b"/><path d="M1569 501h6" stroke="#ff1138"/><path d="M1575 501h6" stroke="#ff0f35"/><path d="M1581 501h6" stroke="#ff0d32"/><path d="M1587 501h6" stroke="#ff0b2f"/><path d="M1593 501h6" stroke="#ff092d"/><path d="M1599 501h6" stroke="#ff072a"/><path d="M1605 501h6" stroke="#ff0628"/><path d="M1611 501h6" stroke="#ff0425"/><path d="M1617 501h6" stroke="#ff0323"/><path d="M1623 501h6" stroke="#ff0121"/><path d="M1629 501h6" stroke="#ff001f"/><path d="M1635 501h6" stroke="#ff001d"/><path d="M1641 501h6" stroke="#ff001b"/><path d="M1647 501h6" stroke="#ff0019"/><path d="M1653 501h6" stroke="#ff0017"/><path d="M1659 501h6" stroke="#ff0015"/><path d="M1293 507h6" stroke="#00a1ff"/><path d="M1299 507h6" stroke="#00a0ff"/><path d="M1305 507h6" stroke="#049fff"/><path d="M1311 507h6" stroke="#0f9eff"/><path d="M1317 507h6" stroke="#1a9dff"/><path d="M1323 507h6" stroke="#269cff"/><path d="M1329 507h6" stroke="#319bff"/><path d="M1335 507h6" stroke="#3d99ff"/><path d="M1341 507h6" stroke="#4a98ff"/><path d="M1347 507h6" stroke="#5697ff"/><path d="M1353 507h6" stroke="#6396ff"/><path d="M1359 507h6" stroke="#7195ff"/><path d="M1365 507h6" stroke="#7f93ff"/><path d="M1371 507h6" stroke="#8d92ff"/><path d="M1377 507h6" stroke="#9c90ff"/><path d="M1383 507h6" stroke="#ab8fff"/><path d="M1389 507h6" stroke="#bb8dff"/><path d="M1395 507h6" stroke="#cb8cff"/><path d="M1401 507h6" stroke="#dc8aff"/><path d="M1407 507h6" stroke="#ed89ff"/><path d="M1413 507h6" stroke="#ff87ff"/><path d="M1419 507h6" stroke="#ff7cee"/><path d="M1425 507h6" stroke="#ff72de"/><path d="M1431 507h6" stroke="#ff6ad0"/><path d="M1437 507h6" stroke="#ff61c3"/><path d="M1443 507h6" stroke="#ff5ab7"/><path d="M1449 507h6" stroke="#ff53ad"/><path d="M1455 507h6" stroke="#ff4da3"/><path d="M1461 507h6" stroke="#ff4799"/><path d="M1467 507h6" stroke="#ff4291"/><path d="M1473 507h6" stroke="#ff3d89"/><path d="M1479 507h6" stroke="#ff3881"/><path d="M1485 507h6" stroke="#ff347a"/><path d="M1491 507h6" stroke="#ff3074"/><path d="M1497 507h6" stroke="#ff2c6e"/><path d="M1503 507h6" stroke="#ff2968"/><path d="M1509 507h6" stroke="#ff2563"/><path d="M1515 507h6" stroke="#ff225e"/><path d="M1521 507h6" stroke="#ff1f59"/><path d="M1527 507h6" stroke="#ff1c54"/><path d="M1533 507h6" stroke="#ff1a50"/><path d="M1539 507h6" stroke="#ff174c"/><path d="M1545 507h6" stroke="#ff1548"/><path d="M1551 507h6" stroke="#ff1244"/><path d="M1557 507h6" stroke="#ff1041"/><path d="M1563 507h6" stroke="#ff0e3e"/><path d="M1569 507h6" stroke="#ff0c3a"/><path d="M1575 507h6" stroke="#ff0a37"/><path d="M1581 507h6" stroke="#ff0834"/><path d="M1587 507h6" stroke="#ff0632"/><path d="M1593 507h6" stroke="#ff052f"/><path d="M1599 507h6" stroke="#ff032c"/><path d="M1605 507h6" stroke="#ff022a"/><path d="M1611 507h6" stroke="#ff0027"/><path d="M1617 507h6" stroke="#ff0025"/><path d="M1623 507h6" stroke="#ff0023"/><path d="M1629 507h6" stroke="#ff0021"/><path d="M1635 507h6" stroke="#ff001f"/><path d="M1641 507h6" stroke="#ff001d"/><path d="M1293 513h6" stroke="#0096ff"/><path d="M1299 513h6" stroke="#0095ff"/><path d="M1305 513h6" stroke="#0794ff"/><path d="M1311 513h6" stroke="#1193ff"/><path d="M1317 513h6" stroke="#1c91ff"/><path d="M1323 513h6" stroke="#2790ff"/><path d="M1329 513h6" stroke="#338fff"/><path d="M1335 513h6" stroke="#3f8eff"/><path d="M1341 513h6" stroke="#4b8cff"/><path d="M1347 513h6" stroke="#578bff"/><path d="M1353 513h6" stroke="#6489ff"/><path d="M1359 513h6" stroke="#7188ff"/><path d="M1365 513h6" stroke="#7f87ff"/><path d="M1371 513h6" stroke="#8d85ff"/><path d="M1377 513h6" stroke="#9b83ff"/><path d="M1383 513h6" stroke="#aa82ff"/><path d="M1389 513h6" stroke="#b980ff"/><path d="M1395 513h6" stroke="#c97eff"/><path d="M1401 513h6" stroke="#d97dff"/><path d="M1407 513h6" stroke="#ea7bff"/><path d="M1413 513h6" stroke="#fc79ff"/><path d="M1419 513h6" stroke="#ff70f1"/><path d="M1425 513h6" stroke="#ff67e1"/><path d="M1431 513h6" stroke="#ff5fd3"/><path d="M1437 513h6" stroke="#ff58c6"/><path d="M1443 513h6" stroke="#ff51bb"/><path d="M1449 513h6" stroke="#ff4ab0"/><path d="M1455 513h6" stroke="#ff45a6"/><path d="M1461 513h6" stroke="#ff3f9c"/><path d="M1467 513h6" stroke="#ff3a94"/><path d="M1473 513h6" stroke="#ff358c"/><path d="M1479 513h6" stroke="#ff3184"/><path d="M1485 513h6" stroke="#ff2d7d"/><path d="M1491 513h6" stroke="#ff2977"/><path d="M1497 513h6" stroke="#ff2671"/><path d="M1503 513h6" stroke="#ff226b"/><path d="M1509 513h6" stroke="#ff1f66"/><path d="M1515 513h6" stroke="#ff1c60"/><path d="M1521 513h6" stroke="#ff195c"/><path d="M1527 513h6" stroke="#ff1757"/><path d="M1533 513h6" stroke="#ff1453"/><path d="M1539 513h6" stroke="#ff124f"/><path d="M1545 513h6" stroke="#ff104b"/><path d="M1551 513h6" stroke="#ff0d47"/><path d="M1557 513h6" stroke="#ff0b43"/><path d="M1563 513h6" stroke="#ff0940"/><path d="M1569 513h6" stroke="#ff073d"/><path d="M1575 513h6" stroke="#ff063a"/><path d="M1581 513h6" stroke="#ff0437"/><path d="M1587 513h6" stroke="#ff0234"/><path d="M1593 513h6" stroke="#ff0131"/><path d="M1599 513h6" stroke="#ff002e"/><path d="M1605 513h6" stroke="#ff002c"/><path d="M1611 513h6" stroke="#ff0029"/><path d="M1617 513h6" stroke="#ff0027"/><path d="M1623 513h6" stroke="#ff0025"/><path d="M1629 513h6" stroke="#ff0023"/><path d="M1293 519h6" stroke="#008bff"/><path d="M1299 519h6" stroke="#008aff"/><path d="M1305 519h6" stroke="#0989ff"/><path d="M1311 519h6" stroke="#1488ff"/><path d="M1317 519h6" stroke="#1e86ff"/><path d="M1323 519h6" stroke="#2985ff"/><path d="M1329 519h6" stroke="#3484ff"/><path d="M1335 519h6" stroke="#4082ff"/><path d="M1341 519h6" stroke="#4c81ff"/><path d="M1347 519h6" stroke="#587fff"/><path d="M1353 519h6" stroke="#657eff"/><path d="M1359 519h6" stroke="#727cff"/><path d="M1365 519h6" stroke="#7f7aff"/><path d="M1371 519h6" stroke="#8c79ff"/><path d="M1377 519h6" stroke="#9b77ff"/><path d="M1383 519h6" stroke="#a975ff"/><path d="M1389 519h6" stroke="#b873ff"/><path d="M1395 519h6" stroke="#c772ff"/><path d="M1401 519h6" stroke="#d770ff"/><path d="M1407 519h6" stroke="#e86eff"/><path d="M1413 519h6" stroke="#f96bff"/><path d="M1419 519h6" stroke="#ff65f4"/><path d="M1425 519h6" stroke="#ff5ce5"/><path d="M1431 519h6" stroke="#ff55d6"/><path d="M1437 519h6" stroke="#ff4eca"/><path d="M1443 519h6" stroke="#ff47be"/><path d="M1449 519h6" stroke="#ff42b3"/><path d="M1455 519h6" stroke="#ff3ca9"/><path d="M1461 519h6" stroke="#ff37a0"/><path d="M1467 519h6" stroke="#ff3297"/><path d="M1473 519h6" stroke="#ff2e8f"/><path d="M1479 519h6" stroke="#ff2a87"/><path d="M1485 519h6" stroke="#ff2680"/><path d="M1491 519h6" stroke="#ff237a"/><path d="M1497 519h6" stroke="#ff1f74"/><path d="M1503 519h6" stroke="#ff1c6e"/><path d="M1509 519h6" stroke="#ff1968"/><path d="M1515 519h6" stroke="#ff1663"/><path d="M1521 519h6" stroke="#ff145e"/><path d="M1527 519h6" stroke="#ff115a"/><path d="M1533 519h6" stroke="#ff0f55"/><path d="M1539 519h6" stroke="#ff0d51"/><path d="M1545 519h6" stroke="#ff0b4d"/><path d="M1551 519h6" stroke="#ff0849"/><path d="M1557 519h6" stroke="#ff0746"/><path d="M1563 519h6" stroke="#ff0542"/><path d="M1569 519h6" stroke="#ff033f"/><path d="M1575 519h6" stroke="#ff013c"/><path d="M1581 519h6" stroke="#ff0039"/><path d="M1587 519h6" stroke="#ff0036"/><path d="M1593 519h6" stroke="#ff0033"/><path d="M1599 519h6" stroke="#ff0031"/><path d="M1605 519h6" stroke="#ff002e"/><path d="M1611 519h6" stroke="#ff002c"/><path d="M1287 525h6" stroke="#0082ff"/><path d="M1293 525h6" stroke="#0081ff"/><path d="M1299 525h6" stroke="#0180ff"/><path d="M1305 525h6" stroke="#0b7eff"/><path d="M1311 525h6" stroke="#167dff"/><path d="M1317 525h6" stroke="#207cff"/><path d="M1323 525h6" stroke="#2b7aff"/><path d="M1329 525h6" stroke="#3679ff"/><path d="M1335 525h6" stroke="#4177ff"/><path d="M1341 525h6" stroke="#4d76ff"/><path d="M1347 525h6" stroke="#5974ff"/><path d="M1353 525h6" stroke="#6572ff"/><path d="M1359 525h6" stroke="#7271ff"/><path d="M1365 525h6" stroke="#7f6fff"/><path d="M1371 525h6" stroke="#8c6dff"/><path d="M1377 525h6" stroke="#9a6bff"/><path d="M1383 525h6" stroke="#a869ff"/><path d="M1389 525h6" stroke="#b767ff"/><path d="M1395 525h6" stroke="#c665ff"/><path d="M1401 525h6" stroke="#d563ff"/><path d="M1407 525h6" stroke="#e561ff"/><path d="M1413 525h6" stroke="#f65fff"/><path d="M1419 525h6" stroke="#ff5af7"/><path d="M1425 525h6" stroke="#ff52e8"/><path d="M1431 525h6" stroke="#ff4bda"/><path d="M1437 525h6" stroke="#ff44cd"/><path d="M1443 525h6" stroke="#ff3ec1"/><path d="M1449 525h6" stroke="#ff39b6"/><path d="M1455 525h6" stroke="#ff34ac"/><path d="M1461 525h6" stroke="#ff2fa3"/><path d="M1467 525h6" stroke="#ff2b9a"/><path d="M1473 525h6" stroke="#ff2792"/><path d="M1479 525h6" stroke="#ff238a"/><path d="M1485 525h6" stroke="#ff1f83"/><path d="M1491 525h6" stroke="#ff1c7d"/><path d="M1497 525h6" stroke="#ff1976"/><path d="M1503 525h6" stroke="#ff1671"/><path d="M1509 525h6" stroke="#ff136b"/><path d="M1515 525h6" stroke="#ff1166"/><path d="M1521 525h6" stroke="#ff0e61"/><path d="M1527 525h6" stroke="#ff0c5c"/><path d="M1533 525h6" stroke="#ff0a58"/><path d="M1539 525h6" stroke="#ff0854"/><path d="M1545 525h6" stroke="#ff0650"/><path d="M1551 525h6" stroke="#ff044c"/><path d="M1557 525h6" stroke="#ff0248"/><path d="M1563 525h6" stroke="#ff0045"/><path d="M1569 525h6" stroke="#ff0041"/><path d="M1575 525h6" stroke="#ff003e"/><path d="M1581 525h6" stroke="#ff003b"/><path d="M1587 525h6" stroke="#ff0038"/><path d="M1593 525h6" stroke="#ff0035"/><path d="M1287 531h6" stroke="#0079ff"/><path d="M1293 531h6" stroke="#0077ff"/><path d="M1299 531h6" stroke="#0476ff"/><path d="M1305 531h6" stroke="#0e74ff"/><path d="M1311 531h6" stroke="#1873ff"/><path d="M1317 531h6" stroke="#2271ff"/><path d="M1323 531h6" stroke="#2d70ff"/><path d="M1329 531h6" stroke="#376eff"/><path d="M1335 531h6" stroke="#436dff"/><path d="M1341 531h6" stroke="#4e6bff"/><path d="M1347 531h6" stroke="#5a69ff"/><path d="M1353 531h6" stroke="#6667ff"/><path d="M1359 531h6" stroke="#7266ff"/><path d="M1365 531h6" stroke="#7f64ff"/><path d="M1371 531h6" stroke="#8c62ff"/><path d="M1377 531h6" stroke="#9a60ff"/><path d="M1383 531h6" stroke="#a75eff"/><path d="M1389 531h6" stroke="#b65cff"/><path d="M1395 531h6" stroke="#c45aff"/><path d="M1401 531h6" stroke="#d457ff"/><path d="M1407 531h6" stroke="#e355ff"/><path d="M1413 531h6" stroke="#f353ff"/><path d="M1419 531h6" stroke="#ff4ffa"/><path d="M1425 531h6" stroke="#ff47eb"/><path d="M1431 531h6" stroke="#ff41dd"/><path d="M1437 531h6" stroke="#ff3bd0"/><path d="M1443 531h6" stroke="#ff35c4"/><path d="M1449 531h6" stroke="#ff30b9"/><path d="M1455 531h6" stroke="#ff2caf"/><path d="M1461 531h6" stroke="#ff27a5"/><path d="M1467 531h6" stroke="#ff239d"/><path d="M1473 531h6" stroke="#ff2095"/><path d="M1479 531h6" stroke="#ff1c8d"/><path d="M1485 531h6" stroke="#ff1986"/><path d="M1491 531h6" stroke="#ff167f"/><path d="M1497 531h6" stroke="#ff1379"/><path d="M1503 531h6" stroke="#ff1073"/><path d="M1509 531h6" stroke="#ff0d6e"/><path d="M1515 531h6" stroke="#ff0b68"/><path d="M1521 531h6" stroke="#ff0964"/><path d="M1527 531h6" stroke="#ff075f"/><path d="M1533 531h6" stroke="#ff045a"/><path d="M1539 531h6" stroke="#ff0256"/><path d="M1545 531h6" stroke="#ff0152"/><path d="M1551 531h6" stroke="#ff004e"/><path d="M1557 531h6" stroke="#ff004b"/><path d="M1563 531h6" stroke="#ff0047"/><path d="M1569 531h6" stroke="#ff0044"/><path d="M1575 531h6" stroke="#ff0040"/><path d="M1581 531h6" stroke="#ff003d"/><path d="M1287 537h6" stroke="#006fff"/><path d="M1293 537h6" stroke="#006eff"/><path d="M1299 537h6" stroke="#066cff"/><path d="M1305 537h6" stroke="#106bff"/><path d="M1311 537h6" stroke="#1a69ff"/><path d="M1317 537h6" stroke="#2468ff"/><path d="M1323 537h6" stroke="#2e66ff"/><path d="M1329 537h6" stroke="#3964ff"/><path d="M1335 537h6" stroke="#4462ff"/><path d="M1341 537h6" stroke="#4f61ff"/><path d="M1347 537h6" stroke="#5b5fff"/><path d="M1353 537h6" stroke="#665dff"/><path d="M1359 537h6" stroke="#735bff"/><path d="M1365 537h6" stroke="#7f59ff"/><path d="M1371 537h6" stroke="#8c57ff"/><path d="M1377 537h6" stroke="#9955ff"/><path d="M1383 537h6" stroke="#a753ff"/><path d="M1389 537h6" stroke="#b551ff"/><path d="M1395 537h6" stroke="#c34eff"/><path d="M1401 537h6" stroke="#d24cff"/><path d="M1407 537h6" stroke="#e14aff"/><path d="M1413 537h6" stroke="#f147ff"/><path d="M1419 537h6" stroke="#ff44fd"/><path d="M1425 537h6" stroke="#ff3dee"/><path d="M1431 537h6" stroke="#ff37e0"/><path d="M1437 537h6" stroke="#ff32d3"/><path d="M1443 537h6" stroke="#ff2dc7"/><path d="M1449 537h6" stroke="#ff28bc"/><path d="M1455 537h6" stroke="#ff24b2"/><path d="M1461 537h6" stroke="#ff20a8"/><path d="M1467 537h6" stroke="#ff1ca0"/><path d="M1473 537h6" stroke="#ff1898"/><path d="M1479 537h6" stroke="#ff1590"/><path d="M1485 537h6" stroke="#ff1289"/><path d="M1491 537h6" stroke="#ff0f82"/><path d="M1497 537h6" stroke="#ff0d7c"/><path d="M1503 537h6" stroke="#ff0a76"/><path d="M1509 537h6" stroke="#ff0870"/><path d="M1515 537h6" stroke="#ff056b"/><path d="M1521 537h6" stroke="#ff0366"/><path d="M1527 537h6" stroke="#ff0161"/><path d="M1533 537h6" stroke="#ff005d"/><path d="M1539 537h6" stroke="#ff0059"/><path d="M1545 537h6" stroke="#ff0054"/><path d="M1551 537h6" stroke="#ff0051"/><path d="M1557 537h6" stroke="#ff004d"/><path d="M1563 537h6" stroke="#ff0049"/><path d="M1287 543h6" stroke="#0066ff"/><path d="M1293 543h6" stroke="#0065ff"/><path d="M1299 543h6" stroke="#0863ff"/><path d="M1305 543h6" stroke="#1261ff"/><path d="M1311 543h6" stroke="#1b60ff"/><path d="M1317 543h6" stroke="#255eff"/><path d="M1323 543h6" stroke="#305cff"/><path d="M1329 543h6" stroke="#3a5aff"/><path d="M1335 543h6" stroke="#4559ff"/><path d="M1341 543h6" stroke="#5057ff"/><path d="M1347 543h6" stroke="#5b55ff"/><path d="M1353 543h6" stroke="#6753ff"/><path d="M1359 543h6" stroke="#7351ff"/><path d="M1365 543h6" stroke="#7f4fff"/><path d="M1371 543h6" stroke="#8c4dff"/><path d="M1377 543h6" stroke="#994aff"/><path d="M1383 543h6" stroke="#a648ff"/><path d="M1389 543h6" stroke="#b446ff"/><path d="M1395 543h6" stroke="#c244ff"/><path d="M1401 543h6" stroke="#d041ff"/><path d="M1407 543h6" stroke="#df3fff"/><path d="M1413 543h6" stroke="#ee3cff"/><path d="M1419 543h6" stroke="#fe39ff"/><path d="M1425 543h6" stroke="#ff33f0"/><path d="M1431 543h6" stroke="#ff2ee2"/><path d="M1437 543h6" stroke="#ff29d6"/><path d="M1443 543h6" stroke="#ff24ca"/><path d="M1449 543h6" stroke="#ff20bf"/><path d="M1455 543h6" stroke="#ff1cb5"/><path d="M1461 543h6" stroke="#ff18ab"/><path d="M1467 543h6" stroke="#ff15a2"/><path d="M1473 543h6" stroke="#ff129a"/><path d="M1479 543h6" stroke="#ff0f93"/><path d="M1485 543h6" stroke="#ff0c8c"/><path d="M1491 543h6" stroke="#ff0985"/><path d="M1497 543h6" stroke="#ff077f"/><path d="M1503 543h6" stroke="#ff0479"/><path d="M1509 543h6" stroke="#ff0273"/><path d="M1515 543h6" stroke="#ff006e"/><path d="M1521 543h6" stroke="#ff0069"/><path d="M1527 543h6" stroke="#ff0064"/><path d="M1533 543h6" stroke="#ff005f"/><path d="M1539 543h6" stroke="#ff005b"/><path d="M1545 543h6" stroke="#ff0057"/><path d="M1281 549h6" stroke="#005fff"/><path d="M1287 549h6" stroke="#005dff"/><path d="M1293 549h6" stroke="#015cff"/><path d="M1299 549h6" stroke="#0a5aff"/><path d="M1305 549h6" stroke="#1458ff"/><path d="M1311 549h6" stroke="#1d57ff"/><path d="M1317 549h6" stroke="#2755ff"/><path d="M1323 549h6" stroke="#3153ff"/><path d="M1329 549h6" stroke="#3b51ff"/><path d="M1335 549h6" stroke="#464fff"/><path d="M1341 549h6" stroke="#514dff"/><path d="M1347 549h6" stroke="#5c4bff"/><path d="M1353 549h6" stroke="#6749ff"/><path d="M1359 549h6" stroke="#7347ff"/><path d="M1365 549h6" stroke="#7f45ff"/><path d="M1371 549h6" stroke="#8c43ff"/><path d="M1377 549h6" stroke="#9840ff"/><path d="M1383 549h6" stroke="#a53eff"/><path d="M1389 549h6" stroke="#b33cff"/><path d="M1395 549h6" stroke="#c039ff"/><path d="M1401 549h6" stroke="#ce37ff"/><path d="M1407 549h6" stroke="#dd34ff"/><path d="M1413 549h6" stroke="#ec31ff"/><path d="M1419 549h6" stroke="#fb2fff"/><path d="M1425 549h6" stroke="#ff2af3"/><path d="M1431 549h6" stroke="#ff25e5"/><path d="M1437 549h6" stroke="#ff20d8"/><path d="M1443 549h6" stroke="#ff1ccd"/><path d="M1449 549h6" stroke="#ff18c2"/><path d="M1455 549h6" stroke="#ff14b7"/><path d="M1461 549h6" stroke="#ff11ae"/><path d="M1467 549h6" stroke="#ff0ea5"/><path d="M1473 549h6" stroke="#ff0b9d"/><path d="M1479 549h6" stroke="#ff0895"/><path d="M1485 549h6" stroke="#ff058e"/><path d="M1491 549h6" stroke="#ff0387"/><path d="M1497 549h6" stroke="#ff0181"/><path d="M1503 549h6" stroke="#ff007b"/><path d="M1509 549h6" stroke="#ff0075"/><path d="M1515 549h6" stroke="#ff0070"/><path d="M1521 549h6" stroke="#ff006b"/><path d="M1527 549h6" stroke="#ff0066"/><path d="M1533 549h6" stroke="#ff0062"/><path d="M1281 555h6" stroke="#0056ff"/><path d="M1287 555h6" stroke="#0055ff"/><path d="M1293 555h6" stroke="#0353ff"/><path d="M1299 555h6" stroke="#0c51ff"/><path d="M1305 555h6" stroke="#1550ff"/><path d="M1311 555h6" stroke="#1f4eff"/><path d="M1317 555h6" stroke="#294cff"/><path d="M1323 555h6" stroke="#334aff"/><path d="M1329 555h6" stroke="#3d48ff"/><path d="M1335 555h6" stroke="#4746ff"/><path d="M1341 555h6" stroke="#5244ff"/><path d="M1347 555h6" stroke="#5d42ff"/><path d="M1353 555h6" stroke="#6840ff"/><path d="M1359 555h6" stroke="#733eff"/><path d="M1365 555h6" stroke="#7f3bff"/><path d="M1371 555h6" stroke="#8b39ff"/><path d="M1377 555h6" stroke="#9837ff"/><path d="M1383 555h6" stroke="#a534ff"/><path d="M1389 555h6" stroke="#b232ff"/><path d="M1395 555h6" stroke="#bf2fff"/><path d="M1401 555h6" stroke="#cd2dff"/><path d="M1407 555h6" stroke="#db2aff"/><path d="M1413 555h6" stroke="#ea27ff"/><path d="M1419 555h6" stroke="#f924ff"/><path d="M1425 555h6" stroke="#ff20f6"/><path d="M1431 555h6" stroke="#ff1ce8"/><path d="M1437 555h6" stroke="#ff17db"/><path d="M1443 555h6" stroke="#ff14cf"/><path d="M1449 555h6" stroke="#ff10c4"/><path d="M1455 555h6" stroke="#ff0dba"/><path d="M1461 555h6" stroke="#ff09b1"/><path d="M1467 555h6" stroke="#ff07a8"/><path d="M1473 555h6" stroke="#ff04a0"/><path d="M1479 555h6" stroke="#ff0198"/><path d="M1485 555h6" stroke="#ff0091"/><path d="M1491 555h6" stroke="#ff008a"/><path d="M1497 555h6" stroke="#ff0084"/><path d="M1503 555h6" stroke="#ff007e"/><path d="M1509 555h6" stroke="#ff0078"/><path d="M1515 555h6" stroke="#ff0073"/><path d="M1281 561h6" stroke="#004eff"/><path d="M1287 561h6" stroke="#004dff"/><path d="M1293 561h6" stroke="#054bff"/><path d="M1299 561h6" stroke="#0e49ff"/><path d="M1305 561h6" stroke="#1747ff"/><path d="M1311 561h6" stroke="#2145ff"/><path d="M1317 561h6" stroke="#2a43ff"/><path d="M1323 561h6" stroke="#3441ff"/><path d="M1329 561h6" stroke="#3e3fff"/><path d="M1335 561h6" stroke="#483dff"/><path d="M1341 561h6" stroke="#533bff"/><path d="M1347 561h6" stroke="#5d39ff"/><path d="M1353 561h6" stroke="#6837ff"/><path d="M1359 561h6" stroke="#7435ff"/><path d="M1365 561h6" stroke="#7f32ff"/><path d="M1371 561h6" stroke="#8b30ff"/><path d="M1377 561h6" stroke="#972eff"/><path d="M1383 561h6" stroke="#a42bff"/><path d="M1389 561h6" stroke="#b128ff"/><path d="M1395 561h6" stroke="#be26ff"/><path d="M1401 561h6" stroke="#cb23ff"/><path d="M1407 561h6" stroke="#d920ff"/><path d="M1413 561h6" stroke="#e81dff"/><path d="M1419 561h6" stroke="#f61bff"/><path d="M1425 561h6" stroke="#ff17f9"/><path d="M1431 561h6" stroke="#ff13eb"/><path d="M1437 561h6" stroke="#ff0fde"/><path d="M1443 561h6" stroke="#ff0bd2"/><path d="M1449 561h6" stroke="#ff08c7"/><path d="M1455 561h6" stroke="#ff05bd"/><path d="M1461 561h6" stroke="#ff02b3"/><path d="M1467 561h6" stroke="#ff00ab"/><path d="M1473 561h6" stroke="#ff00a2"/><path d="M1479 561h6" stroke="#ff009b"/><path d="M1485 561h6" stroke="#ff0093"/><path d="M1491 561h6" stroke="#ff008d"/><path d="M1497 561h6" stroke="#ff0086"/><path d="M1281 567h6" stroke="#0046ff"/><path d="M1287 567h6" stroke="#0045ff"/><path d="M1293 567h6" stroke="#0743ff"/><path d="M1299 567h6" stroke="#1041ff"/><path d="M1305 567h6" stroke="#193fff"/><path d="M1311 567h6" stroke="#223dff"/><path d="M1317 567h6" stroke="#2c3bff"/><path d="M1323 567h6" stroke="#3539ff"/><path d="M1329 567h6" stroke="#3f37ff"/><path d="M1335 567h6" stroke="#4935ff"/><path d="M1341 567h6" stroke="#5433ff"/><path d="M1347 567h6" stroke="#5e31ff"/><path d="M1353 567h6" stroke="#692eff"/><path d="M1359 567h6" stroke="#742cff"/><path d="M1365 567h6" stroke="#7f2aff"/><path d="M1371 567h6" stroke="#8b27ff"/><path d="M1377 567h6" stroke="#9725ff"/><path d="M1383 567h6" stroke="#a322ff"/><path d="M1389 567h6" stroke="#b01fff"/><path d="M1395 567h6" stroke="#bd1dff"/><path d="M1401 567h6" stroke="#ca1aff"/><path d="M1407 567h6" stroke="#d817ff"/><path d="M1413 567h6" stroke="#e614ff"/><path d="M1419 567h6" stroke="#f411ff"/><path d="M1425 567h6" stroke="#ff0efb"/><path d="M1431 567h6" stroke="#ff0aed"/><path d="M1437 567h6" stroke="#ff07e1"/><path d="M1443 567h6" stroke="#ff03d5"/><path d="M1449 567h6" stroke="#ff01ca"/><path d="M1455 567h6" stroke="#ff00c0"/><path d="M1461 567h6" stroke="#ff00b6"/><path d="M1467 567h6" stroke="#ff00ad"/><path d="M1473 567h6" stroke="#ff00a5"/><path d="M1479 567h6" stroke="#ff009d"/><path d="M1275 573h6" stroke="#0040ff"/><path d="M1281 573h6" stroke="#003fff"/><path d="M1287 573h6" stroke="#013dff"/><path d="M1293 573h6" stroke="#093bff"/><path d="M1299 573h6" stroke="#1239ff"/><path d="M1305 573h6" stroke="#1b37ff"/><path d="M1311 573h6" stroke="#2435ff"/><path d="M1317 573h6" stroke="#2d33ff"/><path d="M1323 573h6" stroke="#3731ff"/><path d="M1329 573h6" stroke="#402fff"/><path d="M1335 573h6" stroke="#4a2dff"/><path d="M1341 573h6" stroke="#542aff"/><path d="M1347 573h6" stroke="#5f28ff"/><path d="M1353 573h6" stroke="#6926ff"/><path d="M1359 573h6" stroke="#7424ff"/><path d="M1365 573h6" stroke="#7f21ff"/><path d="M1371 573h6" stroke="#8b1fff"/><path d="M1377 573h6" stroke="#971cff"/><path d="M1383 573h6" stroke="#a319ff"/><path d="M1389 573h6" stroke="#af17ff"/><path d="M1395 573h6" stroke="#bc14ff"/><path d="M1401 573h6" stroke="#c911ff"/><path d="M1407 573h6" stroke="#d60eff"/><path d="M1413 573h6" stroke="#e40bff"/><path d="M1419 573h6" stroke="#f208ff"/><path d="M1425 573h6" stroke="#ff05fe"/><path d="M1431 573h6" stroke="#ff02f0"/><path d="M1437 573h6" stroke="#ff00e3"/><path d="M1443 573h6" stroke="#ff00d7"/><path d="M1449 573h6" stroke="#ff00cc"/><path d="M1455 573h6" stroke="#ff00c2"/><path d="M1461 573h6" stroke="#ff00b9"/><path d="M1467 573h6" stroke="#ff00b0"/><path d="M1275 579h6" stroke="#0039ff"/><path d="M1281 579h6" stroke="#0037ff"/><path d="M1287 579h6" stroke="#0335ff"/><path d="M1293 579h6" stroke="#0b33ff"/><path d="M1299 579h6" stroke="#1431ff"/><path d="M1305 579h6" stroke="#1c2fff"/><path d="M1311 579h6" stroke="#252dff"/><path d="M1317 579h6" stroke="#2e2bff"/><path d="M1323 579h6" stroke="#3829ff"/><path d="M1329 579h6" stroke="#4127ff"/><path d="M1335 579h6" stroke="#4b25ff"/><path d="M1341 579h6" stroke="#5523ff"/><path d="M1347 579h6" stroke="#5f20ff"/><path d="M1353 579h6" stroke="#6a1eff"/><path d="M1359 579h6" stroke="#751bff"/><path d="M1365 579h6" stroke="#7f19ff"/><path d="M1371 579h6" stroke="#8b16ff"/><path d="M1377 579h6" stroke="#9614ff"/><path d="M1383 579h6" stroke="#a211ff"/><path d="M1389 579h6" stroke="#ae0eff"/><path d="M1395 579h6" stroke="#bb0bff"/><path d="M1401 579h6" stroke="#c709ff"/><path d="M1407 579h6" stroke="#d406ff"/><path d="M1413 579h6" stroke="#e203ff"/><path d="M1419 579h6" stroke="#ef00ff"/><path d="M1425 579h6" stroke="#fe00ff"/><path d="M1431 579h6" stroke="#ff00f3"/><path d="M1437 579h6" stroke="#ff00e6"/><path d="M1443 579h6" stroke="#ff00da"/><path d="M1449 579h6" stroke="#ff00cf"/><path d="M1275 585h6" stroke="#0032ff"/><path d="M1281 585h6" stroke="#0030ff"/><path d="M1287 585h6" stroke="#042eff"/><path d="M1293 585h6" stroke="#0d2cff"/><path d="M1299 585h6" stroke="#152aff"/><path d="M1305 585h6" stroke="#1e28ff"/><path d="M1311 585h6" stroke="#2726ff"/><path d="M1317 585h6" stroke="#3024ff"/><path d="M1323 585h6" stroke="#3922ff"/><path d="M1329 585h6" stroke="#421fff"/><path d="M1335 585h6" stroke="#4c1dff"/><path d="M1341 585h6" stroke="#561bff"/><path d="M1347 585h6" stroke="#6018ff"/><path d="M1353 585h6" stroke="#6a16ff"/><path d="M1359 585h6" stroke="#7514ff"/><path d="M1365 585h6" stroke="#8011ff"/><path d="M1371 585h6" stroke="#8b0eff"/><path d="M1377 585h6" stroke="#960cff"/><path d="M1383 585h6" stroke="#a109ff"/><path d="M1389 585h6" stroke="#ad06ff"/><path d="M1395 585h6" stroke="#b903ff"/><path d="M1401 585h6" stroke="#c600ff"/><path d="M1407 585h6" stroke="#d300ff"/><path d="M1413 585h6" stroke="#e000ff"/><path d="M1419 585h6" stroke="#ed00ff"/><path d="M1425 585h6" stroke="#fb00ff"/><path d="M1431 585h6" stroke="#ff00f5"/><path d="M1275 591h6" stroke="#002bff"/><path d="M1281 591h6" stroke="#0029ff"/><path d="M1287 591h6" stroke="#0627ff"/><path d="M1293 591h6" stroke="#0f25ff"/><path d="M1299 591h6" stroke="#1723ff"/><path d="M1305 591h6" stroke="#1f21ff"/><path d="M1311 591h6" stroke="#281fff"/><path d="M1317 591h6" stroke="#311dff"/><path d="M1323 591h6" stroke="#3a1aff"/><path d="M1329 591h6" stroke="#4318ff"/><path d="M1335 591h6" stroke="#4d16ff"/><path d="M1341 591h6" stroke="#5713ff"/><path d="M1347 591h6" stroke="#6011ff"/><path d="M1353 591h6" stroke="#6b0eff"/><path d="M1359 591h6" stroke="#750cff"/><path d="M1365 591h6" stroke="#8009ff"/><path d="M1371 591h6" stroke="#8a07ff"/><path d="M1377 591h6" stroke="#9604ff"/><path d="M1383 591h6" stroke="#a101ff"/><path d="M1389 591h6" stroke="#ad00ff"/><path d="M1395 591h6" stroke="#b800ff"/><path d="M1401 591h6" stroke="#c500ff"/><path d="M1407 591h6" stroke="#d100ff"/><path d="M1413 591h6" stroke="#de00ff"/><path d="M1419 591h6" stroke="#eb00ff"/><path d="M1269 597h6" stroke="#0026ff"/><path d="M1275 597h6" stroke="#0024ff"/><path d="M1281 597h6" stroke="#0022ff"/><path d="M1287 597h6" stroke="#0820ff"/><path d="M1293 597h6" stroke="#101eff"/><path d="M1299 597h6" stroke="#191cff"/><path d="M1305 597h6" stroke="#211aff"/><path d="M1311 597h6" stroke="#2a18ff"/><path d="M1317 597h6" stroke="#3216ff"/><path d="M1323 597h6" stroke="#3b13ff"/><path d="M1329 597h6" stroke="#4411ff"/><path d="M1335 597h6" stroke="#4e0fff"/><path d="M1341 597h6" stroke="#570cff"/><path d="M1347 597h6" stroke="#610aff"/><path d="M1353 597h6" stroke="#6b07ff"/><path d="M1359 597h6" stroke="#7505ff"/><path d="M1365 597h6" stroke="#8002ff"/><path d="M1371 597h6" stroke="#8a00ff"/><path d="M1377 597h6" stroke="#9500ff"/><path d="M1383 597h6" stroke="#a000ff"/><path d="M1389 597h6" stroke="#ac00ff"/><path d="M1395 597h6" stroke="#b800ff"/><path d="M1401 597h6" stroke="#c400ff"/><path d="M1269 603h6" stroke="#001fff"/><path d="M1275 603h6" stroke="#001dff"/><path d="M1281 603h6" stroke="#021bff"/><path d="M1287 603h6" stroke="#0a19ff"/><path d="M1293 603h6" stroke="#1217ff"/><path d="M1299 603h6" stroke="#1a15ff"/><path d="M1305 603h6" stroke="#2213ff"/><path d="M1311 603h6" stroke="#2b11ff"/><path d="M1317 603h6" stroke="#340fff"/><path d="M1323 603h6" stroke="#3c0cff"/><path d="M1329 603h6" stroke="#450aff"/><path d="M1335 603h6" stroke="#4f08ff"/><path d="M1341 603h6" stroke="#5805ff"/><path d="M1347 603h6" stroke="#6203ff"/><path d="M1353 603h6" stroke="#6b00ff"/><path d="M1359 603h6" stroke="#7500ff"/><path d="M1365 603h6" stroke="#8000ff"/><path d="M1371 603h6" stroke="#8a00ff"/><path d="M1377 603h6" stroke="#9500ff"/><path d="M1383 603h6" stroke="#a000ff"/><path d="M1269 609h6" stroke="#0019ff"/><path d="M1275 609h6" stroke="#0017ff"/><path d="M1281 609h6" stroke="#0415ff"/><path d="M1287 609h6" stroke="#0c13ff"/><path d="M1293 609h6" stroke="#1411ff"/><path d="M1299 609h6" stroke="#1c0fff"/><path d="M1305 609h6" stroke="#240dff"/><path d="M1311 609h6" stroke="#2c0aff"/><path d="M1317 609h6" stroke="#3508ff"/><path d="M1323 609h6" stroke="#3d06ff"/><path d="M1329 609h6" stroke="#4603ff"/><path d="M1335 609h6" stroke="#4f01ff"/><path d="M1341 609h6" stroke="#5900ff"/><path d="M1347 609h6" stroke="#6200ff"/><path d="M1353 609h6" stroke="#6c00ff"/><path d="M1359 609h6" stroke="#7600ff"/><path d="M1365 609h6" stroke="#8000ff"/><path d="M1371 609h6" stroke="#8a00ff"/><path d="M1269 615h6" stroke="#0013ff"/><path d="M1275 615h6" stroke="#0011ff"/><path d="M1281 615h6" stroke="#060fff"/><path d="M1287 615h6" stroke="#0d0dff"/><path d="M1293 615h6" stroke="#150bff"/><path d="M1299 615h6" stroke="#1d08ff"/><path d="M1305 615h6" stroke="#2506ff"/><path d="M1311 615h6" stroke="#2d04ff"/><path d="M1317 615h6" stroke="#3602ff"/><path d="M1323 615h6" stroke="#3e00ff"/><path d="M1329 615h6" stroke="#4700ff"/><path d="M1335 615h6" stroke="#5000ff"/><path d="M1341 615h6" stroke="#5900ff"/><path d="M1347 615h6" stroke="#6300ff"/><path d="M1353 615h6" stroke="#6c00ff"/><path d="M1263 621h6" stroke="#000fff"/><path d="M1269 621h6" stroke="#000dff"/><path d="M1275 621h6" stroke="#000bff"/><path d="M1281 621h6" stroke="#0709ff"/><path d="M1287 621h6" stroke="#0f07ff"/><path d="M1293 621h6" stroke="#1704ff"/><path d="M1299 621h6" stroke="#1e02ff"/><path d="M1305 621h6" stroke="#2600ff"/><path d="M1311 621h6" stroke="#2f00ff"/><path d="M1317 621h6" stroke="#3700ff"/><path d="M1323 621h6" stroke="#3f00ff"/><path d="M1329 621h6" stroke="#4800ff"/><path d="M1335 621h6" stroke="#5100ff"/><path d="M1263 627h6" stroke="#0009ff"/><path d="M1269 627h6" stroke="#0007ff"/><path d="M1275 627h6" stroke="#0205ff"/><path d="M1281 627h6" stroke="#0903ff"/><path d="M1287 627h6" stroke="#1101ff"/><path d="M1293 627h6" stroke="#1800ff"/><path d="M1299 627h6" stroke="#2000ff"/><path d="M1305 627h6" stroke="#2800ff"/><path d="M1311 627h6" stroke="#3000ff"/><path d="M1317 627h6" stroke="#3800ff"/><path d="M1323 627h6" stroke="#4000ff"/><path d="M1263 633h6" stroke="#0003ff"/><path d="M1269 633h6" stroke="#0001ff"/><path d="M1275 633h6" stroke="#0300ff"/><path d="M1281 633h6" stroke="#0b00ff"/><path d="M1287 633h6" stroke="#1200ff"/><path d="M1293 633h6" stroke="#1a00ff"/><path d="M1299 633h6" stroke="#2100ff"/><path d="M1305 633h6" stroke="#2900ff"/><path d="M1263 639h12" stroke="#0000ff"/><path d="M1275 639h6" stroke="#0500ff"/><path d="M1281 639h6" stroke="#0c00ff"/><path d="M1287 639h6" stroke="#1400ff"/></g></g><path d="M1152 147V671H1842V147Z" stroke="#9c9c9c" stroke-width="2" fill="none"/><path d="M1145 670.6H1152" stroke="#ccc" stroke-width="1.5"/><text x="1144.5" y="677.8" font-size="16" fill="#e2e2e2" text-anchor="end" textLength="8.2" lengthAdjust="spacingAndGlyphs">0</text><path d="M1151.8 671V677" stroke="#ccc" stroke-width="1.5"/><text x="1151.8" y="694.0" font-size="16" fill="#e2e2e2" text-anchor="middle" textLength="8.2" lengthAdjust="spacingAndGlyphs">0</text><path d="M1145 608.3H1152" stroke="#ccc" stroke-width="1.5"/><text x="1144.5" y="615.5" font-size="16" fill="#e2e2e2" text-anchor="end" textLength="20.5" lengthAdjust="spacingAndGlyphs">0,1</text><path d="M1234.0 671V677" stroke="#ccc" stroke-width="1.5"/><text x="1234.0" y="694.0" font-size="16" fill="#e2e2e2" text-anchor="middle" textLength="20.5" lengthAdjust="spacingAndGlyphs">0,1</text><path d="M1145 546.0H1152" stroke="#ccc" stroke-width="1.5"/><text x="1144.5" y="553.2" font-size="16" fill="#e2e2e2" text-anchor="end" textLength="20.5" lengthAdjust="spacingAndGlyphs">0,2</text><path d="M1316.2 671V677" stroke="#ccc" stroke-width="1.5"/><text x="1316.2" y="694.0" font-size="16" fill="#e2e2e2" text-anchor="middle" textLength="20.5" lengthAdjust="spacingAndGlyphs">0,2</text><path d="M1145 483.7H1152" stroke="#ccc" stroke-width="1.5"/><text x="1144.5" y="490.9" font-size="16" fill="#e2e2e2" text-anchor="end" textLength="20.5" lengthAdjust="spacingAndGlyphs">0,3</text><path d="M1398.4 671V677" stroke="#ccc" stroke-width="1.5"/><text x="1398.4" y="694.0" font-size="16" fill="#e2e2e2" text-anchor="middle" textLength="20.5" lengthAdjust="spacingAndGlyphs">0,3</text><path d="M1145 421.4H1152" stroke="#ccc" stroke-width="1.5"/><text x="1144.5" y="428.6" font-size="16" fill="#e2e2e2" text-anchor="end" textLength="20.5" lengthAdjust="spacingAndGlyphs">0,4</text><path d="M1480.6 671V677" stroke="#ccc" stroke-width="1.5"/><text x="1480.6" y="694.0" font-size="16" fill="#e2e2e2" text-anchor="middle" textLength="20.5" lengthAdjust="spacingAndGlyphs">0,4</text><path d="M1145 359.1H1152" stroke="#ccc" stroke-width="1.5"/><text x="1144.5" y="366.3" font-size="16" fill="#e2e2e2" text-anchor="end" textLength="20.5" lengthAdjust="spacingAndGlyphs">0,5</text><path d="M1562.8 671V677" stroke="#ccc" stroke-width="1.5"/><text x="1562.8" y="694.0" font-size="16" fill="#e2e2e2" text-anchor="middle" textLength="20.5" lengthAdjust="spacingAndGlyphs">0,5</text><path d="M1145 296.8H1152" stroke="#ccc" stroke-width="1.5"/><text x="1144.5" y="304.0" font-size="16" fill="#e2e2e2" text-anchor="end" textLength="20.5" lengthAdjust="spacingAndGlyphs">0,6</text><path d="M1645.0 671V677" stroke="#ccc" stroke-width="1.5"/><text x="1645.0" y="694.0" font-size="16" fill="#e2e2e2" text-anchor="middle" textLength="20.5" lengthAdjust="spacingAndGlyphs">0,6</text><path d="M1145 234.5H1152" stroke="#ccc" stroke-width="1.5"/><text x="1144.5" y="241.7" font-size="16" fill="#e2e2e2" text-anchor="end" textLength="20.5" lengthAdjust="spacingAndGlyphs">0,7</text><path d="M1727.2 671V677" stroke="#ccc" stroke-width="1.5"/><text x="1727.2" y="694.0" font-size="16" fill="#e2e2e2" text-anchor="middle" textLength="20.5" lengthAdjust="spacingAndGlyphs">0,7</text><path d="M1145 172.2H1152" stroke="#ccc" stroke-width="1.5"/><text x="1144.5" y="179.4" font-size="16" fill="#e2e2e2" text-anchor="end" textLength="20.5" lengthAdjust="spacingAndGlyphs">0,8</text><path d="M1809.4 671V677" stroke="#ccc" stroke-width="1.5"/><text x="1809.4" y="694.0" font-size="16" fill="#e2e2e2" text-anchor="middle" textLength="20.5" lengthAdjust="spacingAndGlyphs">0,8</text><rect x="1362.0" y="232.3" width="14" height="14" fill="rgba(255,255,255,0.08)" stroke="#f4f4f4" stroke-width="1.8"/><rect x="1369.8" y="281.9" width="14" height="14" fill="rgba(255,255,255,0.08)" stroke="#f4f4f4" stroke-width="1.8"/><rect x="1378.4" y="324.0" width="14" height="14" fill="rgba(255,255,255,0.08)" stroke="#f4f4f4" stroke-width="1.8"/><rect x="1385.4" y="367.0" width="14" height="14" fill="rgba(255,255,255,0.08)" stroke="#f4f4f4" stroke-width="1.8"/><rect x="1392.8" y="411.0" width="14" height="14" fill="rgba(255,255,255,0.08)" stroke="#f4f4f4" stroke-width="1.8"/><rect x="1504.6" y="328.0" width="14" height="14" fill="rgba(255,255,255,0.08)" stroke="#f4f4f4" stroke-width="1.8"/><rect x="1482.7" y="355.7" width="14" height="14" fill="rgba(255,255,255,0.08)" stroke="#f4f4f4" stroke-width="1.8"/><rect x="1461.6" y="381.5" width="14" height="14" fill="rgba(255,255,255,0.08)" stroke="#f4f4f4" stroke-width="1.8"/><rect x="1442.4" y="406.3" width="14" height="14" fill="rgba(255,255,255,0.08)" stroke="#f4f4f4" stroke-width="1.8"/><rect x="1422.5" y="430.0" width="14" height="14" fill="rgba(255,255,255,0.08)" stroke="#f4f4f4" stroke-width="1.8"/><rect x="1308.0" y="455.9" width="14" height="14" fill="rgba(255,255,255,0.08)" stroke="#f4f4f4" stroke-width="1.8"/><rect x="1326.8" y="455.9" width="14" height="14" fill="rgba(255,255,255,0.08)" stroke="#f4f4f4" stroke-width="1.8"/><rect x="1345.2" y="455.9" width="14" height="14" fill="rgba(255,255,255,0.08)" stroke="#f4f4f4" stroke-width="1.8"/><rect x="1364.0" y="455.9" width="14" height="14" fill="rgba(255,255,255,0.08)" stroke="#f4f4f4" stroke-width="1.8"/><rect x="1382.7" y="455.9" width="14" height="14" fill="rgba(255,255,255,0.08)" stroke="#f4f4f4" stroke-width="1.8"/><rect x="1461.2" y="458.2" width="14" height="14" fill="rgba(255,255,255,0.08)" stroke="#f4f4f4" stroke-width="1.8"/><rect x="1517.0" y="459.4" width="14" height="14" fill="rgba(255,255,255,0.08)" stroke="#f4f4f4" stroke-width="1.8"/><rect x="1579.6" y="460.6" width="14" height="14" fill="rgba(255,255,255,0.08)" stroke="#f4f4f4" stroke-width="1.8"/><rect x="1635.0" y="462.0" width="14" height="14" fill="rgba(255,255,255,0.08)" stroke="#f4f4f4" stroke-width="1.8"/><rect x="1702.6" y="462.5" width="14" height="14" fill="rgba(255,255,255,0.08)" stroke="#f4f4f4" stroke-width="1.8"/><rect x="1404.6" y="479.7" width="14" height="14" fill="rgba(255,255,255,0.08)" stroke="#f4f4f4" stroke-width="1.8"/><rect x="1408.9" y="502.0" width="14" height="14" fill="rgba(255,255,255,0.08)" stroke="#f4f4f4" stroke-width="1.8"/><rect x="1413.5" y="523.9" width="14" height="14" fill="rgba(255,255,255,0.08)" stroke="#f4f4f4" stroke-width="1.8"/><rect x="1416.7" y="545.7" width="14" height="14" fill="rgba(255,255,255,0.08)" stroke="#f4f4f4" stroke-width="1.8"/><rect x="1420.2" y="569.6" width="14" height="14" fill="rgba(255,255,255,0.08)" stroke="#f4f4f4" stroke-width="1.8"/><rect x="1374.0" y="491.0" width="14" height="14" fill="rgba(255,255,255,0.08)" stroke="#f4f4f4" stroke-width="1.8"/><rect x="1348.0" y="525.4" width="14" height="14" fill="rgba(255,255,255,0.08)" stroke="#f4f4f4" stroke-width="1.8"/><rect x="1321.8" y="557.0" width="14" height="14" fill="rgba(255,255,255,0.08)" stroke="#f4f4f4" stroke-width="1.8"/><rect x="1295.6" y="590.7" width="14" height="14" fill="rgba(255,255,255,0.08)" stroke="#f4f4f4" stroke-width="1.8"/><rect x="1267.0" y="625.8" width="14" height="14" fill="rgba(255,255,255,0.08)" stroke="#f4f4f4" stroke-width="1.8"/><circle cx="1366.6" cy="239.3" r="5" fill="#20c020" stroke="#1a1416" stroke-width="1.5"/><circle cx="1375.2" cy="287.7" r="5" fill="#5fb75f" stroke="#1a1416" stroke-width="1.5"/><circle cx="1382.3" cy="328.0" r="5" fill="#74b474" stroke="#1a1416" stroke-width="1.5"/><circle cx="1392.4" cy="371.3" r="5" fill="#89b189" stroke="#1a1416" stroke-width="1.5"/><circle cx="1401.0" cy="418.0" r="5" fill="#97af97" stroke="#1a1416" stroke-width="1.5"/><circle cx="1510.0" cy="336.6" r="5" fill="#c8c800" stroke="#1a1416" stroke-width="1.5"/><circle cx="1489.7" cy="362.7" r="5" fill="#bbbb4d" stroke="#1a1416" stroke-width="1.5"/><circle cx="1471.0" cy="387.3" r="5" fill="#b7b767" stroke="#1a1416" stroke-width="1.5"/><circle cx="1450.6" cy="413.3" r="5" fill="#b3b381" stroke="#1a1416" stroke-width="1.5"/><circle cx="1430.3" cy="437.0" r="5" fill="#b0b092" stroke="#1a1416" stroke-width="1.5"/><circle cx="1315.0" cy="462.5" r="5" fill="#00c0c0" stroke="#1a1416" stroke-width="1.5"/><circle cx="1333.8" cy="462.5" r="5" fill="#4db7b7" stroke="#1a1416" stroke-width="1.5"/><circle cx="1352.2" cy="462.5" r="5" fill="#67b4b4" stroke="#1a1416" stroke-width="1.5"/><circle cx="1371.0" cy="462.5" r="5" fill="#81b1b1" stroke="#1a1416" stroke-width="1.5"/><circle cx="1389.7" cy="462.5" r="5" fill="#92afaf" stroke="#1a1416" stroke-width="1.5"/><circle cx="1469.4" cy="464.5" r="5" fill="#b39292" stroke="#1a1416" stroke-width="1.5"/><circle cx="1530.3" cy="464.5" r="5" fill="#b98181" stroke="#1a1416" stroke-width="1.5"/><circle cx="1588.5" cy="465.6" r="5" fill="#c06767" stroke="#1a1416" stroke-width="1.5"/><circle cx="1642.0" cy="467.6" r="5" fill="#c84d4d" stroke="#1a1416" stroke-width="1.5"/><circle cx="1703.8" cy="467.6" r="5" fill="#e00000" stroke="#1a1416" stroke-width="1.5"/><circle cx="1412.7" cy="486.0" r="5" fill="#af92af" stroke="#1a1416" stroke-width="1.5"/><circle cx="1417.4" cy="507.4" r="5" fill="#b181b1" stroke="#1a1416" stroke-width="1.5"/><circle cx="1421.3" cy="530.9" r="5" fill="#b467b4" stroke="#1a1416" stroke-width="1.5"/><circle cx="1425.6" cy="551.2" r="5" fill="#b74db7" stroke="#1a1416" stroke-width="1.5"/><circle cx="1429.5" cy="574.6" r="5" fill="#c000c0" stroke="#1a1416" stroke-width="1.5"/><circle cx="1382.3" cy="497.7" r="5" fill="#9797b3" stroke="#1a1416" stroke-width="1.5"/><circle cx="1355.0" cy="532.4" r="5" fill="#8989b9" stroke="#1a1416" stroke-width="1.5"/><circle cx="1327.6" cy="566.8" r="5" fill="#7474c0" stroke="#1a1416" stroke-width="1.5"/><circle cx="1302.6" cy="598.4" r="5" fill="#5f5fc8" stroke="#1a1416" stroke-width="1.5"/><circle cx="1274.0" cy="634.4" r="5" fill="#2020e0" stroke="#1a1416" stroke-width="1.5"/><rect x="1401.8" y="458.2" width="14" height="14" fill="rgba(255,255,255,0.3)" stroke="#111" stroke-width="2"/><circle cx="1410" cy="463.7" r="5.5" fill="#fff" stroke="#222" stroke-width="1.4"/><defs><clipPath id="ci"><rect x="1603" y="156" width="231" height="193"/></clipPath><linearGradient id="ig" x1="0" y1="0" x2="1" y2="1"><stop offset="0" stop-color="#b8ff00"/><stop offset="0.5" stop-color="#ffff00"/><stop offset="1" stop-color="#ffc000"/></linearGradient><linearGradient id="id" x1="0" y1="0" x2="1" y2="1"><stop offset="0" stop-color="#6a9a00"/><stop offset="0.6" stop-color="#9a9400"/><stop offset="1" stop-color="#a07000"/></linearGradient></defs><g clip-path="url(#ci)"><rect x="1603" y="156" width="231" height="193" fill="url(#ig)"/><path d="M1600 163.5L1838 341L1838 150L1600 150Z" fill="url(#id)"/><path d="M1712 150L1840 257.5L1840 150Z" fill="#252525"/></g><rect x="1602.5" y="155" width="232.5" height="195" fill="none" stroke="#8c8c8c" stroke-width="2"/><rect x="1710.5" y="243.6" width="14" height="14" fill="none" stroke="#f4f4f4" stroke-width="2"/><circle cx="1715.5" cy="260.4" r="4.6" fill="#a0a030" stroke="#1a1a1a" stroke-width="1.6"/></svg><div class="a" style="left:0;top:969px;width:1920px;height:71px;background:linear-gradient(#4a4a4a,#2a2a2a)"></div><div class="a" style="left:0;top:969px;width:915px;height:71px;background:#2e2e2e"></div><div class="a" style="left:1px;top:970px;width:51px;height:68px;border-radius:5px;background:linear-gradient(#a4a4a4,#8a8a8a 40%,#6c6c6c)"></div><div class="a" style="left:17px;top:971px;width:18px;height:18px;border-radius:50%;background:radial-gradient(circle at 50% 30%,#777,#9a9a9a)"></div><svg class="a" style="left:17px;top:971px" width="18" height="18"><path d="M4 12h10l-5-6z" fill="#1a1a1a"/></svg><div class="a" style="left:7px;top:999px;width:40px;height:35px;border-radius:4px;background:#ffff00;box-shadow:0 0 0 1px #8a8a30"></div><div class="a" style="left:59.0px;top:970px;width:170px;height:68px;border-radius:5px;background:linear-gradient(#a8a8a8,#8e8e8e 50%,#666)"></div><div class="a" style="left:65.0px;top:976.5px;width:158px;height:40px;border-radius:4px;background:#c2c2a0;box-shadow:0 0 0 1px #7e7e56"></div><div class="a" style="left:59.0px;top:1023.5px;width:170px;text-align:center;font-size:12px;font-weight:bold;color:#2a2a2a">20%</div><div class="a" style="left:230.6px;top:970px;width:170px;height:68px;border-radius:5px;background:linear-gradient(#a8a8a8,#8e8e8e 50%,#666)"></div><div class="a" style="left:236.6px;top:976.5px;width:158px;height:40px;border-radius:4px;background:#c2c282;box-shadow:0 0 0 1px #7e7e56"></div><div class="a" style="left:230.6px;top:1023.5px;width:170px;text-align:center;font-size:12px;font-weight:bold;color:#2a2a2a">40%</div><div class="a" style="left:402.2px;top:970px;width:170px;height:68px;border-radius:5px;background:linear-gradient(#a8a8a8,#8e8e8e 50%,#666)"></div><div class="a" style="left:408.2px;top:976.5px;width:158px;height:40px;border-radius:4px;background:#c2c062;box-shadow:0 0 0 1px #7e7e56"></div><div class="a" style="left:402.2px;top:1023.5px;width:170px;text-align:center;font-size:12px;font-weight:bold;color:#2a2a2a">60%</div><div class="a" style="left:573.8px;top:970px;width:170px;height:68px;border-radius:5px;background:linear-gradient(#a8a8a8,#8e8e8e 50%,#666)"></div><div class="a" style="left:579.8px;top:976.5px;width:158px;height:40px;border-radius:4px;background:#c4c042;box-shadow:0 0 0 1px #7e7e56"></div><div class="a" style="left:573.8px;top:1023.5px;width:170px;text-align:center;font-size:12px;font-weight:bold;color:#2a2a2a">80%</div><div class="a" style="left:746.4px;top:970px;width:170px;height:68.5px;border-radius:5px;background:linear-gradient(#1a1a1a,#242424 50%,#303030)"></div><div class="a" style="left:751.4px;top:975px;width:158px;height:41px;border-radius:5px;background:#c6c300;box-shadow:0 0 0 1px #6a6a10"></div><div class="a" style="left:745.4px;top:1023.5px;width:170px;text-align:center;font-size:12px;font-weight:bold;color:#f4f4f4">100%</div><div class="a" style="left:1565px;top:970px;width:54px;height:70px;border-radius:5px 5px 0 0;background:linear-gradient(#a4a4a4,#777)"></div><div class="a" style="left:1565px;top:989.5px;width:54px;height:1.5px;background:#3a3a3a"></div><div class="a" style="left:1581px;top:972px;width:20px;height:16px;border-radius:50%;background:radial-gradient(circle at 50% 30%,#888,#a8a8a8)"></div><svg class="a" style="left:1565px;top:970px" width="54" height="70"><path d="M21.5 14h11l-5.5-5z" fill="#1a1a1a"/><rect x="11" y="29" width="32" height="33" rx="5" fill="#c8c8c8" stroke="#1e1e1e" stroke-width="3"/><rect x="19.5" y="37" width="15.5" height="15.5" fill="#000"/></svg><div class="a" style="left:1620.0px;top:970px;width:51px;height:34px;background:linear-gradient(#a8a8a8,#7a7a7a);border-right:1px solid #333"></div><div class="a" style="left:1634.5px;top:976px;width:22px;height:22px;border-radius:50%;background:radial-gradient(circle at 50% 30%,#8a8a8a,#a4a4a4)"></div><div class="a" style="left:1671.4px;top:970px;width:51px;height:34px;background:linear-gradient(#a8a8a8,#7a7a7a);border-right:1px solid #333"></div><div class="a" style="left:1685.9px;top:976px;width:22px;height:22px;border-radius:50%;background:radial-gradient(circle at 50% 30%,#8a8a8a,#a4a4a4)"></div><div class="a" style="left:1722.8px;top:970px;width:51px;height:34px;background:linear-gradient(#a8a8a8,#7a7a7a);border-right:1px solid #333"></div><div class="a" style="left:1737.3px;top:976px;width:22px;height:22px;border-radius:50%;background:radial-gradient(circle at 50% 30%,#8a8a8a,#a4a4a4)"></div><div class="a" style="left:1774.2px;top:970px;width:51px;height:34px;background:linear-gradient(#a8a8a8,#7a7a7a);border-right:1px solid #333"></div><div class="a" style="left:1788.7px;top:976px;width:22px;height:22px;border-radius:50%;background:radial-gradient(circle at 50% 30%,#8a8a8a,#a4a4a4)"></div><div class="a" style="left:1825.6px;top:970px;width:51px;height:34px;background:linear-gradient(#a8a8a8,#7a7a7a);border-right:1px solid #333"></div><div class="a" style="left:1840.1px;top:976px;width:22px;height:22px;border-radius:50%;background:radial-gradient(circle at 50% 30%,#8a8a8a,#a4a4a4)"></div><div class="a" style="left:1877px;top:970px;width:43px;height:34px;background:#2a2a2a"></div><div class="a" style="left:1890px;top:975px;width:22px;height:22px;border-radius:50%;background:#222"></div><svg class="a" style="left:1620px;top:970px" width="300" height="70">
<rect x="21.5" y="12.5" width="9" height="9" fill="#2a2a2a"/>
<path d="M74 11v12l10-6z" fill="#2a2a2a"/>
<path d="M125 11h-2v12h2M133 11h2v12h-2" stroke="#2a2a2a" stroke-width="2" fill="none"/><circle cx="127.5" cy="17" r="1" fill="#2a2a2a"/><circle cx="130.5" cy="17" r="1" fill="#2a2a2a"/>
<path d="M172 17c0-3 2-4 4-4s4 2 5 4 3 4 5 4 4-1 4-4-2-4-4-4-4 2-5 4-3 4-5 4-4-1-4-4z" stroke="#2a2a2a" stroke-width="2.2" fill="none"/>
<path d="M224 15a6 6 0 0 1 10-2l1-2v5h-5l2-1.5a4 4 0 0 0-6 1.5zM236 19a6 6 0 0 1-10 2l-1 2v-5h5l-2 1.5a4 4 0 0 0 6-1.5z" fill="#2a2a2a"/>
</svg><div class="a" style="left:1620px;top:1005px;width:153px;height:35px;background:linear-gradient(#b0b0b0,#8a8a8a);border-radius:3px 0 0 0"></div><div class="a" style="left:1774px;top:1005px;width:146px;height:35px;background:linear-gradient(#b0b0b0,#8a8a8a)"></div><div class="a" style="left:1643px;top:1010px;width:22px;height:22px;border-radius:50%;background:radial-gradient(circle at 50% 30%,#8a8a8a,#a8a8a8)"></div><div class="a" style="left:1885px;top:1010px;width:22px;height:22px;border-radius:50%;background:radial-gradient(circle at 50% 30%,#8a8a8a,#a8a8a8)"></div><div class="a" style="left:1646px;top:1006px;font-size:27px;color:#2a2a2a">&#171;</div><div class="a" style="left:1888px;top:1006px;font-size:27px;color:#2a2a2a">&#187;</div><div class="a" style="left:1684px;top:1008px;font-size:24px;font-weight:bold;color:#2e2e2e">Back</div><div class="a" style="left:1804px;top:1008px;font-size:24px;font-weight:bold;color:#2e2e2e;letter-spacing:1.8px">Next</div></body></html>
